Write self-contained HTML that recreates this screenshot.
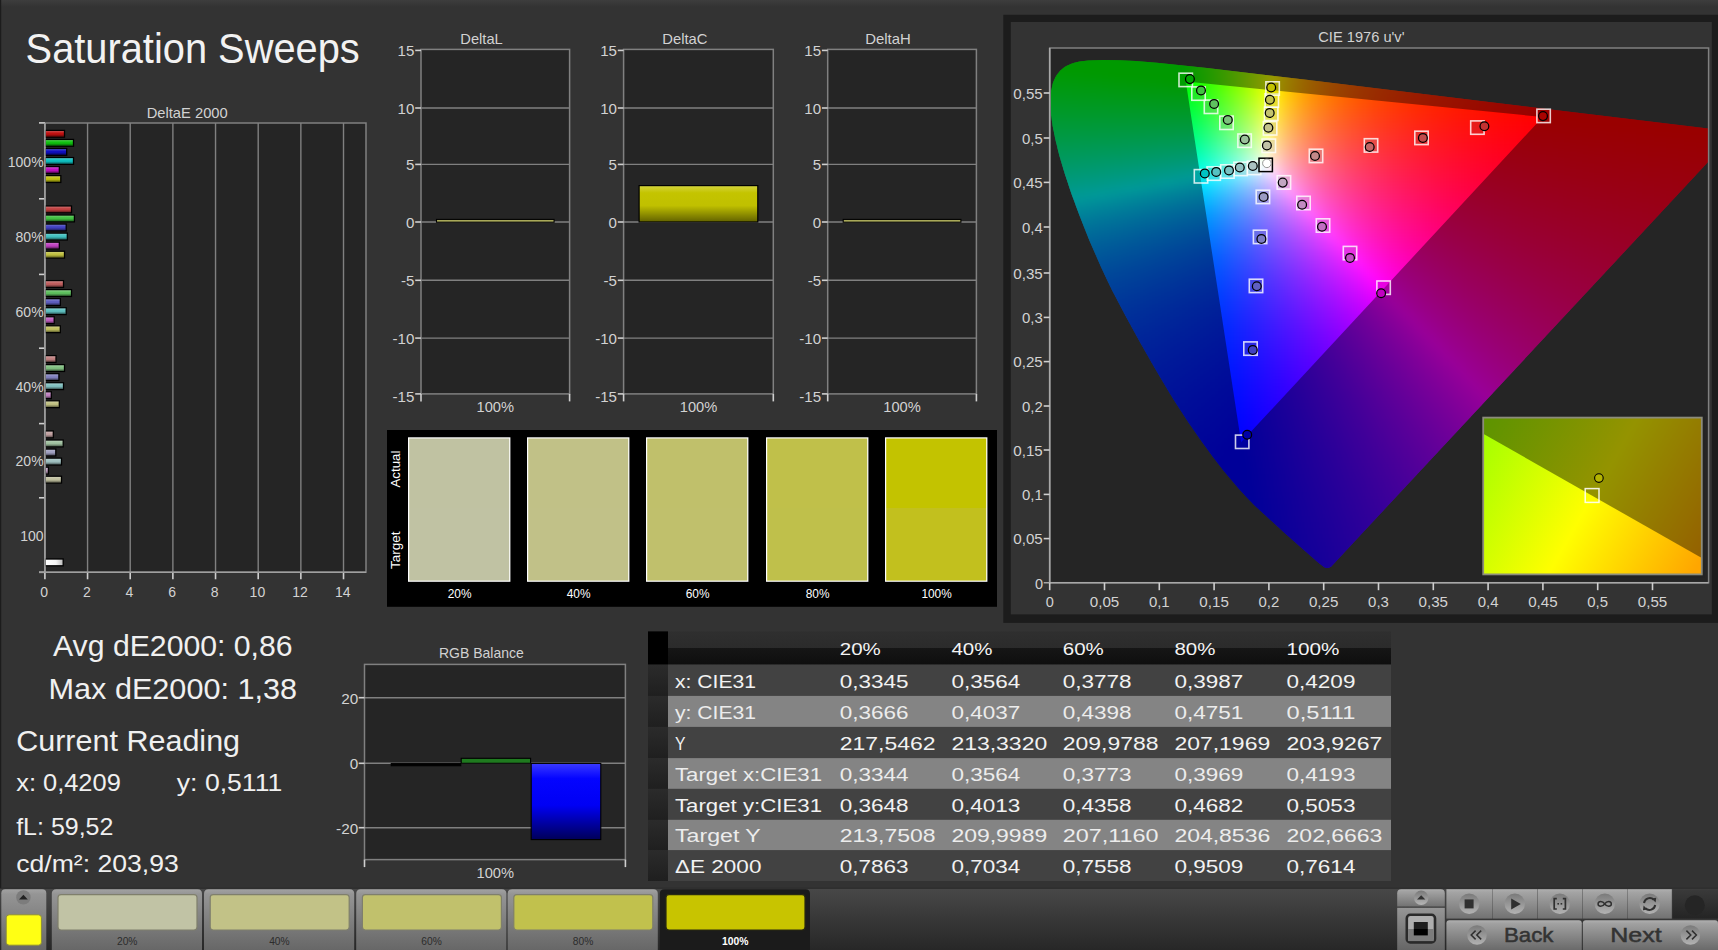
<!DOCTYPE html>
<html lang="en"><head><meta charset="utf-8"><title>Saturation Sweeps</title>
<style>html,body{margin:0;padding:0;background:#333333;overflow:hidden}svg{display:block}</style>
</head><body>
<svg width="1718" height="950" viewBox="0 0 1718 950" font-family='"Liberation Sans", "DejaVu Sans", sans-serif' shape-rendering="auto">
<defs>
<linearGradient id="topg" x1="0" y1="0" x2="0" y2="1"><stop offset="0" stop-color="#3d3d3d"/><stop offset="1" stop-color="#333333"/></linearGradient>
<linearGradient id="barsh" x1="0" y1="0" x2="0" y2="1"><stop offset="0" stop-color="#fff" stop-opacity=".25"/><stop offset=".4" stop-color="#fff" stop-opacity="0"/><stop offset=".6" stop-color="#000" stop-opacity=".05"/><stop offset="1" stop-color="#000" stop-opacity=".5"/></linearGradient>
<linearGradient id="whsh" x1="0" y1="0" x2="1" y2="0"><stop offset="0" stop-color="#fff"/><stop offset=".6" stop-color="#f4f4f4"/><stop offset="1" stop-color="#b8b8b8"/></linearGradient>
<linearGradient id="ybar" x1="0" y1="0" x2="0" y2="1"><stop offset="0" stop-color="#d4d440"/><stop offset=".2" stop-color="#c4c400"/><stop offset=".55" stop-color="#c0c000"/><stop offset="1" stop-color="#626200"/></linearGradient>
<clipPath id="plotc"><rect x="1050.4" y="48.7" width="657.5" height="533.3"/></clipPath>
<clipPath id="locc"><path d="M1324.8 567.0L1326.8 567.9L1328.9 568.1L1330.5 567.6L1332.2 566.4L1729.5 140.0L1730.7 138.1L1731.0 135.9L1730.5 133.8L1729.1 132.1L1727.7 131.2L1726.2 130.7L1303.0 79.3L1207.9 68.0L1157.8 62.7L1136.5 61.0L1120.2 60.2L1104.5 60.0L1089.1 60.6L1080.4 61.6L1075.2 62.7L1072.3 63.7L1067.8 65.7L1065.5 67.0L1063.0 68.9L1061.0 70.8L1057.8 74.8L1056.2 77.4L1054.7 80.7L1053.6 83.8L1052.1 90.4L1051.6 94.4L1051.2 103.3L1051.9 113.9L1053.5 125.8L1056.3 139.6L1060.2 155.4L1065.6 173.6L1072.4 193.9L1080.6 216.1L1090.0 239.8L1100.9 264.8L1106.8 277.5L1113.1 290.4L1126.5 316.1L1140.5 341.6L1154.6 366.3L1168.5 389.7L1175.4 400.9L1188.7 421.4L1201.5 439.9L1213.5 456.4L1224.7 470.9L1239.5 488.5L1247.8 497.6L1255.5 505.4L1286.6 534.1L1319.3 562.7Z"/></clipPath>
<filter id="blr" x="-5%" y="-5%" width="110%" height="110%" color-interpolation-filters="sRGB"><feGaussianBlur stdDeviation="3.2"/></filter>
<linearGradient id="insg" gradientUnits="userSpaceOnUse" x1="1483" y1="434" x2="1702" y2="558"><stop offset="0" stop-color="#a4ff00"/><stop offset=".5" stop-color="#fffe00"/><stop offset="1" stop-color="#ffa600"/></linearGradient>
<linearGradient id="bbar" x1="0" y1="0" x2="0" y2="1"><stop offset="0" stop-color="#3a3aff"/><stop offset=".2" stop-color="#0404ff"/><stop offset=".55" stop-color="#0000f4"/><stop offset="1" stop-color="#000058"/></linearGradient>
<linearGradient id="hdrg" x1="0" y1="0" x2="0" y2="1"><stop offset="0" stop-color="#2f2f2f"/><stop offset=".5" stop-color="#2b2b2b"/><stop offset=".5" stop-color="#161616"/><stop offset="1" stop-color="#0e0e0e"/></linearGradient>
<linearGradient id="rowh" x1="0" y1="0" x2="0" y2="1"><stop offset="0" stop-color="#2b2b2b"/><stop offset="1" stop-color="#1f1f1f"/></linearGradient>
<linearGradient id="botg" x1="0" y1="0" x2="0" y2="1"><stop offset="0" stop-color="#484848"/><stop offset="1" stop-color="#272727"/></linearGradient>
<linearGradient id="tabg" x1="0" y1="0" x2="0" y2="1"><stop offset="0" stop-color="#a2a2a2"/><stop offset=".08" stop-color="#959595"/><stop offset="1" stop-color="#676767"/></linearGradient>
<linearGradient id="btng" x1="0" y1="0" x2="0" y2="1"><stop offset="0" stop-color="#b0b0b0"/><stop offset=".1" stop-color="#a4a4a4"/><stop offset="1" stop-color="#727272"/></linearGradient>
<linearGradient id="btng2" x1="0" y1="0" x2="0" y2="1"><stop offset="0" stop-color="#b0b0b0"/><stop offset=".12" stop-color="#a0a0a0"/><stop offset="1" stop-color="#6a6a6a"/></linearGradient>
<linearGradient id="circg" x1="0" y1="0" x2="0" y2="1"><stop offset="0" stop-color="#787878"/><stop offset="1" stop-color="#b6b6b6"/></linearGradient>
<linearGradient id="darkb" x1="0" y1="0" x2="0" y2="1"><stop offset="0" stop-color="#3a3a3a"/><stop offset="1" stop-color="#242424"/></linearGradient>
<linearGradient id="btng3" x1="0" y1="0" x2="0" y2="1"><stop offset="0" stop-color="#969696"/><stop offset="1" stop-color="#666"/></linearGradient>
</defs>
<rect width="1718" height="950" fill="#333333"/>
<rect x="0.00" y="0.00" width="1718.00" height="7.00" fill="url(#topg)"/>
<rect x="0.00" y="0.00" width="1.20" height="950.00" fill="#1c1c1c"/>
<text x="25.6" y="62.9" font-size="43.2" fill="#f2f2f2" textLength="334.1" lengthAdjust="spacingAndGlyphs">Saturation Sweeps</text>
<rect x="44.90" y="122.90" width="321.10" height="449.40" fill="#252525"/>
<line x1="87.56" y1="122.90" x2="87.56" y2="572.30" stroke="#808080" stroke-width="1.4"/>
<line x1="130.22" y1="122.90" x2="130.22" y2="572.30" stroke="#808080" stroke-width="1.4"/>
<line x1="172.88" y1="122.90" x2="172.88" y2="572.30" stroke="#808080" stroke-width="1.4"/>
<line x1="215.54" y1="122.90" x2="215.54" y2="572.30" stroke="#808080" stroke-width="1.4"/>
<line x1="258.20" y1="122.90" x2="258.20" y2="572.30" stroke="#808080" stroke-width="1.4"/>
<line x1="300.86" y1="122.90" x2="300.86" y2="572.30" stroke="#808080" stroke-width="1.4"/>
<line x1="343.52" y1="122.90" x2="343.52" y2="572.30" stroke="#808080" stroke-width="1.4"/>
<path d="M44.9 572.3V122.9H366.0V572.3Z" fill="none" stroke="#808080" stroke-width="1.5"/>
<text x="146.7" y="117.6" font-size="14.5" fill="#d2d2d2" textLength="81.0" lengthAdjust="spacingAndGlyphs">DeltaE 2000</text>
<line x1="39.00" y1="122.90" x2="44.90" y2="122.90" stroke="#cfcfcf" stroke-width="1.6"/>
<line x1="39.00" y1="198.80" x2="44.90" y2="198.80" stroke="#cfcfcf" stroke-width="1.6"/>
<line x1="39.00" y1="274.40" x2="44.90" y2="274.40" stroke="#cfcfcf" stroke-width="1.6"/>
<line x1="39.00" y1="348.20" x2="44.90" y2="348.20" stroke="#cfcfcf" stroke-width="1.6"/>
<line x1="39.00" y1="423.60" x2="44.90" y2="423.60" stroke="#cfcfcf" stroke-width="1.6"/>
<line x1="39.00" y1="497.80" x2="44.90" y2="497.80" stroke="#cfcfcf" stroke-width="1.6"/>
<line x1="39.00" y1="572.30" x2="44.90" y2="572.30" stroke="#cfcfcf" stroke-width="1.6"/>
<line x1="44.90" y1="572.30" x2="44.90" y2="579.30" stroke="#cfcfcf" stroke-width="1.6"/>
<text x="44.1" y="597.2" font-size="14" fill="#d2d2d2" text-anchor="middle">0</text>
<line x1="87.56" y1="572.30" x2="87.56" y2="579.30" stroke="#cfcfcf" stroke-width="1.6"/>
<text x="86.8" y="597.2" font-size="14" fill="#d2d2d2" text-anchor="middle">2</text>
<line x1="130.22" y1="572.30" x2="130.22" y2="579.30" stroke="#cfcfcf" stroke-width="1.6"/>
<text x="129.4" y="597.2" font-size="14" fill="#d2d2d2" text-anchor="middle">4</text>
<line x1="172.88" y1="572.30" x2="172.88" y2="579.30" stroke="#cfcfcf" stroke-width="1.6"/>
<text x="172.1" y="597.2" font-size="14" fill="#d2d2d2" text-anchor="middle">6</text>
<line x1="215.54" y1="572.30" x2="215.54" y2="579.30" stroke="#cfcfcf" stroke-width="1.6"/>
<text x="214.7" y="597.2" font-size="14" fill="#d2d2d2" text-anchor="middle">8</text>
<line x1="258.20" y1="572.30" x2="258.20" y2="579.30" stroke="#cfcfcf" stroke-width="1.6"/>
<text x="257.4" y="597.2" font-size="14" fill="#d2d2d2" text-anchor="middle">10</text>
<line x1="300.86" y1="572.30" x2="300.86" y2="579.30" stroke="#cfcfcf" stroke-width="1.6"/>
<text x="300.1" y="597.2" font-size="14" fill="#d2d2d2" text-anchor="middle">12</text>
<line x1="343.52" y1="572.30" x2="343.52" y2="579.30" stroke="#cfcfcf" stroke-width="1.6"/>
<text x="342.7" y="597.2" font-size="14" fill="#d2d2d2" text-anchor="middle">14</text>
<text x="43.6" y="166.5" font-size="14" fill="#d2d2d2" text-anchor="end">100%</text>
<text x="43.6" y="242.2" font-size="14" fill="#d2d2d2" text-anchor="end">80%</text>
<text x="43.6" y="316.9" font-size="14" fill="#d2d2d2" text-anchor="end">60%</text>
<text x="43.6" y="391.5" font-size="14" fill="#d2d2d2" text-anchor="end">40%</text>
<text x="43.6" y="466.3" font-size="14" fill="#d2d2d2" text-anchor="end">20%</text>
<text x="43.6" y="540.6" font-size="14" fill="#d2d2d2" text-anchor="end">100</text>
<rect x="45.1" y="130.40" width="19.4" height="6.8" fill="#c00f0f" stroke="#000" stroke-width="1.3"/>
<rect x="45.7" y="131.00" width="18.2" height="5.6" fill="url(#barsh)"/>
<rect x="45.1" y="139.45" width="28.4" height="6.8" fill="#0fc00f" stroke="#000" stroke-width="1.3"/>
<rect x="45.7" y="140.05" width="27.2" height="5.6" fill="url(#barsh)"/>
<rect x="45.1" y="148.50" width="21.6" height="6.8" fill="#0f0fc0" stroke="#000" stroke-width="1.3"/>
<rect x="45.7" y="149.10" width="20.4" height="5.6" fill="url(#barsh)"/>
<rect x="45.1" y="157.55" width="28.4" height="6.8" fill="#0fc0c0" stroke="#000" stroke-width="1.3"/>
<rect x="45.7" y="158.15" width="27.2" height="5.6" fill="url(#barsh)"/>
<rect x="45.1" y="166.60" width="14.2" height="6.8" fill="#c00fc0" stroke="#000" stroke-width="1.3"/>
<rect x="45.7" y="167.20" width="13.0" height="5.6" fill="url(#barsh)"/>
<rect x="45.1" y="175.65" width="15.7" height="6.8" fill="#c0c00f" stroke="#000" stroke-width="1.3"/>
<rect x="45.7" y="176.25" width="14.5" height="5.6" fill="url(#barsh)"/>
<rect x="45.1" y="206.00" width="26.4" height="6.8" fill="#c03f3f" stroke="#000" stroke-width="1.3"/>
<rect x="45.7" y="206.60" width="25.2" height="5.6" fill="url(#barsh)"/>
<rect x="45.1" y="215.05" width="29.3" height="6.8" fill="#3fc03f" stroke="#000" stroke-width="1.3"/>
<rect x="45.7" y="215.65" width="28.1" height="5.6" fill="url(#barsh)"/>
<rect x="45.1" y="224.10" width="21.1" height="6.8" fill="#3f3fc0" stroke="#000" stroke-width="1.3"/>
<rect x="45.7" y="224.70" width="19.9" height="5.6" fill="url(#barsh)"/>
<rect x="45.1" y="233.15" width="22.2" height="6.8" fill="#3fc0c0" stroke="#000" stroke-width="1.3"/>
<rect x="45.7" y="233.75" width="21.0" height="5.6" fill="url(#barsh)"/>
<rect x="45.1" y="242.20" width="14.2" height="6.8" fill="#c03fc0" stroke="#000" stroke-width="1.3"/>
<rect x="45.7" y="242.80" width="13.0" height="5.6" fill="url(#barsh)"/>
<rect x="45.1" y="251.25" width="19.4" height="6.8" fill="#c0c03f" stroke="#000" stroke-width="1.3"/>
<rect x="45.7" y="251.85" width="18.2" height="5.6" fill="url(#barsh)"/>
<rect x="45.1" y="280.60" width="18.4" height="6.8" fill="#c05e5e" stroke="#000" stroke-width="1.3"/>
<rect x="45.7" y="281.20" width="17.2" height="5.6" fill="url(#barsh)"/>
<rect x="45.1" y="289.65" width="26.4" height="6.8" fill="#5ec05e" stroke="#000" stroke-width="1.3"/>
<rect x="45.7" y="290.25" width="25.2" height="5.6" fill="url(#barsh)"/>
<rect x="45.1" y="298.70" width="15.2" height="6.8" fill="#5e5ec0" stroke="#000" stroke-width="1.3"/>
<rect x="45.7" y="299.30" width="14.0" height="5.6" fill="url(#barsh)"/>
<rect x="45.1" y="307.75" width="21.1" height="6.8" fill="#5ec0c0" stroke="#000" stroke-width="1.3"/>
<rect x="45.7" y="308.35" width="19.9" height="5.6" fill="url(#barsh)"/>
<rect x="45.1" y="316.80" width="9.1" height="6.8" fill="#c05ec0" stroke="#000" stroke-width="1.3"/>
<rect x="45.7" y="317.40" width="7.9" height="5.6" fill="url(#barsh)"/>
<rect x="45.1" y="325.85" width="15.2" height="6.8" fill="#c0c05e" stroke="#000" stroke-width="1.3"/>
<rect x="45.7" y="326.45" width="14.0" height="5.6" fill="url(#barsh)"/>
<rect x="45.1" y="355.60" width="10.9" height="6.8" fill="#c08181" stroke="#000" stroke-width="1.3"/>
<rect x="45.7" y="356.20" width="9.7" height="5.6" fill="url(#barsh)"/>
<rect x="45.1" y="364.65" width="19.4" height="6.8" fill="#81c081" stroke="#000" stroke-width="1.3"/>
<rect x="45.7" y="365.25" width="18.2" height="5.6" fill="url(#barsh)"/>
<rect x="45.1" y="373.70" width="13.8" height="6.8" fill="#8181c0" stroke="#000" stroke-width="1.3"/>
<rect x="45.7" y="374.30" width="12.6" height="5.6" fill="url(#barsh)"/>
<rect x="45.1" y="382.75" width="18.4" height="6.8" fill="#81c0c0" stroke="#000" stroke-width="1.3"/>
<rect x="45.7" y="383.35" width="17.2" height="5.6" fill="url(#barsh)"/>
<rect x="45.1" y="391.80" width="6.2" height="6.8" fill="#c081c0" stroke="#000" stroke-width="1.3"/>
<rect x="45.7" y="392.40" width="5.0" height="5.6" fill="url(#barsh)"/>
<rect x="45.1" y="400.85" width="14.2" height="6.8" fill="#c0c081" stroke="#000" stroke-width="1.3"/>
<rect x="45.7" y="401.45" width="13.0" height="5.6" fill="url(#barsh)"/>
<rect x="45.1" y="431.00" width="8.2" height="6.8" fill="#c09f9f" stroke="#000" stroke-width="1.3"/>
<rect x="45.7" y="431.60" width="7.0" height="5.6" fill="url(#barsh)"/>
<rect x="45.1" y="440.05" width="18.1" height="6.8" fill="#9fc09f" stroke="#000" stroke-width="1.3"/>
<rect x="45.7" y="440.65" width="16.9" height="5.6" fill="url(#barsh)"/>
<rect x="45.1" y="449.10" width="10.7" height="6.8" fill="#9f9fc0" stroke="#000" stroke-width="1.3"/>
<rect x="45.7" y="449.70" width="9.5" height="5.6" fill="url(#barsh)"/>
<rect x="45.1" y="458.15" width="16.4" height="6.8" fill="#9fc0c0" stroke="#000" stroke-width="1.3"/>
<rect x="45.7" y="458.75" width="15.2" height="5.6" fill="url(#barsh)"/>
<rect x="45.1" y="467.20" width="3.3" height="6.8" fill="#c09fc0" stroke="#000" stroke-width="1.3"/>
<rect x="45.7" y="467.80" width="2.1" height="5.6" fill="url(#barsh)"/>
<rect x="45.1" y="476.25" width="16.4" height="6.8" fill="#c0c09f" stroke="#000" stroke-width="1.3"/>
<rect x="45.7" y="476.85" width="15.2" height="5.6" fill="url(#barsh)"/>
<rect x="45.1" y="559.0" width="18.1" height="6.8" fill="url(#whsh)" stroke="#000" stroke-width="1.3"/>
<line x1="44.90" y1="122.90" x2="44.90" y2="572.30" stroke="#a0a0a0" stroke-width="1.6"/>
<line x1="39.00" y1="572.30" x2="366.00" y2="572.30" stroke="#a0a0a0" stroke-width="1.6"/>
<rect x="421.00" y="49.40" width="148.60" height="344.50" fill="#252525"/>
<line x1="421.00" y1="108.00" x2="569.60" y2="108.00" stroke="#808080" stroke-width="1.4"/>
<line x1="421.00" y1="164.40" x2="569.60" y2="164.40" stroke="#808080" stroke-width="1.4"/>
<line x1="421.00" y1="222.00" x2="569.60" y2="222.00" stroke="#808080" stroke-width="1.4"/>
<line x1="421.00" y1="280.30" x2="569.60" y2="280.30" stroke="#808080" stroke-width="1.4"/>
<line x1="421.00" y1="338.10" x2="569.60" y2="338.10" stroke="#808080" stroke-width="1.4"/>
<rect x="421.0" y="49.4" width="148.6" height="344.5" fill="none" stroke="#808080" stroke-width="1.5"/>
<line x1="415.20" y1="50.40" x2="421.00" y2="50.40" stroke="#cfcfcf" stroke-width="1.6"/>
<text x="414.4" y="56.1" font-size="15.1" fill="#d2d2d2" text-anchor="end">15</text>
<line x1="415.20" y1="108.00" x2="421.00" y2="108.00" stroke="#cfcfcf" stroke-width="1.6"/>
<text x="414.4" y="113.7" font-size="15.1" fill="#d2d2d2" text-anchor="end">10</text>
<line x1="415.20" y1="164.40" x2="421.00" y2="164.40" stroke="#cfcfcf" stroke-width="1.6"/>
<text x="414.4" y="170.1" font-size="15.1" fill="#d2d2d2" text-anchor="end">5</text>
<line x1="415.20" y1="222.00" x2="421.00" y2="222.00" stroke="#cfcfcf" stroke-width="1.6"/>
<text x="414.4" y="227.7" font-size="15.1" fill="#d2d2d2" text-anchor="end">0</text>
<line x1="415.20" y1="280.30" x2="421.00" y2="280.30" stroke="#cfcfcf" stroke-width="1.6"/>
<text x="414.4" y="286.0" font-size="15.1" fill="#d2d2d2" text-anchor="end">-5</text>
<line x1="415.20" y1="338.10" x2="421.00" y2="338.10" stroke="#cfcfcf" stroke-width="1.6"/>
<text x="414.4" y="343.8" font-size="15.1" fill="#d2d2d2" text-anchor="end">-10</text>
<line x1="415.20" y1="393.90" x2="421.00" y2="393.90" stroke="#cfcfcf" stroke-width="1.6"/>
<text x="414.4" y="402.4" font-size="15.1" fill="#d2d2d2" text-anchor="end">-15</text>
<line x1="421.00" y1="393.90" x2="421.00" y2="401.40" stroke="#cfcfcf" stroke-width="1.6"/>
<line x1="569.60" y1="393.90" x2="569.60" y2="401.40" stroke="#cfcfcf" stroke-width="1.6"/>
<text x="495.3" y="411.9" font-size="15" fill="#d2d2d2" text-anchor="middle" textLength="37.5" lengthAdjust="spacingAndGlyphs">100%</text>
<text x="460.3" y="43.8" font-size="15" fill="#d2d2d2" textLength="42.4" lengthAdjust="spacingAndGlyphs">DeltaL</text>
<rect x="436.5" y="219.4" width="117.6" height="2.8" fill="#a9a95a" stroke="#000" stroke-width="1.1"/>
<rect x="623.60" y="49.40" width="149.70" height="344.50" fill="#252525"/>
<line x1="623.60" y1="108.00" x2="773.30" y2="108.00" stroke="#808080" stroke-width="1.4"/>
<line x1="623.60" y1="164.40" x2="773.30" y2="164.40" stroke="#808080" stroke-width="1.4"/>
<line x1="623.60" y1="222.00" x2="773.30" y2="222.00" stroke="#808080" stroke-width="1.4"/>
<line x1="623.60" y1="280.30" x2="773.30" y2="280.30" stroke="#808080" stroke-width="1.4"/>
<line x1="623.60" y1="338.10" x2="773.30" y2="338.10" stroke="#808080" stroke-width="1.4"/>
<rect x="623.6" y="49.4" width="149.7" height="344.5" fill="none" stroke="#808080" stroke-width="1.5"/>
<line x1="617.80" y1="50.40" x2="623.60" y2="50.40" stroke="#cfcfcf" stroke-width="1.6"/>
<text x="617.0" y="56.1" font-size="15.1" fill="#d2d2d2" text-anchor="end">15</text>
<line x1="617.80" y1="108.00" x2="623.60" y2="108.00" stroke="#cfcfcf" stroke-width="1.6"/>
<text x="617.0" y="113.7" font-size="15.1" fill="#d2d2d2" text-anchor="end">10</text>
<line x1="617.80" y1="164.40" x2="623.60" y2="164.40" stroke="#cfcfcf" stroke-width="1.6"/>
<text x="617.0" y="170.1" font-size="15.1" fill="#d2d2d2" text-anchor="end">5</text>
<line x1="617.80" y1="222.00" x2="623.60" y2="222.00" stroke="#cfcfcf" stroke-width="1.6"/>
<text x="617.0" y="227.7" font-size="15.1" fill="#d2d2d2" text-anchor="end">0</text>
<line x1="617.80" y1="280.30" x2="623.60" y2="280.30" stroke="#cfcfcf" stroke-width="1.6"/>
<text x="617.0" y="286.0" font-size="15.1" fill="#d2d2d2" text-anchor="end">-5</text>
<line x1="617.80" y1="338.10" x2="623.60" y2="338.10" stroke="#cfcfcf" stroke-width="1.6"/>
<text x="617.0" y="343.8" font-size="15.1" fill="#d2d2d2" text-anchor="end">-10</text>
<line x1="617.80" y1="393.90" x2="623.60" y2="393.90" stroke="#cfcfcf" stroke-width="1.6"/>
<text x="617.0" y="402.4" font-size="15.1" fill="#d2d2d2" text-anchor="end">-15</text>
<line x1="623.60" y1="393.90" x2="623.60" y2="401.40" stroke="#cfcfcf" stroke-width="1.6"/>
<line x1="773.30" y1="393.90" x2="773.30" y2="401.40" stroke="#cfcfcf" stroke-width="1.6"/>
<text x="698.5" y="411.9" font-size="15" fill="#d2d2d2" text-anchor="middle" textLength="37.5" lengthAdjust="spacingAndGlyphs">100%</text>
<text x="662.3" y="43.8" font-size="15" fill="#d2d2d2" textLength="45.2" lengthAdjust="spacingAndGlyphs">DeltaC</text>
<rect x="639.1" y="185.6" width="118.7" height="36.4" fill="url(#ybar)" stroke="#000" stroke-width="1.2"/>
<rect x="827.70" y="49.40" width="148.70" height="344.50" fill="#252525"/>
<line x1="827.70" y1="108.00" x2="976.40" y2="108.00" stroke="#808080" stroke-width="1.4"/>
<line x1="827.70" y1="164.40" x2="976.40" y2="164.40" stroke="#808080" stroke-width="1.4"/>
<line x1="827.70" y1="222.00" x2="976.40" y2="222.00" stroke="#808080" stroke-width="1.4"/>
<line x1="827.70" y1="280.30" x2="976.40" y2="280.30" stroke="#808080" stroke-width="1.4"/>
<line x1="827.70" y1="338.10" x2="976.40" y2="338.10" stroke="#808080" stroke-width="1.4"/>
<rect x="827.7" y="49.4" width="148.7" height="344.5" fill="none" stroke="#808080" stroke-width="1.5"/>
<line x1="821.90" y1="50.40" x2="827.70" y2="50.40" stroke="#cfcfcf" stroke-width="1.6"/>
<text x="821.1" y="56.1" font-size="15.1" fill="#d2d2d2" text-anchor="end">15</text>
<line x1="821.90" y1="108.00" x2="827.70" y2="108.00" stroke="#cfcfcf" stroke-width="1.6"/>
<text x="821.1" y="113.7" font-size="15.1" fill="#d2d2d2" text-anchor="end">10</text>
<line x1="821.90" y1="164.40" x2="827.70" y2="164.40" stroke="#cfcfcf" stroke-width="1.6"/>
<text x="821.1" y="170.1" font-size="15.1" fill="#d2d2d2" text-anchor="end">5</text>
<line x1="821.90" y1="222.00" x2="827.70" y2="222.00" stroke="#cfcfcf" stroke-width="1.6"/>
<text x="821.1" y="227.7" font-size="15.1" fill="#d2d2d2" text-anchor="end">0</text>
<line x1="821.90" y1="280.30" x2="827.70" y2="280.30" stroke="#cfcfcf" stroke-width="1.6"/>
<text x="821.1" y="286.0" font-size="15.1" fill="#d2d2d2" text-anchor="end">-5</text>
<line x1="821.90" y1="338.10" x2="827.70" y2="338.10" stroke="#cfcfcf" stroke-width="1.6"/>
<text x="821.1" y="343.8" font-size="15.1" fill="#d2d2d2" text-anchor="end">-10</text>
<line x1="821.90" y1="393.90" x2="827.70" y2="393.90" stroke="#cfcfcf" stroke-width="1.6"/>
<text x="821.1" y="402.4" font-size="15.1" fill="#d2d2d2" text-anchor="end">-15</text>
<line x1="827.70" y1="393.90" x2="827.70" y2="401.40" stroke="#cfcfcf" stroke-width="1.6"/>
<line x1="976.40" y1="393.90" x2="976.40" y2="401.40" stroke="#cfcfcf" stroke-width="1.6"/>
<text x="902.0" y="411.9" font-size="15" fill="#d2d2d2" text-anchor="middle" textLength="37.5" lengthAdjust="spacingAndGlyphs">100%</text>
<text x="865.2" y="43.8" font-size="15" fill="#d2d2d2" textLength="45.6" lengthAdjust="spacingAndGlyphs">DeltaH</text>
<rect x="843.2" y="219.4" width="117.7" height="2.8" fill="#a9a95a" stroke="#000" stroke-width="1.1"/>
<rect x="387.00" y="430.00" width="610.00" height="176.80" fill="#000"/>
<rect x="408.00" y="437.30" width="102.40" height="144.50" fill="#fff"/>
<rect x="409.20" y="438.50" width="100.00" height="69.50" fill="#c0c2a2"/>
<rect x="409.20" y="508.00" width="100.00" height="72.60" fill="#c0c2a3"/>
<text x="459.6" y="598.3" font-size="13.5" fill="#fff" text-anchor="middle" textLength="23.8" lengthAdjust="spacingAndGlyphs">20%</text>
<rect x="527.00" y="437.30" width="102.40" height="144.50" fill="#fff"/>
<rect x="528.20" y="438.50" width="100.00" height="69.50" fill="#c1c187"/>
<rect x="528.20" y="508.00" width="100.00" height="72.60" fill="#c1c188"/>
<text x="578.6" y="598.3" font-size="13.5" fill="#fff" text-anchor="middle" textLength="23.8" lengthAdjust="spacingAndGlyphs">40%</text>
<rect x="646.00" y="437.30" width="102.40" height="144.50" fill="#fff"/>
<rect x="647.20" y="438.50" width="100.00" height="69.50" fill="#c0c06b"/>
<rect x="647.20" y="508.00" width="100.00" height="72.60" fill="#c0c06c"/>
<text x="697.6" y="598.3" font-size="13.5" fill="#fff" text-anchor="middle" textLength="23.8" lengthAdjust="spacingAndGlyphs">60%</text>
<rect x="766.00" y="437.30" width="102.40" height="144.50" fill="#fff"/>
<rect x="767.20" y="438.50" width="100.00" height="69.50" fill="#c0c04a"/>
<rect x="767.20" y="508.00" width="100.00" height="72.60" fill="#bfc04b"/>
<text x="817.6" y="598.3" font-size="13.5" fill="#fff" text-anchor="middle" textLength="23.8" lengthAdjust="spacingAndGlyphs">80%</text>
<rect x="885.00" y="437.30" width="102.40" height="144.50" fill="#fff"/>
<rect x="886.20" y="438.50" width="100.00" height="69.50" fill="#c3c300"/>
<rect x="886.20" y="508.00" width="100.00" height="72.60" fill="#c2c01e"/>
<text x="936.6" y="598.3" font-size="13.5" fill="#fff" text-anchor="middle" textLength="30.3" lengthAdjust="spacingAndGlyphs">100%</text>
<text transform="translate(400.0 487.6) rotate(-90)" font-size="13.5" fill="#fff" textLength="37" lengthAdjust="spacingAndGlyphs">Actual</text>
<text transform="translate(400.0 569.0) rotate(-90)" font-size="13.5" fill="#fff" textLength="37.5" lengthAdjust="spacingAndGlyphs">Target</text>
<rect x="1003.30" y="14.80" width="714.70" height="608.10" fill="#1c1c1c"/>
<rect x="1010.80" y="22.00" width="701.00" height="592.40" fill="#333333"/>
<rect x="1049.70" y="48.00" width="658.90" height="534.70" fill="#252525"/>
<g clip-path="url(#plotc)">
<g transform="translate(-0.9 0)">
<g clip-path="url(#locc)"><g filter="url(#blr)">
<path d="M1068 48h109v7h-109z" fill="#00ff00"/>
<path d="M1056 54h127v7h-127z" fill="#00ff00"/>
<path d="M1182 54h7v7h-7z" fill="#04ff00"/>
<path d="M1188 54h7v7h-7z" fill="#11ff00"/>
<path d="M1194 54h7v7h-7z" fill="#1fff00"/>
<path d="M1200 54h7v7h-7z" fill="#2dff00"/>
<path d="M1206 54h7v7h-7z" fill="#3bff00"/>
<path d="M1212 54h7v7h-7z" fill="#4aff00"/>
<path d="M1218 54h7v7h-7z" fill="#59ff00"/>
<path d="M1224 54h7v7h-7z" fill="#69ff00"/>
<path d="M1050 60h133v7h-133z" fill="#00ff00"/>
<path d="M1182 60h7v7h-7z" fill="#03ff00"/>
<path d="M1188 60h7v7h-7z" fill="#10ff00"/>
<path d="M1194 60h7v7h-7z" fill="#1dff00"/>
<path d="M1200 60h7v7h-7z" fill="#2bff00"/>
<path d="M1206 60h7v7h-7z" fill="#3aff00"/>
<path d="M1212 60h7v7h-7z" fill="#49ff00"/>
<path d="M1218 60h7v7h-7z" fill="#58ff00"/>
<path d="M1224 60h7v7h-7z" fill="#68ff00"/>
<path d="M1230 60h7v7h-7z" fill="#78ff00"/>
<path d="M1236 60h7v7h-7z" fill="#89ff00"/>
<path d="M1242 60h7v7h-7z" fill="#9bff00"/>
<path d="M1248 60h7v7h-7z" fill="#adff00"/>
<path d="M1254 60h7v7h-7z" fill="#c0ff00"/>
<path d="M1260 60h7v7h-7z" fill="#d4ff00"/>
<path d="M1266 60h7v7h-7z" fill="#e8ff00"/>
<path d="M1272 60h7v7h-7z" fill="#fdff00"/>
<path d="M1044 66h7v7h-7z" fill="#00ff02"/>
<path d="M1050 66h7v7h-7z" fill="#00ff01"/>
<path d="M1056 66h127v7h-127z" fill="#00ff00"/>
<path d="M1182 66h7v7h-7z" fill="#01ff00"/>
<path d="M1188 66h7v7h-7z" fill="#0eff00"/>
<path d="M1194 66h7v7h-7z" fill="#1cff00"/>
<path d="M1200 66h7v7h-7z" fill="#2aff00"/>
<path d="M1206 66h7v7h-7z" fill="#38ff00"/>
<path d="M1212 66h7v7h-7z" fill="#48ff00"/>
<path d="M1218 66h7v7h-7z" fill="#57ff00"/>
<path d="M1224 66h7v7h-7z" fill="#67ff00"/>
<path d="M1230 66h7v7h-7z" fill="#78ff00"/>
<path d="M1236 66h7v7h-7z" fill="#89ff00"/>
<path d="M1242 66h7v7h-7z" fill="#9bff00"/>
<path d="M1248 66h7v7h-7z" fill="#aeff00"/>
<path d="M1254 66h7v7h-7z" fill="#c1ff00"/>
<path d="M1260 66h7v7h-7z" fill="#d5ff00"/>
<path d="M1266 66h7v7h-7z" fill="#e9ff00"/>
<path d="M1272 66h7v7h-7z" fill="#ffff00"/>
<path d="M1278 66h7v7h-7z" fill="#ffeb00"/>
<path d="M1284 66h7v7h-7z" fill="#ffd900"/>
<path d="M1290 66h7v7h-7z" fill="#ffc900"/>
<path d="M1296 66h7v7h-7z" fill="#ffba00"/>
<path d="M1302 66h7v7h-7z" fill="#ffad00"/>
<path d="M1308 66h7v7h-7z" fill="#ffa200"/>
<path d="M1314 66h7v7h-7z" fill="#ff9700"/>
<path d="M1320 66h7v7h-7z" fill="#ff8d00"/>
<path d="M1044 72h13v7h-13z" fill="#00ff0a"/>
<path d="M1056 72h7v7h-7z" fill="#00ff09"/>
<path d="M1062 72h7v7h-7z" fill="#00ff08"/>
<path d="M1068 72h7v7h-7z" fill="#00ff07"/>
<path d="M1074 72h13v7h-13z" fill="#00ff06"/>
<path d="M1086 72h7v7h-7z" fill="#00ff05"/>
<path d="M1092 72h7v7h-7z" fill="#00ff04"/>
<path d="M1098 72h7v7h-7z" fill="#00ff03"/>
<path d="M1104 72h7v7h-7z" fill="#00ff02"/>
<path d="M1110 72h7v7h-7z" fill="#00ff01"/>
<path d="M1116 72h73v7h-73z" fill="#00ff00"/>
<path d="M1188 72h7v7h-7z" fill="#0cff00"/>
<path d="M1194 72h7v7h-7z" fill="#1aff00"/>
<path d="M1200 72h7v7h-7z" fill="#28ff00"/>
<path d="M1206 72h7v7h-7z" fill="#37ff00"/>
<path d="M1212 72h7v7h-7z" fill="#46ff00"/>
<path d="M1218 72h7v7h-7z" fill="#56ff00"/>
<path d="M1224 72h7v7h-7z" fill="#67ff00"/>
<path d="M1230 72h7v7h-7z" fill="#78ff00"/>
<path d="M1236 72h7v7h-7z" fill="#89ff00"/>
<path d="M1242 72h7v7h-7z" fill="#9bff00"/>
<path d="M1248 72h7v7h-7z" fill="#aeff00"/>
<path d="M1254 72h7v7h-7z" fill="#c2ff00"/>
<path d="M1260 72h7v7h-7z" fill="#d6ff00"/>
<path d="M1266 72h7v7h-7z" fill="#ebff00"/>
<path d="M1272 72h7v7h-7z" fill="#fffd00"/>
<path d="M1278 72h7v7h-7z" fill="#ffe900"/>
<path d="M1284 72h7v7h-7z" fill="#ffd700"/>
<path d="M1290 72h7v7h-7z" fill="#ffc700"/>
<path d="M1296 72h7v7h-7z" fill="#ffb800"/>
<path d="M1302 72h7v7h-7z" fill="#ffab00"/>
<path d="M1308 72h7v7h-7z" fill="#ff9f00"/>
<path d="M1314 72h7v7h-7z" fill="#ff9500"/>
<path d="M1320 72h7v7h-7z" fill="#ff8b00"/>
<path d="M1326 72h7v7h-7z" fill="#ff8200"/>
<path d="M1332 72h7v7h-7z" fill="#ff7a00"/>
<path d="M1338 72h7v7h-7z" fill="#ff7200"/>
<path d="M1344 72h7v7h-7z" fill="#ff6b00"/>
<path d="M1350 72h7v7h-7z" fill="#ff6500"/>
<path d="M1356 72h7v7h-7z" fill="#ff5f00"/>
<path d="M1362 72h7v7h-7z" fill="#ff5900"/>
<path d="M1368 72h7v7h-7z" fill="#ff5400"/>
<path d="M1038 78h7v7h-7z" fill="#00ff14"/>
<path d="M1044 78h13v7h-13z" fill="#00ff13"/>
<path d="M1056 78h7v7h-7z" fill="#00ff12"/>
<path d="M1062 78h13v7h-13z" fill="#00ff11"/>
<path d="M1074 78h7v7h-7z" fill="#00ff10"/>
<path d="M1080 78h7v7h-7z" fill="#00ff0f"/>
<path d="M1086 78h13v7h-13z" fill="#00ff0e"/>
<path d="M1098 78h7v7h-7z" fill="#00ff0d"/>
<path d="M1104 78h7v7h-7z" fill="#00ff0c"/>
<path d="M1110 78h7v7h-7z" fill="#00ff0b"/>
<path d="M1116 78h7v7h-7z" fill="#00ff0a"/>
<path d="M1122 78h7v7h-7z" fill="#00ff09"/>
<path d="M1128 78h13v7h-13z" fill="#00ff08"/>
<path d="M1140 78h7v7h-7z" fill="#00ff07"/>
<path d="M1146 78h7v7h-7z" fill="#00ff06"/>
<path d="M1152 78h7v7h-7z" fill="#00ff05"/>
<path d="M1158 78h7v7h-7z" fill="#00ff04"/>
<path d="M1164 78h7v7h-7z" fill="#00ff02"/>
<path d="M1170 78h7v7h-7z" fill="#00ff01"/>
<path d="M1176 78h13v7h-13z" fill="#00ff00"/>
<path d="M1188 78h7v7h-7z" fill="#0aff00"/>
<path d="M1194 78h7v7h-7z" fill="#18ff00"/>
<path d="M1200 78h7v7h-7z" fill="#27ff00"/>
<path d="M1206 78h7v7h-7z" fill="#36ff00"/>
<path d="M1212 78h7v7h-7z" fill="#45ff00"/>
<path d="M1218 78h7v7h-7z" fill="#55ff00"/>
<path d="M1224 78h7v7h-7z" fill="#66ff00"/>
<path d="M1230 78h7v7h-7z" fill="#77ff00"/>
<path d="M1236 78h7v7h-7z" fill="#89ff00"/>
<path d="M1242 78h7v7h-7z" fill="#9bff00"/>
<path d="M1248 78h7v7h-7z" fill="#afff00"/>
<path d="M1254 78h7v7h-7z" fill="#c2ff00"/>
<path d="M1260 78h7v7h-7z" fill="#d7ff00"/>
<path d="M1266 78h7v7h-7z" fill="#ecff00"/>
<path d="M1272 78h7v7h-7z" fill="#fffb00"/>
<path d="M1278 78h7v7h-7z" fill="#ffe700"/>
<path d="M1284 78h7v7h-7z" fill="#ffd500"/>
<path d="M1290 78h7v7h-7z" fill="#ffc400"/>
<path d="M1296 78h7v7h-7z" fill="#ffb600"/>
<path d="M1302 78h7v7h-7z" fill="#ffa900"/>
<path d="M1308 78h7v7h-7z" fill="#ff9d00"/>
<path d="M1314 78h7v7h-7z" fill="#ff9300"/>
<path d="M1320 78h7v7h-7z" fill="#ff8900"/>
<path d="M1326 78h7v7h-7z" fill="#ff8000"/>
<path d="M1332 78h7v7h-7z" fill="#ff7800"/>
<path d="M1338 78h7v7h-7z" fill="#ff7100"/>
<path d="M1344 78h7v7h-7z" fill="#ff6a00"/>
<path d="M1350 78h7v7h-7z" fill="#ff6300"/>
<path d="M1356 78h7v7h-7z" fill="#ff5d00"/>
<path d="M1362 78h7v7h-7z" fill="#ff5700"/>
<path d="M1368 78h7v7h-7z" fill="#ff5200"/>
<path d="M1374 78h7v7h-7z" fill="#ff4d00"/>
<path d="M1380 78h7v7h-7z" fill="#ff4900"/>
<path d="M1386 78h7v7h-7z" fill="#ff4400"/>
<path d="M1392 78h7v7h-7z" fill="#ff4000"/>
<path d="M1398 78h7v7h-7z" fill="#ff3c00"/>
<path d="M1404 78h7v7h-7z" fill="#ff3900"/>
<path d="M1410 78h7v7h-7z" fill="#ff3500"/>
<path d="M1416 78h7v7h-7z" fill="#ff3200"/>
<path d="M1422 78h7v7h-7z" fill="#ff2f00"/>
<path d="M1038 84h7v7h-7z" fill="#00ff1d"/>
<path d="M1044 84h13v7h-13z" fill="#00ff1c"/>
<path d="M1056 84h13v7h-13z" fill="#00ff1b"/>
<path d="M1068 84h13v7h-13z" fill="#00ff1a"/>
<path d="M1080 84h7v7h-7z" fill="#00ff19"/>
<path d="M1086 84h13v7h-13z" fill="#00ff18"/>
<path d="M1098 84h7v7h-7z" fill="#00ff17"/>
<path d="M1104 84h7v7h-7z" fill="#00ff16"/>
<path d="M1110 84h13v7h-13z" fill="#00ff15"/>
<path d="M1122 84h7v7h-7z" fill="#00ff14"/>
<path d="M1128 84h7v7h-7z" fill="#00ff13"/>
<path d="M1134 84h13v7h-13z" fill="#00ff12"/>
<path d="M1146 84h7v7h-7z" fill="#00ff11"/>
<path d="M1152 84h7v7h-7z" fill="#00ff10"/>
<path d="M1158 84h7v7h-7z" fill="#00ff0f"/>
<path d="M1164 84h7v7h-7z" fill="#00ff0e"/>
<path d="M1170 84h7v7h-7z" fill="#00ff0d"/>
<path d="M1176 84h7v7h-7z" fill="#00ff0c"/>
<path d="M1182 84h7v7h-7z" fill="#00ff0b"/>
<path d="M1188 84h7v7h-7z" fill="#08ff0a"/>
<path d="M1194 84h7v7h-7z" fill="#16ff09"/>
<path d="M1200 84h7v7h-7z" fill="#25ff08"/>
<path d="M1206 84h7v7h-7z" fill="#34ff07"/>
<path d="M1212 84h7v7h-7z" fill="#44ff06"/>
<path d="M1218 84h7v7h-7z" fill="#54ff04"/>
<path d="M1224 84h7v7h-7z" fill="#65ff03"/>
<path d="M1230 84h7v7h-7z" fill="#77ff02"/>
<path d="M1236 84h7v7h-7z" fill="#89ff00"/>
<path d="M1242 84h7v7h-7z" fill="#9cff00"/>
<path d="M1248 84h7v7h-7z" fill="#afff00"/>
<path d="M1254 84h7v7h-7z" fill="#c3ff00"/>
<path d="M1260 84h7v7h-7z" fill="#d8ff00"/>
<path d="M1266 84h7v7h-7z" fill="#eeff00"/>
<path d="M1272 84h7v7h-7z" fill="#fff900"/>
<path d="M1278 84h7v7h-7z" fill="#ffe500"/>
<path d="M1284 84h7v7h-7z" fill="#ffd200"/>
<path d="M1290 84h7v7h-7z" fill="#ffc200"/>
<path d="M1296 84h7v7h-7z" fill="#ffb400"/>
<path d="M1302 84h7v7h-7z" fill="#ffa700"/>
<path d="M1308 84h7v7h-7z" fill="#ff9b00"/>
<path d="M1314 84h7v7h-7z" fill="#ff9100"/>
<path d="M1320 84h7v7h-7z" fill="#ff8700"/>
<path d="M1326 84h7v7h-7z" fill="#ff7e00"/>
<path d="M1332 84h7v7h-7z" fill="#ff7600"/>
<path d="M1338 84h7v7h-7z" fill="#ff6f00"/>
<path d="M1344 84h7v7h-7z" fill="#ff6800"/>
<path d="M1350 84h7v7h-7z" fill="#ff6100"/>
<path d="M1356 84h7v7h-7z" fill="#ff5b00"/>
<path d="M1362 84h7v7h-7z" fill="#ff5600"/>
<path d="M1368 84h7v7h-7z" fill="#ff5000"/>
<path d="M1374 84h7v7h-7z" fill="#ff4c00"/>
<path d="M1380 84h7v7h-7z" fill="#ff4700"/>
<path d="M1386 84h7v7h-7z" fill="#ff4300"/>
<path d="M1392 84h7v7h-7z" fill="#ff3f00"/>
<path d="M1398 84h7v7h-7z" fill="#ff3b00"/>
<path d="M1404 84h7v7h-7z" fill="#ff3700"/>
<path d="M1410 84h7v7h-7z" fill="#ff3400"/>
<path d="M1416 84h7v7h-7z" fill="#ff3000"/>
<path d="M1422 84h7v7h-7z" fill="#ff2d00"/>
<path d="M1428 84h7v7h-7z" fill="#ff2a00"/>
<path d="M1434 84h7v7h-7z" fill="#ff2800"/>
<path d="M1440 84h7v7h-7z" fill="#ff2500"/>
<path d="M1446 84h7v7h-7z" fill="#ff2200"/>
<path d="M1452 84h7v7h-7z" fill="#ff2000"/>
<path d="M1458 84h7v7h-7z" fill="#ff1e00"/>
<path d="M1464 84h7v7h-7z" fill="#ff1c00"/>
<path d="M1470 84h7v7h-7z" fill="#ff1900"/>
<path d="M1038 90h13v7h-13z" fill="#00ff26"/>
<path d="M1050 90h13v7h-13z" fill="#00ff25"/>
<path d="M1062 90h13v7h-13z" fill="#00ff24"/>
<path d="M1074 90h13v7h-13z" fill="#00ff23"/>
<path d="M1086 90h13v7h-13z" fill="#00ff22"/>
<path d="M1098 90h13v7h-13z" fill="#00ff21"/>
<path d="M1110 90h7v7h-7z" fill="#00ff20"/>
<path d="M1116 90h13v7h-13z" fill="#00ff1f"/>
<path d="M1128 90h13v7h-13z" fill="#00ff1e"/>
<path d="M1140 90h7v7h-7z" fill="#00ff1d"/>
<path d="M1146 90h7v7h-7z" fill="#00ff1c"/>
<path d="M1152 90h13v7h-13z" fill="#00ff1b"/>
<path d="M1164 90h7v7h-7z" fill="#00ff1a"/>
<path d="M1170 90h7v7h-7z" fill="#00ff19"/>
<path d="M1176 90h13v7h-13z" fill="#00ff18"/>
<path d="M1188 90h7v7h-7z" fill="#06ff17"/>
<path d="M1194 90h7v7h-7z" fill="#15ff16"/>
<path d="M1200 90h7v7h-7z" fill="#23ff15"/>
<path d="M1206 90h7v7h-7z" fill="#33ff14"/>
<path d="M1212 90h7v7h-7z" fill="#43ff13"/>
<path d="M1218 90h7v7h-7z" fill="#53ff12"/>
<path d="M1224 90h7v7h-7z" fill="#65ff11"/>
<path d="M1230 90h7v7h-7z" fill="#76ff10"/>
<path d="M1236 90h7v7h-7z" fill="#89ff0f"/>
<path d="M1242 90h7v7h-7z" fill="#9cff0e"/>
<path d="M1248 90h7v7h-7z" fill="#b0ff0c"/>
<path d="M1254 90h7v7h-7z" fill="#c4ff0b"/>
<path d="M1260 90h7v7h-7z" fill="#daff0a"/>
<path d="M1266 90h7v7h-7z" fill="#f0ff08"/>
<path d="M1272 90h7v7h-7z" fill="#fff707"/>
<path d="M1278 90h7v7h-7z" fill="#ffe305"/>
<path d="M1284 90h7v7h-7z" fill="#ffd003"/>
<path d="M1290 90h7v7h-7z" fill="#ffc002"/>
<path d="M1296 90h7v7h-7z" fill="#ffb201"/>
<path d="M1302 90h7v7h-7z" fill="#ffa500"/>
<path d="M1308 90h7v7h-7z" fill="#ff9900"/>
<path d="M1314 90h7v7h-7z" fill="#ff8e00"/>
<path d="M1320 90h7v7h-7z" fill="#ff8500"/>
<path d="M1326 90h7v7h-7z" fill="#ff7c00"/>
<path d="M1332 90h7v7h-7z" fill="#ff7400"/>
<path d="M1338 90h7v7h-7z" fill="#ff6c00"/>
<path d="M1344 90h7v7h-7z" fill="#ff6600"/>
<path d="M1350 90h7v7h-7z" fill="#ff5f00"/>
<path d="M1356 90h7v7h-7z" fill="#ff5900"/>
<path d="M1362 90h7v7h-7z" fill="#ff5400"/>
<path d="M1368 90h7v7h-7z" fill="#ff4f00"/>
<path d="M1374 90h7v7h-7z" fill="#ff4a00"/>
<path d="M1380 90h7v7h-7z" fill="#ff4500"/>
<path d="M1386 90h7v7h-7z" fill="#ff4100"/>
<path d="M1392 90h7v7h-7z" fill="#ff3d00"/>
<path d="M1398 90h7v7h-7z" fill="#ff3900"/>
<path d="M1404 90h7v7h-7z" fill="#ff3600"/>
<path d="M1410 90h7v7h-7z" fill="#ff3200"/>
<path d="M1416 90h7v7h-7z" fill="#ff2f00"/>
<path d="M1422 90h7v7h-7z" fill="#ff2c00"/>
<path d="M1428 90h7v7h-7z" fill="#ff2900"/>
<path d="M1434 90h7v7h-7z" fill="#ff2600"/>
<path d="M1440 90h7v7h-7z" fill="#ff2400"/>
<path d="M1446 90h7v7h-7z" fill="#ff2100"/>
<path d="M1452 90h7v7h-7z" fill="#ff1f00"/>
<path d="M1458 90h7v7h-7z" fill="#ff1c00"/>
<path d="M1464 90h7v7h-7z" fill="#ff1a00"/>
<path d="M1470 90h7v7h-7z" fill="#ff1800"/>
<path d="M1476 90h7v7h-7z" fill="#ff1600"/>
<path d="M1482 90h7v7h-7z" fill="#ff1400"/>
<path d="M1488 90h7v7h-7z" fill="#ff1200"/>
<path d="M1494 90h7v7h-7z" fill="#ff1000"/>
<path d="M1500 90h7v7h-7z" fill="#ff0f00"/>
<path d="M1506 90h7v7h-7z" fill="#ff0d00"/>
<path d="M1512 90h7v7h-7z" fill="#ff0b00"/>
<path d="M1518 90h7v7h-7z" fill="#ff0a00"/>
<path d="M1038 96h7v7h-7z" fill="#00ff30"/>
<path d="M1044 96h19v7h-19z" fill="#00ff2f"/>
<path d="M1062 96h13v7h-13z" fill="#00ff2e"/>
<path d="M1074 96h19v7h-19z" fill="#00ff2d"/>
<path d="M1092 96h13v7h-13z" fill="#00ff2c"/>
<path d="M1104 96h13v7h-13z" fill="#00ff2b"/>
<path d="M1116 96h13v7h-13z" fill="#00ff2a"/>
<path d="M1128 96h13v7h-13z" fill="#00ff29"/>
<path d="M1140 96h13v7h-13z" fill="#00ff28"/>
<path d="M1152 96h13v7h-13z" fill="#00ff27"/>
<path d="M1164 96h13v7h-13z" fill="#00ff26"/>
<path d="M1176 96h7v7h-7z" fill="#00ff25"/>
<path d="M1182 96h7v7h-7z" fill="#00ff24"/>
<path d="M1188 96h7v7h-7z" fill="#04ff24"/>
<path d="M1194 96h7v7h-7z" fill="#13ff23"/>
<path d="M1200 96h7v7h-7z" fill="#22ff22"/>
<path d="M1206 96h7v7h-7z" fill="#31ff22"/>
<path d="M1212 96h7v7h-7z" fill="#42ff21"/>
<path d="M1218 96h7v7h-7z" fill="#52ff20"/>
<path d="M1224 96h7v7h-7z" fill="#64ff1f"/>
<path d="M1230 96h7v7h-7z" fill="#76ff1e"/>
<path d="M1236 96h7v7h-7z" fill="#89ff1e"/>
<path d="M1242 96h7v7h-7z" fill="#9cff1d"/>
<path d="M1248 96h7v7h-7z" fill="#b0ff1c"/>
<path d="M1254 96h7v7h-7z" fill="#c5ff1b"/>
<path d="M1260 96h7v7h-7z" fill="#dbff1a"/>
<path d="M1266 96h7v7h-7z" fill="#f2ff19"/>
<path d="M1272 96h7v7h-7z" fill="#fff517"/>
<path d="M1278 96h7v7h-7z" fill="#ffe014"/>
<path d="M1284 96h7v7h-7z" fill="#ffce11"/>
<path d="M1290 96h7v7h-7z" fill="#ffbe0f"/>
<path d="M1296 96h7v7h-7z" fill="#ffaf0d"/>
<path d="M1302 96h7v7h-7z" fill="#ffa20b"/>
<path d="M1308 96h7v7h-7z" fill="#ff9709"/>
<path d="M1314 96h7v7h-7z" fill="#ff8c08"/>
<path d="M1320 96h7v7h-7z" fill="#ff8307"/>
<path d="M1326 96h7v7h-7z" fill="#ff7a05"/>
<path d="M1332 96h7v7h-7z" fill="#ff7204"/>
<path d="M1338 96h7v7h-7z" fill="#ff6a03"/>
<path d="M1344 96h7v7h-7z" fill="#ff6402"/>
<path d="M1350 96h7v7h-7z" fill="#ff5d01"/>
<path d="M1356 96h7v7h-7z" fill="#ff5700"/>
<path d="M1362 96h7v7h-7z" fill="#ff5200"/>
<path d="M1368 96h7v7h-7z" fill="#ff4d00"/>
<path d="M1374 96h7v7h-7z" fill="#ff4800"/>
<path d="M1380 96h7v7h-7z" fill="#ff4300"/>
<path d="M1386 96h7v7h-7z" fill="#ff3f00"/>
<path d="M1392 96h7v7h-7z" fill="#ff3b00"/>
<path d="M1398 96h7v7h-7z" fill="#ff3700"/>
<path d="M1404 96h7v7h-7z" fill="#ff3400"/>
<path d="M1410 96h7v7h-7z" fill="#ff3000"/>
<path d="M1416 96h7v7h-7z" fill="#ff2d00"/>
<path d="M1422 96h7v7h-7z" fill="#ff2a00"/>
<path d="M1428 96h7v7h-7z" fill="#ff2700"/>
<path d="M1434 96h7v7h-7z" fill="#ff2500"/>
<path d="M1440 96h7v7h-7z" fill="#ff2200"/>
<path d="M1446 96h7v7h-7z" fill="#ff2000"/>
<path d="M1452 96h7v7h-7z" fill="#ff1d00"/>
<path d="M1458 96h7v7h-7z" fill="#ff1b00"/>
<path d="M1464 96h7v7h-7z" fill="#ff1900"/>
<path d="M1470 96h7v7h-7z" fill="#ff1700"/>
<path d="M1476 96h7v7h-7z" fill="#ff1500"/>
<path d="M1482 96h7v7h-7z" fill="#ff1300"/>
<path d="M1488 96h7v7h-7z" fill="#ff1100"/>
<path d="M1494 96h7v7h-7z" fill="#ff0f00"/>
<path d="M1500 96h7v7h-7z" fill="#ff0d00"/>
<path d="M1506 96h7v7h-7z" fill="#ff0c00"/>
<path d="M1512 96h7v7h-7z" fill="#ff0a00"/>
<path d="M1518 96h7v7h-7z" fill="#ff0900"/>
<path d="M1524 96h7v7h-7z" fill="#ff0700"/>
<path d="M1530 96h7v7h-7z" fill="#ff0600"/>
<path d="M1536 96h7v7h-7z" fill="#ff0500"/>
<path d="M1542 96h7v7h-7z" fill="#ff0300"/>
<path d="M1548 96h7v7h-7z" fill="#ff0200"/>
<path d="M1554 96h7v7h-7z" fill="#ff0100"/>
<path d="M1560 96h13v7h-13z" fill="#ff0000"/>
<path d="M1038 102h19v7h-19z" fill="#00ff39"/>
<path d="M1056 102h25v7h-25z" fill="#00ff38"/>
<path d="M1080 102h25v7h-25z" fill="#00ff37"/>
<path d="M1104 102h19v7h-19z" fill="#00ff36"/>
<path d="M1122 102h19v7h-19z" fill="#00ff35"/>
<path d="M1140 102h19v7h-19z" fill="#00ff34"/>
<path d="M1158 102h13v7h-13z" fill="#00ff33"/>
<path d="M1170 102h19v7h-19z" fill="#00ff32"/>
<path d="M1188 102h7v7h-7z" fill="#02ff31"/>
<path d="M1194 102h7v7h-7z" fill="#11ff31"/>
<path d="M1200 102h7v7h-7z" fill="#20ff30"/>
<path d="M1206 102h7v7h-7z" fill="#30ff30"/>
<path d="M1212 102h7v7h-7z" fill="#40ff2f"/>
<path d="M1218 102h7v7h-7z" fill="#51ff2f"/>
<path d="M1224 102h7v7h-7z" fill="#63ff2e"/>
<path d="M1230 102h7v7h-7z" fill="#75ff2d"/>
<path d="M1236 102h7v7h-7z" fill="#88ff2d"/>
<path d="M1242 102h7v7h-7z" fill="#9cff2c"/>
<path d="M1248 102h7v7h-7z" fill="#b1ff2c"/>
<path d="M1254 102h7v7h-7z" fill="#c6ff2b"/>
<path d="M1260 102h7v7h-7z" fill="#dcff2a"/>
<path d="M1266 102h7v7h-7z" fill="#f3ff29"/>
<path d="M1272 102h7v7h-7z" fill="#fff327"/>
<path d="M1278 102h7v7h-7z" fill="#ffde23"/>
<path d="M1284 102h7v7h-7z" fill="#ffcc1f"/>
<path d="M1290 102h7v7h-7z" fill="#ffbc1c"/>
<path d="M1296 102h7v7h-7z" fill="#ffad19"/>
<path d="M1302 102h7v7h-7z" fill="#ffa017"/>
<path d="M1308 102h7v7h-7z" fill="#ff9515"/>
<path d="M1314 102h7v7h-7z" fill="#ff8a13"/>
<path d="M1320 102h7v7h-7z" fill="#ff8111"/>
<path d="M1326 102h7v7h-7z" fill="#ff780f"/>
<path d="M1332 102h7v7h-7z" fill="#ff700d"/>
<path d="M1338 102h7v7h-7z" fill="#ff680c"/>
<path d="M1344 102h7v7h-7z" fill="#ff620b"/>
<path d="M1350 102h7v7h-7z" fill="#ff5b0a"/>
<path d="M1356 102h7v7h-7z" fill="#ff5508"/>
<path d="M1362 102h7v7h-7z" fill="#ff5007"/>
<path d="M1368 102h7v7h-7z" fill="#ff4b06"/>
<path d="M1374 102h7v7h-7z" fill="#ff4605"/>
<path d="M1380 102h7v7h-7z" fill="#ff4205"/>
<path d="M1386 102h7v7h-7z" fill="#ff3d04"/>
<path d="M1392 102h7v7h-7z" fill="#ff3903"/>
<path d="M1398 102h7v7h-7z" fill="#ff3602"/>
<path d="M1404 102h7v7h-7z" fill="#ff3202"/>
<path d="M1410 102h7v7h-7z" fill="#ff2f01"/>
<path d="M1416 102h7v7h-7z" fill="#ff2c00"/>
<path d="M1422 102h7v7h-7z" fill="#ff2900"/>
<path d="M1428 102h7v7h-7z" fill="#ff2600"/>
<path d="M1434 102h7v7h-7z" fill="#ff2300"/>
<path d="M1440 102h7v7h-7z" fill="#ff2100"/>
<path d="M1446 102h7v7h-7z" fill="#ff1e00"/>
<path d="M1452 102h7v7h-7z" fill="#ff1c00"/>
<path d="M1458 102h7v7h-7z" fill="#ff1a00"/>
<path d="M1464 102h7v7h-7z" fill="#ff1700"/>
<path d="M1470 102h7v7h-7z" fill="#ff1500"/>
<path d="M1476 102h7v7h-7z" fill="#ff1300"/>
<path d="M1482 102h7v7h-7z" fill="#ff1100"/>
<path d="M1488 102h7v7h-7z" fill="#ff1000"/>
<path d="M1494 102h7v7h-7z" fill="#ff0e00"/>
<path d="M1500 102h7v7h-7z" fill="#ff0c00"/>
<path d="M1506 102h7v7h-7z" fill="#ff0b00"/>
<path d="M1512 102h7v7h-7z" fill="#ff0900"/>
<path d="M1518 102h7v7h-7z" fill="#ff0800"/>
<path d="M1524 102h7v7h-7z" fill="#ff0600"/>
<path d="M1530 102h7v7h-7z" fill="#ff0500"/>
<path d="M1536 102h7v7h-7z" fill="#ff0300"/>
<path d="M1542 102h7v7h-7z" fill="#ff0200"/>
<path d="M1548 102h7v7h-7z" fill="#ff0100"/>
<path d="M1554 102h73v7h-73z" fill="#ff0000"/>
<path d="M1038 108h31v7h-31z" fill="#00ff43"/>
<path d="M1068 108h43v7h-43z" fill="#00ff42"/>
<path d="M1110 108h37v7h-37z" fill="#00ff41"/>
<path d="M1146 108h31v7h-31z" fill="#00ff40"/>
<path d="M1176 108h19v7h-19z" fill="#00ff3f"/>
<path d="M1194 108h7v7h-7z" fill="#0fff3f"/>
<path d="M1200 108h7v7h-7z" fill="#1eff3e"/>
<path d="M1206 108h7v7h-7z" fill="#2eff3e"/>
<path d="M1212 108h7v7h-7z" fill="#3fff3e"/>
<path d="M1218 108h7v7h-7z" fill="#50ff3e"/>
<path d="M1224 108h7v7h-7z" fill="#62ff3d"/>
<path d="M1230 108h7v7h-7z" fill="#75ff3d"/>
<path d="M1236 108h7v7h-7z" fill="#88ff3d"/>
<path d="M1242 108h7v7h-7z" fill="#9cff3c"/>
<path d="M1248 108h7v7h-7z" fill="#b1ff3c"/>
<path d="M1254 108h7v7h-7z" fill="#c7ff3c"/>
<path d="M1260 108h7v7h-7z" fill="#deff3b"/>
<path d="M1266 108h7v7h-7z" fill="#f5ff3b"/>
<path d="M1272 108h7v7h-7z" fill="#fff137"/>
<path d="M1278 108h7v7h-7z" fill="#ffdc32"/>
<path d="M1284 108h7v7h-7z" fill="#ffc92e"/>
<path d="M1290 108h7v7h-7z" fill="#ffb92a"/>
<path d="M1296 108h7v7h-7z" fill="#ffab26"/>
<path d="M1302 108h7v7h-7z" fill="#ff9e23"/>
<path d="M1308 108h7v7h-7z" fill="#ff9220"/>
<path d="M1314 108h7v7h-7z" fill="#ff881d"/>
<path d="M1320 108h7v7h-7z" fill="#ff7e1b"/>
<path d="M1326 108h7v7h-7z" fill="#ff7619"/>
<path d="M1332 108h7v7h-7z" fill="#ff6e17"/>
<path d="M1338 108h7v7h-7z" fill="#ff6615"/>
<path d="M1344 108h7v7h-7z" fill="#ff6013"/>
<path d="M1350 108h7v7h-7z" fill="#ff5912"/>
<path d="M1356 108h7v7h-7z" fill="#ff5310"/>
<path d="M1362 108h7v7h-7z" fill="#ff4e0f"/>
<path d="M1368 108h7v7h-7z" fill="#ff490e"/>
<path d="M1374 108h7v7h-7z" fill="#ff440d"/>
<path d="M1380 108h7v7h-7z" fill="#ff400c"/>
<path d="M1386 108h7v7h-7z" fill="#ff3c0b"/>
<path d="M1392 108h7v7h-7z" fill="#ff380a"/>
<path d="M1398 108h7v7h-7z" fill="#ff3409"/>
<path d="M1404 108h7v7h-7z" fill="#ff3108"/>
<path d="M1410 108h7v7h-7z" fill="#ff2d07"/>
<path d="M1416 108h7v7h-7z" fill="#ff2a06"/>
<path d="M1422 108h7v7h-7z" fill="#ff2706"/>
<path d="M1428 108h7v7h-7z" fill="#ff2405"/>
<path d="M1434 108h7v7h-7z" fill="#ff2204"/>
<path d="M1440 108h7v7h-7z" fill="#ff1f04"/>
<path d="M1446 108h7v7h-7z" fill="#ff1d03"/>
<path d="M1452 108h7v7h-7z" fill="#ff1a02"/>
<path d="M1458 108h7v7h-7z" fill="#ff1802"/>
<path d="M1464 108h7v7h-7z" fill="#ff1601"/>
<path d="M1470 108h7v7h-7z" fill="#ff1401"/>
<path d="M1476 108h7v7h-7z" fill="#ff1200"/>
<path d="M1482 108h7v7h-7z" fill="#ff1000"/>
<path d="M1488 108h7v7h-7z" fill="#ff0e00"/>
<path d="M1494 108h7v7h-7z" fill="#ff0d00"/>
<path d="M1500 108h7v7h-7z" fill="#ff0b00"/>
<path d="M1506 108h7v7h-7z" fill="#ff0900"/>
<path d="M1512 108h7v7h-7z" fill="#ff0800"/>
<path d="M1518 108h7v7h-7z" fill="#ff0600"/>
<path d="M1524 108h7v7h-7z" fill="#ff0500"/>
<path d="M1530 108h7v7h-7z" fill="#ff0400"/>
<path d="M1536 108h7v7h-7z" fill="#ff0200"/>
<path d="M1542 108h7v7h-7z" fill="#ff0100"/>
<path d="M1548 108h127v7h-127z" fill="#ff0000"/>
<path d="M1038 114h157v7h-157z" fill="#00ff4d"/>
<path d="M1194 114h7v7h-7z" fill="#0cff4d"/>
<path d="M1200 114h7v7h-7z" fill="#1cff4d"/>
<path d="M1206 114h7v7h-7z" fill="#2dff4d"/>
<path d="M1212 114h7v7h-7z" fill="#3eff4d"/>
<path d="M1218 114h7v7h-7z" fill="#4fff4d"/>
<path d="M1224 114h7v7h-7z" fill="#61ff4d"/>
<path d="M1230 114h7v7h-7z" fill="#74ff4d"/>
<path d="M1236 114h7v7h-7z" fill="#88ff4d"/>
<path d="M1242 114h7v7h-7z" fill="#9cff4d"/>
<path d="M1248 114h7v7h-7z" fill="#b2ff4d"/>
<path d="M1254 114h7v7h-7z" fill="#c8ff4d"/>
<path d="M1260 114h7v7h-7z" fill="#dfff4d"/>
<path d="M1266 114h7v7h-7z" fill="#f7ff4d"/>
<path d="M1272 114h7v7h-7z" fill="#ffef48"/>
<path d="M1278 114h7v7h-7z" fill="#ffd942"/>
<path d="M1284 114h7v7h-7z" fill="#ffc73c"/>
<path d="M1290 114h7v7h-7z" fill="#ffb737"/>
<path d="M1296 114h7v7h-7z" fill="#ffa833"/>
<path d="M1302 114h7v7h-7z" fill="#ff9c2f"/>
<path d="M1308 114h7v7h-7z" fill="#ff902c"/>
<path d="M1314 114h7v7h-7z" fill="#ff8628"/>
<path d="M1320 114h7v7h-7z" fill="#ff7c26"/>
<path d="M1326 114h7v7h-7z" fill="#ff7323"/>
<path d="M1332 114h7v7h-7z" fill="#ff6b21"/>
<path d="M1338 114h7v7h-7z" fill="#ff641e"/>
<path d="M1344 114h7v7h-7z" fill="#ff5d1c"/>
<path d="M1350 114h7v7h-7z" fill="#ff571a"/>
<path d="M1356 114h7v7h-7z" fill="#ff5119"/>
<path d="M1362 114h7v7h-7z" fill="#ff4c17"/>
<path d="M1368 114h7v7h-7z" fill="#ff4716"/>
<path d="M1374 114h7v7h-7z" fill="#ff4214"/>
<path d="M1380 114h7v7h-7z" fill="#ff3e13"/>
<path d="M1386 114h7v7h-7z" fill="#ff3a12"/>
<path d="M1392 114h7v7h-7z" fill="#ff3610"/>
<path d="M1398 114h7v7h-7z" fill="#ff320f"/>
<path d="M1404 114h7v7h-7z" fill="#ff2f0e"/>
<path d="M1410 114h7v7h-7z" fill="#ff2c0d"/>
<path d="M1416 114h7v7h-7z" fill="#ff280c"/>
<path d="M1422 114h7v7h-7z" fill="#ff260b"/>
<path d="M1428 114h7v7h-7z" fill="#ff230b"/>
<path d="M1434 114h7v7h-7z" fill="#ff200a"/>
<path d="M1440 114h7v7h-7z" fill="#ff1e09"/>
<path d="M1446 114h7v7h-7z" fill="#ff1b08"/>
<path d="M1452 114h7v7h-7z" fill="#ff1908"/>
<path d="M1458 114h7v7h-7z" fill="#ff1707"/>
<path d="M1464 114h7v7h-7z" fill="#ff1506"/>
<path d="M1470 114h7v7h-7z" fill="#ff1306"/>
<path d="M1476 114h7v7h-7z" fill="#ff1105"/>
<path d="M1482 114h7v7h-7z" fill="#ff0f04"/>
<path d="M1488 114h7v7h-7z" fill="#ff0d04"/>
<path d="M1494 114h7v7h-7z" fill="#ff0b03"/>
<path d="M1500 114h7v7h-7z" fill="#ff0a03"/>
<path d="M1506 114h7v7h-7z" fill="#ff0802"/>
<path d="M1512 114h7v7h-7z" fill="#ff0702"/>
<path d="M1518 114h7v7h-7z" fill="#ff0502"/>
<path d="M1524 114h7v7h-7z" fill="#ff0401"/>
<path d="M1530 114h7v7h-7z" fill="#ff0201"/>
<path d="M1536 114h7v7h-7z" fill="#ff0100"/>
<path d="M1542 114h181v7h-181z" fill="#ff0000"/>
<path d="M1038 120h13v7h-13z" fill="#00ff57"/>
<path d="M1050 120h43v7h-43z" fill="#00ff58"/>
<path d="M1092 120h37v7h-37z" fill="#00ff59"/>
<path d="M1128 120h31v7h-31z" fill="#00ff5a"/>
<path d="M1158 120h25v7h-25z" fill="#00ff5b"/>
<path d="M1182 120h13v7h-13z" fill="#00ff5c"/>
<path d="M1194 120h7v7h-7z" fill="#0aff5c"/>
<path d="M1200 120h7v7h-7z" fill="#1aff5c"/>
<path d="M1206 120h7v7h-7z" fill="#2bff5d"/>
<path d="M1212 120h7v7h-7z" fill="#3cff5d"/>
<path d="M1218 120h7v7h-7z" fill="#4eff5d"/>
<path d="M1224 120h7v7h-7z" fill="#60ff5d"/>
<path d="M1230 120h7v7h-7z" fill="#74ff5e"/>
<path d="M1236 120h7v7h-7z" fill="#88ff5e"/>
<path d="M1242 120h7v7h-7z" fill="#9dff5e"/>
<path d="M1248 120h7v7h-7z" fill="#b2ff5f"/>
<path d="M1254 120h7v7h-7z" fill="#c9ff5f"/>
<path d="M1260 120h7v7h-7z" fill="#e1ff60"/>
<path d="M1266 120h7v7h-7z" fill="#f9ff60"/>
<path d="M1272 120h7v7h-7z" fill="#ffec59"/>
<path d="M1278 120h7v7h-7z" fill="#ffd752"/>
<path d="M1284 120h7v7h-7z" fill="#ffc54b"/>
<path d="M1290 120h7v7h-7z" fill="#ffb445"/>
<path d="M1296 120h7v7h-7z" fill="#ffa640"/>
<path d="M1302 120h7v7h-7z" fill="#ff993b"/>
<path d="M1308 120h7v7h-7z" fill="#ff8e37"/>
<path d="M1314 120h7v7h-7z" fill="#ff8334"/>
<path d="M1320 120h7v7h-7z" fill="#ff7a30"/>
<path d="M1326 120h7v7h-7z" fill="#ff712d"/>
<path d="M1332 120h7v7h-7z" fill="#ff692a"/>
<path d="M1338 120h7v7h-7z" fill="#ff6228"/>
<path d="M1344 120h7v7h-7z" fill="#ff5b25"/>
<path d="M1350 120h7v7h-7z" fill="#ff5523"/>
<path d="M1356 120h7v7h-7z" fill="#ff4f21"/>
<path d="M1362 120h7v7h-7z" fill="#ff4a1f"/>
<path d="M1368 120h7v7h-7z" fill="#ff451d"/>
<path d="M1374 120h7v7h-7z" fill="#ff401c"/>
<path d="M1380 120h7v7h-7z" fill="#ff3c1a"/>
<path d="M1386 120h7v7h-7z" fill="#ff3818"/>
<path d="M1392 120h7v7h-7z" fill="#ff3417"/>
<path d="M1398 120h7v7h-7z" fill="#ff3116"/>
<path d="M1404 120h7v7h-7z" fill="#ff2d15"/>
<path d="M1410 120h7v7h-7z" fill="#ff2a13"/>
<path d="M1416 120h7v7h-7z" fill="#ff2712"/>
<path d="M1422 120h7v7h-7z" fill="#ff2411"/>
<path d="M1428 120h7v7h-7z" fill="#ff2110"/>
<path d="M1434 120h7v7h-7z" fill="#ff1f0f"/>
<path d="M1440 120h7v7h-7z" fill="#ff1c0e"/>
<path d="M1446 120h7v7h-7z" fill="#ff1a0e"/>
<path d="M1452 120h7v7h-7z" fill="#ff170d"/>
<path d="M1458 120h7v7h-7z" fill="#ff150c"/>
<path d="M1464 120h7v7h-7z" fill="#ff130b"/>
<path d="M1470 120h7v7h-7z" fill="#ff110a"/>
<path d="M1476 120h7v7h-7z" fill="#ff0f0a"/>
<path d="M1482 120h7v7h-7z" fill="#ff0d09"/>
<path d="M1488 120h7v7h-7z" fill="#ff0c08"/>
<path d="M1494 120h7v7h-7z" fill="#ff0a08"/>
<path d="M1500 120h7v7h-7z" fill="#ff0807"/>
<path d="M1506 120h7v7h-7z" fill="#ff0707"/>
<path d="M1512 120h7v7h-7z" fill="#ff0506"/>
<path d="M1518 120h7v7h-7z" fill="#ff0406"/>
<path d="M1524 120h7v7h-7z" fill="#ff0205"/>
<path d="M1530 120h7v7h-7z" fill="#ff0105"/>
<path d="M1536 120h13v7h-13z" fill="#ff0004"/>
<path d="M1548 120h19v7h-19z" fill="#ff0003"/>
<path d="M1566 120h13v7h-13z" fill="#ff0002"/>
<path d="M1578 120h19v7h-19z" fill="#ff0001"/>
<path d="M1596 120h145v7h-145z" fill="#ff0000"/>
<path d="M1038 126h19v7h-19z" fill="#00ff62"/>
<path d="M1056 126h25v7h-25z" fill="#00ff63"/>
<path d="M1080 126h19v7h-19z" fill="#00ff64"/>
<path d="M1098 126h19v7h-19z" fill="#00ff65"/>
<path d="M1116 126h19v7h-19z" fill="#00ff66"/>
<path d="M1134 126h13v7h-13z" fill="#00ff67"/>
<path d="M1146 126h13v7h-13z" fill="#00ff68"/>
<path d="M1158 126h19v7h-19z" fill="#00ff69"/>
<path d="M1176 126h13v7h-13z" fill="#00ff6a"/>
<path d="M1188 126h7v7h-7z" fill="#00ff6b"/>
<path d="M1194 126h7v7h-7z" fill="#08ff6b"/>
<path d="M1200 126h7v7h-7z" fill="#18ff6c"/>
<path d="M1206 126h7v7h-7z" fill="#29ff6d"/>
<path d="M1212 126h7v7h-7z" fill="#3bff6d"/>
<path d="M1218 126h7v7h-7z" fill="#4dff6e"/>
<path d="M1224 126h7v7h-7z" fill="#60ff6e"/>
<path d="M1230 126h7v7h-7z" fill="#73ff6f"/>
<path d="M1236 126h7v7h-7z" fill="#88ff70"/>
<path d="M1242 126h7v7h-7z" fill="#9dff71"/>
<path d="M1248 126h7v7h-7z" fill="#b3ff71"/>
<path d="M1254 126h7v7h-7z" fill="#caff72"/>
<path d="M1260 126h7v7h-7z" fill="#e2ff73"/>
<path d="M1266 126h7v7h-7z" fill="#fcff74"/>
<path d="M1272 126h7v7h-7z" fill="#ffea6b"/>
<path d="M1278 126h7v7h-7z" fill="#ffd562"/>
<path d="M1284 126h7v7h-7z" fill="#ffc25a"/>
<path d="M1290 126h7v7h-7z" fill="#ffb254"/>
<path d="M1296 126h7v7h-7z" fill="#ffa44d"/>
<path d="M1302 126h7v7h-7z" fill="#ff9748"/>
<path d="M1308 126h7v7h-7z" fill="#ff8b43"/>
<path d="M1314 126h7v7h-7z" fill="#ff813f"/>
<path d="M1320 126h7v7h-7z" fill="#ff773b"/>
<path d="M1326 126h7v7h-7z" fill="#ff6f37"/>
<path d="M1332 126h7v7h-7z" fill="#ff6734"/>
<path d="M1338 126h7v7h-7z" fill="#ff6031"/>
<path d="M1344 126h7v7h-7z" fill="#ff592e"/>
<path d="M1350 126h7v7h-7z" fill="#ff532c"/>
<path d="M1356 126h7v7h-7z" fill="#ff4d29"/>
<path d="M1362 126h7v7h-7z" fill="#ff4827"/>
<path d="M1368 126h7v7h-7z" fill="#ff4325"/>
<path d="M1374 126h7v7h-7z" fill="#ff3f23"/>
<path d="M1380 126h7v7h-7z" fill="#ff3a21"/>
<path d="M1386 126h7v7h-7z" fill="#ff361f"/>
<path d="M1392 126h7v7h-7z" fill="#ff321e"/>
<path d="M1398 126h7v7h-7z" fill="#ff2f1c"/>
<path d="M1404 126h7v7h-7z" fill="#ff2b1b"/>
<path d="M1410 126h7v7h-7z" fill="#ff281a"/>
<path d="M1416 126h7v7h-7z" fill="#ff2518"/>
<path d="M1422 126h7v7h-7z" fill="#ff2217"/>
<path d="M1428 126h7v7h-7z" fill="#ff2016"/>
<path d="M1434 126h7v7h-7z" fill="#ff1d15"/>
<path d="M1440 126h7v7h-7z" fill="#ff1a14"/>
<path d="M1446 126h7v7h-7z" fill="#ff1813"/>
<path d="M1452 126h7v7h-7z" fill="#ff1612"/>
<path d="M1458 126h7v7h-7z" fill="#ff1411"/>
<path d="M1464 126h7v7h-7z" fill="#ff1210"/>
<path d="M1470 126h7v7h-7z" fill="#ff100f"/>
<path d="M1476 126h7v7h-7z" fill="#ff0e0f"/>
<path d="M1482 126h7v7h-7z" fill="#ff0c0e"/>
<path d="M1488 126h7v7h-7z" fill="#ff0a0d"/>
<path d="M1494 126h7v7h-7z" fill="#ff090c"/>
<path d="M1500 126h7v7h-7z" fill="#ff070c"/>
<path d="M1506 126h7v7h-7z" fill="#ff060b"/>
<path d="M1512 126h7v7h-7z" fill="#ff040a"/>
<path d="M1518 126h7v7h-7z" fill="#ff030a"/>
<path d="M1524 126h7v7h-7z" fill="#ff0109"/>
<path d="M1530 126h7v7h-7z" fill="#ff0009"/>
<path d="M1536 126h13v7h-13z" fill="#ff0008"/>
<path d="M1548 126h13v7h-13z" fill="#ff0007"/>
<path d="M1560 126h13v7h-13z" fill="#ff0006"/>
<path d="M1572 126h13v7h-13z" fill="#ff0005"/>
<path d="M1584 126h19v7h-19z" fill="#ff0004"/>
<path d="M1602 126h19v7h-19z" fill="#ff0003"/>
<path d="M1620 126h19v7h-19z" fill="#ff0002"/>
<path d="M1638 126h19v7h-19z" fill="#ff0001"/>
<path d="M1656 126h85v7h-85z" fill="#ff0000"/>
<path d="M1044 132h13v7h-13z" fill="#00ff6d"/>
<path d="M1056 132h13v7h-13z" fill="#00ff6e"/>
<path d="M1068 132h13v7h-13z" fill="#00ff6f"/>
<path d="M1080 132h19v7h-19z" fill="#00ff70"/>
<path d="M1098 132h13v7h-13z" fill="#00ff71"/>
<path d="M1110 132h7v7h-7z" fill="#00ff72"/>
<path d="M1116 132h13v7h-13z" fill="#00ff73"/>
<path d="M1128 132h13v7h-13z" fill="#00ff74"/>
<path d="M1140 132h7v7h-7z" fill="#00ff75"/>
<path d="M1146 132h13v7h-13z" fill="#00ff76"/>
<path d="M1158 132h7v7h-7z" fill="#00ff77"/>
<path d="M1164 132h13v7h-13z" fill="#00ff78"/>
<path d="M1176 132h7v7h-7z" fill="#00ff79"/>
<path d="M1182 132h7v7h-7z" fill="#00ff7a"/>
<path d="M1188 132h7v7h-7z" fill="#00ff7b"/>
<path d="M1194 132h7v7h-7z" fill="#06ff7b"/>
<path d="M1200 132h7v7h-7z" fill="#16ff7c"/>
<path d="M1206 132h7v7h-7z" fill="#27ff7d"/>
<path d="M1212 132h7v7h-7z" fill="#39ff7e"/>
<path d="M1218 132h7v7h-7z" fill="#4bff7f"/>
<path d="M1224 132h7v7h-7z" fill="#5fff80"/>
<path d="M1230 132h7v7h-7z" fill="#73ff81"/>
<path d="M1236 132h7v7h-7z" fill="#87ff82"/>
<path d="M1242 132h7v7h-7z" fill="#9dff83"/>
<path d="M1248 132h7v7h-7z" fill="#b4ff85"/>
<path d="M1254 132h7v7h-7z" fill="#cbff86"/>
<path d="M1260 132h7v7h-7z" fill="#e4ff87"/>
<path d="M1266 132h7v7h-7z" fill="#feff88"/>
<path d="M1272 132h7v7h-7z" fill="#ffe77d"/>
<path d="M1278 132h7v7h-7z" fill="#ffd273"/>
<path d="M1284 132h7v7h-7z" fill="#ffc06a"/>
<path d="M1290 132h7v7h-7z" fill="#ffaf62"/>
<path d="M1296 132h7v7h-7z" fill="#ffa15b"/>
<path d="M1302 132h7v7h-7z" fill="#ff9455"/>
<path d="M1308 132h7v7h-7z" fill="#ff894f"/>
<path d="M1314 132h7v7h-7z" fill="#ff7f4a"/>
<path d="M1320 132h7v7h-7z" fill="#ff7546"/>
<path d="M1326 132h7v7h-7z" fill="#ff6d42"/>
<path d="M1332 132h7v7h-7z" fill="#ff653e"/>
<path d="M1338 132h7v7h-7z" fill="#ff5e3b"/>
<path d="M1344 132h7v7h-7z" fill="#ff5737"/>
<path d="M1350 132h7v7h-7z" fill="#ff5134"/>
<path d="M1356 132h7v7h-7z" fill="#ff4b32"/>
<path d="M1362 132h7v7h-7z" fill="#ff462f"/>
<path d="M1368 132h7v7h-7z" fill="#ff412d"/>
<path d="M1374 132h7v7h-7z" fill="#ff3d2b"/>
<path d="M1380 132h7v7h-7z" fill="#ff3829"/>
<path d="M1386 132h7v7h-7z" fill="#ff3427"/>
<path d="M1392 132h7v7h-7z" fill="#ff3125"/>
<path d="M1398 132h7v7h-7z" fill="#ff2d23"/>
<path d="M1404 132h7v7h-7z" fill="#ff2a21"/>
<path d="M1410 132h7v7h-7z" fill="#ff2620"/>
<path d="M1416 132h7v7h-7z" fill="#ff231e"/>
<path d="M1422 132h7v7h-7z" fill="#ff211d"/>
<path d="M1428 132h7v7h-7z" fill="#ff1e1c"/>
<path d="M1434 132h7v7h-7z" fill="#ff1b1b"/>
<path d="M1440 132h7v7h-7z" fill="#ff1919"/>
<path d="M1446 132h7v7h-7z" fill="#ff1718"/>
<path d="M1452 132h7v7h-7z" fill="#ff1417"/>
<path d="M1458 132h7v7h-7z" fill="#ff1216"/>
<path d="M1464 132h7v7h-7z" fill="#ff1015"/>
<path d="M1470 132h7v7h-7z" fill="#ff0e14"/>
<path d="M1476 132h7v7h-7z" fill="#ff0c13"/>
<path d="M1482 132h7v7h-7z" fill="#ff0b12"/>
<path d="M1488 132h7v7h-7z" fill="#ff0912"/>
<path d="M1494 132h7v7h-7z" fill="#ff0711"/>
<path d="M1500 132h7v7h-7z" fill="#ff0610"/>
<path d="M1506 132h7v7h-7z" fill="#ff040f"/>
<path d="M1512 132h7v7h-7z" fill="#ff030f"/>
<path d="M1518 132h7v7h-7z" fill="#ff010e"/>
<path d="M1524 132h13v7h-13z" fill="#ff000d"/>
<path d="M1536 132h7v7h-7z" fill="#ff000c"/>
<path d="M1542 132h13v7h-13z" fill="#ff000b"/>
<path d="M1554 132h13v7h-13z" fill="#ff000a"/>
<path d="M1566 132h13v7h-13z" fill="#ff0009"/>
<path d="M1578 132h13v7h-13z" fill="#ff0008"/>
<path d="M1590 132h19v7h-19z" fill="#ff0007"/>
<path d="M1608 132h13v7h-13z" fill="#ff0006"/>
<path d="M1620 132h19v7h-19z" fill="#ff0005"/>
<path d="M1638 132h19v7h-19z" fill="#ff0004"/>
<path d="M1656 132h19v7h-19z" fill="#ff0003"/>
<path d="M1674 132h19v7h-19z" fill="#ff0002"/>
<path d="M1692 132h25v7h-25z" fill="#ff0001"/>
<path d="M1716 132h25v7h-25z" fill="#ff0000"/>
<path d="M1044 138h7v7h-7z" fill="#00ff78"/>
<path d="M1050 138h13v7h-13z" fill="#00ff79"/>
<path d="M1062 138h13v7h-13z" fill="#00ff7a"/>
<path d="M1074 138h7v7h-7z" fill="#00ff7b"/>
<path d="M1080 138h13v7h-13z" fill="#00ff7c"/>
<path d="M1092 138h7v7h-7z" fill="#00ff7d"/>
<path d="M1098 138h13v7h-13z" fill="#00ff7e"/>
<path d="M1110 138h7v7h-7z" fill="#00ff7f"/>
<path d="M1116 138h7v7h-7z" fill="#00ff80"/>
<path d="M1122 138h13v7h-13z" fill="#00ff81"/>
<path d="M1134 138h7v7h-7z" fill="#00ff82"/>
<path d="M1140 138h7v7h-7z" fill="#00ff83"/>
<path d="M1146 138h7v7h-7z" fill="#00ff84"/>
<path d="M1152 138h7v7h-7z" fill="#00ff85"/>
<path d="M1158 138h7v7h-7z" fill="#00ff86"/>
<path d="M1164 138h7v7h-7z" fill="#00ff87"/>
<path d="M1170 138h7v7h-7z" fill="#00ff88"/>
<path d="M1176 138h7v7h-7z" fill="#00ff89"/>
<path d="M1182 138h7v7h-7z" fill="#00ff8a"/>
<path d="M1188 138h7v7h-7z" fill="#00ff8b"/>
<path d="M1194 138h7v7h-7z" fill="#03ff8c"/>
<path d="M1200 138h7v7h-7z" fill="#14ff8d"/>
<path d="M1206 138h7v7h-7z" fill="#25ff8e"/>
<path d="M1212 138h7v7h-7z" fill="#37ff90"/>
<path d="M1218 138h7v7h-7z" fill="#4aff91"/>
<path d="M1224 138h7v7h-7z" fill="#5eff92"/>
<path d="M1230 138h7v7h-7z" fill="#72ff94"/>
<path d="M1236 138h7v7h-7z" fill="#87ff95"/>
<path d="M1242 138h7v7h-7z" fill="#9dff97"/>
<path d="M1248 138h7v7h-7z" fill="#b4ff99"/>
<path d="M1254 138h7v7h-7z" fill="#cdff9a"/>
<path d="M1260 138h7v7h-7z" fill="#e6ff9c"/>
<path d="M1266 138h7v7h-7z" fill="#fffe9d"/>
<path d="M1272 138h7v7h-7z" fill="#ffe590"/>
<path d="M1278 138h7v7h-7z" fill="#ffd084"/>
<path d="M1284 138h7v7h-7z" fill="#ffbd7a"/>
<path d="M1290 138h7v7h-7z" fill="#ffad71"/>
<path d="M1296 138h7v7h-7z" fill="#ff9f69"/>
<path d="M1302 138h7v7h-7z" fill="#ff9262"/>
<path d="M1308 138h7v7h-7z" fill="#ff865c"/>
<path d="M1314 138h7v7h-7z" fill="#ff7c56"/>
<path d="M1320 138h7v7h-7z" fill="#ff7351"/>
<path d="M1326 138h7v7h-7z" fill="#ff6a4c"/>
<path d="M1332 138h7v7h-7z" fill="#ff6348"/>
<path d="M1338 138h7v7h-7z" fill="#ff5b44"/>
<path d="M1344 138h7v7h-7z" fill="#ff5541"/>
<path d="M1350 138h7v7h-7z" fill="#ff4f3d"/>
<path d="M1356 138h7v7h-7z" fill="#ff493a"/>
<path d="M1362 138h7v7h-7z" fill="#ff4437"/>
<path d="M1368 138h7v7h-7z" fill="#ff3f35"/>
<path d="M1374 138h7v7h-7z" fill="#ff3b32"/>
<path d="M1380 138h7v7h-7z" fill="#ff3630"/>
<path d="M1386 138h7v7h-7z" fill="#ff322e"/>
<path d="M1392 138h7v7h-7z" fill="#ff2f2c"/>
<path d="M1398 138h7v7h-7z" fill="#ff2b2a"/>
<path d="M1404 138h7v7h-7z" fill="#ff2828"/>
<path d="M1410 138h7v7h-7z" fill="#ff2526"/>
<path d="M1416 138h7v7h-7z" fill="#ff2225"/>
<path d="M1422 138h7v7h-7z" fill="#ff1f23"/>
<path d="M1428 138h7v7h-7z" fill="#ff1c22"/>
<path d="M1434 138h7v7h-7z" fill="#ff1a20"/>
<path d="M1440 138h7v7h-7z" fill="#ff171f"/>
<path d="M1446 138h7v7h-7z" fill="#ff151e"/>
<path d="M1452 138h7v7h-7z" fill="#ff131c"/>
<path d="M1458 138h7v7h-7z" fill="#ff111b"/>
<path d="M1464 138h7v7h-7z" fill="#ff0f1a"/>
<path d="M1470 138h7v7h-7z" fill="#ff0d19"/>
<path d="M1476 138h7v7h-7z" fill="#ff0b18"/>
<path d="M1482 138h7v7h-7z" fill="#ff0917"/>
<path d="M1488 138h7v7h-7z" fill="#ff0816"/>
<path d="M1494 138h7v7h-7z" fill="#ff0615"/>
<path d="M1500 138h7v7h-7z" fill="#ff0415"/>
<path d="M1506 138h7v7h-7z" fill="#ff0314"/>
<path d="M1512 138h7v7h-7z" fill="#ff0113"/>
<path d="M1518 138h7v7h-7z" fill="#ff0012"/>
<path d="M1524 138h13v7h-13z" fill="#ff0011"/>
<path d="M1536 138h7v7h-7z" fill="#ff0010"/>
<path d="M1542 138h13v7h-13z" fill="#ff000f"/>
<path d="M1554 138h13v7h-13z" fill="#ff000e"/>
<path d="M1566 138h7v7h-7z" fill="#ff000d"/>
<path d="M1572 138h13v7h-13z" fill="#ff000c"/>
<path d="M1584 138h13v7h-13z" fill="#ff000b"/>
<path d="M1596 138h13v7h-13z" fill="#ff000a"/>
<path d="M1608 138h19v7h-19z" fill="#ff0009"/>
<path d="M1626 138h13v7h-13z" fill="#ff0008"/>
<path d="M1638 138h19v7h-19z" fill="#ff0007"/>
<path d="M1656 138h13v7h-13z" fill="#ff0006"/>
<path d="M1668 138h19v7h-19z" fill="#ff0005"/>
<path d="M1686 138h19v7h-19z" fill="#ff0004"/>
<path d="M1704 138h25v7h-25z" fill="#ff0003"/>
<path d="M1728 138h13v7h-13z" fill="#ff0002"/>
<path d="M1044 144h7v7h-7z" fill="#00ff83"/>
<path d="M1050 144h7v7h-7z" fill="#00ff84"/>
<path d="M1056 144h7v7h-7z" fill="#00ff85"/>
<path d="M1062 144h13v7h-13z" fill="#00ff86"/>
<path d="M1074 144h7v7h-7z" fill="#00ff87"/>
<path d="M1080 144h7v7h-7z" fill="#00ff88"/>
<path d="M1086 144h7v7h-7z" fill="#00ff89"/>
<path d="M1092 144h7v7h-7z" fill="#00ff8a"/>
<path d="M1098 144h13v7h-13z" fill="#00ff8b"/>
<path d="M1110 144h7v7h-7z" fill="#00ff8c"/>
<path d="M1116 144h7v7h-7z" fill="#00ff8d"/>
<path d="M1122 144h7v7h-7z" fill="#00ff8e"/>
<path d="M1128 144h7v7h-7z" fill="#00ff8f"/>
<path d="M1134 144h7v7h-7z" fill="#00ff90"/>
<path d="M1140 144h7v7h-7z" fill="#00ff91"/>
<path d="M1146 144h7v7h-7z" fill="#00ff93"/>
<path d="M1152 144h7v7h-7z" fill="#00ff94"/>
<path d="M1158 144h7v7h-7z" fill="#00ff95"/>
<path d="M1164 144h7v7h-7z" fill="#00ff96"/>
<path d="M1170 144h7v7h-7z" fill="#00ff97"/>
<path d="M1176 144h7v7h-7z" fill="#00ff99"/>
<path d="M1182 144h7v7h-7z" fill="#00ff9a"/>
<path d="M1188 144h7v7h-7z" fill="#00ff9c"/>
<path d="M1194 144h7v7h-7z" fill="#01ff9d"/>
<path d="M1200 144h7v7h-7z" fill="#12ff9f"/>
<path d="M1206 144h7v7h-7z" fill="#23ffa0"/>
<path d="M1212 144h7v7h-7z" fill="#36ffa2"/>
<path d="M1218 144h7v7h-7z" fill="#49ffa4"/>
<path d="M1224 144h7v7h-7z" fill="#5dffa5"/>
<path d="M1230 144h7v7h-7z" fill="#71ffa7"/>
<path d="M1236 144h7v7h-7z" fill="#87ffa9"/>
<path d="M1242 144h7v7h-7z" fill="#9effab"/>
<path d="M1248 144h7v7h-7z" fill="#b5ffad"/>
<path d="M1254 144h7v7h-7z" fill="#ceffb0"/>
<path d="M1260 144h7v7h-7z" fill="#e8ffb2"/>
<path d="M1266 144h7v7h-7z" fill="#fffbb2"/>
<path d="M1272 144h7v7h-7z" fill="#ffe2a2"/>
<path d="M1278 144h7v7h-7z" fill="#ffcd95"/>
<path d="M1284 144h7v7h-7z" fill="#ffbb8a"/>
<path d="M1290 144h7v7h-7z" fill="#ffaa80"/>
<path d="M1296 144h7v7h-7z" fill="#ff9c77"/>
<path d="M1302 144h7v7h-7z" fill="#ff8f6f"/>
<path d="M1308 144h7v7h-7z" fill="#ff8468"/>
<path d="M1314 144h7v7h-7z" fill="#ff7a62"/>
<path d="M1320 144h7v7h-7z" fill="#ff705c"/>
<path d="M1326 144h7v7h-7z" fill="#ff6857"/>
<path d="M1332 144h7v7h-7z" fill="#ff6052"/>
<path d="M1338 144h7v7h-7z" fill="#ff594e"/>
<path d="M1344 144h7v7h-7z" fill="#ff534a"/>
<path d="M1350 144h7v7h-7z" fill="#ff4d46"/>
<path d="M1356 144h7v7h-7z" fill="#ff4743"/>
<path d="M1362 144h7v7h-7z" fill="#ff4240"/>
<path d="M1368 144h7v7h-7z" fill="#ff3d3d"/>
<path d="M1374 144h7v7h-7z" fill="#ff393a"/>
<path d="M1380 144h7v7h-7z" fill="#ff3437"/>
<path d="M1386 144h7v7h-7z" fill="#ff3135"/>
<path d="M1392 144h7v7h-7z" fill="#ff2d33"/>
<path d="M1398 144h7v7h-7z" fill="#ff2931"/>
<path d="M1404 144h7v7h-7z" fill="#ff262f"/>
<path d="M1410 144h7v7h-7z" fill="#ff232d"/>
<path d="M1416 144h7v7h-7z" fill="#ff202b"/>
<path d="M1422 144h7v7h-7z" fill="#ff1d29"/>
<path d="M1428 144h7v7h-7z" fill="#ff1b27"/>
<path d="M1434 144h7v7h-7z" fill="#ff1826"/>
<path d="M1440 144h7v7h-7z" fill="#ff1624"/>
<path d="M1446 144h7v7h-7z" fill="#ff1423"/>
<path d="M1452 144h7v7h-7z" fill="#ff1122"/>
<path d="M1458 144h7v7h-7z" fill="#ff0f20"/>
<path d="M1464 144h7v7h-7z" fill="#ff0d1f"/>
<path d="M1470 144h7v7h-7z" fill="#ff0b1e"/>
<path d="M1476 144h7v7h-7z" fill="#ff0a1d"/>
<path d="M1482 144h7v7h-7z" fill="#ff081c"/>
<path d="M1488 144h7v7h-7z" fill="#ff061b"/>
<path d="M1494 144h7v7h-7z" fill="#ff051a"/>
<path d="M1500 144h7v7h-7z" fill="#ff0319"/>
<path d="M1506 144h7v7h-7z" fill="#ff0218"/>
<path d="M1512 144h7v7h-7z" fill="#ff0017"/>
<path d="M1518 144h13v7h-13z" fill="#ff0016"/>
<path d="M1530 144h7v7h-7z" fill="#ff0015"/>
<path d="M1536 144h7v7h-7z" fill="#ff0014"/>
<path d="M1542 144h13v7h-13z" fill="#ff0013"/>
<path d="M1554 144h7v7h-7z" fill="#ff0012"/>
<path d="M1560 144h13v7h-13z" fill="#ff0011"/>
<path d="M1572 144h7v7h-7z" fill="#ff0010"/>
<path d="M1578 144h13v7h-13z" fill="#ff000f"/>
<path d="M1590 144h13v7h-13z" fill="#ff000e"/>
<path d="M1602 144h13v7h-13z" fill="#ff000d"/>
<path d="M1614 144h13v7h-13z" fill="#ff000c"/>
<path d="M1626 144h13v7h-13z" fill="#ff000b"/>
<path d="M1638 144h13v7h-13z" fill="#ff000a"/>
<path d="M1650 144h19v7h-19z" fill="#ff0009"/>
<path d="M1668 144h19v7h-19z" fill="#ff0008"/>
<path d="M1686 144h13v7h-13z" fill="#ff0007"/>
<path d="M1698 144h19v7h-19z" fill="#ff0006"/>
<path d="M1716 144h25v7h-25z" fill="#ff0005"/>
<path d="M1044 150h7v7h-7z" fill="#00ff8f"/>
<path d="M1050 150h7v7h-7z" fill="#00ff90"/>
<path d="M1056 150h7v7h-7z" fill="#00ff91"/>
<path d="M1062 150h7v7h-7z" fill="#00ff92"/>
<path d="M1068 150h7v7h-7z" fill="#00ff93"/>
<path d="M1074 150h7v7h-7z" fill="#00ff94"/>
<path d="M1080 150h7v7h-7z" fill="#00ff95"/>
<path d="M1086 150h7v7h-7z" fill="#00ff96"/>
<path d="M1092 150h7v7h-7z" fill="#00ff97"/>
<path d="M1098 150h7v7h-7z" fill="#00ff98"/>
<path d="M1104 150h7v7h-7z" fill="#00ff99"/>
<path d="M1110 150h7v7h-7z" fill="#00ff9a"/>
<path d="M1116 150h7v7h-7z" fill="#00ff9b"/>
<path d="M1122 150h7v7h-7z" fill="#00ff9c"/>
<path d="M1128 150h7v7h-7z" fill="#00ff9e"/>
<path d="M1134 150h7v7h-7z" fill="#00ff9f"/>
<path d="M1140 150h7v7h-7z" fill="#00ffa0"/>
<path d="M1146 150h7v7h-7z" fill="#00ffa2"/>
<path d="M1152 150h7v7h-7z" fill="#00ffa3"/>
<path d="M1158 150h7v7h-7z" fill="#00ffa5"/>
<path d="M1164 150h7v7h-7z" fill="#00ffa6"/>
<path d="M1170 150h7v7h-7z" fill="#00ffa8"/>
<path d="M1176 150h7v7h-7z" fill="#00ffa9"/>
<path d="M1182 150h7v7h-7z" fill="#00ffab"/>
<path d="M1188 150h7v7h-7z" fill="#00ffad"/>
<path d="M1194 150h7v7h-7z" fill="#00ffaf"/>
<path d="M1200 150h7v7h-7z" fill="#0fffb1"/>
<path d="M1206 150h7v7h-7z" fill="#21ffb3"/>
<path d="M1212 150h7v7h-7z" fill="#34ffb5"/>
<path d="M1218 150h7v7h-7z" fill="#47ffb7"/>
<path d="M1224 150h7v7h-7z" fill="#5cffb9"/>
<path d="M1230 150h7v7h-7z" fill="#71ffbb"/>
<path d="M1236 150h7v7h-7z" fill="#87ffbe"/>
<path d="M1242 150h7v7h-7z" fill="#9effc0"/>
<path d="M1248 150h7v7h-7z" fill="#b6ffc3"/>
<path d="M1254 150h7v7h-7z" fill="#cfffc6"/>
<path d="M1260 150h7v7h-7z" fill="#eaffc9"/>
<path d="M1266 150h7v7h-7z" fill="#fff9c7"/>
<path d="M1272 150h7v7h-7z" fill="#ffe0b6"/>
<path d="M1278 150h7v7h-7z" fill="#ffcaa7"/>
<path d="M1284 150h7v7h-7z" fill="#ffb89a"/>
<path d="M1290 150h7v7h-7z" fill="#ffa88f"/>
<path d="M1296 150h7v7h-7z" fill="#ff9985"/>
<path d="M1302 150h7v7h-7z" fill="#ff8d7d"/>
<path d="M1308 150h7v7h-7z" fill="#ff8175"/>
<path d="M1314 150h7v7h-7z" fill="#ff776e"/>
<path d="M1320 150h7v7h-7z" fill="#ff6e68"/>
<path d="M1326 150h7v7h-7z" fill="#ff6662"/>
<path d="M1332 150h7v7h-7z" fill="#ff5e5d"/>
<path d="M1338 150h7v7h-7z" fill="#ff5758"/>
<path d="M1344 150h7v7h-7z" fill="#ff5053"/>
<path d="M1350 150h7v7h-7z" fill="#ff4b4f"/>
<path d="M1356 150h7v7h-7z" fill="#ff454c"/>
<path d="M1362 150h7v7h-7z" fill="#ff4048"/>
<path d="M1368 150h7v7h-7z" fill="#ff3b45"/>
<path d="M1374 150h7v7h-7z" fill="#ff3742"/>
<path d="M1380 150h7v7h-7z" fill="#ff333f"/>
<path d="M1386 150h7v7h-7z" fill="#ff2f3c"/>
<path d="M1392 150h7v7h-7z" fill="#ff2b3a"/>
<path d="M1398 150h7v7h-7z" fill="#ff2837"/>
<path d="M1404 150h7v7h-7z" fill="#ff2435"/>
<path d="M1410 150h7v7h-7z" fill="#ff2133"/>
<path d="M1416 150h7v7h-7z" fill="#ff1e31"/>
<path d="M1422 150h7v7h-7z" fill="#ff1c2f"/>
<path d="M1428 150h7v7h-7z" fill="#ff192d"/>
<path d="M1434 150h7v7h-7z" fill="#ff172c"/>
<path d="M1440 150h7v7h-7z" fill="#ff142a"/>
<path d="M1446 150h7v7h-7z" fill="#ff1229"/>
<path d="M1452 150h7v7h-7z" fill="#ff1027"/>
<path d="M1458 150h7v7h-7z" fill="#ff0e26"/>
<path d="M1464 150h7v7h-7z" fill="#ff0c24"/>
<path d="M1470 150h7v7h-7z" fill="#ff0a23"/>
<path d="M1476 150h7v7h-7z" fill="#ff0822"/>
<path d="M1482 150h7v7h-7z" fill="#ff0621"/>
<path d="M1488 150h7v7h-7z" fill="#ff0520"/>
<path d="M1494 150h7v7h-7z" fill="#ff031f"/>
<path d="M1500 150h7v7h-7z" fill="#ff021d"/>
<path d="M1506 150h13v7h-13z" fill="#ff001c"/>
<path d="M1518 150h7v7h-7z" fill="#ff001b"/>
<path d="M1524 150h7v7h-7z" fill="#ff001a"/>
<path d="M1530 150h7v7h-7z" fill="#ff0019"/>
<path d="M1536 150h7v7h-7z" fill="#ff0018"/>
<path d="M1542 150h7v7h-7z" fill="#ff0017"/>
<path d="M1548 150h13v7h-13z" fill="#ff0016"/>
<path d="M1560 150h7v7h-7z" fill="#ff0015"/>
<path d="M1566 150h13v7h-13z" fill="#ff0014"/>
<path d="M1578 150h7v7h-7z" fill="#ff0013"/>
<path d="M1584 150h13v7h-13z" fill="#ff0012"/>
<path d="M1596 150h13v7h-13z" fill="#ff0011"/>
<path d="M1608 150h7v7h-7z" fill="#ff0010"/>
<path d="M1614 150h13v7h-13z" fill="#ff000f"/>
<path d="M1626 150h13v7h-13z" fill="#ff000e"/>
<path d="M1638 150h13v7h-13z" fill="#ff000d"/>
<path d="M1650 150h19v7h-19z" fill="#ff000c"/>
<path d="M1668 150h13v7h-13z" fill="#ff000b"/>
<path d="M1680 150h19v7h-19z" fill="#ff000a"/>
<path d="M1698 150h13v7h-13z" fill="#ff0009"/>
<path d="M1710 150h19v7h-19z" fill="#ff0008"/>
<path d="M1728 150h7v7h-7z" fill="#ff0007"/>
<path d="M1050 156h7v7h-7z" fill="#00ff9c"/>
<path d="M1056 156h7v7h-7z" fill="#00ff9d"/>
<path d="M1062 156h7v7h-7z" fill="#00ff9e"/>
<path d="M1068 156h7v7h-7z" fill="#00ff9f"/>
<path d="M1074 156h7v7h-7z" fill="#00ffa0"/>
<path d="M1080 156h7v7h-7z" fill="#00ffa2"/>
<path d="M1086 156h7v7h-7z" fill="#00ffa3"/>
<path d="M1092 156h7v7h-7z" fill="#00ffa4"/>
<path d="M1098 156h7v7h-7z" fill="#00ffa5"/>
<path d="M1104 156h7v7h-7z" fill="#00ffa7"/>
<path d="M1110 156h7v7h-7z" fill="#00ffa8"/>
<path d="M1116 156h7v7h-7z" fill="#00ffaa"/>
<path d="M1122 156h7v7h-7z" fill="#00ffab"/>
<path d="M1128 156h7v7h-7z" fill="#00ffad"/>
<path d="M1134 156h7v7h-7z" fill="#00ffae"/>
<path d="M1140 156h7v7h-7z" fill="#00ffb0"/>
<path d="M1146 156h7v7h-7z" fill="#00ffb1"/>
<path d="M1152 156h7v7h-7z" fill="#00ffb3"/>
<path d="M1158 156h7v7h-7z" fill="#00ffb5"/>
<path d="M1164 156h7v7h-7z" fill="#00ffb7"/>
<path d="M1170 156h7v7h-7z" fill="#00ffb9"/>
<path d="M1176 156h7v7h-7z" fill="#00ffbb"/>
<path d="M1182 156h7v7h-7z" fill="#00ffbd"/>
<path d="M1188 156h7v7h-7z" fill="#00ffbf"/>
<path d="M1194 156h7v7h-7z" fill="#00ffc1"/>
<path d="M1200 156h7v7h-7z" fill="#0dffc3"/>
<path d="M1206 156h7v7h-7z" fill="#1fffc6"/>
<path d="M1212 156h7v7h-7z" fill="#32ffc8"/>
<path d="M1218 156h7v7h-7z" fill="#46ffcb"/>
<path d="M1224 156h7v7h-7z" fill="#5bffce"/>
<path d="M1230 156h7v7h-7z" fill="#70ffd0"/>
<path d="M1236 156h7v7h-7z" fill="#86ffd3"/>
<path d="M1242 156h7v7h-7z" fill="#9effd7"/>
<path d="M1248 156h7v7h-7z" fill="#b7ffda"/>
<path d="M1254 156h7v7h-7z" fill="#d0ffdd"/>
<path d="M1260 156h7v7h-7z" fill="#ecffe1"/>
<path d="M1266 156h7v7h-7z" fill="#fff6dd"/>
<path d="M1272 156h7v7h-7z" fill="#ffddca"/>
<path d="M1278 156h7v7h-7z" fill="#ffc8b9"/>
<path d="M1284 156h7v7h-7z" fill="#ffb5ab"/>
<path d="M1290 156h7v7h-7z" fill="#ffa59f"/>
<path d="M1296 156h7v7h-7z" fill="#ff9794"/>
<path d="M1302 156h7v7h-7z" fill="#ff8a8b"/>
<path d="M1308 156h7v7h-7z" fill="#ff7f82"/>
<path d="M1314 156h7v7h-7z" fill="#ff757a"/>
<path d="M1320 156h7v7h-7z" fill="#ff6b73"/>
<path d="M1326 156h7v7h-7z" fill="#ff636d"/>
<path d="M1332 156h7v7h-7z" fill="#ff5c67"/>
<path d="M1338 156h7v7h-7z" fill="#ff5562"/>
<path d="M1344 156h7v7h-7z" fill="#ff4e5d"/>
<path d="M1350 156h7v7h-7z" fill="#ff4859"/>
<path d="M1356 156h7v7h-7z" fill="#ff4354"/>
<path d="M1362 156h7v7h-7z" fill="#ff3e51"/>
<path d="M1368 156h7v7h-7z" fill="#ff394d"/>
<path d="M1374 156h7v7h-7z" fill="#ff354a"/>
<path d="M1380 156h7v7h-7z" fill="#ff3147"/>
<path d="M1386 156h7v7h-7z" fill="#ff2d44"/>
<path d="M1392 156h7v7h-7z" fill="#ff2941"/>
<path d="M1398 156h7v7h-7z" fill="#ff263e"/>
<path d="M1404 156h7v7h-7z" fill="#ff233c"/>
<path d="M1410 156h7v7h-7z" fill="#ff1f3a"/>
<path d="M1416 156h7v7h-7z" fill="#ff1d37"/>
<path d="M1422 156h7v7h-7z" fill="#ff1a35"/>
<path d="M1428 156h7v7h-7z" fill="#ff1733"/>
<path d="M1434 156h7v7h-7z" fill="#ff1532"/>
<path d="M1440 156h7v7h-7z" fill="#ff1330"/>
<path d="M1446 156h7v7h-7z" fill="#ff102e"/>
<path d="M1452 156h7v7h-7z" fill="#ff0e2d"/>
<path d="M1458 156h7v7h-7z" fill="#ff0c2b"/>
<path d="M1464 156h7v7h-7z" fill="#ff0a2a"/>
<path d="M1470 156h7v7h-7z" fill="#ff0928"/>
<path d="M1476 156h7v7h-7z" fill="#ff0727"/>
<path d="M1482 156h7v7h-7z" fill="#ff0526"/>
<path d="M1488 156h7v7h-7z" fill="#ff0324"/>
<path d="M1494 156h7v7h-7z" fill="#ff0223"/>
<path d="M1500 156h7v7h-7z" fill="#ff0022"/>
<path d="M1506 156h7v7h-7z" fill="#ff0021"/>
<path d="M1512 156h7v7h-7z" fill="#ff0020"/>
<path d="M1518 156h7v7h-7z" fill="#ff001f"/>
<path d="M1524 156h7v7h-7z" fill="#ff001e"/>
<path d="M1530 156h7v7h-7z" fill="#ff001d"/>
<path d="M1536 156h7v7h-7z" fill="#ff001c"/>
<path d="M1542 156h7v7h-7z" fill="#ff001b"/>
<path d="M1548 156h13v7h-13z" fill="#ff001a"/>
<path d="M1560 156h7v7h-7z" fill="#ff0019"/>
<path d="M1566 156h7v7h-7z" fill="#ff0018"/>
<path d="M1572 156h13v7h-13z" fill="#ff0017"/>
<path d="M1584 156h7v7h-7z" fill="#ff0016"/>
<path d="M1590 156h13v7h-13z" fill="#ff0015"/>
<path d="M1602 156h7v7h-7z" fill="#ff0014"/>
<path d="M1608 156h13v7h-13z" fill="#ff0013"/>
<path d="M1620 156h13v7h-13z" fill="#ff0012"/>
<path d="M1632 156h7v7h-7z" fill="#ff0011"/>
<path d="M1638 156h13v7h-13z" fill="#ff0010"/>
<path d="M1650 156h13v7h-13z" fill="#ff000f"/>
<path d="M1662 156h19v7h-19z" fill="#ff000e"/>
<path d="M1680 156h13v7h-13z" fill="#ff000d"/>
<path d="M1692 156h13v7h-13z" fill="#ff000c"/>
<path d="M1704 156h19v7h-19z" fill="#ff000b"/>
<path d="M1722 156h7v7h-7z" fill="#ff000a"/>
<path d="M1050 162h7v7h-7z" fill="#00ffa8"/>
<path d="M1056 162h7v7h-7z" fill="#00ffaa"/>
<path d="M1062 162h7v7h-7z" fill="#00ffab"/>
<path d="M1068 162h7v7h-7z" fill="#00ffac"/>
<path d="M1074 162h7v7h-7z" fill="#00ffae"/>
<path d="M1080 162h7v7h-7z" fill="#00ffaf"/>
<path d="M1086 162h7v7h-7z" fill="#00ffb1"/>
<path d="M1092 162h7v7h-7z" fill="#00ffb2"/>
<path d="M1098 162h7v7h-7z" fill="#00ffb4"/>
<path d="M1104 162h7v7h-7z" fill="#00ffb5"/>
<path d="M1110 162h7v7h-7z" fill="#00ffb7"/>
<path d="M1116 162h7v7h-7z" fill="#00ffb8"/>
<path d="M1122 162h7v7h-7z" fill="#00ffba"/>
<path d="M1128 162h7v7h-7z" fill="#00ffbc"/>
<path d="M1134 162h7v7h-7z" fill="#00ffbe"/>
<path d="M1140 162h7v7h-7z" fill="#00ffc0"/>
<path d="M1146 162h7v7h-7z" fill="#00ffc2"/>
<path d="M1152 162h7v7h-7z" fill="#00ffc4"/>
<path d="M1158 162h7v7h-7z" fill="#00ffc6"/>
<path d="M1164 162h7v7h-7z" fill="#00ffc8"/>
<path d="M1170 162h7v7h-7z" fill="#00ffca"/>
<path d="M1176 162h7v7h-7z" fill="#00ffcc"/>
<path d="M1182 162h7v7h-7z" fill="#00ffcf"/>
<path d="M1188 162h7v7h-7z" fill="#00ffd1"/>
<path d="M1194 162h7v7h-7z" fill="#00ffd4"/>
<path d="M1200 162h7v7h-7z" fill="#0bffd7"/>
<path d="M1206 162h7v7h-7z" fill="#1dffda"/>
<path d="M1212 162h7v7h-7z" fill="#30ffdd"/>
<path d="M1218 162h7v7h-7z" fill="#44ffe0"/>
<path d="M1224 162h7v7h-7z" fill="#59ffe3"/>
<path d="M1230 162h7v7h-7z" fill="#6fffe6"/>
<path d="M1236 162h7v7h-7z" fill="#86ffea"/>
<path d="M1242 162h7v7h-7z" fill="#9effee"/>
<path d="M1248 162h7v7h-7z" fill="#b7fff1"/>
<path d="M1254 162h7v7h-7z" fill="#d2fff6"/>
<path d="M1260 162h7v7h-7z" fill="#eefffa"/>
<path d="M1266 162h7v7h-7z" fill="#fff4f3"/>
<path d="M1272 162h7v7h-7z" fill="#ffdade"/>
<path d="M1278 162h7v7h-7z" fill="#ffc5cc"/>
<path d="M1284 162h7v7h-7z" fill="#ffb2bc"/>
<path d="M1290 162h7v7h-7z" fill="#ffa2af"/>
<path d="M1296 162h7v7h-7z" fill="#ff94a3"/>
<path d="M1302 162h7v7h-7z" fill="#ff8798"/>
<path d="M1308 162h7v7h-7z" fill="#ff7c8f"/>
<path d="M1314 162h7v7h-7z" fill="#ff7287"/>
<path d="M1320 162h7v7h-7z" fill="#ff697f"/>
<path d="M1326 162h7v7h-7z" fill="#ff6178"/>
<path d="M1332 162h7v7h-7z" fill="#ff5972"/>
<path d="M1338 162h7v7h-7z" fill="#ff526c"/>
<path d="M1344 162h7v7h-7z" fill="#ff4c67"/>
<path d="M1350 162h7v7h-7z" fill="#ff4662"/>
<path d="M1356 162h7v7h-7z" fill="#ff415d"/>
<path d="M1362 162h7v7h-7z" fill="#ff3c59"/>
<path d="M1368 162h7v7h-7z" fill="#ff3755"/>
<path d="M1374 162h7v7h-7z" fill="#ff3352"/>
<path d="M1380 162h7v7h-7z" fill="#ff2f4e"/>
<path d="M1386 162h7v7h-7z" fill="#ff2b4b"/>
<path d="M1392 162h7v7h-7z" fill="#ff2748"/>
<path d="M1398 162h7v7h-7z" fill="#ff2445"/>
<path d="M1404 162h7v7h-7z" fill="#ff2143"/>
<path d="M1410 162h7v7h-7z" fill="#ff1e40"/>
<path d="M1416 162h7v7h-7z" fill="#ff1b3e"/>
<path d="M1422 162h7v7h-7z" fill="#ff183c"/>
<path d="M1428 162h7v7h-7z" fill="#ff1639"/>
<path d="M1434 162h7v7h-7z" fill="#ff1337"/>
<path d="M1440 162h7v7h-7z" fill="#ff1135"/>
<path d="M1446 162h7v7h-7z" fill="#ff0f34"/>
<path d="M1452 162h7v7h-7z" fill="#ff0d32"/>
<path d="M1458 162h7v7h-7z" fill="#ff0b30"/>
<path d="M1464 162h7v7h-7z" fill="#ff092f"/>
<path d="M1470 162h7v7h-7z" fill="#ff072d"/>
<path d="M1476 162h7v7h-7z" fill="#ff052c"/>
<path d="M1482 162h7v7h-7z" fill="#ff042a"/>
<path d="M1488 162h7v7h-7z" fill="#ff0229"/>
<path d="M1494 162h7v7h-7z" fill="#ff0128"/>
<path d="M1500 162h7v7h-7z" fill="#ff0027"/>
<path d="M1506 162h7v7h-7z" fill="#ff0025"/>
<path d="M1512 162h7v7h-7z" fill="#ff0024"/>
<path d="M1518 162h7v7h-7z" fill="#ff0023"/>
<path d="M1524 162h7v7h-7z" fill="#ff0022"/>
<path d="M1530 162h7v7h-7z" fill="#ff0021"/>
<path d="M1536 162h7v7h-7z" fill="#ff0020"/>
<path d="M1542 162h7v7h-7z" fill="#ff001f"/>
<path d="M1548 162h7v7h-7z" fill="#ff001e"/>
<path d="M1554 162h13v7h-13z" fill="#ff001d"/>
<path d="M1566 162h7v7h-7z" fill="#ff001c"/>
<path d="M1572 162h7v7h-7z" fill="#ff001b"/>
<path d="M1578 162h7v7h-7z" fill="#ff001a"/>
<path d="M1584 162h13v7h-13z" fill="#ff0019"/>
<path d="M1596 162h7v7h-7z" fill="#ff0018"/>
<path d="M1602 162h13v7h-13z" fill="#ff0017"/>
<path d="M1614 162h7v7h-7z" fill="#ff0016"/>
<path d="M1620 162h13v7h-13z" fill="#ff0015"/>
<path d="M1632 162h13v7h-13z" fill="#ff0014"/>
<path d="M1644 162h7v7h-7z" fill="#ff0013"/>
<path d="M1650 162h13v7h-13z" fill="#ff0012"/>
<path d="M1662 162h13v7h-13z" fill="#ff0011"/>
<path d="M1674 162h13v7h-13z" fill="#ff0010"/>
<path d="M1686 162h19v7h-19z" fill="#ff000f"/>
<path d="M1704 162h13v7h-13z" fill="#ff000e"/>
<path d="M1716 162h7v7h-7z" fill="#ff000d"/>
<path d="M1050 168h7v7h-7z" fill="#00ffb5"/>
<path d="M1056 168h7v7h-7z" fill="#00ffb7"/>
<path d="M1062 168h7v7h-7z" fill="#00ffb8"/>
<path d="M1068 168h7v7h-7z" fill="#00ffba"/>
<path d="M1074 168h7v7h-7z" fill="#00ffbb"/>
<path d="M1080 168h7v7h-7z" fill="#00ffbd"/>
<path d="M1086 168h7v7h-7z" fill="#00ffbe"/>
<path d="M1092 168h7v7h-7z" fill="#00ffc0"/>
<path d="M1098 168h7v7h-7z" fill="#00ffc2"/>
<path d="M1104 168h7v7h-7z" fill="#00ffc4"/>
<path d="M1110 168h7v7h-7z" fill="#00ffc6"/>
<path d="M1116 168h7v7h-7z" fill="#00ffc8"/>
<path d="M1122 168h7v7h-7z" fill="#00ffca"/>
<path d="M1128 168h7v7h-7z" fill="#00ffcc"/>
<path d="M1134 168h7v7h-7z" fill="#00ffce"/>
<path d="M1140 168h7v7h-7z" fill="#00ffd0"/>
<path d="M1146 168h7v7h-7z" fill="#00ffd2"/>
<path d="M1152 168h7v7h-7z" fill="#00ffd5"/>
<path d="M1158 168h7v7h-7z" fill="#00ffd7"/>
<path d="M1164 168h7v7h-7z" fill="#00ffda"/>
<path d="M1170 168h7v7h-7z" fill="#00ffdc"/>
<path d="M1176 168h7v7h-7z" fill="#00ffdf"/>
<path d="M1182 168h7v7h-7z" fill="#00ffe2"/>
<path d="M1188 168h7v7h-7z" fill="#00ffe5"/>
<path d="M1194 168h7v7h-7z" fill="#00ffe8"/>
<path d="M1200 168h7v7h-7z" fill="#08ffeb"/>
<path d="M1206 168h7v7h-7z" fill="#1bffee"/>
<path d="M1212 168h7v7h-7z" fill="#2efff2"/>
<path d="M1218 168h7v7h-7z" fill="#43fff5"/>
<path d="M1224 168h7v7h-7z" fill="#58fff9"/>
<path d="M1230 168h7v7h-7z" fill="#6ffffd"/>
<path d="M1236 168h7v7h-7z" fill="#85fdff"/>
<path d="M1242 168h7v7h-7z" fill="#9bf8ff"/>
<path d="M1248 168h7v7h-7z" fill="#b1f4ff"/>
<path d="M1254 168h7v7h-7z" fill="#c7f0ff"/>
<path d="M1260 168h7v7h-7z" fill="#deecff"/>
<path d="M1266 168h7v7h-7z" fill="#f5e7ff"/>
<path d="M1272 168h7v7h-7z" fill="#ffd8f3"/>
<path d="M1278 168h7v7h-7z" fill="#ffc2df"/>
<path d="M1284 168h7v7h-7z" fill="#ffb0ce"/>
<path d="M1290 168h7v7h-7z" fill="#ff9fbf"/>
<path d="M1296 168h7v7h-7z" fill="#ff91b2"/>
<path d="M1302 168h7v7h-7z" fill="#ff85a7"/>
<path d="M1308 168h7v7h-7z" fill="#ff799c"/>
<path d="M1314 168h7v7h-7z" fill="#ff6f93"/>
<path d="M1320 168h7v7h-7z" fill="#ff668b"/>
<path d="M1326 168h7v7h-7z" fill="#ff5e83"/>
<path d="M1332 168h7v7h-7z" fill="#ff577d"/>
<path d="M1338 168h7v7h-7z" fill="#ff5076"/>
<path d="M1344 168h7v7h-7z" fill="#ff4a71"/>
<path d="M1350 168h7v7h-7z" fill="#ff446b"/>
<path d="M1356 168h7v7h-7z" fill="#ff3e66"/>
<path d="M1362 168h7v7h-7z" fill="#ff3962"/>
<path d="M1368 168h7v7h-7z" fill="#ff355e"/>
<path d="M1374 168h7v7h-7z" fill="#ff315a"/>
<path d="M1380 168h7v7h-7z" fill="#ff2d56"/>
<path d="M1386 168h7v7h-7z" fill="#ff2953"/>
<path d="M1392 168h7v7h-7z" fill="#ff254f"/>
<path d="M1398 168h7v7h-7z" fill="#ff224c"/>
<path d="M1404 168h7v7h-7z" fill="#ff1f49"/>
<path d="M1410 168h7v7h-7z" fill="#ff1c47"/>
<path d="M1416 168h7v7h-7z" fill="#ff1944"/>
<path d="M1422 168h7v7h-7z" fill="#ff1642"/>
<path d="M1428 168h7v7h-7z" fill="#ff143f"/>
<path d="M1434 168h7v7h-7z" fill="#ff123d"/>
<path d="M1440 168h7v7h-7z" fill="#ff0f3b"/>
<path d="M1446 168h7v7h-7z" fill="#ff0d39"/>
<path d="M1452 168h7v7h-7z" fill="#ff0b37"/>
<path d="M1458 168h7v7h-7z" fill="#ff0936"/>
<path d="M1464 168h7v7h-7z" fill="#ff0734"/>
<path d="M1470 168h7v7h-7z" fill="#ff0632"/>
<path d="M1476 168h7v7h-7z" fill="#ff0431"/>
<path d="M1482 168h7v7h-7z" fill="#ff022f"/>
<path d="M1488 168h7v7h-7z" fill="#ff012e"/>
<path d="M1494 168h7v7h-7z" fill="#ff002c"/>
<path d="M1500 168h7v7h-7z" fill="#ff002b"/>
<path d="M1506 168h7v7h-7z" fill="#ff002a"/>
<path d="M1512 168h7v7h-7z" fill="#ff0029"/>
<path d="M1518 168h7v7h-7z" fill="#ff0027"/>
<path d="M1524 168h7v7h-7z" fill="#ff0026"/>
<path d="M1530 168h7v7h-7z" fill="#ff0025"/>
<path d="M1536 168h7v7h-7z" fill="#ff0024"/>
<path d="M1542 168h7v7h-7z" fill="#ff0023"/>
<path d="M1548 168h7v7h-7z" fill="#ff0022"/>
<path d="M1554 168h7v7h-7z" fill="#ff0021"/>
<path d="M1560 168h7v7h-7z" fill="#ff0020"/>
<path d="M1566 168h13v7h-13z" fill="#ff001f"/>
<path d="M1578 168h7v7h-7z" fill="#ff001e"/>
<path d="M1584 168h7v7h-7z" fill="#ff001d"/>
<path d="M1590 168h7v7h-7z" fill="#ff001c"/>
<path d="M1596 168h13v7h-13z" fill="#ff001b"/>
<path d="M1608 168h7v7h-7z" fill="#ff001a"/>
<path d="M1614 168h13v7h-13z" fill="#ff0019"/>
<path d="M1626 168h7v7h-7z" fill="#ff0018"/>
<path d="M1632 168h13v7h-13z" fill="#ff0017"/>
<path d="M1644 168h7v7h-7z" fill="#ff0016"/>
<path d="M1650 168h13v7h-13z" fill="#ff0015"/>
<path d="M1662 168h13v7h-13z" fill="#ff0014"/>
<path d="M1674 168h13v7h-13z" fill="#ff0013"/>
<path d="M1686 168h13v7h-13z" fill="#ff0012"/>
<path d="M1698 168h13v7h-13z" fill="#ff0011"/>
<path d="M1710 168h7v7h-7z" fill="#ff0010"/>
<path d="M1050 174h7v7h-7z" fill="#00ffc2"/>
<path d="M1056 174h7v7h-7z" fill="#00ffc4"/>
<path d="M1062 174h7v7h-7z" fill="#00ffc6"/>
<path d="M1068 174h7v7h-7z" fill="#00ffc7"/>
<path d="M1074 174h7v7h-7z" fill="#00ffc9"/>
<path d="M1080 174h7v7h-7z" fill="#00ffcb"/>
<path d="M1086 174h7v7h-7z" fill="#00ffcd"/>
<path d="M1092 174h7v7h-7z" fill="#00ffcf"/>
<path d="M1098 174h7v7h-7z" fill="#00ffd1"/>
<path d="M1104 174h7v7h-7z" fill="#00ffd3"/>
<path d="M1110 174h7v7h-7z" fill="#00ffd5"/>
<path d="M1116 174h7v7h-7z" fill="#00ffd7"/>
<path d="M1122 174h7v7h-7z" fill="#00ffda"/>
<path d="M1128 174h7v7h-7z" fill="#00ffdc"/>
<path d="M1134 174h7v7h-7z" fill="#00ffde"/>
<path d="M1140 174h7v7h-7z" fill="#00ffe1"/>
<path d="M1146 174h7v7h-7z" fill="#00ffe3"/>
<path d="M1152 174h7v7h-7z" fill="#00ffe6"/>
<path d="M1158 174h7v7h-7z" fill="#00ffe9"/>
<path d="M1164 174h7v7h-7z" fill="#00ffec"/>
<path d="M1170 174h7v7h-7z" fill="#00ffef"/>
<path d="M1176 174h7v7h-7z" fill="#00fff2"/>
<path d="M1182 174h7v7h-7z" fill="#00fff5"/>
<path d="M1188 174h7v7h-7z" fill="#00fff9"/>
<path d="M1194 174h7v7h-7z" fill="#00fffc"/>
<path d="M1200 174h7v7h-7z" fill="#05feff"/>
<path d="M1206 174h7v7h-7z" fill="#18faff"/>
<path d="M1212 174h7v7h-7z" fill="#2bf6ff"/>
<path d="M1218 174h7v7h-7z" fill="#3ef3ff"/>
<path d="M1224 174h7v7h-7z" fill="#51efff"/>
<path d="M1230 174h7v7h-7z" fill="#65ebff"/>
<path d="M1236 174h7v7h-7z" fill="#79e7ff"/>
<path d="M1242 174h7v7h-7z" fill="#8de3ff"/>
<path d="M1248 174h7v7h-7z" fill="#a2dfff"/>
<path d="M1254 174h7v7h-7z" fill="#b6daff"/>
<path d="M1260 174h7v7h-7z" fill="#cbd6ff"/>
<path d="M1266 174h7v7h-7z" fill="#e1d2ff"/>
<path d="M1272 174h7v7h-7z" fill="#f6cdff"/>
<path d="M1278 174h7v7h-7z" fill="#ffbff2"/>
<path d="M1284 174h7v7h-7z" fill="#ffade0"/>
<path d="M1290 174h7v7h-7z" fill="#ff9dd0"/>
<path d="M1296 174h7v7h-7z" fill="#ff8ec2"/>
<path d="M1302 174h7v7h-7z" fill="#ff82b5"/>
<path d="M1308 174h7v7h-7z" fill="#ff77aa"/>
<path d="M1314 174h7v7h-7z" fill="#ff6da0"/>
<path d="M1320 174h7v7h-7z" fill="#ff6497"/>
<path d="M1326 174h7v7h-7z" fill="#ff5c8f"/>
<path d="M1332 174h7v7h-7z" fill="#ff5488"/>
<path d="M1338 174h7v7h-7z" fill="#ff4d81"/>
<path d="M1344 174h7v7h-7z" fill="#ff477b"/>
<path d="M1350 174h7v7h-7z" fill="#ff4275"/>
<path d="M1356 174h7v7h-7z" fill="#ff3c70"/>
<path d="M1362 174h7v7h-7z" fill="#ff376b"/>
<path d="M1368 174h7v7h-7z" fill="#ff3366"/>
<path d="M1374 174h7v7h-7z" fill="#ff2f62"/>
<path d="M1380 174h7v7h-7z" fill="#ff2b5e"/>
<path d="M1386 174h7v7h-7z" fill="#ff275a"/>
<path d="M1392 174h7v7h-7z" fill="#ff2357"/>
<path d="M1398 174h7v7h-7z" fill="#ff2053"/>
<path d="M1404 174h7v7h-7z" fill="#ff1d50"/>
<path d="M1410 174h7v7h-7z" fill="#ff1a4d"/>
<path d="M1416 174h7v7h-7z" fill="#ff174b"/>
<path d="M1422 174h7v7h-7z" fill="#ff1548"/>
<path d="M1428 174h7v7h-7z" fill="#ff1246"/>
<path d="M1434 174h7v7h-7z" fill="#ff1043"/>
<path d="M1440 174h7v7h-7z" fill="#ff0e41"/>
<path d="M1446 174h7v7h-7z" fill="#ff0c3f"/>
<path d="M1452 174h7v7h-7z" fill="#ff0a3d"/>
<path d="M1458 174h7v7h-7z" fill="#ff083b"/>
<path d="M1464 174h7v7h-7z" fill="#ff0639"/>
<path d="M1470 174h7v7h-7z" fill="#ff0437"/>
<path d="M1476 174h7v7h-7z" fill="#ff0236"/>
<path d="M1482 174h7v7h-7z" fill="#ff0134"/>
<path d="M1488 174h7v7h-7z" fill="#ff0033"/>
<path d="M1494 174h7v7h-7z" fill="#ff0031"/>
<path d="M1500 174h7v7h-7z" fill="#ff0030"/>
<path d="M1506 174h7v7h-7z" fill="#ff002e"/>
<path d="M1512 174h7v7h-7z" fill="#ff002d"/>
<path d="M1518 174h7v7h-7z" fill="#ff002c"/>
<path d="M1524 174h7v7h-7z" fill="#ff002b"/>
<path d="M1530 174h7v7h-7z" fill="#ff0029"/>
<path d="M1536 174h7v7h-7z" fill="#ff0028"/>
<path d="M1542 174h7v7h-7z" fill="#ff0027"/>
<path d="M1548 174h7v7h-7z" fill="#ff0026"/>
<path d="M1554 174h7v7h-7z" fill="#ff0025"/>
<path d="M1560 174h7v7h-7z" fill="#ff0024"/>
<path d="M1566 174h7v7h-7z" fill="#ff0023"/>
<path d="M1572 174h7v7h-7z" fill="#ff0022"/>
<path d="M1578 174h7v7h-7z" fill="#ff0021"/>
<path d="M1584 174h13v7h-13z" fill="#ff0020"/>
<path d="M1596 174h7v7h-7z" fill="#ff001f"/>
<path d="M1602 174h7v7h-7z" fill="#ff001e"/>
<path d="M1608 174h13v7h-13z" fill="#ff001d"/>
<path d="M1620 174h7v7h-7z" fill="#ff001c"/>
<path d="M1626 174h7v7h-7z" fill="#ff001b"/>
<path d="M1632 174h13v7h-13z" fill="#ff001a"/>
<path d="M1644 174h7v7h-7z" fill="#ff0019"/>
<path d="M1650 174h13v7h-13z" fill="#ff0018"/>
<path d="M1662 174h13v7h-13z" fill="#ff0017"/>
<path d="M1674 174h13v7h-13z" fill="#ff0016"/>
<path d="M1686 174h13v7h-13z" fill="#ff0015"/>
<path d="M1698 174h7v7h-7z" fill="#ff0014"/>
<path d="M1704 174h13v7h-13z" fill="#ff0013"/>
<path d="M1056 180h7v7h-7z" fill="#00ffd1"/>
<path d="M1062 180h7v7h-7z" fill="#00ffd3"/>
<path d="M1068 180h7v7h-7z" fill="#00ffd5"/>
<path d="M1074 180h7v7h-7z" fill="#00ffd7"/>
<path d="M1080 180h7v7h-7z" fill="#00ffd9"/>
<path d="M1086 180h7v7h-7z" fill="#00ffdc"/>
<path d="M1092 180h7v7h-7z" fill="#00ffde"/>
<path d="M1098 180h7v7h-7z" fill="#00ffe0"/>
<path d="M1104 180h7v7h-7z" fill="#00ffe2"/>
<path d="M1110 180h7v7h-7z" fill="#00ffe5"/>
<path d="M1116 180h7v7h-7z" fill="#00ffe7"/>
<path d="M1122 180h7v7h-7z" fill="#00ffea"/>
<path d="M1128 180h7v7h-7z" fill="#00ffed"/>
<path d="M1134 180h7v7h-7z" fill="#00ffef"/>
<path d="M1140 180h7v7h-7z" fill="#00fff2"/>
<path d="M1146 180h7v7h-7z" fill="#00fff5"/>
<path d="M1152 180h7v7h-7z" fill="#00fff8"/>
<path d="M1158 180h7v7h-7z" fill="#00fffc"/>
<path d="M1164 180h7v7h-7z" fill="#00ffff"/>
<path d="M1170 180h7v7h-7z" fill="#00fcff"/>
<path d="M1176 180h7v7h-7z" fill="#00f8ff"/>
<path d="M1182 180h7v7h-7z" fill="#00f5ff"/>
<path d="M1188 180h7v7h-7z" fill="#00f1ff"/>
<path d="M1194 180h7v7h-7z" fill="#00eeff"/>
<path d="M1200 180h7v7h-7z" fill="#02eaff"/>
<path d="M1206 180h7v7h-7z" fill="#14e6ff"/>
<path d="M1212 180h7v7h-7z" fill="#25e3ff"/>
<path d="M1218 180h7v7h-7z" fill="#37dfff"/>
<path d="M1224 180h7v7h-7z" fill="#4adbff"/>
<path d="M1230 180h7v7h-7z" fill="#5cd7ff"/>
<path d="M1236 180h7v7h-7z" fill="#6fd3ff"/>
<path d="M1242 180h7v7h-7z" fill="#82d0ff"/>
<path d="M1248 180h7v7h-7z" fill="#95ccff"/>
<path d="M1254 180h7v7h-7z" fill="#a8c8ff"/>
<path d="M1260 180h7v7h-7z" fill="#bcc3ff"/>
<path d="M1266 180h7v7h-7z" fill="#cfbfff"/>
<path d="M1272 180h7v7h-7z" fill="#e3bbff"/>
<path d="M1278 180h7v7h-7z" fill="#f8b7ff"/>
<path d="M1284 180h7v7h-7z" fill="#ffaaf2"/>
<path d="M1290 180h7v7h-7z" fill="#ff9ae1"/>
<path d="M1296 180h7v7h-7z" fill="#ff8cd1"/>
<path d="M1302 180h7v7h-7z" fill="#ff7fc4"/>
<path d="M1308 180h7v7h-7z" fill="#ff74b8"/>
<path d="M1314 180h7v7h-7z" fill="#ff6aad"/>
<path d="M1320 180h7v7h-7z" fill="#ff61a3"/>
<path d="M1326 180h7v7h-7z" fill="#ff599b"/>
<path d="M1332 180h7v7h-7z" fill="#ff5293"/>
<path d="M1338 180h7v7h-7z" fill="#ff4b8b"/>
<path d="M1344 180h7v7h-7z" fill="#ff4585"/>
<path d="M1350 180h7v7h-7z" fill="#ff3f7e"/>
<path d="M1356 180h7v7h-7z" fill="#ff3a79"/>
<path d="M1362 180h7v7h-7z" fill="#ff3574"/>
<path d="M1368 180h7v7h-7z" fill="#ff316f"/>
<path d="M1374 180h7v7h-7z" fill="#ff2c6a"/>
<path d="M1380 180h7v7h-7z" fill="#ff2866"/>
<path d="M1386 180h7v7h-7z" fill="#ff2562"/>
<path d="M1392 180h7v7h-7z" fill="#ff215e"/>
<path d="M1398 180h7v7h-7z" fill="#ff1e5b"/>
<path d="M1404 180h7v7h-7z" fill="#ff1b57"/>
<path d="M1410 180h7v7h-7z" fill="#ff1854"/>
<path d="M1416 180h7v7h-7z" fill="#ff1651"/>
<path d="M1422 180h7v7h-7z" fill="#ff134e"/>
<path d="M1428 180h7v7h-7z" fill="#ff114c"/>
<path d="M1434 180h7v7h-7z" fill="#ff0e49"/>
<path d="M1440 180h7v7h-7z" fill="#ff0c47"/>
<path d="M1446 180h7v7h-7z" fill="#ff0a45"/>
<path d="M1452 180h7v7h-7z" fill="#ff0842"/>
<path d="M1458 180h7v7h-7z" fill="#ff0640"/>
<path d="M1464 180h7v7h-7z" fill="#ff043e"/>
<path d="M1470 180h7v7h-7z" fill="#ff033d"/>
<path d="M1476 180h7v7h-7z" fill="#ff013b"/>
<path d="M1482 180h7v7h-7z" fill="#ff0039"/>
<path d="M1488 180h7v7h-7z" fill="#ff0037"/>
<path d="M1494 180h7v7h-7z" fill="#ff0036"/>
<path d="M1500 180h7v7h-7z" fill="#ff0034"/>
<path d="M1506 180h7v7h-7z" fill="#ff0033"/>
<path d="M1512 180h7v7h-7z" fill="#ff0031"/>
<path d="M1518 180h7v7h-7z" fill="#ff0030"/>
<path d="M1524 180h7v7h-7z" fill="#ff002f"/>
<path d="M1530 180h7v7h-7z" fill="#ff002e"/>
<path d="M1536 180h7v7h-7z" fill="#ff002c"/>
<path d="M1542 180h7v7h-7z" fill="#ff002b"/>
<path d="M1548 180h7v7h-7z" fill="#ff002a"/>
<path d="M1554 180h7v7h-7z" fill="#ff0029"/>
<path d="M1560 180h7v7h-7z" fill="#ff0028"/>
<path d="M1566 180h7v7h-7z" fill="#ff0027"/>
<path d="M1572 180h7v7h-7z" fill="#ff0026"/>
<path d="M1578 180h7v7h-7z" fill="#ff0025"/>
<path d="M1584 180h7v7h-7z" fill="#ff0024"/>
<path d="M1590 180h7v7h-7z" fill="#ff0023"/>
<path d="M1596 180h7v7h-7z" fill="#ff0022"/>
<path d="M1602 180h13v7h-13z" fill="#ff0021"/>
<path d="M1614 180h7v7h-7z" fill="#ff0020"/>
<path d="M1620 180h7v7h-7z" fill="#ff001f"/>
<path d="M1626 180h13v7h-13z" fill="#ff001e"/>
<path d="M1638 180h7v7h-7z" fill="#ff001d"/>
<path d="M1644 180h13v7h-13z" fill="#ff001c"/>
<path d="M1656 180h7v7h-7z" fill="#ff001b"/>
<path d="M1662 180h13v7h-13z" fill="#ff001a"/>
<path d="M1674 180h7v7h-7z" fill="#ff0019"/>
<path d="M1680 180h13v7h-13z" fill="#ff0018"/>
<path d="M1692 180h13v7h-13z" fill="#ff0017"/>
<path d="M1704 180h7v7h-7z" fill="#ff0016"/>
<path d="M1056 186h7v7h-7z" fill="#00ffdf"/>
<path d="M1062 186h7v7h-7z" fill="#00ffe2"/>
<path d="M1068 186h7v7h-7z" fill="#00ffe4"/>
<path d="M1074 186h7v7h-7z" fill="#00ffe6"/>
<path d="M1080 186h7v7h-7z" fill="#00ffe8"/>
<path d="M1086 186h7v7h-7z" fill="#00ffeb"/>
<path d="M1092 186h7v7h-7z" fill="#00ffed"/>
<path d="M1098 186h7v7h-7z" fill="#00fff0"/>
<path d="M1104 186h7v7h-7z" fill="#00fff2"/>
<path d="M1110 186h7v7h-7z" fill="#00fff5"/>
<path d="M1116 186h7v7h-7z" fill="#00fff8"/>
<path d="M1122 186h7v7h-7z" fill="#00fffb"/>
<path d="M1128 186h7v7h-7z" fill="#00fffe"/>
<path d="M1134 186h7v7h-7z" fill="#00fdff"/>
<path d="M1140 186h7v7h-7z" fill="#00faff"/>
<path d="M1146 186h7v7h-7z" fill="#00f7ff"/>
<path d="M1152 186h7v7h-7z" fill="#00f3ff"/>
<path d="M1158 186h7v7h-7z" fill="#00f0ff"/>
<path d="M1164 186h7v7h-7z" fill="#00edff"/>
<path d="M1170 186h7v7h-7z" fill="#00eaff"/>
<path d="M1176 186h7v7h-7z" fill="#00e6ff"/>
<path d="M1182 186h7v7h-7z" fill="#00e3ff"/>
<path d="M1188 186h7v7h-7z" fill="#00dfff"/>
<path d="M1194 186h7v7h-7z" fill="#00dcff"/>
<path d="M1200 186h7v7h-7z" fill="#00d8ff"/>
<path d="M1206 186h7v7h-7z" fill="#10d5ff"/>
<path d="M1212 186h7v7h-7z" fill="#21d1ff"/>
<path d="M1218 186h7v7h-7z" fill="#32ceff"/>
<path d="M1224 186h7v7h-7z" fill="#43caff"/>
<path d="M1230 186h7v7h-7z" fill="#54c6ff"/>
<path d="M1236 186h7v7h-7z" fill="#66c3ff"/>
<path d="M1242 186h7v7h-7z" fill="#77bfff"/>
<path d="M1248 186h7v7h-7z" fill="#89bbff"/>
<path d="M1254 186h7v7h-7z" fill="#9bb7ff"/>
<path d="M1260 186h7v7h-7z" fill="#aeb3ff"/>
<path d="M1266 186h7v7h-7z" fill="#c0afff"/>
<path d="M1272 186h7v7h-7z" fill="#d3abff"/>
<path d="M1278 186h7v7h-7z" fill="#e6a7ff"/>
<path d="M1284 186h7v7h-7z" fill="#f9a3ff"/>
<path d="M1290 186h7v7h-7z" fill="#ff97f2"/>
<path d="M1296 186h7v7h-7z" fill="#ff89e2"/>
<path d="M1302 186h7v7h-7z" fill="#ff7cd3"/>
<path d="M1308 186h7v7h-7z" fill="#ff71c6"/>
<path d="M1314 186h7v7h-7z" fill="#ff67ba"/>
<path d="M1320 186h7v7h-7z" fill="#ff5eb0"/>
<path d="M1326 186h7v7h-7z" fill="#ff56a6"/>
<path d="M1332 186h7v7h-7z" fill="#ff4f9e"/>
<path d="M1338 186h7v7h-7z" fill="#ff4996"/>
<path d="M1344 186h7v7h-7z" fill="#ff428f"/>
<path d="M1350 186h7v7h-7z" fill="#ff3d88"/>
<path d="M1356 186h7v7h-7z" fill="#ff3882"/>
<path d="M1362 186h7v7h-7z" fill="#ff337c"/>
<path d="M1368 186h7v7h-7z" fill="#ff2e77"/>
<path d="M1374 186h7v7h-7z" fill="#ff2a72"/>
<path d="M1380 186h7v7h-7z" fill="#ff266e"/>
<path d="M1386 186h7v7h-7z" fill="#ff236a"/>
<path d="M1392 186h7v7h-7z" fill="#ff1f66"/>
<path d="M1398 186h7v7h-7z" fill="#ff1c62"/>
<path d="M1404 186h7v7h-7z" fill="#ff195e"/>
<path d="M1410 186h7v7h-7z" fill="#ff165b"/>
<path d="M1416 186h7v7h-7z" fill="#ff1458"/>
<path d="M1422 186h7v7h-7z" fill="#ff1155"/>
<path d="M1428 186h7v7h-7z" fill="#ff0f52"/>
<path d="M1434 186h7v7h-7z" fill="#ff0d4f"/>
<path d="M1440 186h7v7h-7z" fill="#ff0a4d"/>
<path d="M1446 186h7v7h-7z" fill="#ff084a"/>
<path d="M1452 186h7v7h-7z" fill="#ff0648"/>
<path d="M1458 186h7v7h-7z" fill="#ff0546"/>
<path d="M1464 186h7v7h-7z" fill="#ff0344"/>
<path d="M1470 186h7v7h-7z" fill="#ff0142"/>
<path d="M1476 186h7v7h-7z" fill="#ff0040"/>
<path d="M1482 186h7v7h-7z" fill="#ff003e"/>
<path d="M1488 186h7v7h-7z" fill="#ff003c"/>
<path d="M1494 186h7v7h-7z" fill="#ff003b"/>
<path d="M1500 186h7v7h-7z" fill="#ff0039"/>
<path d="M1506 186h7v7h-7z" fill="#ff0037"/>
<path d="M1512 186h7v7h-7z" fill="#ff0036"/>
<path d="M1518 186h7v7h-7z" fill="#ff0034"/>
<path d="M1524 186h7v7h-7z" fill="#ff0033"/>
<path d="M1530 186h7v7h-7z" fill="#ff0032"/>
<path d="M1536 186h7v7h-7z" fill="#ff0030"/>
<path d="M1542 186h7v7h-7z" fill="#ff002f"/>
<path d="M1548 186h7v7h-7z" fill="#ff002e"/>
<path d="M1554 186h7v7h-7z" fill="#ff002d"/>
<path d="M1560 186h7v7h-7z" fill="#ff002c"/>
<path d="M1566 186h7v7h-7z" fill="#ff002b"/>
<path d="M1572 186h7v7h-7z" fill="#ff002a"/>
<path d="M1578 186h7v7h-7z" fill="#ff0029"/>
<path d="M1584 186h7v7h-7z" fill="#ff0028"/>
<path d="M1590 186h7v7h-7z" fill="#ff0027"/>
<path d="M1596 186h7v7h-7z" fill="#ff0026"/>
<path d="M1602 186h7v7h-7z" fill="#ff0025"/>
<path d="M1608 186h7v7h-7z" fill="#ff0024"/>
<path d="M1614 186h7v7h-7z" fill="#ff0023"/>
<path d="M1620 186h13v7h-13z" fill="#ff0022"/>
<path d="M1632 186h7v7h-7z" fill="#ff0021"/>
<path d="M1638 186h7v7h-7z" fill="#ff0020"/>
<path d="M1644 186h13v7h-13z" fill="#ff001f"/>
<path d="M1656 186h7v7h-7z" fill="#ff001e"/>
<path d="M1662 186h13v7h-13z" fill="#ff001d"/>
<path d="M1674 186h7v7h-7z" fill="#ff001c"/>
<path d="M1680 186h13v7h-13z" fill="#ff001b"/>
<path d="M1692 186h7v7h-7z" fill="#ff001a"/>
<path d="M1698 186h7v7h-7z" fill="#ff0019"/>
<path d="M1056 192h7v7h-7z" fill="#00ffee"/>
<path d="M1062 192h7v7h-7z" fill="#00fff0"/>
<path d="M1068 192h7v7h-7z" fill="#00fff3"/>
<path d="M1074 192h7v7h-7z" fill="#00fff5"/>
<path d="M1080 192h7v7h-7z" fill="#00fff8"/>
<path d="M1086 192h7v7h-7z" fill="#00fffa"/>
<path d="M1092 192h7v7h-7z" fill="#00fffd"/>
<path d="M1098 192h7v7h-7z" fill="#00feff"/>
<path d="M1104 192h7v7h-7z" fill="#00fbff"/>
<path d="M1110 192h7v7h-7z" fill="#00f8ff"/>
<path d="M1116 192h7v7h-7z" fill="#00f5ff"/>
<path d="M1122 192h7v7h-7z" fill="#00f2ff"/>
<path d="M1128 192h7v7h-7z" fill="#00efff"/>
<path d="M1134 192h7v7h-7z" fill="#00ecff"/>
<path d="M1140 192h7v7h-7z" fill="#00e9ff"/>
<path d="M1146 192h7v7h-7z" fill="#00e6ff"/>
<path d="M1152 192h7v7h-7z" fill="#00e3ff"/>
<path d="M1158 192h7v7h-7z" fill="#00e0ff"/>
<path d="M1164 192h7v7h-7z" fill="#00ddff"/>
<path d="M1170 192h7v7h-7z" fill="#00d9ff"/>
<path d="M1176 192h7v7h-7z" fill="#00d6ff"/>
<path d="M1182 192h7v7h-7z" fill="#00d3ff"/>
<path d="M1188 192h7v7h-7z" fill="#00cfff"/>
<path d="M1194 192h7v7h-7z" fill="#00ccff"/>
<path d="M1200 192h7v7h-7z" fill="#00c9ff"/>
<path d="M1206 192h7v7h-7z" fill="#0dc5ff"/>
<path d="M1212 192h7v7h-7z" fill="#1dc2ff"/>
<path d="M1218 192h7v7h-7z" fill="#2dbeff"/>
<path d="M1224 192h7v7h-7z" fill="#3dbbff"/>
<path d="M1230 192h7v7h-7z" fill="#4db7ff"/>
<path d="M1236 192h7v7h-7z" fill="#5db3ff"/>
<path d="M1242 192h7v7h-7z" fill="#6eb0ff"/>
<path d="M1248 192h7v7h-7z" fill="#7facff"/>
<path d="M1254 192h7v7h-7z" fill="#90a8ff"/>
<path d="M1260 192h7v7h-7z" fill="#a1a5ff"/>
<path d="M1266 192h7v7h-7z" fill="#b3a1ff"/>
<path d="M1272 192h7v7h-7z" fill="#c49dff"/>
<path d="M1278 192h7v7h-7z" fill="#d699ff"/>
<path d="M1284 192h7v7h-7z" fill="#e895ff"/>
<path d="M1290 192h7v7h-7z" fill="#fa91ff"/>
<path d="M1296 192h7v7h-7z" fill="#ff86f2"/>
<path d="M1302 192h7v7h-7z" fill="#ff79e2"/>
<path d="M1308 192h7v7h-7z" fill="#ff6ed4"/>
<path d="M1314 192h7v7h-7z" fill="#ff65c8"/>
<path d="M1320 192h7v7h-7z" fill="#ff5cbd"/>
<path d="M1326 192h7v7h-7z" fill="#ff54b2"/>
<path d="M1332 192h7v7h-7z" fill="#ff4da9"/>
<path d="M1338 192h7v7h-7z" fill="#ff46a1"/>
<path d="M1344 192h7v7h-7z" fill="#ff4099"/>
<path d="M1350 192h7v7h-7z" fill="#ff3a92"/>
<path d="M1356 192h7v7h-7z" fill="#ff358c"/>
<path d="M1362 192h7v7h-7z" fill="#ff3186"/>
<path d="M1368 192h7v7h-7z" fill="#ff2c80"/>
<path d="M1374 192h7v7h-7z" fill="#ff287b"/>
<path d="M1380 192h7v7h-7z" fill="#ff2476"/>
<path d="M1386 192h7v7h-7z" fill="#ff2171"/>
<path d="M1392 192h7v7h-7z" fill="#ff1d6d"/>
<path d="M1398 192h7v7h-7z" fill="#ff1a69"/>
<path d="M1404 192h7v7h-7z" fill="#ff1765"/>
<path d="M1410 192h7v7h-7z" fill="#ff1562"/>
<path d="M1416 192h7v7h-7z" fill="#ff125e"/>
<path d="M1422 192h7v7h-7z" fill="#ff0f5b"/>
<path d="M1428 192h7v7h-7z" fill="#ff0d58"/>
<path d="M1434 192h7v7h-7z" fill="#ff0b55"/>
<path d="M1440 192h7v7h-7z" fill="#ff0953"/>
<path d="M1446 192h7v7h-7z" fill="#ff0750"/>
<path d="M1452 192h7v7h-7z" fill="#ff054e"/>
<path d="M1458 192h7v7h-7z" fill="#ff034b"/>
<path d="M1464 192h7v7h-7z" fill="#ff0149"/>
<path d="M1470 192h7v7h-7z" fill="#ff0047"/>
<path d="M1476 192h7v7h-7z" fill="#ff0045"/>
<path d="M1482 192h7v7h-7z" fill="#ff0043"/>
<path d="M1488 192h7v7h-7z" fill="#ff0041"/>
<path d="M1494 192h7v7h-7z" fill="#ff003f"/>
<path d="M1500 192h7v7h-7z" fill="#ff003e"/>
<path d="M1506 192h7v7h-7z" fill="#ff003c"/>
<path d="M1512 192h7v7h-7z" fill="#ff003a"/>
<path d="M1518 192h7v7h-7z" fill="#ff0039"/>
<path d="M1524 192h7v7h-7z" fill="#ff0037"/>
<path d="M1530 192h7v7h-7z" fill="#ff0036"/>
<path d="M1536 192h7v7h-7z" fill="#ff0035"/>
<path d="M1542 192h7v7h-7z" fill="#ff0033"/>
<path d="M1548 192h7v7h-7z" fill="#ff0032"/>
<path d="M1554 192h7v7h-7z" fill="#ff0031"/>
<path d="M1560 192h7v7h-7z" fill="#ff0030"/>
<path d="M1566 192h7v7h-7z" fill="#ff002e"/>
<path d="M1572 192h7v7h-7z" fill="#ff002d"/>
<path d="M1578 192h7v7h-7z" fill="#ff002c"/>
<path d="M1584 192h7v7h-7z" fill="#ff002b"/>
<path d="M1590 192h7v7h-7z" fill="#ff002a"/>
<path d="M1596 192h7v7h-7z" fill="#ff0029"/>
<path d="M1602 192h7v7h-7z" fill="#ff0028"/>
<path d="M1608 192h13v7h-13z" fill="#ff0027"/>
<path d="M1620 192h7v7h-7z" fill="#ff0026"/>
<path d="M1626 192h7v7h-7z" fill="#ff0025"/>
<path d="M1632 192h7v7h-7z" fill="#ff0024"/>
<path d="M1638 192h7v7h-7z" fill="#ff0023"/>
<path d="M1644 192h13v7h-13z" fill="#ff0022"/>
<path d="M1656 192h7v7h-7z" fill="#ff0021"/>
<path d="M1662 192h7v7h-7z" fill="#ff0020"/>
<path d="M1668 192h13v7h-13z" fill="#ff001f"/>
<path d="M1680 192h7v7h-7z" fill="#ff001e"/>
<path d="M1686 192h13v7h-13z" fill="#ff001d"/>
<path d="M1062 198h7v7h-7z" fill="#00ffff"/>
<path d="M1068 198h7v7h-7z" fill="#00fcff"/>
<path d="M1074 198h7v7h-7z" fill="#00f9ff"/>
<path d="M1080 198h7v7h-7z" fill="#00f7ff"/>
<path d="M1086 198h7v7h-7z" fill="#00f4ff"/>
<path d="M1092 198h7v7h-7z" fill="#00f1ff"/>
<path d="M1098 198h7v7h-7z" fill="#00eeff"/>
<path d="M1104 198h7v7h-7z" fill="#00ecff"/>
<path d="M1110 198h7v7h-7z" fill="#00e9ff"/>
<path d="M1116 198h7v7h-7z" fill="#00e6ff"/>
<path d="M1122 198h7v7h-7z" fill="#00e3ff"/>
<path d="M1128 198h7v7h-7z" fill="#00e0ff"/>
<path d="M1134 198h7v7h-7z" fill="#00ddff"/>
<path d="M1140 198h7v7h-7z" fill="#00daff"/>
<path d="M1146 198h7v7h-7z" fill="#00d7ff"/>
<path d="M1152 198h7v7h-7z" fill="#00d4ff"/>
<path d="M1158 198h7v7h-7z" fill="#00d1ff"/>
<path d="M1164 198h7v7h-7z" fill="#00ceff"/>
<path d="M1170 198h7v7h-7z" fill="#00cbff"/>
<path d="M1176 198h7v7h-7z" fill="#00c7ff"/>
<path d="M1182 198h7v7h-7z" fill="#00c4ff"/>
<path d="M1188 198h7v7h-7z" fill="#00c1ff"/>
<path d="M1194 198h7v7h-7z" fill="#00beff"/>
<path d="M1200 198h7v7h-7z" fill="#00baff"/>
<path d="M1206 198h7v7h-7z" fill="#0ab7ff"/>
<path d="M1212 198h7v7h-7z" fill="#19b4ff"/>
<path d="M1218 198h7v7h-7z" fill="#28b0ff"/>
<path d="M1224 198h7v7h-7z" fill="#37adff"/>
<path d="M1230 198h7v7h-7z" fill="#47a9ff"/>
<path d="M1236 198h7v7h-7z" fill="#56a6ff"/>
<path d="M1242 198h7v7h-7z" fill="#66a2ff"/>
<path d="M1248 198h7v7h-7z" fill="#769fff"/>
<path d="M1254 198h7v7h-7z" fill="#869bff"/>
<path d="M1260 198h7v7h-7z" fill="#9698ff"/>
<path d="M1266 198h7v7h-7z" fill="#a794ff"/>
<path d="M1272 198h7v7h-7z" fill="#b790ff"/>
<path d="M1278 198h7v7h-7z" fill="#c88cff"/>
<path d="M1284 198h7v7h-7z" fill="#d988ff"/>
<path d="M1290 198h7v7h-7z" fill="#ea85ff"/>
<path d="M1296 198h7v7h-7z" fill="#fb81ff"/>
<path d="M1302 198h7v7h-7z" fill="#ff76f2"/>
<path d="M1308 198h7v7h-7z" fill="#ff6be3"/>
<path d="M1314 198h7v7h-7z" fill="#ff62d5"/>
<path d="M1320 198h7v7h-7z" fill="#ff59c9"/>
<path d="M1326 198h7v7h-7z" fill="#ff51bf"/>
<path d="M1332 198h7v7h-7z" fill="#ff4ab5"/>
<path d="M1338 198h7v7h-7z" fill="#ff44ac"/>
<path d="M1344 198h7v7h-7z" fill="#ff3ea4"/>
<path d="M1350 198h7v7h-7z" fill="#ff389c"/>
<path d="M1356 198h7v7h-7z" fill="#ff3395"/>
<path d="M1362 198h7v7h-7z" fill="#ff2e8f"/>
<path d="M1368 198h7v7h-7z" fill="#ff2a89"/>
<path d="M1374 198h7v7h-7z" fill="#ff2683"/>
<path d="M1380 198h7v7h-7z" fill="#ff227e"/>
<path d="M1386 198h7v7h-7z" fill="#ff1f79"/>
<path d="M1392 198h7v7h-7z" fill="#ff1b75"/>
<path d="M1398 198h7v7h-7z" fill="#ff1870"/>
<path d="M1404 198h7v7h-7z" fill="#ff156c"/>
<path d="M1410 198h7v7h-7z" fill="#ff1369"/>
<path d="M1416 198h7v7h-7z" fill="#ff1065"/>
<path d="M1422 198h7v7h-7z" fill="#ff0e62"/>
<path d="M1428 198h7v7h-7z" fill="#ff0b5f"/>
<path d="M1434 198h7v7h-7z" fill="#ff095c"/>
<path d="M1440 198h7v7h-7z" fill="#ff0759"/>
<path d="M1446 198h7v7h-7z" fill="#ff0556"/>
<path d="M1452 198h7v7h-7z" fill="#ff0353"/>
<path d="M1458 198h7v7h-7z" fill="#ff0151"/>
<path d="M1464 198h7v7h-7z" fill="#ff004f"/>
<path d="M1470 198h7v7h-7z" fill="#ff004c"/>
<path d="M1476 198h7v7h-7z" fill="#ff004a"/>
<path d="M1482 198h7v7h-7z" fill="#ff0048"/>
<path d="M1488 198h7v7h-7z" fill="#ff0046"/>
<path d="M1494 198h7v7h-7z" fill="#ff0044"/>
<path d="M1500 198h7v7h-7z" fill="#ff0042"/>
<path d="M1506 198h7v7h-7z" fill="#ff0041"/>
<path d="M1512 198h7v7h-7z" fill="#ff003f"/>
<path d="M1518 198h7v7h-7z" fill="#ff003d"/>
<path d="M1524 198h7v7h-7z" fill="#ff003c"/>
<path d="M1530 198h7v7h-7z" fill="#ff003a"/>
<path d="M1536 198h7v7h-7z" fill="#ff0039"/>
<path d="M1542 198h7v7h-7z" fill="#ff0037"/>
<path d="M1548 198h7v7h-7z" fill="#ff0036"/>
<path d="M1554 198h7v7h-7z" fill="#ff0035"/>
<path d="M1560 198h7v7h-7z" fill="#ff0034"/>
<path d="M1566 198h7v7h-7z" fill="#ff0032"/>
<path d="M1572 198h7v7h-7z" fill="#ff0031"/>
<path d="M1578 198h7v7h-7z" fill="#ff0030"/>
<path d="M1584 198h7v7h-7z" fill="#ff002f"/>
<path d="M1590 198h7v7h-7z" fill="#ff002e"/>
<path d="M1596 198h7v7h-7z" fill="#ff002d"/>
<path d="M1602 198h7v7h-7z" fill="#ff002c"/>
<path d="M1608 198h7v7h-7z" fill="#ff002b"/>
<path d="M1614 198h7v7h-7z" fill="#ff002a"/>
<path d="M1620 198h7v7h-7z" fill="#ff0029"/>
<path d="M1626 198h7v7h-7z" fill="#ff0028"/>
<path d="M1632 198h7v7h-7z" fill="#ff0027"/>
<path d="M1638 198h13v7h-13z" fill="#ff0026"/>
<path d="M1650 198h7v7h-7z" fill="#ff0025"/>
<path d="M1656 198h7v7h-7z" fill="#ff0024"/>
<path d="M1662 198h7v7h-7z" fill="#ff0023"/>
<path d="M1668 198h13v7h-13z" fill="#ff0022"/>
<path d="M1680 198h7v7h-7z" fill="#ff0021"/>
<path d="M1686 198h7v7h-7z" fill="#ff0020"/>
<path d="M1062 204h7v7h-7z" fill="#00f0ff"/>
<path d="M1068 204h7v7h-7z" fill="#00eeff"/>
<path d="M1074 204h7v7h-7z" fill="#00ebff"/>
<path d="M1080 204h7v7h-7z" fill="#00e8ff"/>
<path d="M1086 204h7v7h-7z" fill="#00e6ff"/>
<path d="M1092 204h7v7h-7z" fill="#00e3ff"/>
<path d="M1098 204h7v7h-7z" fill="#00e0ff"/>
<path d="M1104 204h7v7h-7z" fill="#00ddff"/>
<path d="M1110 204h7v7h-7z" fill="#00dbff"/>
<path d="M1116 204h7v7h-7z" fill="#00d8ff"/>
<path d="M1122 204h7v7h-7z" fill="#00d5ff"/>
<path d="M1128 204h7v7h-7z" fill="#00d2ff"/>
<path d="M1134 204h7v7h-7z" fill="#00cfff"/>
<path d="M1140 204h7v7h-7z" fill="#00ccff"/>
<path d="M1146 204h7v7h-7z" fill="#00c9ff"/>
<path d="M1152 204h7v7h-7z" fill="#00c6ff"/>
<path d="M1158 204h7v7h-7z" fill="#00c3ff"/>
<path d="M1164 204h7v7h-7z" fill="#00c0ff"/>
<path d="M1170 204h7v7h-7z" fill="#00bdff"/>
<path d="M1176 204h7v7h-7z" fill="#00baff"/>
<path d="M1182 204h7v7h-7z" fill="#00b7ff"/>
<path d="M1188 204h7v7h-7z" fill="#00b4ff"/>
<path d="M1194 204h7v7h-7z" fill="#00b1ff"/>
<path d="M1200 204h7v7h-7z" fill="#00aeff"/>
<path d="M1206 204h7v7h-7z" fill="#07aaff"/>
<path d="M1212 204h7v7h-7z" fill="#15a7ff"/>
<path d="M1218 204h7v7h-7z" fill="#24a4ff"/>
<path d="M1224 204h7v7h-7z" fill="#32a1ff"/>
<path d="M1230 204h7v7h-7z" fill="#419dff"/>
<path d="M1236 204h7v7h-7z" fill="#509aff"/>
<path d="M1242 204h7v7h-7z" fill="#5f96ff"/>
<path d="M1248 204h7v7h-7z" fill="#6e93ff"/>
<path d="M1254 204h7v7h-7z" fill="#7d8fff"/>
<path d="M1260 204h7v7h-7z" fill="#8c8cff"/>
<path d="M1266 204h7v7h-7z" fill="#9c88ff"/>
<path d="M1272 204h7v7h-7z" fill="#ac85ff"/>
<path d="M1278 204h7v7h-7z" fill="#bb81ff"/>
<path d="M1284 204h7v7h-7z" fill="#cb7dff"/>
<path d="M1290 204h7v7h-7z" fill="#dc7aff"/>
<path d="M1296 204h7v7h-7z" fill="#ec76ff"/>
<path d="M1302 204h7v7h-7z" fill="#fc72ff"/>
<path d="M1308 204h7v7h-7z" fill="#ff68f2"/>
<path d="M1314 204h7v7h-7z" fill="#ff5fe3"/>
<path d="M1320 204h7v7h-7z" fill="#ff56d7"/>
<path d="M1326 204h7v7h-7z" fill="#ff4ecb"/>
<path d="M1332 204h7v7h-7z" fill="#ff47c1"/>
<path d="M1338 204h7v7h-7z" fill="#ff41b7"/>
<path d="M1344 204h7v7h-7z" fill="#ff3bae"/>
<path d="M1350 204h7v7h-7z" fill="#ff36a6"/>
<path d="M1356 204h7v7h-7z" fill="#ff319f"/>
<path d="M1362 204h7v7h-7z" fill="#ff2c98"/>
<path d="M1368 204h7v7h-7z" fill="#ff2892"/>
<path d="M1374 204h7v7h-7z" fill="#ff248c"/>
<path d="M1380 204h7v7h-7z" fill="#ff2086"/>
<path d="M1386 204h7v7h-7z" fill="#ff1d81"/>
<path d="M1392 204h7v7h-7z" fill="#ff197c"/>
<path d="M1398 204h7v7h-7z" fill="#ff1678"/>
<path d="M1404 204h7v7h-7z" fill="#ff1374"/>
<path d="M1410 204h7v7h-7z" fill="#ff1170"/>
<path d="M1416 204h7v7h-7z" fill="#ff0e6c"/>
<path d="M1422 204h7v7h-7z" fill="#ff0c68"/>
<path d="M1428 204h7v7h-7z" fill="#ff0a65"/>
<path d="M1434 204h7v7h-7z" fill="#ff0762"/>
<path d="M1440 204h7v7h-7z" fill="#ff055f"/>
<path d="M1446 204h7v7h-7z" fill="#ff035c"/>
<path d="M1452 204h7v7h-7z" fill="#ff0259"/>
<path d="M1458 204h7v7h-7z" fill="#ff0056"/>
<path d="M1464 204h7v7h-7z" fill="#ff0054"/>
<path d="M1470 204h7v7h-7z" fill="#ff0052"/>
<path d="M1476 204h7v7h-7z" fill="#ff004f"/>
<path d="M1482 204h7v7h-7z" fill="#ff004d"/>
<path d="M1488 204h7v7h-7z" fill="#ff004b"/>
<path d="M1494 204h7v7h-7z" fill="#ff0049"/>
<path d="M1500 204h7v7h-7z" fill="#ff0047"/>
<path d="M1506 204h7v7h-7z" fill="#ff0045"/>
<path d="M1512 204h7v7h-7z" fill="#ff0043"/>
<path d="M1518 204h7v7h-7z" fill="#ff0042"/>
<path d="M1524 204h7v7h-7z" fill="#ff0040"/>
<path d="M1530 204h7v7h-7z" fill="#ff003f"/>
<path d="M1536 204h7v7h-7z" fill="#ff003d"/>
<path d="M1542 204h7v7h-7z" fill="#ff003c"/>
<path d="M1548 204h7v7h-7z" fill="#ff003a"/>
<path d="M1554 204h7v7h-7z" fill="#ff0039"/>
<path d="M1560 204h7v7h-7z" fill="#ff0037"/>
<path d="M1566 204h7v7h-7z" fill="#ff0036"/>
<path d="M1572 204h7v7h-7z" fill="#ff0035"/>
<path d="M1578 204h7v7h-7z" fill="#ff0034"/>
<path d="M1584 204h7v7h-7z" fill="#ff0033"/>
<path d="M1590 204h7v7h-7z" fill="#ff0031"/>
<path d="M1596 204h7v7h-7z" fill="#ff0030"/>
<path d="M1602 204h7v7h-7z" fill="#ff002f"/>
<path d="M1608 204h7v7h-7z" fill="#ff002e"/>
<path d="M1614 204h7v7h-7z" fill="#ff002d"/>
<path d="M1620 204h7v7h-7z" fill="#ff002c"/>
<path d="M1626 204h7v7h-7z" fill="#ff002b"/>
<path d="M1632 204h13v7h-13z" fill="#ff002a"/>
<path d="M1644 204h7v7h-7z" fill="#ff0029"/>
<path d="M1650 204h7v7h-7z" fill="#ff0028"/>
<path d="M1656 204h7v7h-7z" fill="#ff0027"/>
<path d="M1662 204h7v7h-7z" fill="#ff0026"/>
<path d="M1668 204h13v7h-13z" fill="#ff0025"/>
<path d="M1680 204h7v7h-7z" fill="#ff0024"/>
<path d="M1068 210h7v7h-7z" fill="#00e0ff"/>
<path d="M1074 210h7v7h-7z" fill="#00deff"/>
<path d="M1080 210h7v7h-7z" fill="#00dbff"/>
<path d="M1086 210h7v7h-7z" fill="#00d9ff"/>
<path d="M1092 210h7v7h-7z" fill="#00d6ff"/>
<path d="M1098 210h7v7h-7z" fill="#00d3ff"/>
<path d="M1104 210h7v7h-7z" fill="#00d1ff"/>
<path d="M1110 210h7v7h-7z" fill="#00ceff"/>
<path d="M1116 210h7v7h-7z" fill="#00cbff"/>
<path d="M1122 210h7v7h-7z" fill="#00c8ff"/>
<path d="M1128 210h7v7h-7z" fill="#00c6ff"/>
<path d="M1134 210h7v7h-7z" fill="#00c3ff"/>
<path d="M1140 210h7v7h-7z" fill="#00c0ff"/>
<path d="M1146 210h7v7h-7z" fill="#00bdff"/>
<path d="M1152 210h7v7h-7z" fill="#00baff"/>
<path d="M1158 210h7v7h-7z" fill="#00b7ff"/>
<path d="M1164 210h7v7h-7z" fill="#00b4ff"/>
<path d="M1170 210h7v7h-7z" fill="#00b1ff"/>
<path d="M1176 210h7v7h-7z" fill="#00aeff"/>
<path d="M1182 210h7v7h-7z" fill="#00abff"/>
<path d="M1188 210h7v7h-7z" fill="#00a8ff"/>
<path d="M1194 210h7v7h-7z" fill="#00a5ff"/>
<path d="M1200 210h7v7h-7z" fill="#00a2ff"/>
<path d="M1206 210h7v7h-7z" fill="#059fff"/>
<path d="M1212 210h7v7h-7z" fill="#129cff"/>
<path d="M1218 210h7v7h-7z" fill="#2099ff"/>
<path d="M1224 210h7v7h-7z" fill="#2e95ff"/>
<path d="M1230 210h7v7h-7z" fill="#3c92ff"/>
<path d="M1236 210h7v7h-7z" fill="#4a8fff"/>
<path d="M1242 210h7v7h-7z" fill="#588bff"/>
<path d="M1248 210h7v7h-7z" fill="#6688ff"/>
<path d="M1254 210h7v7h-7z" fill="#7585ff"/>
<path d="M1260 210h7v7h-7z" fill="#8381ff"/>
<path d="M1266 210h7v7h-7z" fill="#927eff"/>
<path d="M1272 210h7v7h-7z" fill="#a17aff"/>
<path d="M1278 210h7v7h-7z" fill="#b077ff"/>
<path d="M1284 210h7v7h-7z" fill="#bf73ff"/>
<path d="M1290 210h7v7h-7z" fill="#ce70ff"/>
<path d="M1296 210h7v7h-7z" fill="#de6cff"/>
<path d="M1302 210h7v7h-7z" fill="#ee68ff"/>
<path d="M1308 210h7v7h-7z" fill="#fd65ff"/>
<path d="M1314 210h7v7h-7z" fill="#ff5cf1"/>
<path d="M1320 210h7v7h-7z" fill="#ff53e4"/>
<path d="M1326 210h7v7h-7z" fill="#ff4cd8"/>
<path d="M1332 210h7v7h-7z" fill="#ff45cc"/>
<path d="M1338 210h7v7h-7z" fill="#ff3ec2"/>
<path d="M1344 210h7v7h-7z" fill="#ff39b9"/>
<path d="M1350 210h7v7h-7z" fill="#ff33b1"/>
<path d="M1356 210h7v7h-7z" fill="#ff2ea9"/>
<path d="M1362 210h7v7h-7z" fill="#ff2aa1"/>
<path d="M1368 210h7v7h-7z" fill="#ff259b"/>
<path d="M1374 210h7v7h-7z" fill="#ff2295"/>
<path d="M1380 210h7v7h-7z" fill="#ff1e8f"/>
<path d="M1386 210h7v7h-7z" fill="#ff1b89"/>
<path d="M1392 210h7v7h-7z" fill="#ff1784"/>
<path d="M1398 210h7v7h-7z" fill="#ff147f"/>
<path d="M1404 210h7v7h-7z" fill="#ff127b"/>
<path d="M1410 210h7v7h-7z" fill="#ff0f77"/>
<path d="M1416 210h7v7h-7z" fill="#ff0c73"/>
<path d="M1422 210h7v7h-7z" fill="#ff0a6f"/>
<path d="M1428 210h7v7h-7z" fill="#ff086b"/>
<path d="M1434 210h7v7h-7z" fill="#ff0668"/>
<path d="M1440 210h7v7h-7z" fill="#ff0465"/>
<path d="M1446 210h7v7h-7z" fill="#ff0262"/>
<path d="M1452 210h7v7h-7z" fill="#ff005f"/>
<path d="M1458 210h7v7h-7z" fill="#ff005c"/>
<path d="M1464 210h7v7h-7z" fill="#ff0059"/>
<path d="M1470 210h7v7h-7z" fill="#ff0057"/>
<path d="M1476 210h7v7h-7z" fill="#ff0055"/>
<path d="M1482 210h7v7h-7z" fill="#ff0052"/>
<path d="M1488 210h7v7h-7z" fill="#ff0050"/>
<path d="M1494 210h7v7h-7z" fill="#ff004e"/>
<path d="M1500 210h7v7h-7z" fill="#ff004c"/>
<path d="M1506 210h7v7h-7z" fill="#ff004a"/>
<path d="M1512 210h7v7h-7z" fill="#ff0048"/>
<path d="M1518 210h7v7h-7z" fill="#ff0046"/>
<path d="M1524 210h7v7h-7z" fill="#ff0045"/>
<path d="M1530 210h7v7h-7z" fill="#ff0043"/>
<path d="M1536 210h7v7h-7z" fill="#ff0041"/>
<path d="M1542 210h7v7h-7z" fill="#ff0040"/>
<path d="M1548 210h7v7h-7z" fill="#ff003e"/>
<path d="M1554 210h7v7h-7z" fill="#ff003d"/>
<path d="M1560 210h7v7h-7z" fill="#ff003b"/>
<path d="M1566 210h7v7h-7z" fill="#ff003a"/>
<path d="M1572 210h7v7h-7z" fill="#ff0039"/>
<path d="M1578 210h7v7h-7z" fill="#ff0037"/>
<path d="M1584 210h7v7h-7z" fill="#ff0036"/>
<path d="M1590 210h7v7h-7z" fill="#ff0035"/>
<path d="M1596 210h7v7h-7z" fill="#ff0034"/>
<path d="M1602 210h7v7h-7z" fill="#ff0033"/>
<path d="M1608 210h7v7h-7z" fill="#ff0032"/>
<path d="M1614 210h7v7h-7z" fill="#ff0031"/>
<path d="M1620 210h7v7h-7z" fill="#ff0030"/>
<path d="M1626 210h7v7h-7z" fill="#ff002f"/>
<path d="M1632 210h7v7h-7z" fill="#ff002e"/>
<path d="M1638 210h7v7h-7z" fill="#ff002d"/>
<path d="M1644 210h7v7h-7z" fill="#ff002c"/>
<path d="M1650 210h7v7h-7z" fill="#ff002b"/>
<path d="M1656 210h7v7h-7z" fill="#ff002a"/>
<path d="M1662 210h7v7h-7z" fill="#ff0029"/>
<path d="M1668 210h13v7h-13z" fill="#ff0028"/>
<path d="M1068 216h7v7h-7z" fill="#00d4ff"/>
<path d="M1074 216h7v7h-7z" fill="#00d2ff"/>
<path d="M1080 216h7v7h-7z" fill="#00cfff"/>
<path d="M1086 216h7v7h-7z" fill="#00cdff"/>
<path d="M1092 216h7v7h-7z" fill="#00caff"/>
<path d="M1098 216h7v7h-7z" fill="#00c7ff"/>
<path d="M1104 216h7v7h-7z" fill="#00c5ff"/>
<path d="M1110 216h7v7h-7z" fill="#00c2ff"/>
<path d="M1116 216h7v7h-7z" fill="#00bfff"/>
<path d="M1122 216h7v7h-7z" fill="#00bdff"/>
<path d="M1128 216h7v7h-7z" fill="#00baff"/>
<path d="M1134 216h7v7h-7z" fill="#00b7ff"/>
<path d="M1140 216h7v7h-7z" fill="#00b4ff"/>
<path d="M1146 216h7v7h-7z" fill="#00b2ff"/>
<path d="M1152 216h7v7h-7z" fill="#00afff"/>
<path d="M1158 216h7v7h-7z" fill="#00acff"/>
<path d="M1164 216h7v7h-7z" fill="#00a9ff"/>
<path d="M1170 216h7v7h-7z" fill="#00a6ff"/>
<path d="M1176 216h7v7h-7z" fill="#00a3ff"/>
<path d="M1182 216h7v7h-7z" fill="#00a0ff"/>
<path d="M1188 216h7v7h-7z" fill="#009dff"/>
<path d="M1194 216h7v7h-7z" fill="#009aff"/>
<path d="M1200 216h7v7h-7z" fill="#0097ff"/>
<path d="M1206 216h7v7h-7z" fill="#0394ff"/>
<path d="M1212 216h7v7h-7z" fill="#1091ff"/>
<path d="M1218 216h7v7h-7z" fill="#1d8eff"/>
<path d="M1224 216h7v7h-7z" fill="#2a8bff"/>
<path d="M1230 216h7v7h-7z" fill="#3788ff"/>
<path d="M1236 216h7v7h-7z" fill="#4485ff"/>
<path d="M1242 216h7v7h-7z" fill="#5282ff"/>
<path d="M1248 216h7v7h-7z" fill="#607eff"/>
<path d="M1254 216h7v7h-7z" fill="#6d7bff"/>
<path d="M1260 216h7v7h-7z" fill="#7b78ff"/>
<path d="M1266 216h7v7h-7z" fill="#8974ff"/>
<path d="M1272 216h7v7h-7z" fill="#9771ff"/>
<path d="M1278 216h7v7h-7z" fill="#a66eff"/>
<path d="M1284 216h7v7h-7z" fill="#b46aff"/>
<path d="M1290 216h7v7h-7z" fill="#c367ff"/>
<path d="M1296 216h7v7h-7z" fill="#d163ff"/>
<path d="M1302 216h7v7h-7z" fill="#e060ff"/>
<path d="M1308 216h7v7h-7z" fill="#ef5cff"/>
<path d="M1314 216h7v7h-7z" fill="#fe59ff"/>
<path d="M1320 216h7v7h-7z" fill="#ff51f1"/>
<path d="M1326 216h7v7h-7z" fill="#ff49e4"/>
<path d="M1332 216h7v7h-7z" fill="#ff42d9"/>
<path d="M1338 216h7v7h-7z" fill="#ff3cce"/>
<path d="M1344 216h7v7h-7z" fill="#ff36c4"/>
<path d="M1350 216h7v7h-7z" fill="#ff31bb"/>
<path d="M1356 216h7v7h-7z" fill="#ff2cb3"/>
<path d="M1362 216h7v7h-7z" fill="#ff27ab"/>
<path d="M1368 216h7v7h-7z" fill="#ff23a4"/>
<path d="M1374 216h7v7h-7z" fill="#ff1f9d"/>
<path d="M1380 216h7v7h-7z" fill="#ff1c97"/>
<path d="M1386 216h7v7h-7z" fill="#ff1891"/>
<path d="M1392 216h7v7h-7z" fill="#ff158c"/>
<path d="M1398 216h7v7h-7z" fill="#ff1287"/>
<path d="M1404 216h7v7h-7z" fill="#ff1082"/>
<path d="M1410 216h7v7h-7z" fill="#ff0d7e"/>
<path d="M1416 216h7v7h-7z" fill="#ff0a7a"/>
<path d="M1422 216h7v7h-7z" fill="#ff0876"/>
<path d="M1428 216h7v7h-7z" fill="#ff0672"/>
<path d="M1434 216h7v7h-7z" fill="#ff046e"/>
<path d="M1440 216h7v7h-7z" fill="#ff026b"/>
<path d="M1446 216h7v7h-7z" fill="#ff0068"/>
<path d="M1452 216h7v7h-7z" fill="#ff0065"/>
<path d="M1458 216h7v7h-7z" fill="#ff0062"/>
<path d="M1464 216h7v7h-7z" fill="#ff005f"/>
<path d="M1470 216h7v7h-7z" fill="#ff005c"/>
<path d="M1476 216h7v7h-7z" fill="#ff005a"/>
<path d="M1482 216h7v7h-7z" fill="#ff0057"/>
<path d="M1488 216h7v7h-7z" fill="#ff0055"/>
<path d="M1494 216h7v7h-7z" fill="#ff0053"/>
<path d="M1500 216h7v7h-7z" fill="#ff0051"/>
<path d="M1506 216h7v7h-7z" fill="#ff004f"/>
<path d="M1512 216h7v7h-7z" fill="#ff004d"/>
<path d="M1518 216h7v7h-7z" fill="#ff004b"/>
<path d="M1524 216h7v7h-7z" fill="#ff0049"/>
<path d="M1530 216h7v7h-7z" fill="#ff0047"/>
<path d="M1536 216h7v7h-7z" fill="#ff0045"/>
<path d="M1542 216h7v7h-7z" fill="#ff0044"/>
<path d="M1548 216h7v7h-7z" fill="#ff0042"/>
<path d="M1554 216h7v7h-7z" fill="#ff0041"/>
<path d="M1560 216h7v7h-7z" fill="#ff003f"/>
<path d="M1566 216h7v7h-7z" fill="#ff003e"/>
<path d="M1572 216h7v7h-7z" fill="#ff003d"/>
<path d="M1578 216h7v7h-7z" fill="#ff003b"/>
<path d="M1584 216h7v7h-7z" fill="#ff003a"/>
<path d="M1590 216h7v7h-7z" fill="#ff0039"/>
<path d="M1596 216h7v7h-7z" fill="#ff0037"/>
<path d="M1602 216h7v7h-7z" fill="#ff0036"/>
<path d="M1608 216h7v7h-7z" fill="#ff0035"/>
<path d="M1614 216h7v7h-7z" fill="#ff0034"/>
<path d="M1620 216h7v7h-7z" fill="#ff0033"/>
<path d="M1626 216h7v7h-7z" fill="#ff0032"/>
<path d="M1632 216h7v7h-7z" fill="#ff0031"/>
<path d="M1638 216h7v7h-7z" fill="#ff0030"/>
<path d="M1644 216h7v7h-7z" fill="#ff002f"/>
<path d="M1650 216h7v7h-7z" fill="#ff002e"/>
<path d="M1656 216h7v7h-7z" fill="#ff002d"/>
<path d="M1662 216h7v7h-7z" fill="#ff002c"/>
<path d="M1668 216h7v7h-7z" fill="#ff002b"/>
<path d="M1068 222h7v7h-7z" fill="#00c9ff"/>
<path d="M1074 222h7v7h-7z" fill="#00c7ff"/>
<path d="M1080 222h7v7h-7z" fill="#00c4ff"/>
<path d="M1086 222h7v7h-7z" fill="#00c2ff"/>
<path d="M1092 222h7v7h-7z" fill="#00bfff"/>
<path d="M1098 222h7v7h-7z" fill="#00bcff"/>
<path d="M1104 222h7v7h-7z" fill="#00baff"/>
<path d="M1110 222h7v7h-7z" fill="#00b7ff"/>
<path d="M1116 222h7v7h-7z" fill="#00b5ff"/>
<path d="M1122 222h7v7h-7z" fill="#00b2ff"/>
<path d="M1128 222h7v7h-7z" fill="#00afff"/>
<path d="M1134 222h7v7h-7z" fill="#00adff"/>
<path d="M1140 222h7v7h-7z" fill="#00aaff"/>
<path d="M1146 222h7v7h-7z" fill="#00a7ff"/>
<path d="M1152 222h7v7h-7z" fill="#00a5ff"/>
<path d="M1158 222h7v7h-7z" fill="#00a2ff"/>
<path d="M1164 222h7v7h-7z" fill="#009fff"/>
<path d="M1170 222h7v7h-7z" fill="#009cff"/>
<path d="M1176 222h7v7h-7z" fill="#0099ff"/>
<path d="M1182 222h7v7h-7z" fill="#0096ff"/>
<path d="M1188 222h7v7h-7z" fill="#0094ff"/>
<path d="M1194 222h7v7h-7z" fill="#0091ff"/>
<path d="M1200 222h7v7h-7z" fill="#008eff"/>
<path d="M1206 222h7v7h-7z" fill="#018bff"/>
<path d="M1212 222h7v7h-7z" fill="#0d88ff"/>
<path d="M1218 222h7v7h-7z" fill="#1985ff"/>
<path d="M1224 222h7v7h-7z" fill="#2682ff"/>
<path d="M1230 222h7v7h-7z" fill="#337fff"/>
<path d="M1236 222h7v7h-7z" fill="#407cff"/>
<path d="M1242 222h7v7h-7z" fill="#4c79ff"/>
<path d="M1248 222h7v7h-7z" fill="#5975ff"/>
<path d="M1254 222h7v7h-7z" fill="#6772ff"/>
<path d="M1260 222h7v7h-7z" fill="#746fff"/>
<path d="M1266 222h7v7h-7z" fill="#816cff"/>
<path d="M1272 222h7v7h-7z" fill="#8f69ff"/>
<path d="M1278 222h7v7h-7z" fill="#9c65ff"/>
<path d="M1284 222h7v7h-7z" fill="#aa62ff"/>
<path d="M1290 222h7v7h-7z" fill="#b85fff"/>
<path d="M1296 222h7v7h-7z" fill="#c65bff"/>
<path d="M1302 222h7v7h-7z" fill="#d458ff"/>
<path d="M1308 222h7v7h-7z" fill="#e254ff"/>
<path d="M1314 222h7v7h-7z" fill="#f051ff"/>
<path d="M1320 222h7v7h-7z" fill="#ff4eff"/>
<path d="M1326 222h7v7h-7z" fill="#ff46f1"/>
<path d="M1332 222h7v7h-7z" fill="#ff3fe5"/>
<path d="M1338 222h7v7h-7z" fill="#ff39d9"/>
<path d="M1344 222h7v7h-7z" fill="#ff33cf"/>
<path d="M1350 222h7v7h-7z" fill="#ff2ec5"/>
<path d="M1356 222h7v7h-7z" fill="#ff29bd"/>
<path d="M1362 222h7v7h-7z" fill="#ff25b5"/>
<path d="M1368 222h7v7h-7z" fill="#ff21ad"/>
<path d="M1374 222h7v7h-7z" fill="#ff1da6"/>
<path d="M1380 222h7v7h-7z" fill="#ff1aa0"/>
<path d="M1386 222h7v7h-7z" fill="#ff169a"/>
<path d="M1392 222h7v7h-7z" fill="#ff1394"/>
<path d="M1398 222h7v7h-7z" fill="#ff108f"/>
<path d="M1404 222h7v7h-7z" fill="#ff0e8a"/>
<path d="M1410 222h7v7h-7z" fill="#ff0b85"/>
<path d="M1416 222h7v7h-7z" fill="#ff0981"/>
<path d="M1422 222h7v7h-7z" fill="#ff067c"/>
<path d="M1428 222h7v7h-7z" fill="#ff0478"/>
<path d="M1434 222h7v7h-7z" fill="#ff0275"/>
<path d="M1440 222h7v7h-7z" fill="#ff0071"/>
<path d="M1446 222h7v7h-7z" fill="#ff006e"/>
<path d="M1452 222h7v7h-7z" fill="#ff006a"/>
<path d="M1458 222h7v7h-7z" fill="#ff0067"/>
<path d="M1464 222h7v7h-7z" fill="#ff0065"/>
<path d="M1470 222h7v7h-7z" fill="#ff0062"/>
<path d="M1476 222h7v7h-7z" fill="#ff005f"/>
<path d="M1482 222h7v7h-7z" fill="#ff005d"/>
<path d="M1488 222h7v7h-7z" fill="#ff005a"/>
<path d="M1494 222h7v7h-7z" fill="#ff0058"/>
<path d="M1500 222h7v7h-7z" fill="#ff0056"/>
<path d="M1506 222h7v7h-7z" fill="#ff0053"/>
<path d="M1512 222h7v7h-7z" fill="#ff0051"/>
<path d="M1518 222h7v7h-7z" fill="#ff004f"/>
<path d="M1524 222h7v7h-7z" fill="#ff004d"/>
<path d="M1530 222h7v7h-7z" fill="#ff004c"/>
<path d="M1536 222h7v7h-7z" fill="#ff004a"/>
<path d="M1542 222h7v7h-7z" fill="#ff0048"/>
<path d="M1548 222h7v7h-7z" fill="#ff0046"/>
<path d="M1554 222h7v7h-7z" fill="#ff0045"/>
<path d="M1560 222h7v7h-7z" fill="#ff0043"/>
<path d="M1566 222h7v7h-7z" fill="#ff0042"/>
<path d="M1572 222h7v7h-7z" fill="#ff0040"/>
<path d="M1578 222h7v7h-7z" fill="#ff003f"/>
<path d="M1584 222h7v7h-7z" fill="#ff003e"/>
<path d="M1590 222h7v7h-7z" fill="#ff003c"/>
<path d="M1596 222h7v7h-7z" fill="#ff003b"/>
<path d="M1602 222h7v7h-7z" fill="#ff003a"/>
<path d="M1608 222h7v7h-7z" fill="#ff0039"/>
<path d="M1614 222h7v7h-7z" fill="#ff0037"/>
<path d="M1620 222h7v7h-7z" fill="#ff0036"/>
<path d="M1626 222h7v7h-7z" fill="#ff0035"/>
<path d="M1632 222h7v7h-7z" fill="#ff0034"/>
<path d="M1638 222h7v7h-7z" fill="#ff0033"/>
<path d="M1644 222h7v7h-7z" fill="#ff0032"/>
<path d="M1650 222h7v7h-7z" fill="#ff0031"/>
<path d="M1656 222h7v7h-7z" fill="#ff0030"/>
<path d="M1662 222h7v7h-7z" fill="#ff002f"/>
<path d="M1074 228h7v7h-7z" fill="#00bcff"/>
<path d="M1080 228h7v7h-7z" fill="#00baff"/>
<path d="M1086 228h7v7h-7z" fill="#00b7ff"/>
<path d="M1092 228h7v7h-7z" fill="#00b5ff"/>
<path d="M1098 228h7v7h-7z" fill="#00b2ff"/>
<path d="M1104 228h7v7h-7z" fill="#00b0ff"/>
<path d="M1110 228h7v7h-7z" fill="#00adff"/>
<path d="M1116 228h7v7h-7z" fill="#00abff"/>
<path d="M1122 228h7v7h-7z" fill="#00a8ff"/>
<path d="M1128 228h7v7h-7z" fill="#00a6ff"/>
<path d="M1134 228h7v7h-7z" fill="#00a3ff"/>
<path d="M1140 228h7v7h-7z" fill="#00a0ff"/>
<path d="M1146 228h7v7h-7z" fill="#009eff"/>
<path d="M1152 228h7v7h-7z" fill="#009bff"/>
<path d="M1158 228h7v7h-7z" fill="#0098ff"/>
<path d="M1164 228h7v7h-7z" fill="#0096ff"/>
<path d="M1170 228h7v7h-7z" fill="#0093ff"/>
<path d="M1176 228h7v7h-7z" fill="#0090ff"/>
<path d="M1182 228h7v7h-7z" fill="#008dff"/>
<path d="M1188 228h7v7h-7z" fill="#008bff"/>
<path d="M1194 228h7v7h-7z" fill="#0088ff"/>
<path d="M1200 228h7v7h-7z" fill="#0085ff"/>
<path d="M1206 228h7v7h-7z" fill="#0082ff"/>
<path d="M1212 228h7v7h-7z" fill="#0b7fff"/>
<path d="M1218 228h7v7h-7z" fill="#177cff"/>
<path d="M1224 228h7v7h-7z" fill="#2379ff"/>
<path d="M1230 228h7v7h-7z" fill="#2f76ff"/>
<path d="M1236 228h7v7h-7z" fill="#3b73ff"/>
<path d="M1242 228h7v7h-7z" fill="#4770ff"/>
<path d="M1248 228h7v7h-7z" fill="#546dff"/>
<path d="M1254 228h7v7h-7z" fill="#606aff"/>
<path d="M1260 228h7v7h-7z" fill="#6d67ff"/>
<path d="M1266 228h7v7h-7z" fill="#7a64ff"/>
<path d="M1272 228h7v7h-7z" fill="#8761ff"/>
<path d="M1278 228h7v7h-7z" fill="#945eff"/>
<path d="M1284 228h7v7h-7z" fill="#a15aff"/>
<path d="M1290 228h7v7h-7z" fill="#ae57ff"/>
<path d="M1296 228h7v7h-7z" fill="#bb54ff"/>
<path d="M1302 228h7v7h-7z" fill="#c951ff"/>
<path d="M1308 228h7v7h-7z" fill="#d64dff"/>
<path d="M1314 228h7v7h-7z" fill="#e44aff"/>
<path d="M1320 228h7v7h-7z" fill="#f247ff"/>
<path d="M1326 228h7v7h-7z" fill="#ff43fe"/>
<path d="M1332 228h7v7h-7z" fill="#ff3cf1"/>
<path d="M1338 228h7v7h-7z" fill="#ff36e5"/>
<path d="M1344 228h7v7h-7z" fill="#ff31da"/>
<path d="M1350 228h7v7h-7z" fill="#ff2cd0"/>
<path d="M1356 228h7v7h-7z" fill="#ff27c7"/>
<path d="M1362 228h7v7h-7z" fill="#ff23be"/>
<path d="M1368 228h7v7h-7z" fill="#ff1fb6"/>
<path d="M1374 228h7v7h-7z" fill="#ff1baf"/>
<path d="M1380 228h7v7h-7z" fill="#ff17a8"/>
<path d="M1386 228h7v7h-7z" fill="#ff14a2"/>
<path d="M1392 228h7v7h-7z" fill="#ff119c"/>
<path d="M1398 228h7v7h-7z" fill="#ff0e96"/>
<path d="M1404 228h7v7h-7z" fill="#ff0c91"/>
<path d="M1410 228h7v7h-7z" fill="#ff098c"/>
<path d="M1416 228h7v7h-7z" fill="#ff0788"/>
<path d="M1422 228h7v7h-7z" fill="#ff0483"/>
<path d="M1428 228h7v7h-7z" fill="#ff027f"/>
<path d="M1434 228h7v7h-7z" fill="#ff007b"/>
<path d="M1440 228h7v7h-7z" fill="#ff0077"/>
<path d="M1446 228h7v7h-7z" fill="#ff0074"/>
<path d="M1452 228h7v7h-7z" fill="#ff0070"/>
<path d="M1458 228h7v7h-7z" fill="#ff006d"/>
<path d="M1464 228h7v7h-7z" fill="#ff006a"/>
<path d="M1470 228h7v7h-7z" fill="#ff0067"/>
<path d="M1476 228h7v7h-7z" fill="#ff0064"/>
<path d="M1482 228h7v7h-7z" fill="#ff0062"/>
<path d="M1488 228h7v7h-7z" fill="#ff005f"/>
<path d="M1494 228h7v7h-7z" fill="#ff005d"/>
<path d="M1500 228h7v7h-7z" fill="#ff005a"/>
<path d="M1506 228h7v7h-7z" fill="#ff0058"/>
<path d="M1512 228h7v7h-7z" fill="#ff0056"/>
<path d="M1518 228h7v7h-7z" fill="#ff0054"/>
<path d="M1524 228h7v7h-7z" fill="#ff0052"/>
<path d="M1530 228h7v7h-7z" fill="#ff0050"/>
<path d="M1536 228h7v7h-7z" fill="#ff004e"/>
<path d="M1542 228h7v7h-7z" fill="#ff004c"/>
<path d="M1548 228h7v7h-7z" fill="#ff004b"/>
<path d="M1554 228h7v7h-7z" fill="#ff0049"/>
<path d="M1560 228h7v7h-7z" fill="#ff0047"/>
<path d="M1566 228h7v7h-7z" fill="#ff0046"/>
<path d="M1572 228h7v7h-7z" fill="#ff0044"/>
<path d="M1578 228h7v7h-7z" fill="#ff0043"/>
<path d="M1584 228h7v7h-7z" fill="#ff0041"/>
<path d="M1590 228h7v7h-7z" fill="#ff0040"/>
<path d="M1596 228h7v7h-7z" fill="#ff003f"/>
<path d="M1602 228h7v7h-7z" fill="#ff003d"/>
<path d="M1608 228h7v7h-7z" fill="#ff003c"/>
<path d="M1614 228h7v7h-7z" fill="#ff003b"/>
<path d="M1620 228h7v7h-7z" fill="#ff003a"/>
<path d="M1626 228h7v7h-7z" fill="#ff0039"/>
<path d="M1632 228h7v7h-7z" fill="#ff0037"/>
<path d="M1638 228h7v7h-7z" fill="#ff0036"/>
<path d="M1644 228h7v7h-7z" fill="#ff0035"/>
<path d="M1650 228h7v7h-7z" fill="#ff0034"/>
<path d="M1656 228h7v7h-7z" fill="#ff0033"/>
<path d="M1074 234h7v7h-7z" fill="#00b3ff"/>
<path d="M1080 234h7v7h-7z" fill="#00b0ff"/>
<path d="M1086 234h7v7h-7z" fill="#00aeff"/>
<path d="M1092 234h7v7h-7z" fill="#00abff"/>
<path d="M1098 234h7v7h-7z" fill="#00a9ff"/>
<path d="M1104 234h7v7h-7z" fill="#00a7ff"/>
<path d="M1110 234h7v7h-7z" fill="#00a4ff"/>
<path d="M1116 234h7v7h-7z" fill="#00a2ff"/>
<path d="M1122 234h7v7h-7z" fill="#009fff"/>
<path d="M1128 234h7v7h-7z" fill="#009dff"/>
<path d="M1134 234h7v7h-7z" fill="#009aff"/>
<path d="M1140 234h7v7h-7z" fill="#0097ff"/>
<path d="M1146 234h7v7h-7z" fill="#0095ff"/>
<path d="M1152 234h7v7h-7z" fill="#0092ff"/>
<path d="M1158 234h7v7h-7z" fill="#0090ff"/>
<path d="M1164 234h7v7h-7z" fill="#008dff"/>
<path d="M1170 234h7v7h-7z" fill="#008aff"/>
<path d="M1176 234h7v7h-7z" fill="#0088ff"/>
<path d="M1182 234h7v7h-7z" fill="#0085ff"/>
<path d="M1188 234h7v7h-7z" fill="#0082ff"/>
<path d="M1194 234h7v7h-7z" fill="#007fff"/>
<path d="M1200 234h7v7h-7z" fill="#007dff"/>
<path d="M1206 234h7v7h-7z" fill="#007aff"/>
<path d="M1212 234h7v7h-7z" fill="#0977ff"/>
<path d="M1218 234h7v7h-7z" fill="#1474ff"/>
<path d="M1224 234h7v7h-7z" fill="#2071ff"/>
<path d="M1230 234h7v7h-7z" fill="#2b6eff"/>
<path d="M1236 234h7v7h-7z" fill="#376cff"/>
<path d="M1242 234h7v7h-7z" fill="#4369ff"/>
<path d="M1248 234h7v7h-7z" fill="#4f66ff"/>
<path d="M1254 234h7v7h-7z" fill="#5b63ff"/>
<path d="M1260 234h7v7h-7z" fill="#6760ff"/>
<path d="M1266 234h7v7h-7z" fill="#735dff"/>
<path d="M1272 234h7v7h-7z" fill="#7f5aff"/>
<path d="M1278 234h7v7h-7z" fill="#8c57ff"/>
<path d="M1284 234h7v7h-7z" fill="#9854ff"/>
<path d="M1290 234h7v7h-7z" fill="#a550ff"/>
<path d="M1296 234h7v7h-7z" fill="#b24dff"/>
<path d="M1302 234h7v7h-7z" fill="#be4aff"/>
<path d="M1308 234h7v7h-7z" fill="#cb47ff"/>
<path d="M1314 234h7v7h-7z" fill="#d844ff"/>
<path d="M1320 234h7v7h-7z" fill="#e640ff"/>
<path d="M1326 234h7v7h-7z" fill="#f33dff"/>
<path d="M1332 234h7v7h-7z" fill="#ff3afe"/>
<path d="M1338 234h7v7h-7z" fill="#ff34f1"/>
<path d="M1344 234h7v7h-7z" fill="#ff2ee6"/>
<path d="M1350 234h7v7h-7z" fill="#ff29db"/>
<path d="M1356 234h7v7h-7z" fill="#ff24d1"/>
<path d="M1362 234h7v7h-7z" fill="#ff20c8"/>
<path d="M1368 234h7v7h-7z" fill="#ff1cc0"/>
<path d="M1374 234h7v7h-7z" fill="#ff18b8"/>
<path d="M1380 234h7v7h-7z" fill="#ff15b1"/>
<path d="M1386 234h7v7h-7z" fill="#ff12aa"/>
<path d="M1392 234h7v7h-7z" fill="#ff0fa4"/>
<path d="M1398 234h7v7h-7z" fill="#ff0c9e"/>
<path d="M1404 234h7v7h-7z" fill="#ff0a99"/>
<path d="M1410 234h7v7h-7z" fill="#ff0793"/>
<path d="M1416 234h7v7h-7z" fill="#ff058f"/>
<path d="M1422 234h7v7h-7z" fill="#ff038a"/>
<path d="M1428 234h7v7h-7z" fill="#ff0086"/>
<path d="M1434 234h7v7h-7z" fill="#ff0081"/>
<path d="M1440 234h7v7h-7z" fill="#ff007e"/>
<path d="M1446 234h7v7h-7z" fill="#ff007a"/>
<path d="M1452 234h7v7h-7z" fill="#ff0076"/>
<path d="M1458 234h7v7h-7z" fill="#ff0073"/>
<path d="M1464 234h7v7h-7z" fill="#ff0070"/>
<path d="M1470 234h7v7h-7z" fill="#ff006d"/>
<path d="M1476 234h7v7h-7z" fill="#ff006a"/>
<path d="M1482 234h7v7h-7z" fill="#ff0067"/>
<path d="M1488 234h7v7h-7z" fill="#ff0064"/>
<path d="M1494 234h7v7h-7z" fill="#ff0062"/>
<path d="M1500 234h7v7h-7z" fill="#ff005f"/>
<path d="M1506 234h7v7h-7z" fill="#ff005d"/>
<path d="M1512 234h7v7h-7z" fill="#ff005b"/>
<path d="M1518 234h7v7h-7z" fill="#ff0058"/>
<path d="M1524 234h7v7h-7z" fill="#ff0056"/>
<path d="M1530 234h7v7h-7z" fill="#ff0054"/>
<path d="M1536 234h7v7h-7z" fill="#ff0052"/>
<path d="M1542 234h7v7h-7z" fill="#ff0051"/>
<path d="M1548 234h7v7h-7z" fill="#ff004f"/>
<path d="M1554 234h7v7h-7z" fill="#ff004d"/>
<path d="M1560 234h7v7h-7z" fill="#ff004b"/>
<path d="M1566 234h7v7h-7z" fill="#ff004a"/>
<path d="M1572 234h7v7h-7z" fill="#ff0048"/>
<path d="M1578 234h7v7h-7z" fill="#ff0047"/>
<path d="M1584 234h7v7h-7z" fill="#ff0045"/>
<path d="M1590 234h7v7h-7z" fill="#ff0044"/>
<path d="M1596 234h7v7h-7z" fill="#ff0042"/>
<path d="M1602 234h7v7h-7z" fill="#ff0041"/>
<path d="M1608 234h7v7h-7z" fill="#ff0040"/>
<path d="M1614 234h7v7h-7z" fill="#ff003e"/>
<path d="M1620 234h7v7h-7z" fill="#ff003d"/>
<path d="M1626 234h7v7h-7z" fill="#ff003c"/>
<path d="M1632 234h7v7h-7z" fill="#ff003b"/>
<path d="M1638 234h7v7h-7z" fill="#ff003a"/>
<path d="M1644 234h7v7h-7z" fill="#ff0039"/>
<path d="M1650 234h7v7h-7z" fill="#ff0037"/>
<path d="M1080 240h7v7h-7z" fill="#00a7ff"/>
<path d="M1086 240h7v7h-7z" fill="#00a5ff"/>
<path d="M1092 240h7v7h-7z" fill="#00a3ff"/>
<path d="M1098 240h7v7h-7z" fill="#00a0ff"/>
<path d="M1104 240h7v7h-7z" fill="#009eff"/>
<path d="M1110 240h7v7h-7z" fill="#009bff"/>
<path d="M1116 240h7v7h-7z" fill="#0099ff"/>
<path d="M1122 240h7v7h-7z" fill="#0097ff"/>
<path d="M1128 240h7v7h-7z" fill="#0094ff"/>
<path d="M1134 240h7v7h-7z" fill="#0092ff"/>
<path d="M1140 240h7v7h-7z" fill="#008fff"/>
<path d="M1146 240h7v7h-7z" fill="#008dff"/>
<path d="M1152 240h7v7h-7z" fill="#008aff"/>
<path d="M1158 240h7v7h-7z" fill="#0088ff"/>
<path d="M1164 240h7v7h-7z" fill="#0085ff"/>
<path d="M1170 240h7v7h-7z" fill="#0082ff"/>
<path d="M1176 240h7v7h-7z" fill="#0080ff"/>
<path d="M1182 240h7v7h-7z" fill="#007dff"/>
<path d="M1188 240h7v7h-7z" fill="#007aff"/>
<path d="M1194 240h7v7h-7z" fill="#0078ff"/>
<path d="M1200 240h7v7h-7z" fill="#0075ff"/>
<path d="M1206 240h7v7h-7z" fill="#0072ff"/>
<path d="M1212 240h7v7h-7z" fill="#0770ff"/>
<path d="M1218 240h7v7h-7z" fill="#126dff"/>
<path d="M1224 240h7v7h-7z" fill="#1d6aff"/>
<path d="M1230 240h7v7h-7z" fill="#2867ff"/>
<path d="M1236 240h7v7h-7z" fill="#3364ff"/>
<path d="M1242 240h7v7h-7z" fill="#3e62ff"/>
<path d="M1248 240h7v7h-7z" fill="#4a5fff"/>
<path d="M1254 240h7v7h-7z" fill="#555cff"/>
<path d="M1260 240h7v7h-7z" fill="#6159ff"/>
<path d="M1266 240h7v7h-7z" fill="#6d56ff"/>
<path d="M1272 240h7v7h-7z" fill="#7953ff"/>
<path d="M1278 240h7v7h-7z" fill="#8450ff"/>
<path d="M1284 240h7v7h-7z" fill="#904dff"/>
<path d="M1290 240h7v7h-7z" fill="#9d4aff"/>
<path d="M1296 240h7v7h-7z" fill="#a947ff"/>
<path d="M1302 240h7v7h-7z" fill="#b544ff"/>
<path d="M1308 240h7v7h-7z" fill="#c141ff"/>
<path d="M1314 240h7v7h-7z" fill="#ce3eff"/>
<path d="M1320 240h7v7h-7z" fill="#da3bff"/>
<path d="M1326 240h7v7h-7z" fill="#e738ff"/>
<path d="M1332 240h7v7h-7z" fill="#f434ff"/>
<path d="M1338 240h7v7h-7z" fill="#ff31fd"/>
<path d="M1344 240h7v7h-7z" fill="#ff2bf1"/>
<path d="M1350 240h7v7h-7z" fill="#ff26e6"/>
<path d="M1356 240h7v7h-7z" fill="#ff22dc"/>
<path d="M1362 240h7v7h-7z" fill="#ff1ed2"/>
<path d="M1368 240h7v7h-7z" fill="#ff1ac9"/>
<path d="M1374 240h7v7h-7z" fill="#ff16c1"/>
<path d="M1380 240h7v7h-7z" fill="#ff13ba"/>
<path d="M1386 240h7v7h-7z" fill="#ff10b3"/>
<path d="M1392 240h7v7h-7z" fill="#ff0dac"/>
<path d="M1398 240h7v7h-7z" fill="#ff0aa6"/>
<path d="M1404 240h7v7h-7z" fill="#ff07a0"/>
<path d="M1410 240h7v7h-7z" fill="#ff059b"/>
<path d="M1416 240h7v7h-7z" fill="#ff0396"/>
<path d="M1422 240h7v7h-7z" fill="#ff0191"/>
<path d="M1428 240h7v7h-7z" fill="#ff008c"/>
<path d="M1434 240h7v7h-7z" fill="#ff0088"/>
<path d="M1440 240h7v7h-7z" fill="#ff0084"/>
<path d="M1446 240h7v7h-7z" fill="#ff0080"/>
<path d="M1452 240h7v7h-7z" fill="#ff007c"/>
<path d="M1458 240h7v7h-7z" fill="#ff0079"/>
<path d="M1464 240h7v7h-7z" fill="#ff0075"/>
<path d="M1470 240h7v7h-7z" fill="#ff0072"/>
<path d="M1476 240h7v7h-7z" fill="#ff006f"/>
<path d="M1482 240h7v7h-7z" fill="#ff006c"/>
<path d="M1488 240h7v7h-7z" fill="#ff0069"/>
<path d="M1494 240h7v7h-7z" fill="#ff0067"/>
<path d="M1500 240h7v7h-7z" fill="#ff0064"/>
<path d="M1506 240h7v7h-7z" fill="#ff0062"/>
<path d="M1512 240h7v7h-7z" fill="#ff005f"/>
<path d="M1518 240h7v7h-7z" fill="#ff005d"/>
<path d="M1524 240h7v7h-7z" fill="#ff005b"/>
<path d="M1530 240h7v7h-7z" fill="#ff0059"/>
<path d="M1536 240h7v7h-7z" fill="#ff0057"/>
<path d="M1542 240h7v7h-7z" fill="#ff0055"/>
<path d="M1548 240h7v7h-7z" fill="#ff0053"/>
<path d="M1554 240h7v7h-7z" fill="#ff0051"/>
<path d="M1560 240h7v7h-7z" fill="#ff004f"/>
<path d="M1566 240h7v7h-7z" fill="#ff004e"/>
<path d="M1572 240h7v7h-7z" fill="#ff004c"/>
<path d="M1578 240h7v7h-7z" fill="#ff004a"/>
<path d="M1584 240h7v7h-7z" fill="#ff0049"/>
<path d="M1590 240h7v7h-7z" fill="#ff0047"/>
<path d="M1596 240h7v7h-7z" fill="#ff0046"/>
<path d="M1602 240h7v7h-7z" fill="#ff0044"/>
<path d="M1608 240h7v7h-7z" fill="#ff0043"/>
<path d="M1614 240h7v7h-7z" fill="#ff0042"/>
<path d="M1620 240h7v7h-7z" fill="#ff0040"/>
<path d="M1626 240h7v7h-7z" fill="#ff003f"/>
<path d="M1632 240h7v7h-7z" fill="#ff003e"/>
<path d="M1638 240h7v7h-7z" fill="#ff003d"/>
<path d="M1644 240h7v7h-7z" fill="#ff003c"/>
<path d="M1080 246h7v7h-7z" fill="#009fff"/>
<path d="M1086 246h7v7h-7z" fill="#009dff"/>
<path d="M1092 246h7v7h-7z" fill="#009aff"/>
<path d="M1098 246h7v7h-7z" fill="#0098ff"/>
<path d="M1104 246h7v7h-7z" fill="#0096ff"/>
<path d="M1110 246h7v7h-7z" fill="#0093ff"/>
<path d="M1116 246h7v7h-7z" fill="#0091ff"/>
<path d="M1122 246h7v7h-7z" fill="#008fff"/>
<path d="M1128 246h7v7h-7z" fill="#008cff"/>
<path d="M1134 246h7v7h-7z" fill="#008aff"/>
<path d="M1140 246h7v7h-7z" fill="#0087ff"/>
<path d="M1146 246h7v7h-7z" fill="#0085ff"/>
<path d="M1152 246h7v7h-7z" fill="#0082ff"/>
<path d="M1158 246h7v7h-7z" fill="#0080ff"/>
<path d="M1164 246h7v7h-7z" fill="#007dff"/>
<path d="M1170 246h7v7h-7z" fill="#007bff"/>
<path d="M1176 246h7v7h-7z" fill="#0078ff"/>
<path d="M1182 246h7v7h-7z" fill="#0076ff"/>
<path d="M1188 246h7v7h-7z" fill="#0073ff"/>
<path d="M1194 246h7v7h-7z" fill="#0071ff"/>
<path d="M1200 246h7v7h-7z" fill="#006eff"/>
<path d="M1206 246h7v7h-7z" fill="#006bff"/>
<path d="M1212 246h7v7h-7z" fill="#0569ff"/>
<path d="M1218 246h7v7h-7z" fill="#0f66ff"/>
<path d="M1224 246h7v7h-7z" fill="#1a63ff"/>
<path d="M1230 246h7v7h-7z" fill="#2561ff"/>
<path d="M1236 246h7v7h-7z" fill="#305eff"/>
<path d="M1242 246h7v7h-7z" fill="#3a5bff"/>
<path d="M1248 246h7v7h-7z" fill="#4658ff"/>
<path d="M1254 246h7v7h-7z" fill="#5156ff"/>
<path d="M1260 246h7v7h-7z" fill="#5c53ff"/>
<path d="M1266 246h7v7h-7z" fill="#6750ff"/>
<path d="M1272 246h7v7h-7z" fill="#724dff"/>
<path d="M1278 246h7v7h-7z" fill="#7e4aff"/>
<path d="M1284 246h7v7h-7z" fill="#8947ff"/>
<path d="M1290 246h7v7h-7z" fill="#9544ff"/>
<path d="M1296 246h7v7h-7z" fill="#a141ff"/>
<path d="M1302 246h7v7h-7z" fill="#ac3eff"/>
<path d="M1308 246h7v7h-7z" fill="#b83bff"/>
<path d="M1314 246h7v7h-7z" fill="#c438ff"/>
<path d="M1320 246h7v7h-7z" fill="#d035ff"/>
<path d="M1326 246h7v7h-7z" fill="#dc32ff"/>
<path d="M1332 246h7v7h-7z" fill="#e92fff"/>
<path d="M1338 246h7v7h-7z" fill="#f52cff"/>
<path d="M1344 246h7v7h-7z" fill="#ff29fd"/>
<path d="M1350 246h7v7h-7z" fill="#ff24f1"/>
<path d="M1356 246h7v7h-7z" fill="#ff1fe6"/>
<path d="M1362 246h7v7h-7z" fill="#ff1bdc"/>
<path d="M1368 246h7v7h-7z" fill="#ff17d3"/>
<path d="M1374 246h7v7h-7z" fill="#ff14cb"/>
<path d="M1380 246h7v7h-7z" fill="#ff11c3"/>
<path d="M1386 246h7v7h-7z" fill="#ff0dbb"/>
<path d="M1392 246h7v7h-7z" fill="#ff0bb4"/>
<path d="M1398 246h7v7h-7z" fill="#ff08ae"/>
<path d="M1404 246h7v7h-7z" fill="#ff05a8"/>
<path d="M1410 246h7v7h-7z" fill="#ff03a2"/>
<path d="M1416 246h7v7h-7z" fill="#ff019d"/>
<path d="M1422 246h7v7h-7z" fill="#ff0098"/>
<path d="M1428 246h7v7h-7z" fill="#ff0093"/>
<path d="M1434 246h7v7h-7z" fill="#ff008f"/>
<path d="M1440 246h7v7h-7z" fill="#ff008a"/>
<path d="M1446 246h7v7h-7z" fill="#ff0086"/>
<path d="M1452 246h7v7h-7z" fill="#ff0082"/>
<path d="M1458 246h7v7h-7z" fill="#ff007f"/>
<path d="M1464 246h7v7h-7z" fill="#ff007b"/>
<path d="M1470 246h7v7h-7z" fill="#ff0078"/>
<path d="M1476 246h7v7h-7z" fill="#ff0075"/>
<path d="M1482 246h7v7h-7z" fill="#ff0072"/>
<path d="M1488 246h7v7h-7z" fill="#ff006f"/>
<path d="M1494 246h7v7h-7z" fill="#ff006c"/>
<path d="M1500 246h7v7h-7z" fill="#ff0069"/>
<path d="M1506 246h7v7h-7z" fill="#ff0067"/>
<path d="M1512 246h7v7h-7z" fill="#ff0064"/>
<path d="M1518 246h7v7h-7z" fill="#ff0062"/>
<path d="M1524 246h7v7h-7z" fill="#ff005f"/>
<path d="M1530 246h7v7h-7z" fill="#ff005d"/>
<path d="M1536 246h7v7h-7z" fill="#ff005b"/>
<path d="M1542 246h7v7h-7z" fill="#ff0059"/>
<path d="M1548 246h7v7h-7z" fill="#ff0057"/>
<path d="M1554 246h7v7h-7z" fill="#ff0055"/>
<path d="M1560 246h7v7h-7z" fill="#ff0053"/>
<path d="M1566 246h7v7h-7z" fill="#ff0052"/>
<path d="M1572 246h7v7h-7z" fill="#ff0050"/>
<path d="M1578 246h7v7h-7z" fill="#ff004e"/>
<path d="M1584 246h7v7h-7z" fill="#ff004d"/>
<path d="M1590 246h7v7h-7z" fill="#ff004b"/>
<path d="M1596 246h7v7h-7z" fill="#ff004a"/>
<path d="M1602 246h7v7h-7z" fill="#ff0048"/>
<path d="M1608 246h7v7h-7z" fill="#ff0047"/>
<path d="M1614 246h7v7h-7z" fill="#ff0045"/>
<path d="M1620 246h7v7h-7z" fill="#ff0044"/>
<path d="M1626 246h7v7h-7z" fill="#ff0043"/>
<path d="M1632 246h7v7h-7z" fill="#ff0041"/>
<path d="M1638 246h7v7h-7z" fill="#ff0040"/>
<path d="M1080 252h7v7h-7z" fill="#0097ff"/>
<path d="M1086 252h7v7h-7z" fill="#0095ff"/>
<path d="M1092 252h7v7h-7z" fill="#0093ff"/>
<path d="M1098 252h7v7h-7z" fill="#0091ff"/>
<path d="M1104 252h7v7h-7z" fill="#008eff"/>
<path d="M1110 252h7v7h-7z" fill="#008cff"/>
<path d="M1116 252h7v7h-7z" fill="#008aff"/>
<path d="M1122 252h7v7h-7z" fill="#0087ff"/>
<path d="M1128 252h7v7h-7z" fill="#0085ff"/>
<path d="M1134 252h7v7h-7z" fill="#0083ff"/>
<path d="M1140 252h7v7h-7z" fill="#0080ff"/>
<path d="M1146 252h7v7h-7z" fill="#007eff"/>
<path d="M1152 252h7v7h-7z" fill="#007bff"/>
<path d="M1158 252h7v7h-7z" fill="#0079ff"/>
<path d="M1164 252h7v7h-7z" fill="#0077ff"/>
<path d="M1170 252h7v7h-7z" fill="#0074ff"/>
<path d="M1176 252h7v7h-7z" fill="#0072ff"/>
<path d="M1182 252h7v7h-7z" fill="#006fff"/>
<path d="M1188 252h7v7h-7z" fill="#006dff"/>
<path d="M1194 252h7v7h-7z" fill="#006aff"/>
<path d="M1200 252h7v7h-7z" fill="#0067ff"/>
<path d="M1206 252h7v7h-7z" fill="#0065ff"/>
<path d="M1212 252h7v7h-7z" fill="#0362ff"/>
<path d="M1218 252h7v7h-7z" fill="#0d60ff"/>
<path d="M1224 252h7v7h-7z" fill="#175dff"/>
<path d="M1230 252h7v7h-7z" fill="#225aff"/>
<path d="M1236 252h7v7h-7z" fill="#2c58ff"/>
<path d="M1242 252h7v7h-7z" fill="#3755ff"/>
<path d="M1248 252h7v7h-7z" fill="#4152ff"/>
<path d="M1254 252h7v7h-7z" fill="#4c50ff"/>
<path d="M1260 252h7v7h-7z" fill="#574dff"/>
<path d="M1266 252h7v7h-7z" fill="#624aff"/>
<path d="M1272 252h7v7h-7z" fill="#6d47ff"/>
<path d="M1278 252h7v7h-7z" fill="#7845ff"/>
<path d="M1284 252h7v7h-7z" fill="#8342ff"/>
<path d="M1290 252h7v7h-7z" fill="#8e3fff"/>
<path d="M1296 252h7v7h-7z" fill="#993cff"/>
<path d="M1302 252h7v7h-7z" fill="#a439ff"/>
<path d="M1308 252h7v7h-7z" fill="#b036ff"/>
<path d="M1314 252h7v7h-7z" fill="#bb33ff"/>
<path d="M1320 252h7v7h-7z" fill="#c730ff"/>
<path d="M1326 252h7v7h-7z" fill="#d22dff"/>
<path d="M1332 252h7v7h-7z" fill="#de2aff"/>
<path d="M1338 252h7v7h-7z" fill="#ea27ff"/>
<path d="M1344 252h7v7h-7z" fill="#f624ff"/>
<path d="M1350 252h7v7h-7z" fill="#ff21fc"/>
<path d="M1356 252h7v7h-7z" fill="#ff1df1"/>
<path d="M1362 252h7v7h-7z" fill="#ff19e6"/>
<path d="M1368 252h7v7h-7z" fill="#ff15dd"/>
<path d="M1374 252h7v7h-7z" fill="#ff11d4"/>
<path d="M1380 252h7v7h-7z" fill="#ff0ecc"/>
<path d="M1386 252h7v7h-7z" fill="#ff0bc4"/>
<path d="M1392 252h7v7h-7z" fill="#ff08bd"/>
<path d="M1398 252h7v7h-7z" fill="#ff06b6"/>
<path d="M1404 252h7v7h-7z" fill="#ff03b0"/>
<path d="M1410 252h7v7h-7z" fill="#ff01aa"/>
<path d="M1416 252h7v7h-7z" fill="#ff00a4"/>
<path d="M1422 252h7v7h-7z" fill="#ff009f"/>
<path d="M1428 252h7v7h-7z" fill="#ff009a"/>
<path d="M1434 252h7v7h-7z" fill="#ff0095"/>
<path d="M1440 252h7v7h-7z" fill="#ff0091"/>
<path d="M1446 252h7v7h-7z" fill="#ff008c"/>
<path d="M1452 252h7v7h-7z" fill="#ff0088"/>
<path d="M1458 252h7v7h-7z" fill="#ff0085"/>
<path d="M1464 252h7v7h-7z" fill="#ff0081"/>
<path d="M1470 252h7v7h-7z" fill="#ff007d"/>
<path d="M1476 252h7v7h-7z" fill="#ff007a"/>
<path d="M1482 252h7v7h-7z" fill="#ff0077"/>
<path d="M1488 252h7v7h-7z" fill="#ff0074"/>
<path d="M1494 252h7v7h-7z" fill="#ff0071"/>
<path d="M1500 252h7v7h-7z" fill="#ff006e"/>
<path d="M1506 252h7v7h-7z" fill="#ff006b"/>
<path d="M1512 252h7v7h-7z" fill="#ff0069"/>
<path d="M1518 252h7v7h-7z" fill="#ff0066"/>
<path d="M1524 252h7v7h-7z" fill="#ff0064"/>
<path d="M1530 252h7v7h-7z" fill="#ff0062"/>
<path d="M1536 252h7v7h-7z" fill="#ff005f"/>
<path d="M1542 252h7v7h-7z" fill="#ff005d"/>
<path d="M1548 252h7v7h-7z" fill="#ff005b"/>
<path d="M1554 252h7v7h-7z" fill="#ff0059"/>
<path d="M1560 252h7v7h-7z" fill="#ff0057"/>
<path d="M1566 252h7v7h-7z" fill="#ff0056"/>
<path d="M1572 252h7v7h-7z" fill="#ff0054"/>
<path d="M1578 252h7v7h-7z" fill="#ff0052"/>
<path d="M1584 252h7v7h-7z" fill="#ff0050"/>
<path d="M1590 252h7v7h-7z" fill="#ff004f"/>
<path d="M1596 252h7v7h-7z" fill="#ff004d"/>
<path d="M1602 252h7v7h-7z" fill="#ff004c"/>
<path d="M1608 252h7v7h-7z" fill="#ff004a"/>
<path d="M1614 252h7v7h-7z" fill="#ff0049"/>
<path d="M1620 252h7v7h-7z" fill="#ff0047"/>
<path d="M1626 252h7v7h-7z" fill="#ff0046"/>
<path d="M1632 252h7v7h-7z" fill="#ff0045"/>
<path d="M1086 258h7v7h-7z" fill="#008eff"/>
<path d="M1092 258h7v7h-7z" fill="#008cff"/>
<path d="M1098 258h7v7h-7z" fill="#0089ff"/>
<path d="M1104 258h7v7h-7z" fill="#0087ff"/>
<path d="M1110 258h7v7h-7z" fill="#0085ff"/>
<path d="M1116 258h7v7h-7z" fill="#0083ff"/>
<path d="M1122 258h7v7h-7z" fill="#0080ff"/>
<path d="M1128 258h7v7h-7z" fill="#007eff"/>
<path d="M1134 258h7v7h-7z" fill="#007cff"/>
<path d="M1140 258h7v7h-7z" fill="#007aff"/>
<path d="M1146 258h7v7h-7z" fill="#0077ff"/>
<path d="M1152 258h7v7h-7z" fill="#0075ff"/>
<path d="M1158 258h7v7h-7z" fill="#0072ff"/>
<path d="M1164 258h7v7h-7z" fill="#0070ff"/>
<path d="M1170 258h7v7h-7z" fill="#006eff"/>
<path d="M1176 258h7v7h-7z" fill="#006bff"/>
<path d="M1182 258h7v7h-7z" fill="#0069ff"/>
<path d="M1188 258h7v7h-7z" fill="#0066ff"/>
<path d="M1194 258h7v7h-7z" fill="#0064ff"/>
<path d="M1200 258h7v7h-7z" fill="#0061ff"/>
<path d="M1206 258h7v7h-7z" fill="#005fff"/>
<path d="M1212 258h7v7h-7z" fill="#015cff"/>
<path d="M1218 258h7v7h-7z" fill="#0b5aff"/>
<path d="M1224 258h7v7h-7z" fill="#1557ff"/>
<path d="M1230 258h7v7h-7z" fill="#1f55ff"/>
<path d="M1236 258h7v7h-7z" fill="#2952ff"/>
<path d="M1242 258h7v7h-7z" fill="#334fff"/>
<path d="M1248 258h7v7h-7z" fill="#3e4dff"/>
<path d="M1254 258h7v7h-7z" fill="#484aff"/>
<path d="M1260 258h7v7h-7z" fill="#5248ff"/>
<path d="M1266 258h7v7h-7z" fill="#5d45ff"/>
<path d="M1272 258h7v7h-7z" fill="#6742ff"/>
<path d="M1278 258h7v7h-7z" fill="#723fff"/>
<path d="M1284 258h7v7h-7z" fill="#7c3dff"/>
<path d="M1290 258h7v7h-7z" fill="#873aff"/>
<path d="M1296 258h7v7h-7z" fill="#9237ff"/>
<path d="M1302 258h7v7h-7z" fill="#9d34ff"/>
<path d="M1308 258h7v7h-7z" fill="#a832ff"/>
<path d="M1314 258h7v7h-7z" fill="#b32fff"/>
<path d="M1320 258h7v7h-7z" fill="#be2cff"/>
<path d="M1326 258h7v7h-7z" fill="#c929ff"/>
<path d="M1332 258h7v7h-7z" fill="#d426ff"/>
<path d="M1338 258h7v7h-7z" fill="#e023ff"/>
<path d="M1344 258h7v7h-7z" fill="#eb20ff"/>
<path d="M1350 258h7v7h-7z" fill="#f71dff"/>
<path d="M1356 258h7v7h-7z" fill="#ff1afc"/>
<path d="M1362 258h7v7h-7z" fill="#ff16f1"/>
<path d="M1368 258h7v7h-7z" fill="#ff12e7"/>
<path d="M1374 258h7v7h-7z" fill="#ff0fdd"/>
<path d="M1380 258h7v7h-7z" fill="#ff0cd5"/>
<path d="M1386 258h7v7h-7z" fill="#ff09cd"/>
<path d="M1392 258h7v7h-7z" fill="#ff06c5"/>
<path d="M1398 258h7v7h-7z" fill="#ff04be"/>
<path d="M1404 258h7v7h-7z" fill="#ff01b8"/>
<path d="M1410 258h7v7h-7z" fill="#ff00b1"/>
<path d="M1416 258h7v7h-7z" fill="#ff00ab"/>
<path d="M1422 258h7v7h-7z" fill="#ff00a6"/>
<path d="M1428 258h7v7h-7z" fill="#ff00a1"/>
<path d="M1434 258h7v7h-7z" fill="#ff009c"/>
<path d="M1440 258h7v7h-7z" fill="#ff0097"/>
<path d="M1446 258h7v7h-7z" fill="#ff0093"/>
<path d="M1452 258h7v7h-7z" fill="#ff008f"/>
<path d="M1458 258h7v7h-7z" fill="#ff008b"/>
<path d="M1464 258h7v7h-7z" fill="#ff0087"/>
<path d="M1470 258h7v7h-7z" fill="#ff0083"/>
<path d="M1476 258h7v7h-7z" fill="#ff0080"/>
<path d="M1482 258h7v7h-7z" fill="#ff007c"/>
<path d="M1488 258h7v7h-7z" fill="#ff0079"/>
<path d="M1494 258h7v7h-7z" fill="#ff0076"/>
<path d="M1500 258h7v7h-7z" fill="#ff0073"/>
<path d="M1506 258h7v7h-7z" fill="#ff0070"/>
<path d="M1512 258h7v7h-7z" fill="#ff006e"/>
<path d="M1518 258h7v7h-7z" fill="#ff006b"/>
<path d="M1524 258h7v7h-7z" fill="#ff0069"/>
<path d="M1530 258h7v7h-7z" fill="#ff0066"/>
<path d="M1536 258h7v7h-7z" fill="#ff0064"/>
<path d="M1542 258h7v7h-7z" fill="#ff0062"/>
<path d="M1548 258h7v7h-7z" fill="#ff0060"/>
<path d="M1554 258h7v7h-7z" fill="#ff005d"/>
<path d="M1560 258h7v7h-7z" fill="#ff005c"/>
<path d="M1566 258h7v7h-7z" fill="#ff005a"/>
<path d="M1572 258h7v7h-7z" fill="#ff0058"/>
<path d="M1578 258h7v7h-7z" fill="#ff0056"/>
<path d="M1584 258h7v7h-7z" fill="#ff0054"/>
<path d="M1590 258h7v7h-7z" fill="#ff0053"/>
<path d="M1596 258h7v7h-7z" fill="#ff0051"/>
<path d="M1602 258h7v7h-7z" fill="#ff004f"/>
<path d="M1608 258h7v7h-7z" fill="#ff004e"/>
<path d="M1614 258h7v7h-7z" fill="#ff004c"/>
<path d="M1620 258h7v7h-7z" fill="#ff004b"/>
<path d="M1626 258h7v7h-7z" fill="#ff0049"/>
<path d="M1086 264h7v7h-7z" fill="#0087ff"/>
<path d="M1092 264h7v7h-7z" fill="#0085ff"/>
<path d="M1098 264h7v7h-7z" fill="#0083ff"/>
<path d="M1104 264h7v7h-7z" fill="#0081ff"/>
<path d="M1110 264h7v7h-7z" fill="#007eff"/>
<path d="M1116 264h7v7h-7z" fill="#007cff"/>
<path d="M1122 264h7v7h-7z" fill="#007aff"/>
<path d="M1128 264h7v7h-7z" fill="#0078ff"/>
<path d="M1134 264h7v7h-7z" fill="#0075ff"/>
<path d="M1140 264h7v7h-7z" fill="#0073ff"/>
<path d="M1146 264h7v7h-7z" fill="#0071ff"/>
<path d="M1152 264h7v7h-7z" fill="#006fff"/>
<path d="M1158 264h7v7h-7z" fill="#006cff"/>
<path d="M1164 264h7v7h-7z" fill="#006aff"/>
<path d="M1170 264h7v7h-7z" fill="#0068ff"/>
<path d="M1176 264h7v7h-7z" fill="#0065ff"/>
<path d="M1182 264h7v7h-7z" fill="#0063ff"/>
<path d="M1188 264h7v7h-7z" fill="#0060ff"/>
<path d="M1194 264h7v7h-7z" fill="#005eff"/>
<path d="M1200 264h7v7h-7z" fill="#005cff"/>
<path d="M1206 264h7v7h-7z" fill="#0059ff"/>
<path d="M1212 264h7v7h-7z" fill="#0057ff"/>
<path d="M1218 264h7v7h-7z" fill="#0954ff"/>
<path d="M1224 264h7v7h-7z" fill="#1352ff"/>
<path d="M1230 264h7v7h-7z" fill="#1d4fff"/>
<path d="M1236 264h7v7h-7z" fill="#264dff"/>
<path d="M1242 264h7v7h-7z" fill="#304aff"/>
<path d="M1248 264h7v7h-7z" fill="#3a48ff"/>
<path d="M1254 264h7v7h-7z" fill="#4445ff"/>
<path d="M1260 264h7v7h-7z" fill="#4e43ff"/>
<path d="M1266 264h7v7h-7z" fill="#5840ff"/>
<path d="M1272 264h7v7h-7z" fill="#623dff"/>
<path d="M1278 264h7v7h-7z" fill="#6c3bff"/>
<path d="M1284 264h7v7h-7z" fill="#7738ff"/>
<path d="M1290 264h7v7h-7z" fill="#8135ff"/>
<path d="M1296 264h7v7h-7z" fill="#8b33ff"/>
<path d="M1302 264h7v7h-7z" fill="#9630ff"/>
<path d="M1308 264h7v7h-7z" fill="#a02dff"/>
<path d="M1314 264h7v7h-7z" fill="#ab2aff"/>
<path d="M1320 264h7v7h-7z" fill="#b628ff"/>
<path d="M1326 264h7v7h-7z" fill="#c125ff"/>
<path d="M1332 264h7v7h-7z" fill="#cb22ff"/>
<path d="M1338 264h7v7h-7z" fill="#d61fff"/>
<path d="M1344 264h7v7h-7z" fill="#e11cff"/>
<path d="M1350 264h7v7h-7z" fill="#ec1aff"/>
<path d="M1356 264h7v7h-7z" fill="#f817ff"/>
<path d="M1362 264h7v7h-7z" fill="#ff13fb"/>
<path d="M1368 264h7v7h-7z" fill="#ff10f1"/>
<path d="M1374 264h7v7h-7z" fill="#ff0de7"/>
<path d="M1380 264h7v7h-7z" fill="#ff09de"/>
<path d="M1386 264h7v7h-7z" fill="#ff07d6"/>
<path d="M1392 264h7v7h-7z" fill="#ff04ce"/>
<path d="M1398 264h7v7h-7z" fill="#ff01c6"/>
<path d="M1404 264h7v7h-7z" fill="#ff00bf"/>
<path d="M1410 264h7v7h-7z" fill="#ff00b9"/>
<path d="M1416 264h7v7h-7z" fill="#ff00b3"/>
<path d="M1422 264h7v7h-7z" fill="#ff00ad"/>
<path d="M1428 264h7v7h-7z" fill="#ff00a8"/>
<path d="M1434 264h7v7h-7z" fill="#ff00a3"/>
<path d="M1440 264h7v7h-7z" fill="#ff009e"/>
<path d="M1446 264h7v7h-7z" fill="#ff0099"/>
<path d="M1452 264h7v7h-7z" fill="#ff0095"/>
<path d="M1458 264h7v7h-7z" fill="#ff0091"/>
<path d="M1464 264h7v7h-7z" fill="#ff008d"/>
<path d="M1470 264h7v7h-7z" fill="#ff0089"/>
<path d="M1476 264h7v7h-7z" fill="#ff0085"/>
<path d="M1482 264h7v7h-7z" fill="#ff0082"/>
<path d="M1488 264h7v7h-7z" fill="#ff007e"/>
<path d="M1494 264h7v7h-7z" fill="#ff007b"/>
<path d="M1500 264h7v7h-7z" fill="#ff0078"/>
<path d="M1506 264h7v7h-7z" fill="#ff0075"/>
<path d="M1512 264h7v7h-7z" fill="#ff0072"/>
<path d="M1518 264h7v7h-7z" fill="#ff0070"/>
<path d="M1524 264h7v7h-7z" fill="#ff006d"/>
<path d="M1530 264h7v7h-7z" fill="#ff006b"/>
<path d="M1536 264h7v7h-7z" fill="#ff0068"/>
<path d="M1542 264h7v7h-7z" fill="#ff0066"/>
<path d="M1548 264h7v7h-7z" fill="#ff0064"/>
<path d="M1554 264h7v7h-7z" fill="#ff0062"/>
<path d="M1560 264h7v7h-7z" fill="#ff0060"/>
<path d="M1566 264h7v7h-7z" fill="#ff005e"/>
<path d="M1572 264h7v7h-7z" fill="#ff005c"/>
<path d="M1578 264h7v7h-7z" fill="#ff005a"/>
<path d="M1584 264h7v7h-7z" fill="#ff0058"/>
<path d="M1590 264h7v7h-7z" fill="#ff0056"/>
<path d="M1596 264h7v7h-7z" fill="#ff0055"/>
<path d="M1602 264h7v7h-7z" fill="#ff0053"/>
<path d="M1608 264h7v7h-7z" fill="#ff0051"/>
<path d="M1614 264h7v7h-7z" fill="#ff0050"/>
<path d="M1620 264h7v7h-7z" fill="#ff004e"/>
<path d="M1626 264h7v7h-7z" fill="#ff004d"/>
<path d="M1092 270h7v7h-7z" fill="#007fff"/>
<path d="M1098 270h7v7h-7z" fill="#007dff"/>
<path d="M1104 270h7v7h-7z" fill="#007aff"/>
<path d="M1110 270h7v7h-7z" fill="#0078ff"/>
<path d="M1116 270h7v7h-7z" fill="#0076ff"/>
<path d="M1122 270h7v7h-7z" fill="#0074ff"/>
<path d="M1128 270h7v7h-7z" fill="#0072ff"/>
<path d="M1134 270h7v7h-7z" fill="#0070ff"/>
<path d="M1140 270h7v7h-7z" fill="#006dff"/>
<path d="M1146 270h7v7h-7z" fill="#006bff"/>
<path d="M1152 270h7v7h-7z" fill="#0069ff"/>
<path d="M1158 270h7v7h-7z" fill="#0067ff"/>
<path d="M1164 270h7v7h-7z" fill="#0064ff"/>
<path d="M1170 270h7v7h-7z" fill="#0062ff"/>
<path d="M1176 270h7v7h-7z" fill="#0060ff"/>
<path d="M1182 270h7v7h-7z" fill="#005dff"/>
<path d="M1188 270h7v7h-7z" fill="#005bff"/>
<path d="M1194 270h7v7h-7z" fill="#0059ff"/>
<path d="M1200 270h7v7h-7z" fill="#0056ff"/>
<path d="M1206 270h7v7h-7z" fill="#0054ff"/>
<path d="M1212 270h7v7h-7z" fill="#0052ff"/>
<path d="M1218 270h7v7h-7z" fill="#084fff"/>
<path d="M1224 270h7v7h-7z" fill="#114dff"/>
<path d="M1230 270h7v7h-7z" fill="#1a4aff"/>
<path d="M1236 270h7v7h-7z" fill="#2448ff"/>
<path d="M1242 270h7v7h-7z" fill="#2d45ff"/>
<path d="M1248 270h7v7h-7z" fill="#3743ff"/>
<path d="M1254 270h7v7h-7z" fill="#4040ff"/>
<path d="M1260 270h7v7h-7z" fill="#4a3eff"/>
<path d="M1266 270h7v7h-7z" fill="#543bff"/>
<path d="M1272 270h7v7h-7z" fill="#5d39ff"/>
<path d="M1278 270h7v7h-7z" fill="#6736ff"/>
<path d="M1284 270h7v7h-7z" fill="#7134ff"/>
<path d="M1290 270h7v7h-7z" fill="#7b31ff"/>
<path d="M1296 270h7v7h-7z" fill="#852eff"/>
<path d="M1302 270h7v7h-7z" fill="#8f2cff"/>
<path d="M1308 270h7v7h-7z" fill="#9a29ff"/>
<path d="M1314 270h7v7h-7z" fill="#a426ff"/>
<path d="M1320 270h7v7h-7z" fill="#ae24ff"/>
<path d="M1326 270h7v7h-7z" fill="#b921ff"/>
<path d="M1332 270h7v7h-7z" fill="#c31eff"/>
<path d="M1338 270h7v7h-7z" fill="#cd1cff"/>
<path d="M1344 270h7v7h-7z" fill="#d819ff"/>
<path d="M1350 270h7v7h-7z" fill="#e316ff"/>
<path d="M1356 270h7v7h-7z" fill="#ed13ff"/>
<path d="M1362 270h7v7h-7z" fill="#f810ff"/>
<path d="M1368 270h7v7h-7z" fill="#ff0dfb"/>
<path d="M1374 270h7v7h-7z" fill="#ff0af1"/>
<path d="M1380 270h7v7h-7z" fill="#ff07e7"/>
<path d="M1386 270h7v7h-7z" fill="#ff04de"/>
<path d="M1392 270h7v7h-7z" fill="#ff02d6"/>
<path d="M1398 270h7v7h-7z" fill="#ff00cf"/>
<path d="M1404 270h7v7h-7z" fill="#ff00c7"/>
<path d="M1410 270h7v7h-7z" fill="#ff00c1"/>
<path d="M1416 270h7v7h-7z" fill="#ff00ba"/>
<path d="M1422 270h7v7h-7z" fill="#ff00b4"/>
<path d="M1428 270h7v7h-7z" fill="#ff00af"/>
<path d="M1434 270h7v7h-7z" fill="#ff00a9"/>
<path d="M1440 270h7v7h-7z" fill="#ff00a4"/>
<path d="M1446 270h7v7h-7z" fill="#ff009f"/>
<path d="M1452 270h7v7h-7z" fill="#ff009b"/>
<path d="M1458 270h7v7h-7z" fill="#ff0097"/>
<path d="M1464 270h7v7h-7z" fill="#ff0092"/>
<path d="M1470 270h7v7h-7z" fill="#ff008e"/>
<path d="M1476 270h7v7h-7z" fill="#ff008b"/>
<path d="M1482 270h7v7h-7z" fill="#ff0087"/>
<path d="M1488 270h7v7h-7z" fill="#ff0084"/>
<path d="M1494 270h7v7h-7z" fill="#ff0080"/>
<path d="M1500 270h7v7h-7z" fill="#ff007d"/>
<path d="M1506 270h7v7h-7z" fill="#ff007a"/>
<path d="M1512 270h7v7h-7z" fill="#ff0077"/>
<path d="M1518 270h7v7h-7z" fill="#ff0075"/>
<path d="M1524 270h7v7h-7z" fill="#ff0072"/>
<path d="M1530 270h7v7h-7z" fill="#ff006f"/>
<path d="M1536 270h7v7h-7z" fill="#ff006d"/>
<path d="M1542 270h7v7h-7z" fill="#ff006a"/>
<path d="M1548 270h7v7h-7z" fill="#ff0068"/>
<path d="M1554 270h7v7h-7z" fill="#ff0066"/>
<path d="M1560 270h7v7h-7z" fill="#ff0064"/>
<path d="M1566 270h7v7h-7z" fill="#ff0062"/>
<path d="M1572 270h7v7h-7z" fill="#ff0060"/>
<path d="M1578 270h7v7h-7z" fill="#ff005e"/>
<path d="M1584 270h7v7h-7z" fill="#ff005c"/>
<path d="M1590 270h7v7h-7z" fill="#ff005a"/>
<path d="M1596 270h7v7h-7z" fill="#ff0058"/>
<path d="M1602 270h7v7h-7z" fill="#ff0057"/>
<path d="M1608 270h7v7h-7z" fill="#ff0055"/>
<path d="M1614 270h7v7h-7z" fill="#ff0053"/>
<path d="M1620 270h7v7h-7z" fill="#ff0052"/>
<path d="M1092 276h7v7h-7z" fill="#0079ff"/>
<path d="M1098 276h7v7h-7z" fill="#0077ff"/>
<path d="M1104 276h7v7h-7z" fill="#0075ff"/>
<path d="M1110 276h7v7h-7z" fill="#0072ff"/>
<path d="M1116 276h7v7h-7z" fill="#0070ff"/>
<path d="M1122 276h7v7h-7z" fill="#006eff"/>
<path d="M1128 276h7v7h-7z" fill="#006cff"/>
<path d="M1134 276h7v7h-7z" fill="#006aff"/>
<path d="M1140 276h7v7h-7z" fill="#0068ff"/>
<path d="M1146 276h7v7h-7z" fill="#0066ff"/>
<path d="M1152 276h7v7h-7z" fill="#0063ff"/>
<path d="M1158 276h7v7h-7z" fill="#0061ff"/>
<path d="M1164 276h7v7h-7z" fill="#005fff"/>
<path d="M1170 276h7v7h-7z" fill="#005dff"/>
<path d="M1176 276h7v7h-7z" fill="#005aff"/>
<path d="M1182 276h7v7h-7z" fill="#0058ff"/>
<path d="M1188 276h7v7h-7z" fill="#0056ff"/>
<path d="M1194 276h7v7h-7z" fill="#0054ff"/>
<path d="M1200 276h7v7h-7z" fill="#0051ff"/>
<path d="M1206 276h7v7h-7z" fill="#004fff"/>
<path d="M1212 276h7v7h-7z" fill="#004dff"/>
<path d="M1218 276h7v7h-7z" fill="#064aff"/>
<path d="M1224 276h7v7h-7z" fill="#0f48ff"/>
<path d="M1230 276h7v7h-7z" fill="#1846ff"/>
<path d="M1236 276h7v7h-7z" fill="#2143ff"/>
<path d="M1242 276h7v7h-7z" fill="#2a41ff"/>
<path d="M1248 276h7v7h-7z" fill="#343eff"/>
<path d="M1254 276h7v7h-7z" fill="#3d3cff"/>
<path d="M1260 276h7v7h-7z" fill="#4639ff"/>
<path d="M1266 276h7v7h-7z" fill="#5037ff"/>
<path d="M1272 276h7v7h-7z" fill="#5934ff"/>
<path d="M1278 276h7v7h-7z" fill="#6332ff"/>
<path d="M1284 276h7v7h-7z" fill="#6c2fff"/>
<path d="M1290 276h7v7h-7z" fill="#762dff"/>
<path d="M1296 276h7v7h-7z" fill="#802aff"/>
<path d="M1302 276h7v7h-7z" fill="#8928ff"/>
<path d="M1308 276h7v7h-7z" fill="#9325ff"/>
<path d="M1314 276h7v7h-7z" fill="#9d23ff"/>
<path d="M1320 276h7v7h-7z" fill="#a720ff"/>
<path d="M1326 276h7v7h-7z" fill="#b11dff"/>
<path d="M1332 276h7v7h-7z" fill="#bb1bff"/>
<path d="M1338 276h7v7h-7z" fill="#c518ff"/>
<path d="M1344 276h7v7h-7z" fill="#cf15ff"/>
<path d="M1350 276h7v7h-7z" fill="#da13ff"/>
<path d="M1356 276h7v7h-7z" fill="#e410ff"/>
<path d="M1362 276h7v7h-7z" fill="#ef0dff"/>
<path d="M1368 276h7v7h-7z" fill="#f90aff"/>
<path d="M1374 276h7v7h-7z" fill="#ff08fa"/>
<path d="M1380 276h7v7h-7z" fill="#ff05f1"/>
<path d="M1386 276h7v7h-7z" fill="#ff02e7"/>
<path d="M1392 276h7v7h-7z" fill="#ff00df"/>
<path d="M1398 276h7v7h-7z" fill="#ff00d7"/>
<path d="M1404 276h7v7h-7z" fill="#ff00cf"/>
<path d="M1410 276h7v7h-7z" fill="#ff00c8"/>
<path d="M1416 276h7v7h-7z" fill="#ff00c2"/>
<path d="M1422 276h7v7h-7z" fill="#ff00bc"/>
<path d="M1428 276h7v7h-7z" fill="#ff00b6"/>
<path d="M1434 276h7v7h-7z" fill="#ff00b0"/>
<path d="M1440 276h7v7h-7z" fill="#ff00ab"/>
<path d="M1446 276h7v7h-7z" fill="#ff00a6"/>
<path d="M1452 276h7v7h-7z" fill="#ff00a1"/>
<path d="M1458 276h7v7h-7z" fill="#ff009d"/>
<path d="M1464 276h7v7h-7z" fill="#ff0098"/>
<path d="M1470 276h7v7h-7z" fill="#ff0094"/>
<path d="M1476 276h7v7h-7z" fill="#ff0090"/>
<path d="M1482 276h7v7h-7z" fill="#ff008d"/>
<path d="M1488 276h7v7h-7z" fill="#ff0089"/>
<path d="M1494 276h7v7h-7z" fill="#ff0086"/>
<path d="M1500 276h7v7h-7z" fill="#ff0082"/>
<path d="M1506 276h7v7h-7z" fill="#ff007f"/>
<path d="M1512 276h7v7h-7z" fill="#ff007c"/>
<path d="M1518 276h7v7h-7z" fill="#ff0079"/>
<path d="M1524 276h7v7h-7z" fill="#ff0077"/>
<path d="M1530 276h7v7h-7z" fill="#ff0074"/>
<path d="M1536 276h7v7h-7z" fill="#ff0071"/>
<path d="M1542 276h7v7h-7z" fill="#ff006f"/>
<path d="M1548 276h7v7h-7z" fill="#ff006c"/>
<path d="M1554 276h7v7h-7z" fill="#ff006a"/>
<path d="M1560 276h7v7h-7z" fill="#ff0068"/>
<path d="M1566 276h7v7h-7z" fill="#ff0066"/>
<path d="M1572 276h7v7h-7z" fill="#ff0064"/>
<path d="M1578 276h7v7h-7z" fill="#ff0062"/>
<path d="M1584 276h7v7h-7z" fill="#ff0060"/>
<path d="M1590 276h7v7h-7z" fill="#ff005e"/>
<path d="M1596 276h7v7h-7z" fill="#ff005c"/>
<path d="M1602 276h7v7h-7z" fill="#ff005a"/>
<path d="M1608 276h7v7h-7z" fill="#ff0059"/>
<path d="M1614 276h7v7h-7z" fill="#ff0057"/>
<path d="M1098 282h7v7h-7z" fill="#0071ff"/>
<path d="M1104 282h7v7h-7z" fill="#006fff"/>
<path d="M1110 282h7v7h-7z" fill="#006dff"/>
<path d="M1116 282h7v7h-7z" fill="#006bff"/>
<path d="M1122 282h7v7h-7z" fill="#0069ff"/>
<path d="M1128 282h7v7h-7z" fill="#0067ff"/>
<path d="M1134 282h7v7h-7z" fill="#0065ff"/>
<path d="M1140 282h7v7h-7z" fill="#0063ff"/>
<path d="M1146 282h7v7h-7z" fill="#0060ff"/>
<path d="M1152 282h7v7h-7z" fill="#005eff"/>
<path d="M1158 282h7v7h-7z" fill="#005cff"/>
<path d="M1164 282h7v7h-7z" fill="#005aff"/>
<path d="M1170 282h7v7h-7z" fill="#0058ff"/>
<path d="M1176 282h7v7h-7z" fill="#0055ff"/>
<path d="M1182 282h7v7h-7z" fill="#0053ff"/>
<path d="M1188 282h7v7h-7z" fill="#0051ff"/>
<path d="M1194 282h7v7h-7z" fill="#004fff"/>
<path d="M1200 282h7v7h-7z" fill="#004dff"/>
<path d="M1206 282h7v7h-7z" fill="#004aff"/>
<path d="M1212 282h7v7h-7z" fill="#0048ff"/>
<path d="M1218 282h7v7h-7z" fill="#0546ff"/>
<path d="M1224 282h7v7h-7z" fill="#0d43ff"/>
<path d="M1230 282h7v7h-7z" fill="#1641ff"/>
<path d="M1236 282h7v7h-7z" fill="#1f3fff"/>
<path d="M1242 282h7v7h-7z" fill="#283cff"/>
<path d="M1248 282h7v7h-7z" fill="#313aff"/>
<path d="M1254 282h7v7h-7z" fill="#3a38ff"/>
<path d="M1260 282h7v7h-7z" fill="#4335ff"/>
<path d="M1266 282h7v7h-7z" fill="#4c33ff"/>
<path d="M1272 282h7v7h-7z" fill="#5530ff"/>
<path d="M1278 282h7v7h-7z" fill="#5e2eff"/>
<path d="M1284 282h7v7h-7z" fill="#672cff"/>
<path d="M1290 282h7v7h-7z" fill="#7129ff"/>
<path d="M1296 282h7v7h-7z" fill="#7a27ff"/>
<path d="M1302 282h7v7h-7z" fill="#8424ff"/>
<path d="M1308 282h7v7h-7z" fill="#8d22ff"/>
<path d="M1314 282h7v7h-7z" fill="#971fff"/>
<path d="M1320 282h7v7h-7z" fill="#a01dff"/>
<path d="M1326 282h7v7h-7z" fill="#aa1aff"/>
<path d="M1332 282h7v7h-7z" fill="#b417ff"/>
<path d="M1338 282h7v7h-7z" fill="#be15ff"/>
<path d="M1344 282h7v7h-7z" fill="#c712ff"/>
<path d="M1350 282h7v7h-7z" fill="#d110ff"/>
<path d="M1356 282h7v7h-7z" fill="#db0dff"/>
<path d="M1362 282h7v7h-7z" fill="#e50aff"/>
<path d="M1368 282h7v7h-7z" fill="#f008ff"/>
<path d="M1374 282h7v7h-7z" fill="#fa05ff"/>
<path d="M1380 282h7v7h-7z" fill="#ff02fa"/>
<path d="M1386 282h7v7h-7z" fill="#ff00f1"/>
<path d="M1392 282h7v7h-7z" fill="#ff00e8"/>
<path d="M1398 282h7v7h-7z" fill="#ff00df"/>
<path d="M1404 282h7v7h-7z" fill="#ff00d8"/>
<path d="M1410 282h7v7h-7z" fill="#ff00d0"/>
<path d="M1416 282h7v7h-7z" fill="#ff00c9"/>
<path d="M1422 282h7v7h-7z" fill="#ff00c3"/>
<path d="M1428 282h7v7h-7z" fill="#ff00bd"/>
<path d="M1434 282h7v7h-7z" fill="#ff00b7"/>
<path d="M1440 282h7v7h-7z" fill="#ff00b2"/>
<path d="M1446 282h7v7h-7z" fill="#ff00ac"/>
<path d="M1452 282h7v7h-7z" fill="#ff00a7"/>
<path d="M1458 282h7v7h-7z" fill="#ff00a3"/>
<path d="M1464 282h7v7h-7z" fill="#ff009e"/>
<path d="M1470 282h7v7h-7z" fill="#ff009a"/>
<path d="M1476 282h7v7h-7z" fill="#ff0096"/>
<path d="M1482 282h7v7h-7z" fill="#ff0092"/>
<path d="M1488 282h7v7h-7z" fill="#ff008e"/>
<path d="M1494 282h7v7h-7z" fill="#ff008b"/>
<path d="M1500 282h7v7h-7z" fill="#ff0088"/>
<path d="M1506 282h7v7h-7z" fill="#ff0084"/>
<path d="M1512 282h7v7h-7z" fill="#ff0081"/>
<path d="M1518 282h7v7h-7z" fill="#ff007e"/>
<path d="M1524 282h7v7h-7z" fill="#ff007b"/>
<path d="M1530 282h7v7h-7z" fill="#ff0079"/>
<path d="M1536 282h7v7h-7z" fill="#ff0076"/>
<path d="M1542 282h7v7h-7z" fill="#ff0073"/>
<path d="M1548 282h7v7h-7z" fill="#ff0071"/>
<path d="M1554 282h7v7h-7z" fill="#ff006e"/>
<path d="M1560 282h7v7h-7z" fill="#ff006c"/>
<path d="M1566 282h7v7h-7z" fill="#ff006a"/>
<path d="M1572 282h7v7h-7z" fill="#ff0068"/>
<path d="M1578 282h7v7h-7z" fill="#ff0066"/>
<path d="M1584 282h7v7h-7z" fill="#ff0064"/>
<path d="M1590 282h7v7h-7z" fill="#ff0062"/>
<path d="M1596 282h7v7h-7z" fill="#ff0060"/>
<path d="M1602 282h7v7h-7z" fill="#ff005e"/>
<path d="M1608 282h7v7h-7z" fill="#ff005c"/>
<path d="M1098 288h7v7h-7z" fill="#006cff"/>
<path d="M1104 288h7v7h-7z" fill="#006aff"/>
<path d="M1110 288h7v7h-7z" fill="#0068ff"/>
<path d="M1116 288h7v7h-7z" fill="#0066ff"/>
<path d="M1122 288h7v7h-7z" fill="#0064ff"/>
<path d="M1128 288h7v7h-7z" fill="#0062ff"/>
<path d="M1134 288h7v7h-7z" fill="#0060ff"/>
<path d="M1140 288h7v7h-7z" fill="#005eff"/>
<path d="M1146 288h7v7h-7z" fill="#005bff"/>
<path d="M1152 288h7v7h-7z" fill="#0059ff"/>
<path d="M1158 288h7v7h-7z" fill="#0057ff"/>
<path d="M1164 288h7v7h-7z" fill="#0055ff"/>
<path d="M1170 288h7v7h-7z" fill="#0053ff"/>
<path d="M1176 288h7v7h-7z" fill="#0051ff"/>
<path d="M1182 288h7v7h-7z" fill="#004fff"/>
<path d="M1188 288h7v7h-7z" fill="#004cff"/>
<path d="M1194 288h7v7h-7z" fill="#004aff"/>
<path d="M1200 288h7v7h-7z" fill="#0048ff"/>
<path d="M1206 288h7v7h-7z" fill="#0046ff"/>
<path d="M1212 288h7v7h-7z" fill="#0044ff"/>
<path d="M1218 288h7v7h-7z" fill="#0341ff"/>
<path d="M1224 288h7v7h-7z" fill="#0c3fff"/>
<path d="M1230 288h7v7h-7z" fill="#143dff"/>
<path d="M1236 288h7v7h-7z" fill="#1d3bff"/>
<path d="M1242 288h7v7h-7z" fill="#2538ff"/>
<path d="M1248 288h7v7h-7z" fill="#2e36ff"/>
<path d="M1254 288h7v7h-7z" fill="#3734ff"/>
<path d="M1260 288h7v7h-7z" fill="#3f31ff"/>
<path d="M1266 288h7v7h-7z" fill="#482fff"/>
<path d="M1272 288h7v7h-7z" fill="#512dff"/>
<path d="M1278 288h7v7h-7z" fill="#5a2aff"/>
<path d="M1284 288h7v7h-7z" fill="#6328ff"/>
<path d="M1290 288h7v7h-7z" fill="#6c26ff"/>
<path d="M1296 288h7v7h-7z" fill="#7523ff"/>
<path d="M1302 288h7v7h-7z" fill="#7e21ff"/>
<path d="M1308 288h7v7h-7z" fill="#871eff"/>
<path d="M1314 288h7v7h-7z" fill="#911cff"/>
<path d="M1320 288h7v7h-7z" fill="#9a19ff"/>
<path d="M1326 288h7v7h-7z" fill="#a317ff"/>
<path d="M1332 288h7v7h-7z" fill="#ad14ff"/>
<path d="M1338 288h7v7h-7z" fill="#b612ff"/>
<path d="M1344 288h7v7h-7z" fill="#c00fff"/>
<path d="M1350 288h7v7h-7z" fill="#c90dff"/>
<path d="M1356 288h7v7h-7z" fill="#d30aff"/>
<path d="M1362 288h7v7h-7z" fill="#dd08ff"/>
<path d="M1368 288h7v7h-7z" fill="#e705ff"/>
<path d="M1374 288h7v7h-7z" fill="#f002ff"/>
<path d="M1380 288h7v7h-7z" fill="#fa00ff"/>
<path d="M1386 288h7v7h-7z" fill="#ff00fa"/>
<path d="M1392 288h7v7h-7z" fill="#ff00f1"/>
<path d="M1398 288h7v7h-7z" fill="#ff00e8"/>
<path d="M1404 288h7v7h-7z" fill="#ff00e0"/>
<path d="M1410 288h7v7h-7z" fill="#ff00d8"/>
<path d="M1416 288h7v7h-7z" fill="#ff00d1"/>
<path d="M1422 288h7v7h-7z" fill="#ff00ca"/>
<path d="M1428 288h7v7h-7z" fill="#ff00c4"/>
<path d="M1434 288h7v7h-7z" fill="#ff00be"/>
<path d="M1440 288h7v7h-7z" fill="#ff00b8"/>
<path d="M1446 288h7v7h-7z" fill="#ff00b3"/>
<path d="M1452 288h7v7h-7z" fill="#ff00ae"/>
<path d="M1458 288h7v7h-7z" fill="#ff00a9"/>
<path d="M1464 288h7v7h-7z" fill="#ff00a4"/>
<path d="M1470 288h7v7h-7z" fill="#ff00a0"/>
<path d="M1476 288h7v7h-7z" fill="#ff009c"/>
<path d="M1482 288h7v7h-7z" fill="#ff0098"/>
<path d="M1488 288h7v7h-7z" fill="#ff0094"/>
<path d="M1494 288h7v7h-7z" fill="#ff0090"/>
<path d="M1500 288h7v7h-7z" fill="#ff008d"/>
<path d="M1506 288h7v7h-7z" fill="#ff0089"/>
<path d="M1512 288h7v7h-7z" fill="#ff0086"/>
<path d="M1518 288h7v7h-7z" fill="#ff0083"/>
<path d="M1524 288h7v7h-7z" fill="#ff0080"/>
<path d="M1530 288h7v7h-7z" fill="#ff007d"/>
<path d="M1536 288h7v7h-7z" fill="#ff007a"/>
<path d="M1542 288h7v7h-7z" fill="#ff0078"/>
<path d="M1548 288h7v7h-7z" fill="#ff0075"/>
<path d="M1554 288h7v7h-7z" fill="#ff0073"/>
<path d="M1560 288h7v7h-7z" fill="#ff0070"/>
<path d="M1566 288h7v7h-7z" fill="#ff006e"/>
<path d="M1572 288h7v7h-7z" fill="#ff006c"/>
<path d="M1578 288h7v7h-7z" fill="#ff006a"/>
<path d="M1584 288h7v7h-7z" fill="#ff0068"/>
<path d="M1590 288h7v7h-7z" fill="#ff0066"/>
<path d="M1596 288h7v7h-7z" fill="#ff0064"/>
<path d="M1602 288h7v7h-7z" fill="#ff0062"/>
<path d="M1104 294h7v7h-7z" fill="#0065ff"/>
<path d="M1110 294h7v7h-7z" fill="#0063ff"/>
<path d="M1116 294h7v7h-7z" fill="#0061ff"/>
<path d="M1122 294h7v7h-7z" fill="#005fff"/>
<path d="M1128 294h7v7h-7z" fill="#005dff"/>
<path d="M1134 294h7v7h-7z" fill="#005bff"/>
<path d="M1140 294h7v7h-7z" fill="#0059ff"/>
<path d="M1146 294h7v7h-7z" fill="#0057ff"/>
<path d="M1152 294h7v7h-7z" fill="#0055ff"/>
<path d="M1158 294h7v7h-7z" fill="#0053ff"/>
<path d="M1164 294h7v7h-7z" fill="#0051ff"/>
<path d="M1170 294h7v7h-7z" fill="#004fff"/>
<path d="M1176 294h7v7h-7z" fill="#004cff"/>
<path d="M1182 294h7v7h-7z" fill="#004aff"/>
<path d="M1188 294h7v7h-7z" fill="#0048ff"/>
<path d="M1194 294h7v7h-7z" fill="#0046ff"/>
<path d="M1200 294h7v7h-7z" fill="#0044ff"/>
<path d="M1206 294h7v7h-7z" fill="#0042ff"/>
<path d="M1212 294h7v7h-7z" fill="#0040ff"/>
<path d="M1218 294h7v7h-7z" fill="#023dff"/>
<path d="M1224 294h7v7h-7z" fill="#0a3bff"/>
<path d="M1230 294h7v7h-7z" fill="#1239ff"/>
<path d="M1236 294h7v7h-7z" fill="#1b37ff"/>
<path d="M1242 294h7v7h-7z" fill="#2335ff"/>
<path d="M1248 294h7v7h-7z" fill="#2b32ff"/>
<path d="M1254 294h7v7h-7z" fill="#3430ff"/>
<path d="M1260 294h7v7h-7z" fill="#3c2eff"/>
<path d="M1266 294h7v7h-7z" fill="#452bff"/>
<path d="M1272 294h7v7h-7z" fill="#4d29ff"/>
<path d="M1278 294h7v7h-7z" fill="#5627ff"/>
<path d="M1284 294h7v7h-7z" fill="#5f24ff"/>
<path d="M1290 294h7v7h-7z" fill="#6822ff"/>
<path d="M1296 294h7v7h-7z" fill="#7020ff"/>
<path d="M1302 294h7v7h-7z" fill="#791dff"/>
<path d="M1308 294h7v7h-7z" fill="#821bff"/>
<path d="M1314 294h7v7h-7z" fill="#8b19ff"/>
<path d="M1320 294h7v7h-7z" fill="#9416ff"/>
<path d="M1326 294h7v7h-7z" fill="#9d14ff"/>
<path d="M1332 294h7v7h-7z" fill="#a611ff"/>
<path d="M1338 294h7v7h-7z" fill="#b00fff"/>
<path d="M1344 294h7v7h-7z" fill="#b90cff"/>
<path d="M1350 294h7v7h-7z" fill="#c20aff"/>
<path d="M1356 294h7v7h-7z" fill="#cb07ff"/>
<path d="M1362 294h7v7h-7z" fill="#d505ff"/>
<path d="M1368 294h7v7h-7z" fill="#de02ff"/>
<path d="M1374 294h7v7h-7z" fill="#e800ff"/>
<path d="M1380 294h7v7h-7z" fill="#f100ff"/>
<path d="M1386 294h7v7h-7z" fill="#fb00ff"/>
<path d="M1392 294h7v7h-7z" fill="#ff00f9"/>
<path d="M1398 294h7v7h-7z" fill="#ff00f1"/>
<path d="M1404 294h7v7h-7z" fill="#ff00e8"/>
<path d="M1410 294h7v7h-7z" fill="#ff00e0"/>
<path d="M1416 294h7v7h-7z" fill="#ff00d9"/>
<path d="M1422 294h7v7h-7z" fill="#ff00d2"/>
<path d="M1428 294h7v7h-7z" fill="#ff00cb"/>
<path d="M1434 294h7v7h-7z" fill="#ff00c5"/>
<path d="M1440 294h7v7h-7z" fill="#ff00bf"/>
<path d="M1446 294h7v7h-7z" fill="#ff00ba"/>
<path d="M1452 294h7v7h-7z" fill="#ff00b4"/>
<path d="M1458 294h7v7h-7z" fill="#ff00af"/>
<path d="M1464 294h7v7h-7z" fill="#ff00aa"/>
<path d="M1470 294h7v7h-7z" fill="#ff00a6"/>
<path d="M1476 294h7v7h-7z" fill="#ff00a1"/>
<path d="M1482 294h7v7h-7z" fill="#ff009d"/>
<path d="M1488 294h7v7h-7z" fill="#ff0099"/>
<path d="M1494 294h7v7h-7z" fill="#ff0096"/>
<path d="M1500 294h7v7h-7z" fill="#ff0092"/>
<path d="M1506 294h7v7h-7z" fill="#ff008e"/>
<path d="M1512 294h7v7h-7z" fill="#ff008b"/>
<path d="M1518 294h7v7h-7z" fill="#ff0088"/>
<path d="M1524 294h7v7h-7z" fill="#ff0085"/>
<path d="M1530 294h7v7h-7z" fill="#ff0082"/>
<path d="M1536 294h7v7h-7z" fill="#ff007f"/>
<path d="M1542 294h7v7h-7z" fill="#ff007c"/>
<path d="M1548 294h7v7h-7z" fill="#ff007a"/>
<path d="M1554 294h7v7h-7z" fill="#ff0077"/>
<path d="M1560 294h7v7h-7z" fill="#ff0075"/>
<path d="M1566 294h7v7h-7z" fill="#ff0072"/>
<path d="M1572 294h7v7h-7z" fill="#ff0070"/>
<path d="M1578 294h7v7h-7z" fill="#ff006e"/>
<path d="M1584 294h7v7h-7z" fill="#ff006b"/>
<path d="M1590 294h7v7h-7z" fill="#ff0069"/>
<path d="M1596 294h7v7h-7z" fill="#ff0067"/>
<path d="M1104 300h7v7h-7z" fill="#0060ff"/>
<path d="M1110 300h7v7h-7z" fill="#005eff"/>
<path d="M1116 300h7v7h-7z" fill="#005cff"/>
<path d="M1122 300h7v7h-7z" fill="#005aff"/>
<path d="M1128 300h7v7h-7z" fill="#0058ff"/>
<path d="M1134 300h7v7h-7z" fill="#0056ff"/>
<path d="M1140 300h7v7h-7z" fill="#0054ff"/>
<path d="M1146 300h7v7h-7z" fill="#0052ff"/>
<path d="M1152 300h7v7h-7z" fill="#0050ff"/>
<path d="M1158 300h7v7h-7z" fill="#004eff"/>
<path d="M1164 300h7v7h-7z" fill="#004cff"/>
<path d="M1170 300h7v7h-7z" fill="#004aff"/>
<path d="M1176 300h7v7h-7z" fill="#0048ff"/>
<path d="M1182 300h7v7h-7z" fill="#0046ff"/>
<path d="M1188 300h7v7h-7z" fill="#0044ff"/>
<path d="M1194 300h7v7h-7z" fill="#0042ff"/>
<path d="M1200 300h7v7h-7z" fill="#0040ff"/>
<path d="M1206 300h7v7h-7z" fill="#003eff"/>
<path d="M1212 300h7v7h-7z" fill="#003cff"/>
<path d="M1218 300h7v7h-7z" fill="#003aff"/>
<path d="M1224 300h7v7h-7z" fill="#0837ff"/>
<path d="M1230 300h7v7h-7z" fill="#1135ff"/>
<path d="M1236 300h7v7h-7z" fill="#1933ff"/>
<path d="M1242 300h7v7h-7z" fill="#2131ff"/>
<path d="M1248 300h7v7h-7z" fill="#292fff"/>
<path d="M1254 300h7v7h-7z" fill="#312cff"/>
<path d="M1260 300h7v7h-7z" fill="#392aff"/>
<path d="M1266 300h7v7h-7z" fill="#4228ff"/>
<path d="M1272 300h7v7h-7z" fill="#4a26ff"/>
<path d="M1278 300h7v7h-7z" fill="#5224ff"/>
<path d="M1284 300h7v7h-7z" fill="#5b21ff"/>
<path d="M1290 300h7v7h-7z" fill="#631fff"/>
<path d="M1296 300h7v7h-7z" fill="#6c1dff"/>
<path d="M1302 300h7v7h-7z" fill="#751aff"/>
<path d="M1308 300h7v7h-7z" fill="#7d18ff"/>
<path d="M1314 300h7v7h-7z" fill="#8616ff"/>
<path d="M1320 300h7v7h-7z" fill="#8f13ff"/>
<path d="M1326 300h7v7h-7z" fill="#9711ff"/>
<path d="M1332 300h7v7h-7z" fill="#a00fff"/>
<path d="M1338 300h7v7h-7z" fill="#a90cff"/>
<path d="M1344 300h7v7h-7z" fill="#b20aff"/>
<path d="M1350 300h7v7h-7z" fill="#bb07ff"/>
<path d="M1356 300h7v7h-7z" fill="#c405ff"/>
<path d="M1362 300h7v7h-7z" fill="#cd03ff"/>
<path d="M1368 300h7v7h-7z" fill="#d600ff"/>
<path d="M1374 300h7v7h-7z" fill="#e000ff"/>
<path d="M1380 300h7v7h-7z" fill="#e900ff"/>
<path d="M1386 300h7v7h-7z" fill="#f200ff"/>
<path d="M1392 300h7v7h-7z" fill="#fc00ff"/>
<path d="M1398 300h7v7h-7z" fill="#ff00f9"/>
<path d="M1404 300h7v7h-7z" fill="#ff00f0"/>
<path d="M1410 300h7v7h-7z" fill="#ff00e8"/>
<path d="M1416 300h7v7h-7z" fill="#ff00e1"/>
<path d="M1422 300h7v7h-7z" fill="#ff00d9"/>
<path d="M1428 300h7v7h-7z" fill="#ff00d2"/>
<path d="M1434 300h7v7h-7z" fill="#ff00cc"/>
<path d="M1440 300h7v7h-7z" fill="#ff00c6"/>
<path d="M1446 300h7v7h-7z" fill="#ff00c0"/>
<path d="M1452 300h7v7h-7z" fill="#ff00bb"/>
<path d="M1458 300h7v7h-7z" fill="#ff00b5"/>
<path d="M1464 300h7v7h-7z" fill="#ff00b0"/>
<path d="M1470 300h7v7h-7z" fill="#ff00ac"/>
<path d="M1476 300h7v7h-7z" fill="#ff00a7"/>
<path d="M1482 300h7v7h-7z" fill="#ff00a3"/>
<path d="M1488 300h7v7h-7z" fill="#ff009f"/>
<path d="M1494 300h7v7h-7z" fill="#ff009b"/>
<path d="M1500 300h7v7h-7z" fill="#ff0097"/>
<path d="M1506 300h7v7h-7z" fill="#ff0094"/>
<path d="M1512 300h7v7h-7z" fill="#ff0090"/>
<path d="M1518 300h7v7h-7z" fill="#ff008d"/>
<path d="M1524 300h7v7h-7z" fill="#ff008a"/>
<path d="M1530 300h7v7h-7z" fill="#ff0087"/>
<path d="M1536 300h7v7h-7z" fill="#ff0084"/>
<path d="M1542 300h7v7h-7z" fill="#ff0081"/>
<path d="M1548 300h7v7h-7z" fill="#ff007e"/>
<path d="M1554 300h7v7h-7z" fill="#ff007b"/>
<path d="M1560 300h7v7h-7z" fill="#ff0079"/>
<path d="M1566 300h7v7h-7z" fill="#ff0076"/>
<path d="M1572 300h7v7h-7z" fill="#ff0074"/>
<path d="M1578 300h7v7h-7z" fill="#ff0072"/>
<path d="M1584 300h7v7h-7z" fill="#ff006f"/>
<path d="M1590 300h7v7h-7z" fill="#ff006d"/>
<path d="M1110 306h7v7h-7z" fill="#005aff"/>
<path d="M1116 306h7v7h-7z" fill="#0058ff"/>
<path d="M1122 306h7v7h-7z" fill="#0056ff"/>
<path d="M1128 306h7v7h-7z" fill="#0054ff"/>
<path d="M1134 306h7v7h-7z" fill="#0052ff"/>
<path d="M1140 306h7v7h-7z" fill="#0050ff"/>
<path d="M1146 306h7v7h-7z" fill="#004eff"/>
<path d="M1152 306h7v7h-7z" fill="#004cff"/>
<path d="M1158 306h7v7h-7z" fill="#004aff"/>
<path d="M1164 306h7v7h-7z" fill="#0048ff"/>
<path d="M1170 306h7v7h-7z" fill="#0046ff"/>
<path d="M1176 306h7v7h-7z" fill="#0044ff"/>
<path d="M1182 306h7v7h-7z" fill="#0042ff"/>
<path d="M1188 306h7v7h-7z" fill="#0040ff"/>
<path d="M1194 306h7v7h-7z" fill="#003eff"/>
<path d="M1200 306h7v7h-7z" fill="#003cff"/>
<path d="M1206 306h7v7h-7z" fill="#003aff"/>
<path d="M1212 306h7v7h-7z" fill="#0038ff"/>
<path d="M1218 306h7v7h-7z" fill="#0036ff"/>
<path d="M1224 306h7v7h-7z" fill="#0734ff"/>
<path d="M1230 306h7v7h-7z" fill="#0f32ff"/>
<path d="M1236 306h7v7h-7z" fill="#1730ff"/>
<path d="M1242 306h7v7h-7z" fill="#1f2dff"/>
<path d="M1248 306h7v7h-7z" fill="#272bff"/>
<path d="M1254 306h7v7h-7z" fill="#2f29ff"/>
<path d="M1260 306h7v7h-7z" fill="#3727ff"/>
<path d="M1266 306h7v7h-7z" fill="#3f25ff"/>
<path d="M1272 306h7v7h-7z" fill="#4723ff"/>
<path d="M1278 306h7v7h-7z" fill="#4f20ff"/>
<path d="M1284 306h7v7h-7z" fill="#571eff"/>
<path d="M1290 306h7v7h-7z" fill="#5f1cff"/>
<path d="M1296 306h7v7h-7z" fill="#681aff"/>
<path d="M1302 306h7v7h-7z" fill="#7017ff"/>
<path d="M1308 306h7v7h-7z" fill="#7815ff"/>
<path d="M1314 306h7v7h-7z" fill="#8113ff"/>
<path d="M1320 306h7v7h-7z" fill="#8911ff"/>
<path d="M1326 306h7v7h-7z" fill="#920eff"/>
<path d="M1332 306h7v7h-7z" fill="#9a0cff"/>
<path d="M1338 306h7v7h-7z" fill="#a30aff"/>
<path d="M1344 306h7v7h-7z" fill="#ac07ff"/>
<path d="M1350 306h7v7h-7z" fill="#b405ff"/>
<path d="M1356 306h7v7h-7z" fill="#bd03ff"/>
<path d="M1362 306h7v7h-7z" fill="#c600ff"/>
<path d="M1368 306h7v7h-7z" fill="#cf00ff"/>
<path d="M1374 306h7v7h-7z" fill="#d800ff"/>
<path d="M1380 306h7v7h-7z" fill="#e100ff"/>
<path d="M1386 306h7v7h-7z" fill="#ea00ff"/>
<path d="M1392 306h7v7h-7z" fill="#f300ff"/>
<path d="M1398 306h7v7h-7z" fill="#fc00ff"/>
<path d="M1404 306h7v7h-7z" fill="#ff00f9"/>
<path d="M1410 306h7v7h-7z" fill="#ff00f0"/>
<path d="M1416 306h7v7h-7z" fill="#ff00e8"/>
<path d="M1422 306h7v7h-7z" fill="#ff00e1"/>
<path d="M1428 306h7v7h-7z" fill="#ff00da"/>
<path d="M1434 306h7v7h-7z" fill="#ff00d3"/>
<path d="M1440 306h7v7h-7z" fill="#ff00cd"/>
<path d="M1446 306h7v7h-7z" fill="#ff00c7"/>
<path d="M1452 306h7v7h-7z" fill="#ff00c1"/>
<path d="M1458 306h7v7h-7z" fill="#ff00bc"/>
<path d="M1464 306h7v7h-7z" fill="#ff00b7"/>
<path d="M1470 306h7v7h-7z" fill="#ff00b2"/>
<path d="M1476 306h7v7h-7z" fill="#ff00ad"/>
<path d="M1482 306h7v7h-7z" fill="#ff00a9"/>
<path d="M1488 306h7v7h-7z" fill="#ff00a4"/>
<path d="M1494 306h7v7h-7z" fill="#ff00a0"/>
<path d="M1500 306h7v7h-7z" fill="#ff009c"/>
<path d="M1506 306h7v7h-7z" fill="#ff0099"/>
<path d="M1512 306h7v7h-7z" fill="#ff0095"/>
<path d="M1518 306h7v7h-7z" fill="#ff0092"/>
<path d="M1524 306h7v7h-7z" fill="#ff008e"/>
<path d="M1530 306h7v7h-7z" fill="#ff008b"/>
<path d="M1536 306h7v7h-7z" fill="#ff0088"/>
<path d="M1542 306h7v7h-7z" fill="#ff0085"/>
<path d="M1548 306h7v7h-7z" fill="#ff0082"/>
<path d="M1554 306h7v7h-7z" fill="#ff0080"/>
<path d="M1560 306h7v7h-7z" fill="#ff007d"/>
<path d="M1566 306h7v7h-7z" fill="#ff007b"/>
<path d="M1572 306h7v7h-7z" fill="#ff0078"/>
<path d="M1578 306h7v7h-7z" fill="#ff0076"/>
<path d="M1584 306h7v7h-7z" fill="#ff0073"/>
<path d="M1110 312h7v7h-7z" fill="#0056ff"/>
<path d="M1116 312h7v7h-7z" fill="#0054ff"/>
<path d="M1122 312h7v7h-7z" fill="#0052ff"/>
<path d="M1128 312h7v7h-7z" fill="#0050ff"/>
<path d="M1134 312h7v7h-7z" fill="#004eff"/>
<path d="M1140 312h7v7h-7z" fill="#004cff"/>
<path d="M1146 312h7v7h-7z" fill="#004aff"/>
<path d="M1152 312h7v7h-7z" fill="#0048ff"/>
<path d="M1158 312h7v7h-7z" fill="#0046ff"/>
<path d="M1164 312h7v7h-7z" fill="#0045ff"/>
<path d="M1170 312h7v7h-7z" fill="#0043ff"/>
<path d="M1176 312h7v7h-7z" fill="#0041ff"/>
<path d="M1182 312h7v7h-7z" fill="#003fff"/>
<path d="M1188 312h7v7h-7z" fill="#003dff"/>
<path d="M1194 312h7v7h-7z" fill="#003bff"/>
<path d="M1200 312h7v7h-7z" fill="#0039ff"/>
<path d="M1206 312h7v7h-7z" fill="#0037ff"/>
<path d="M1212 312h7v7h-7z" fill="#0035ff"/>
<path d="M1218 312h7v7h-7z" fill="#0033ff"/>
<path d="M1224 312h7v7h-7z" fill="#0630ff"/>
<path d="M1230 312h7v7h-7z" fill="#0d2eff"/>
<path d="M1236 312h7v7h-7z" fill="#152cff"/>
<path d="M1242 312h7v7h-7z" fill="#1d2aff"/>
<path d="M1248 312h7v7h-7z" fill="#2428ff"/>
<path d="M1254 312h7v7h-7z" fill="#2c26ff"/>
<path d="M1260 312h7v7h-7z" fill="#3424ff"/>
<path d="M1266 312h7v7h-7z" fill="#3c22ff"/>
<path d="M1272 312h7v7h-7z" fill="#4420ff"/>
<path d="M1278 312h7v7h-7z" fill="#4c1dff"/>
<path d="M1284 312h7v7h-7z" fill="#541bff"/>
<path d="M1290 312h7v7h-7z" fill="#5c19ff"/>
<path d="M1296 312h7v7h-7z" fill="#6417ff"/>
<path d="M1302 312h7v7h-7z" fill="#6c15ff"/>
<path d="M1308 312h7v7h-7z" fill="#7413ff"/>
<path d="M1314 312h7v7h-7z" fill="#7c10ff"/>
<path d="M1320 312h7v7h-7z" fill="#840eff"/>
<path d="M1326 312h7v7h-7z" fill="#8d0cff"/>
<path d="M1332 312h7v7h-7z" fill="#950aff"/>
<path d="M1338 312h7v7h-7z" fill="#9d07ff"/>
<path d="M1344 312h7v7h-7z" fill="#a605ff"/>
<path d="M1350 312h7v7h-7z" fill="#ae03ff"/>
<path d="M1356 312h7v7h-7z" fill="#b700ff"/>
<path d="M1362 312h7v7h-7z" fill="#bf00ff"/>
<path d="M1368 312h7v7h-7z" fill="#c800ff"/>
<path d="M1374 312h7v7h-7z" fill="#d100ff"/>
<path d="M1380 312h7v7h-7z" fill="#d900ff"/>
<path d="M1386 312h7v7h-7z" fill="#e200ff"/>
<path d="M1392 312h7v7h-7z" fill="#eb00ff"/>
<path d="M1398 312h7v7h-7z" fill="#f400ff"/>
<path d="M1404 312h7v7h-7z" fill="#fd00ff"/>
<path d="M1410 312h7v7h-7z" fill="#ff00f9"/>
<path d="M1416 312h7v7h-7z" fill="#ff00f0"/>
<path d="M1422 312h7v7h-7z" fill="#ff00e9"/>
<path d="M1428 312h7v7h-7z" fill="#ff00e1"/>
<path d="M1434 312h7v7h-7z" fill="#ff00da"/>
<path d="M1440 312h7v7h-7z" fill="#ff00d4"/>
<path d="M1446 312h7v7h-7z" fill="#ff00ce"/>
<path d="M1452 312h7v7h-7z" fill="#ff00c8"/>
<path d="M1458 312h7v7h-7z" fill="#ff00c2"/>
<path d="M1464 312h7v7h-7z" fill="#ff00bd"/>
<path d="M1470 312h7v7h-7z" fill="#ff00b8"/>
<path d="M1476 312h7v7h-7z" fill="#ff00b3"/>
<path d="M1482 312h7v7h-7z" fill="#ff00ae"/>
<path d="M1488 312h7v7h-7z" fill="#ff00aa"/>
<path d="M1494 312h7v7h-7z" fill="#ff00a6"/>
<path d="M1500 312h7v7h-7z" fill="#ff00a2"/>
<path d="M1506 312h7v7h-7z" fill="#ff009e"/>
<path d="M1512 312h7v7h-7z" fill="#ff009a"/>
<path d="M1518 312h7v7h-7z" fill="#ff0097"/>
<path d="M1524 312h7v7h-7z" fill="#ff0093"/>
<path d="M1530 312h7v7h-7z" fill="#ff0090"/>
<path d="M1536 312h7v7h-7z" fill="#ff008d"/>
<path d="M1542 312h7v7h-7z" fill="#ff008a"/>
<path d="M1548 312h7v7h-7z" fill="#ff0087"/>
<path d="M1554 312h7v7h-7z" fill="#ff0084"/>
<path d="M1560 312h7v7h-7z" fill="#ff0081"/>
<path d="M1566 312h7v7h-7z" fill="#ff007f"/>
<path d="M1572 312h7v7h-7z" fill="#ff007c"/>
<path d="M1578 312h7v7h-7z" fill="#ff007a"/>
<path d="M1116 318h7v7h-7z" fill="#0050ff"/>
<path d="M1122 318h7v7h-7z" fill="#004eff"/>
<path d="M1128 318h7v7h-7z" fill="#004cff"/>
<path d="M1134 318h7v7h-7z" fill="#004aff"/>
<path d="M1140 318h7v7h-7z" fill="#0049ff"/>
<path d="M1146 318h7v7h-7z" fill="#0047ff"/>
<path d="M1152 318h7v7h-7z" fill="#0045ff"/>
<path d="M1158 318h7v7h-7z" fill="#0043ff"/>
<path d="M1164 318h7v7h-7z" fill="#0041ff"/>
<path d="M1170 318h7v7h-7z" fill="#003fff"/>
<path d="M1176 318h7v7h-7z" fill="#003dff"/>
<path d="M1182 318h7v7h-7z" fill="#003bff"/>
<path d="M1188 318h7v7h-7z" fill="#0039ff"/>
<path d="M1194 318h7v7h-7z" fill="#0037ff"/>
<path d="M1200 318h7v7h-7z" fill="#0035ff"/>
<path d="M1206 318h7v7h-7z" fill="#0033ff"/>
<path d="M1212 318h7v7h-7z" fill="#0031ff"/>
<path d="M1218 318h7v7h-7z" fill="#002fff"/>
<path d="M1224 318h7v7h-7z" fill="#042dff"/>
<path d="M1230 318h7v7h-7z" fill="#0c2bff"/>
<path d="M1236 318h7v7h-7z" fill="#1329ff"/>
<path d="M1242 318h7v7h-7z" fill="#1b27ff"/>
<path d="M1248 318h7v7h-7z" fill="#2225ff"/>
<path d="M1254 318h7v7h-7z" fill="#2a23ff"/>
<path d="M1260 318h7v7h-7z" fill="#3121ff"/>
<path d="M1266 318h7v7h-7z" fill="#391fff"/>
<path d="M1272 318h7v7h-7z" fill="#411dff"/>
<path d="M1278 318h7v7h-7z" fill="#491bff"/>
<path d="M1284 318h7v7h-7z" fill="#5019ff"/>
<path d="M1290 318h7v7h-7z" fill="#5816ff"/>
<path d="M1296 318h7v7h-7z" fill="#6014ff"/>
<path d="M1302 318h7v7h-7z" fill="#6812ff"/>
<path d="M1308 318h7v7h-7z" fill="#7010ff"/>
<path d="M1314 318h7v7h-7z" fill="#780eff"/>
<path d="M1320 318h7v7h-7z" fill="#800cff"/>
<path d="M1326 318h7v7h-7z" fill="#8809ff"/>
<path d="M1332 318h7v7h-7z" fill="#9007ff"/>
<path d="M1338 318h7v7h-7z" fill="#9805ff"/>
<path d="M1344 318h7v7h-7z" fill="#a003ff"/>
<path d="M1350 318h7v7h-7z" fill="#a801ff"/>
<path d="M1356 318h7v7h-7z" fill="#b100ff"/>
<path d="M1362 318h7v7h-7z" fill="#b900ff"/>
<path d="M1368 318h7v7h-7z" fill="#c100ff"/>
<path d="M1374 318h7v7h-7z" fill="#ca00ff"/>
<path d="M1380 318h7v7h-7z" fill="#d200ff"/>
<path d="M1386 318h7v7h-7z" fill="#db00ff"/>
<path d="M1392 318h7v7h-7z" fill="#e300ff"/>
<path d="M1398 318h7v7h-7z" fill="#ec00ff"/>
<path d="M1404 318h7v7h-7z" fill="#f400ff"/>
<path d="M1410 318h7v7h-7z" fill="#fd00ff"/>
<path d="M1416 318h7v7h-7z" fill="#ff00f8"/>
<path d="M1422 318h7v7h-7z" fill="#ff00f0"/>
<path d="M1428 318h7v7h-7z" fill="#ff00e9"/>
<path d="M1434 318h7v7h-7z" fill="#ff00e2"/>
<path d="M1440 318h7v7h-7z" fill="#ff00db"/>
<path d="M1446 318h7v7h-7z" fill="#ff00d4"/>
<path d="M1452 318h7v7h-7z" fill="#ff00ce"/>
<path d="M1458 318h7v7h-7z" fill="#ff00c9"/>
<path d="M1464 318h7v7h-7z" fill="#ff00c3"/>
<path d="M1470 318h7v7h-7z" fill="#ff00be"/>
<path d="M1476 318h7v7h-7z" fill="#ff00b9"/>
<path d="M1482 318h7v7h-7z" fill="#ff00b4"/>
<path d="M1488 318h7v7h-7z" fill="#ff00b0"/>
<path d="M1494 318h7v7h-7z" fill="#ff00ab"/>
<path d="M1500 318h7v7h-7z" fill="#ff00a7"/>
<path d="M1506 318h7v7h-7z" fill="#ff00a3"/>
<path d="M1512 318h7v7h-7z" fill="#ff009f"/>
<path d="M1518 318h7v7h-7z" fill="#ff009c"/>
<path d="M1524 318h7v7h-7z" fill="#ff0098"/>
<path d="M1530 318h7v7h-7z" fill="#ff0095"/>
<path d="M1536 318h7v7h-7z" fill="#ff0092"/>
<path d="M1542 318h7v7h-7z" fill="#ff008e"/>
<path d="M1548 318h7v7h-7z" fill="#ff008b"/>
<path d="M1554 318h7v7h-7z" fill="#ff0088"/>
<path d="M1560 318h7v7h-7z" fill="#ff0086"/>
<path d="M1566 318h7v7h-7z" fill="#ff0083"/>
<path d="M1572 318h7v7h-7z" fill="#ff0080"/>
<path d="M1116 324h7v7h-7z" fill="#004cff"/>
<path d="M1122 324h7v7h-7z" fill="#004aff"/>
<path d="M1128 324h7v7h-7z" fill="#0049ff"/>
<path d="M1134 324h7v7h-7z" fill="#0047ff"/>
<path d="M1140 324h7v7h-7z" fill="#0045ff"/>
<path d="M1146 324h7v7h-7z" fill="#0043ff"/>
<path d="M1152 324h7v7h-7z" fill="#0041ff"/>
<path d="M1158 324h7v7h-7z" fill="#003fff"/>
<path d="M1164 324h7v7h-7z" fill="#003dff"/>
<path d="M1170 324h7v7h-7z" fill="#003cff"/>
<path d="M1176 324h7v7h-7z" fill="#003aff"/>
<path d="M1182 324h7v7h-7z" fill="#0038ff"/>
<path d="M1188 324h7v7h-7z" fill="#0036ff"/>
<path d="M1194 324h7v7h-7z" fill="#0034ff"/>
<path d="M1200 324h7v7h-7z" fill="#0032ff"/>
<path d="M1206 324h7v7h-7z" fill="#0030ff"/>
<path d="M1212 324h7v7h-7z" fill="#002eff"/>
<path d="M1218 324h7v7h-7z" fill="#002cff"/>
<path d="M1224 324h7v7h-7z" fill="#032aff"/>
<path d="M1230 324h7v7h-7z" fill="#0a28ff"/>
<path d="M1236 324h7v7h-7z" fill="#1226ff"/>
<path d="M1242 324h7v7h-7z" fill="#1924ff"/>
<path d="M1248 324h7v7h-7z" fill="#2022ff"/>
<path d="M1254 324h7v7h-7z" fill="#2820ff"/>
<path d="M1260 324h7v7h-7z" fill="#2f1eff"/>
<path d="M1266 324h7v7h-7z" fill="#371cff"/>
<path d="M1272 324h7v7h-7z" fill="#3e1aff"/>
<path d="M1278 324h7v7h-7z" fill="#4618ff"/>
<path d="M1284 324h7v7h-7z" fill="#4d16ff"/>
<path d="M1290 324h7v7h-7z" fill="#5514ff"/>
<path d="M1296 324h7v7h-7z" fill="#5c12ff"/>
<path d="M1302 324h7v7h-7z" fill="#6410ff"/>
<path d="M1308 324h7v7h-7z" fill="#6c0eff"/>
<path d="M1314 324h7v7h-7z" fill="#730bff"/>
<path d="M1320 324h7v7h-7z" fill="#7b09ff"/>
<path d="M1326 324h7v7h-7z" fill="#8307ff"/>
<path d="M1332 324h7v7h-7z" fill="#8b05ff"/>
<path d="M1338 324h7v7h-7z" fill="#9303ff"/>
<path d="M1344 324h7v7h-7z" fill="#9b01ff"/>
<path d="M1350 324h7v7h-7z" fill="#a300ff"/>
<path d="M1356 324h7v7h-7z" fill="#ab00ff"/>
<path d="M1362 324h7v7h-7z" fill="#b300ff"/>
<path d="M1368 324h7v7h-7z" fill="#bb00ff"/>
<path d="M1374 324h7v7h-7z" fill="#c300ff"/>
<path d="M1380 324h7v7h-7z" fill="#cb00ff"/>
<path d="M1386 324h7v7h-7z" fill="#d400ff"/>
<path d="M1392 324h7v7h-7z" fill="#dc00ff"/>
<path d="M1398 324h7v7h-7z" fill="#e400ff"/>
<path d="M1404 324h7v7h-7z" fill="#ed00ff"/>
<path d="M1410 324h7v7h-7z" fill="#f500ff"/>
<path d="M1416 324h7v7h-7z" fill="#fe00ff"/>
<path d="M1422 324h7v7h-7z" fill="#ff00f8"/>
<path d="M1428 324h7v7h-7z" fill="#ff00f0"/>
<path d="M1434 324h7v7h-7z" fill="#ff00e9"/>
<path d="M1440 324h7v7h-7z" fill="#ff00e2"/>
<path d="M1446 324h7v7h-7z" fill="#ff00db"/>
<path d="M1452 324h7v7h-7z" fill="#ff00d5"/>
<path d="M1458 324h7v7h-7z" fill="#ff00cf"/>
<path d="M1464 324h7v7h-7z" fill="#ff00c9"/>
<path d="M1470 324h7v7h-7z" fill="#ff00c4"/>
<path d="M1476 324h7v7h-7z" fill="#ff00bf"/>
<path d="M1482 324h7v7h-7z" fill="#ff00ba"/>
<path d="M1488 324h7v7h-7z" fill="#ff00b5"/>
<path d="M1494 324h7v7h-7z" fill="#ff00b1"/>
<path d="M1500 324h7v7h-7z" fill="#ff00ac"/>
<path d="M1506 324h7v7h-7z" fill="#ff00a8"/>
<path d="M1512 324h7v7h-7z" fill="#ff00a4"/>
<path d="M1518 324h7v7h-7z" fill="#ff00a1"/>
<path d="M1524 324h7v7h-7z" fill="#ff009d"/>
<path d="M1530 324h7v7h-7z" fill="#ff009a"/>
<path d="M1536 324h7v7h-7z" fill="#ff0096"/>
<path d="M1542 324h7v7h-7z" fill="#ff0093"/>
<path d="M1548 324h7v7h-7z" fill="#ff0090"/>
<path d="M1554 324h7v7h-7z" fill="#ff008d"/>
<path d="M1560 324h7v7h-7z" fill="#ff008a"/>
<path d="M1566 324h7v7h-7z" fill="#ff0087"/>
<path d="M1122 330h7v7h-7z" fill="#0047ff"/>
<path d="M1128 330h7v7h-7z" fill="#0045ff"/>
<path d="M1134 330h7v7h-7z" fill="#0043ff"/>
<path d="M1140 330h7v7h-7z" fill="#0041ff"/>
<path d="M1146 330h7v7h-7z" fill="#0040ff"/>
<path d="M1152 330h7v7h-7z" fill="#003eff"/>
<path d="M1158 330h7v7h-7z" fill="#003cff"/>
<path d="M1164 330h7v7h-7z" fill="#003aff"/>
<path d="M1170 330h7v7h-7z" fill="#0038ff"/>
<path d="M1176 330h7v7h-7z" fill="#0036ff"/>
<path d="M1182 330h7v7h-7z" fill="#0035ff"/>
<path d="M1188 330h7v7h-7z" fill="#0033ff"/>
<path d="M1194 330h7v7h-7z" fill="#0031ff"/>
<path d="M1200 330h7v7h-7z" fill="#002fff"/>
<path d="M1206 330h7v7h-7z" fill="#002dff"/>
<path d="M1212 330h7v7h-7z" fill="#002bff"/>
<path d="M1218 330h7v7h-7z" fill="#0029ff"/>
<path d="M1224 330h7v7h-7z" fill="#0227ff"/>
<path d="M1230 330h7v7h-7z" fill="#0925ff"/>
<path d="M1236 330h7v7h-7z" fill="#1023ff"/>
<path d="M1242 330h7v7h-7z" fill="#1721ff"/>
<path d="M1248 330h7v7h-7z" fill="#1e1fff"/>
<path d="M1254 330h7v7h-7z" fill="#261eff"/>
<path d="M1260 330h7v7h-7z" fill="#2d1cff"/>
<path d="M1266 330h7v7h-7z" fill="#341aff"/>
<path d="M1272 330h7v7h-7z" fill="#3b18ff"/>
<path d="M1278 330h7v7h-7z" fill="#4316ff"/>
<path d="M1284 330h7v7h-7z" fill="#4a13ff"/>
<path d="M1290 330h7v7h-7z" fill="#5111ff"/>
<path d="M1296 330h7v7h-7z" fill="#590fff"/>
<path d="M1302 330h7v7h-7z" fill="#600dff"/>
<path d="M1308 330h7v7h-7z" fill="#680bff"/>
<path d="M1314 330h7v7h-7z" fill="#6f09ff"/>
<path d="M1320 330h7v7h-7z" fill="#7707ff"/>
<path d="M1326 330h7v7h-7z" fill="#7f05ff"/>
<path d="M1332 330h7v7h-7z" fill="#8603ff"/>
<path d="M1338 330h7v7h-7z" fill="#8e01ff"/>
<path d="M1344 330h7v7h-7z" fill="#9600ff"/>
<path d="M1350 330h7v7h-7z" fill="#9d00ff"/>
<path d="M1356 330h7v7h-7z" fill="#a500ff"/>
<path d="M1362 330h7v7h-7z" fill="#ad00ff"/>
<path d="M1368 330h7v7h-7z" fill="#b500ff"/>
<path d="M1374 330h7v7h-7z" fill="#bd00ff"/>
<path d="M1380 330h7v7h-7z" fill="#c500ff"/>
<path d="M1386 330h7v7h-7z" fill="#cd00ff"/>
<path d="M1392 330h7v7h-7z" fill="#d500ff"/>
<path d="M1398 330h7v7h-7z" fill="#dd00ff"/>
<path d="M1404 330h7v7h-7z" fill="#e500ff"/>
<path d="M1410 330h7v7h-7z" fill="#ed00ff"/>
<path d="M1416 330h7v7h-7z" fill="#f600ff"/>
<path d="M1422 330h7v7h-7z" fill="#fe00ff"/>
<path d="M1428 330h7v7h-7z" fill="#ff00f8"/>
<path d="M1434 330h7v7h-7z" fill="#ff00f0"/>
<path d="M1440 330h7v7h-7z" fill="#ff00e9"/>
<path d="M1446 330h7v7h-7z" fill="#ff00e2"/>
<path d="M1452 330h7v7h-7z" fill="#ff00dc"/>
<path d="M1458 330h7v7h-7z" fill="#ff00d6"/>
<path d="M1464 330h7v7h-7z" fill="#ff00d0"/>
<path d="M1470 330h7v7h-7z" fill="#ff00ca"/>
<path d="M1476 330h7v7h-7z" fill="#ff00c5"/>
<path d="M1482 330h7v7h-7z" fill="#ff00c0"/>
<path d="M1488 330h7v7h-7z" fill="#ff00bb"/>
<path d="M1494 330h7v7h-7z" fill="#ff00b6"/>
<path d="M1500 330h7v7h-7z" fill="#ff00b2"/>
<path d="M1506 330h7v7h-7z" fill="#ff00ae"/>
<path d="M1512 330h7v7h-7z" fill="#ff00aa"/>
<path d="M1518 330h7v7h-7z" fill="#ff00a6"/>
<path d="M1524 330h7v7h-7z" fill="#ff00a2"/>
<path d="M1530 330h7v7h-7z" fill="#ff009e"/>
<path d="M1536 330h7v7h-7z" fill="#ff009b"/>
<path d="M1542 330h7v7h-7z" fill="#ff0098"/>
<path d="M1548 330h7v7h-7z" fill="#ff0094"/>
<path d="M1554 330h7v7h-7z" fill="#ff0091"/>
<path d="M1560 330h7v7h-7z" fill="#ff008e"/>
<path d="M1122 336h7v7h-7z" fill="#0043ff"/>
<path d="M1128 336h7v7h-7z" fill="#0042ff"/>
<path d="M1134 336h7v7h-7z" fill="#0040ff"/>
<path d="M1140 336h7v7h-7z" fill="#003eff"/>
<path d="M1146 336h7v7h-7z" fill="#003cff"/>
<path d="M1152 336h7v7h-7z" fill="#003bff"/>
<path d="M1158 336h7v7h-7z" fill="#0039ff"/>
<path d="M1164 336h7v7h-7z" fill="#0037ff"/>
<path d="M1170 336h7v7h-7z" fill="#0035ff"/>
<path d="M1176 336h7v7h-7z" fill="#0033ff"/>
<path d="M1182 336h7v7h-7z" fill="#0032ff"/>
<path d="M1188 336h7v7h-7z" fill="#0030ff"/>
<path d="M1194 336h7v7h-7z" fill="#002eff"/>
<path d="M1200 336h7v7h-7z" fill="#002cff"/>
<path d="M1206 336h7v7h-7z" fill="#002aff"/>
<path d="M1212 336h7v7h-7z" fill="#0028ff"/>
<path d="M1218 336h7v7h-7z" fill="#0026ff"/>
<path d="M1224 336h7v7h-7z" fill="#0125ff"/>
<path d="M1230 336h7v7h-7z" fill="#0823ff"/>
<path d="M1236 336h7v7h-7z" fill="#0f21ff"/>
<path d="M1242 336h7v7h-7z" fill="#161fff"/>
<path d="M1248 336h7v7h-7z" fill="#1d1dff"/>
<path d="M1254 336h7v7h-7z" fill="#241bff"/>
<path d="M1260 336h7v7h-7z" fill="#2b19ff"/>
<path d="M1266 336h7v7h-7z" fill="#3217ff"/>
<path d="M1272 336h7v7h-7z" fill="#3915ff"/>
<path d="M1278 336h7v7h-7z" fill="#4013ff"/>
<path d="M1284 336h7v7h-7z" fill="#4711ff"/>
<path d="M1290 336h7v7h-7z" fill="#4e0fff"/>
<path d="M1296 336h7v7h-7z" fill="#560dff"/>
<path d="M1302 336h7v7h-7z" fill="#5d0bff"/>
<path d="M1308 336h7v7h-7z" fill="#6409ff"/>
<path d="M1314 336h7v7h-7z" fill="#6c07ff"/>
<path d="M1320 336h7v7h-7z" fill="#7305ff"/>
<path d="M1326 336h7v7h-7z" fill="#7a03ff"/>
<path d="M1332 336h7v7h-7z" fill="#8201ff"/>
<path d="M1338 336h7v7h-7z" fill="#8900ff"/>
<path d="M1344 336h7v7h-7z" fill="#9100ff"/>
<path d="M1350 336h7v7h-7z" fill="#9800ff"/>
<path d="M1356 336h7v7h-7z" fill="#a000ff"/>
<path d="M1362 336h7v7h-7z" fill="#a800ff"/>
<path d="M1368 336h7v7h-7z" fill="#af00ff"/>
<path d="M1374 336h7v7h-7z" fill="#b700ff"/>
<path d="M1380 336h7v7h-7z" fill="#bf00ff"/>
<path d="M1386 336h7v7h-7z" fill="#c700ff"/>
<path d="M1392 336h7v7h-7z" fill="#cf00ff"/>
<path d="M1398 336h7v7h-7z" fill="#d600ff"/>
<path d="M1404 336h7v7h-7z" fill="#de00ff"/>
<path d="M1410 336h7v7h-7z" fill="#e600ff"/>
<path d="M1416 336h7v7h-7z" fill="#ee00ff"/>
<path d="M1422 336h7v7h-7z" fill="#f600ff"/>
<path d="M1428 336h7v7h-7z" fill="#fe00ff"/>
<path d="M1434 336h7v7h-7z" fill="#ff00f8"/>
<path d="M1440 336h7v7h-7z" fill="#ff00f0"/>
<path d="M1446 336h7v7h-7z" fill="#ff00e9"/>
<path d="M1452 336h7v7h-7z" fill="#ff00e2"/>
<path d="M1458 336h7v7h-7z" fill="#ff00dc"/>
<path d="M1464 336h7v7h-7z" fill="#ff00d6"/>
<path d="M1470 336h7v7h-7z" fill="#ff00d0"/>
<path d="M1476 336h7v7h-7z" fill="#ff00cb"/>
<path d="M1482 336h7v7h-7z" fill="#ff00c6"/>
<path d="M1488 336h7v7h-7z" fill="#ff00c1"/>
<path d="M1494 336h7v7h-7z" fill="#ff00bc"/>
<path d="M1500 336h7v7h-7z" fill="#ff00b7"/>
<path d="M1506 336h7v7h-7z" fill="#ff00b3"/>
<path d="M1512 336h7v7h-7z" fill="#ff00af"/>
<path d="M1518 336h7v7h-7z" fill="#ff00ab"/>
<path d="M1524 336h7v7h-7z" fill="#ff00a7"/>
<path d="M1530 336h7v7h-7z" fill="#ff00a3"/>
<path d="M1536 336h7v7h-7z" fill="#ff00a0"/>
<path d="M1542 336h7v7h-7z" fill="#ff009c"/>
<path d="M1548 336h7v7h-7z" fill="#ff0099"/>
<path d="M1554 336h7v7h-7z" fill="#ff0096"/>
<path d="M1128 342h7v7h-7z" fill="#003fff"/>
<path d="M1134 342h7v7h-7z" fill="#003dff"/>
<path d="M1140 342h7v7h-7z" fill="#003bff"/>
<path d="M1146 342h7v7h-7z" fill="#0039ff"/>
<path d="M1152 342h7v7h-7z" fill="#0038ff"/>
<path d="M1158 342h7v7h-7z" fill="#0036ff"/>
<path d="M1164 342h7v7h-7z" fill="#0034ff"/>
<path d="M1170 342h7v7h-7z" fill="#0032ff"/>
<path d="M1176 342h7v7h-7z" fill="#0030ff"/>
<path d="M1182 342h7v7h-7z" fill="#002fff"/>
<path d="M1188 342h7v7h-7z" fill="#002dff"/>
<path d="M1194 342h7v7h-7z" fill="#002bff"/>
<path d="M1200 342h7v7h-7z" fill="#0029ff"/>
<path d="M1206 342h7v7h-7z" fill="#0027ff"/>
<path d="M1212 342h7v7h-7z" fill="#0026ff"/>
<path d="M1218 342h7v7h-7z" fill="#0024ff"/>
<path d="M1224 342h7v7h-7z" fill="#0022ff"/>
<path d="M1230 342h7v7h-7z" fill="#0720ff"/>
<path d="M1236 342h7v7h-7z" fill="#0d1eff"/>
<path d="M1242 342h7v7h-7z" fill="#141cff"/>
<path d="M1248 342h7v7h-7z" fill="#1b1aff"/>
<path d="M1254 342h7v7h-7z" fill="#2219ff"/>
<path d="M1260 342h7v7h-7z" fill="#2917ff"/>
<path d="M1266 342h7v7h-7z" fill="#3015ff"/>
<path d="M1272 342h7v7h-7z" fill="#3713ff"/>
<path d="M1278 342h7v7h-7z" fill="#3d11ff"/>
<path d="M1284 342h7v7h-7z" fill="#440fff"/>
<path d="M1290 342h7v7h-7z" fill="#4c0dff"/>
<path d="M1296 342h7v7h-7z" fill="#530bff"/>
<path d="M1302 342h7v7h-7z" fill="#5a09ff"/>
<path d="M1308 342h7v7h-7z" fill="#6107ff"/>
<path d="M1314 342h7v7h-7z" fill="#6805ff"/>
<path d="M1320 342h7v7h-7z" fill="#6f03ff"/>
<path d="M1326 342h7v7h-7z" fill="#7601ff"/>
<path d="M1332 342h7v7h-7z" fill="#7e00ff"/>
<path d="M1338 342h7v7h-7z" fill="#8500ff"/>
<path d="M1344 342h7v7h-7z" fill="#8c00ff"/>
<path d="M1350 342h7v7h-7z" fill="#9400ff"/>
<path d="M1356 342h7v7h-7z" fill="#9b00ff"/>
<path d="M1362 342h7v7h-7z" fill="#a300ff"/>
<path d="M1368 342h7v7h-7z" fill="#aa00ff"/>
<path d="M1374 342h7v7h-7z" fill="#b200ff"/>
<path d="M1380 342h7v7h-7z" fill="#b900ff"/>
<path d="M1386 342h7v7h-7z" fill="#c100ff"/>
<path d="M1392 342h7v7h-7z" fill="#c800ff"/>
<path d="M1398 342h7v7h-7z" fill="#d000ff"/>
<path d="M1404 342h7v7h-7z" fill="#d800ff"/>
<path d="M1410 342h7v7h-7z" fill="#df00ff"/>
<path d="M1416 342h7v7h-7z" fill="#e700ff"/>
<path d="M1422 342h7v7h-7z" fill="#ef00ff"/>
<path d="M1428 342h7v7h-7z" fill="#f700ff"/>
<path d="M1434 342h7v7h-7z" fill="#ff00ff"/>
<path d="M1440 342h7v7h-7z" fill="#ff00f8"/>
<path d="M1446 342h7v7h-7z" fill="#ff00f0"/>
<path d="M1452 342h7v7h-7z" fill="#ff00e9"/>
<path d="M1458 342h7v7h-7z" fill="#ff00e3"/>
<path d="M1464 342h7v7h-7z" fill="#ff00dd"/>
<path d="M1470 342h7v7h-7z" fill="#ff00d7"/>
<path d="M1476 342h7v7h-7z" fill="#ff00d1"/>
<path d="M1482 342h7v7h-7z" fill="#ff00cc"/>
<path d="M1488 342h7v7h-7z" fill="#ff00c6"/>
<path d="M1494 342h7v7h-7z" fill="#ff00c2"/>
<path d="M1500 342h7v7h-7z" fill="#ff00bd"/>
<path d="M1506 342h7v7h-7z" fill="#ff00b8"/>
<path d="M1512 342h7v7h-7z" fill="#ff00b4"/>
<path d="M1518 342h7v7h-7z" fill="#ff00b0"/>
<path d="M1524 342h7v7h-7z" fill="#ff00ac"/>
<path d="M1530 342h7v7h-7z" fill="#ff00a8"/>
<path d="M1536 342h7v7h-7z" fill="#ff00a5"/>
<path d="M1542 342h7v7h-7z" fill="#ff00a1"/>
<path d="M1548 342h7v7h-7z" fill="#ff009e"/>
<path d="M1128 348h7v7h-7z" fill="#003bff"/>
<path d="M1134 348h7v7h-7z" fill="#003aff"/>
<path d="M1140 348h7v7h-7z" fill="#0038ff"/>
<path d="M1146 348h7v7h-7z" fill="#0036ff"/>
<path d="M1152 348h7v7h-7z" fill="#0035ff"/>
<path d="M1158 348h7v7h-7z" fill="#0033ff"/>
<path d="M1164 348h7v7h-7z" fill="#0031ff"/>
<path d="M1170 348h7v7h-7z" fill="#002fff"/>
<path d="M1176 348h7v7h-7z" fill="#002eff"/>
<path d="M1182 348h7v7h-7z" fill="#002cff"/>
<path d="M1188 348h7v7h-7z" fill="#002aff"/>
<path d="M1194 348h7v7h-7z" fill="#0028ff"/>
<path d="M1200 348h7v7h-7z" fill="#0027ff"/>
<path d="M1206 348h7v7h-7z" fill="#0025ff"/>
<path d="M1212 348h7v7h-7z" fill="#0023ff"/>
<path d="M1218 348h7v7h-7z" fill="#0021ff"/>
<path d="M1224 348h7v7h-7z" fill="#001fff"/>
<path d="M1230 348h7v7h-7z" fill="#051eff"/>
<path d="M1236 348h7v7h-7z" fill="#0c1cff"/>
<path d="M1242 348h7v7h-7z" fill="#131aff"/>
<path d="M1248 348h7v7h-7z" fill="#1918ff"/>
<path d="M1254 348h7v7h-7z" fill="#2016ff"/>
<path d="M1260 348h7v7h-7z" fill="#2714ff"/>
<path d="M1266 348h7v7h-7z" fill="#2d12ff"/>
<path d="M1272 348h7v7h-7z" fill="#3411ff"/>
<path d="M1278 348h7v7h-7z" fill="#3b0fff"/>
<path d="M1284 348h7v7h-7z" fill="#420dff"/>
<path d="M1290 348h7v7h-7z" fill="#490bff"/>
<path d="M1296 348h7v7h-7z" fill="#5009ff"/>
<path d="M1302 348h7v7h-7z" fill="#5707ff"/>
<path d="M1308 348h7v7h-7z" fill="#5e05ff"/>
<path d="M1314 348h7v7h-7z" fill="#6403ff"/>
<path d="M1320 348h7v7h-7z" fill="#6c01ff"/>
<path d="M1326 348h7v7h-7z" fill="#7300ff"/>
<path d="M1332 348h7v7h-7z" fill="#7a00ff"/>
<path d="M1338 348h7v7h-7z" fill="#8100ff"/>
<path d="M1344 348h7v7h-7z" fill="#8800ff"/>
<path d="M1350 348h7v7h-7z" fill="#8f00ff"/>
<path d="M1356 348h7v7h-7z" fill="#9600ff"/>
<path d="M1362 348h7v7h-7z" fill="#9e00ff"/>
<path d="M1368 348h7v7h-7z" fill="#a500ff"/>
<path d="M1374 348h7v7h-7z" fill="#ac00ff"/>
<path d="M1380 348h7v7h-7z" fill="#b400ff"/>
<path d="M1386 348h7v7h-7z" fill="#bb00ff"/>
<path d="M1392 348h7v7h-7z" fill="#c200ff"/>
<path d="M1398 348h7v7h-7z" fill="#ca00ff"/>
<path d="M1404 348h7v7h-7z" fill="#d100ff"/>
<path d="M1410 348h7v7h-7z" fill="#d900ff"/>
<path d="M1416 348h7v7h-7z" fill="#e000ff"/>
<path d="M1422 348h7v7h-7z" fill="#e800ff"/>
<path d="M1428 348h7v7h-7z" fill="#f000ff"/>
<path d="M1434 348h7v7h-7z" fill="#f700ff"/>
<path d="M1440 348h7v7h-7z" fill="#ff00ff"/>
<path d="M1446 348h7v7h-7z" fill="#ff00f7"/>
<path d="M1452 348h7v7h-7z" fill="#ff00f0"/>
<path d="M1458 348h7v7h-7z" fill="#ff00e9"/>
<path d="M1464 348h7v7h-7z" fill="#ff00e3"/>
<path d="M1470 348h7v7h-7z" fill="#ff00dd"/>
<path d="M1476 348h7v7h-7z" fill="#ff00d7"/>
<path d="M1482 348h7v7h-7z" fill="#ff00d2"/>
<path d="M1488 348h7v7h-7z" fill="#ff00cc"/>
<path d="M1494 348h7v7h-7z" fill="#ff00c7"/>
<path d="M1500 348h7v7h-7z" fill="#ff00c2"/>
<path d="M1506 348h7v7h-7z" fill="#ff00be"/>
<path d="M1512 348h7v7h-7z" fill="#ff00b9"/>
<path d="M1518 348h7v7h-7z" fill="#ff00b5"/>
<path d="M1524 348h7v7h-7z" fill="#ff00b1"/>
<path d="M1530 348h7v7h-7z" fill="#ff00ad"/>
<path d="M1536 348h7v7h-7z" fill="#ff00a9"/>
<path d="M1542 348h7v7h-7z" fill="#ff00a6"/>
<path d="M1134 354h7v7h-7z" fill="#0037ff"/>
<path d="M1140 354h7v7h-7z" fill="#0035ff"/>
<path d="M1146 354h7v7h-7z" fill="#0034ff"/>
<path d="M1152 354h7v7h-7z" fill="#0032ff"/>
<path d="M1158 354h7v7h-7z" fill="#0030ff"/>
<path d="M1164 354h7v7h-7z" fill="#002eff"/>
<path d="M1170 354h7v7h-7z" fill="#002dff"/>
<path d="M1176 354h7v7h-7z" fill="#002bff"/>
<path d="M1182 354h7v7h-7z" fill="#0029ff"/>
<path d="M1188 354h7v7h-7z" fill="#0028ff"/>
<path d="M1194 354h7v7h-7z" fill="#0026ff"/>
<path d="M1200 354h7v7h-7z" fill="#0024ff"/>
<path d="M1206 354h7v7h-7z" fill="#0022ff"/>
<path d="M1212 354h7v7h-7z" fill="#0021ff"/>
<path d="M1218 354h7v7h-7z" fill="#001fff"/>
<path d="M1224 354h7v7h-7z" fill="#001dff"/>
<path d="M1230 354h7v7h-7z" fill="#041bff"/>
<path d="M1236 354h7v7h-7z" fill="#0b19ff"/>
<path d="M1242 354h7v7h-7z" fill="#1118ff"/>
<path d="M1248 354h7v7h-7z" fill="#1816ff"/>
<path d="M1254 354h7v7h-7z" fill="#1e14ff"/>
<path d="M1260 354h7v7h-7z" fill="#2512ff"/>
<path d="M1266 354h7v7h-7z" fill="#2b10ff"/>
<path d="M1272 354h7v7h-7z" fill="#320eff"/>
<path d="M1278 354h7v7h-7z" fill="#390dff"/>
<path d="M1284 354h7v7h-7z" fill="#3f0bff"/>
<path d="M1290 354h7v7h-7z" fill="#4609ff"/>
<path d="M1296 354h7v7h-7z" fill="#4d07ff"/>
<path d="M1302 354h7v7h-7z" fill="#5405ff"/>
<path d="M1308 354h7v7h-7z" fill="#5a03ff"/>
<path d="M1314 354h7v7h-7z" fill="#6101ff"/>
<path d="M1320 354h7v7h-7z" fill="#6800ff"/>
<path d="M1326 354h7v7h-7z" fill="#6f00ff"/>
<path d="M1332 354h7v7h-7z" fill="#7600ff"/>
<path d="M1338 354h7v7h-7z" fill="#7d00ff"/>
<path d="M1344 354h7v7h-7z" fill="#8400ff"/>
<path d="M1350 354h7v7h-7z" fill="#8b00ff"/>
<path d="M1356 354h7v7h-7z" fill="#9200ff"/>
<path d="M1362 354h7v7h-7z" fill="#9900ff"/>
<path d="M1368 354h7v7h-7z" fill="#a000ff"/>
<path d="M1374 354h7v7h-7z" fill="#a700ff"/>
<path d="M1380 354h7v7h-7z" fill="#ae00ff"/>
<path d="M1386 354h7v7h-7z" fill="#b600ff"/>
<path d="M1392 354h7v7h-7z" fill="#bd00ff"/>
<path d="M1398 354h7v7h-7z" fill="#c400ff"/>
<path d="M1404 354h7v7h-7z" fill="#cb00ff"/>
<path d="M1410 354h7v7h-7z" fill="#d300ff"/>
<path d="M1416 354h7v7h-7z" fill="#da00ff"/>
<path d="M1422 354h7v7h-7z" fill="#e200ff"/>
<path d="M1428 354h7v7h-7z" fill="#e900ff"/>
<path d="M1434 354h7v7h-7z" fill="#f000ff"/>
<path d="M1440 354h7v7h-7z" fill="#f800ff"/>
<path d="M1446 354h7v7h-7z" fill="#ff00fe"/>
<path d="M1452 354h7v7h-7z" fill="#ff00f7"/>
<path d="M1458 354h7v7h-7z" fill="#ff00f0"/>
<path d="M1464 354h7v7h-7z" fill="#ff00ea"/>
<path d="M1470 354h7v7h-7z" fill="#ff00e3"/>
<path d="M1476 354h7v7h-7z" fill="#ff00dd"/>
<path d="M1482 354h7v7h-7z" fill="#ff00d8"/>
<path d="M1488 354h7v7h-7z" fill="#ff00d2"/>
<path d="M1494 354h7v7h-7z" fill="#ff00cd"/>
<path d="M1500 354h7v7h-7z" fill="#ff00c8"/>
<path d="M1506 354h7v7h-7z" fill="#ff00c3"/>
<path d="M1512 354h7v7h-7z" fill="#ff00bf"/>
<path d="M1518 354h7v7h-7z" fill="#ff00ba"/>
<path d="M1524 354h7v7h-7z" fill="#ff00b6"/>
<path d="M1530 354h7v7h-7z" fill="#ff00b2"/>
<path d="M1536 354h7v7h-7z" fill="#ff00ae"/>
<path d="M1542 354h7v7h-7z" fill="#ff00aa"/>
<path d="M1140 360h7v7h-7z" fill="#0032ff"/>
<path d="M1146 360h7v7h-7z" fill="#0031ff"/>
<path d="M1152 360h7v7h-7z" fill="#002fff"/>
<path d="M1158 360h7v7h-7z" fill="#002dff"/>
<path d="M1164 360h7v7h-7z" fill="#002cff"/>
<path d="M1170 360h7v7h-7z" fill="#002aff"/>
<path d="M1176 360h7v7h-7z" fill="#0028ff"/>
<path d="M1182 360h7v7h-7z" fill="#0027ff"/>
<path d="M1188 360h7v7h-7z" fill="#0025ff"/>
<path d="M1194 360h7v7h-7z" fill="#0023ff"/>
<path d="M1200 360h7v7h-7z" fill="#0022ff"/>
<path d="M1206 360h7v7h-7z" fill="#0020ff"/>
<path d="M1212 360h7v7h-7z" fill="#001eff"/>
<path d="M1218 360h7v7h-7z" fill="#001cff"/>
<path d="M1224 360h7v7h-7z" fill="#001bff"/>
<path d="M1230 360h7v7h-7z" fill="#0319ff"/>
<path d="M1236 360h7v7h-7z" fill="#0a17ff"/>
<path d="M1242 360h7v7h-7z" fill="#1015ff"/>
<path d="M1248 360h7v7h-7z" fill="#1614ff"/>
<path d="M1254 360h7v7h-7z" fill="#1d12ff"/>
<path d="M1260 360h7v7h-7z" fill="#2310ff"/>
<path d="M1266 360h7v7h-7z" fill="#2a0eff"/>
<path d="M1272 360h7v7h-7z" fill="#300cff"/>
<path d="M1278 360h7v7h-7z" fill="#360bff"/>
<path d="M1284 360h7v7h-7z" fill="#3d09ff"/>
<path d="M1290 360h7v7h-7z" fill="#4407ff"/>
<path d="M1296 360h7v7h-7z" fill="#4a05ff"/>
<path d="M1302 360h7v7h-7z" fill="#5103ff"/>
<path d="M1308 360h7v7h-7z" fill="#5701ff"/>
<path d="M1314 360h7v7h-7z" fill="#5e00ff"/>
<path d="M1320 360h7v7h-7z" fill="#6500ff"/>
<path d="M1326 360h7v7h-7z" fill="#6b00ff"/>
<path d="M1332 360h7v7h-7z" fill="#7200ff"/>
<path d="M1338 360h7v7h-7z" fill="#7900ff"/>
<path d="M1344 360h7v7h-7z" fill="#8000ff"/>
<path d="M1350 360h7v7h-7z" fill="#8700ff"/>
<path d="M1356 360h7v7h-7z" fill="#8e00ff"/>
<path d="M1362 360h7v7h-7z" fill="#9400ff"/>
<path d="M1368 360h7v7h-7z" fill="#9b00ff"/>
<path d="M1374 360h7v7h-7z" fill="#a200ff"/>
<path d="M1380 360h7v7h-7z" fill="#a900ff"/>
<path d="M1386 360h7v7h-7z" fill="#b000ff"/>
<path d="M1392 360h7v7h-7z" fill="#b700ff"/>
<path d="M1398 360h7v7h-7z" fill="#bf00ff"/>
<path d="M1404 360h7v7h-7z" fill="#c600ff"/>
<path d="M1410 360h7v7h-7z" fill="#cd00ff"/>
<path d="M1416 360h7v7h-7z" fill="#d400ff"/>
<path d="M1422 360h7v7h-7z" fill="#db00ff"/>
<path d="M1428 360h7v7h-7z" fill="#e200ff"/>
<path d="M1434 360h7v7h-7z" fill="#ea00ff"/>
<path d="M1440 360h7v7h-7z" fill="#f100ff"/>
<path d="M1446 360h7v7h-7z" fill="#f800ff"/>
<path d="M1452 360h7v7h-7z" fill="#ff00fe"/>
<path d="M1458 360h7v7h-7z" fill="#ff00f7"/>
<path d="M1464 360h7v7h-7z" fill="#ff00f0"/>
<path d="M1470 360h7v7h-7z" fill="#ff00ea"/>
<path d="M1476 360h7v7h-7z" fill="#ff00e4"/>
<path d="M1482 360h7v7h-7z" fill="#ff00de"/>
<path d="M1488 360h7v7h-7z" fill="#ff00d8"/>
<path d="M1494 360h7v7h-7z" fill="#ff00d3"/>
<path d="M1500 360h7v7h-7z" fill="#ff00ce"/>
<path d="M1506 360h7v7h-7z" fill="#ff00c9"/>
<path d="M1512 360h7v7h-7z" fill="#ff00c4"/>
<path d="M1518 360h7v7h-7z" fill="#ff00bf"/>
<path d="M1524 360h7v7h-7z" fill="#ff00bb"/>
<path d="M1530 360h7v7h-7z" fill="#ff00b7"/>
<path d="M1536 360h7v7h-7z" fill="#ff00b3"/>
<path d="M1140 366h7v7h-7z" fill="#0030ff"/>
<path d="M1146 366h7v7h-7z" fill="#002eff"/>
<path d="M1152 366h7v7h-7z" fill="#002dff"/>
<path d="M1158 366h7v7h-7z" fill="#002bff"/>
<path d="M1164 366h7v7h-7z" fill="#0029ff"/>
<path d="M1170 366h7v7h-7z" fill="#0028ff"/>
<path d="M1176 366h7v7h-7z" fill="#0026ff"/>
<path d="M1182 366h7v7h-7z" fill="#0024ff"/>
<path d="M1188 366h7v7h-7z" fill="#0023ff"/>
<path d="M1194 366h7v7h-7z" fill="#0021ff"/>
<path d="M1200 366h7v7h-7z" fill="#001fff"/>
<path d="M1206 366h7v7h-7z" fill="#001eff"/>
<path d="M1212 366h7v7h-7z" fill="#001cff"/>
<path d="M1218 366h7v7h-7z" fill="#001aff"/>
<path d="M1224 366h7v7h-7z" fill="#0018ff"/>
<path d="M1230 366h7v7h-7z" fill="#0217ff"/>
<path d="M1236 366h7v7h-7z" fill="#0815ff"/>
<path d="M1242 366h7v7h-7z" fill="#0f13ff"/>
<path d="M1248 366h7v7h-7z" fill="#1512ff"/>
<path d="M1254 366h7v7h-7z" fill="#1b10ff"/>
<path d="M1260 366h7v7h-7z" fill="#210eff"/>
<path d="M1266 366h7v7h-7z" fill="#280cff"/>
<path d="M1272 366h7v7h-7z" fill="#2e0aff"/>
<path d="M1278 366h7v7h-7z" fill="#3409ff"/>
<path d="M1284 366h7v7h-7z" fill="#3b07ff"/>
<path d="M1290 366h7v7h-7z" fill="#4105ff"/>
<path d="M1296 366h7v7h-7z" fill="#4803ff"/>
<path d="M1302 366h7v7h-7z" fill="#4e02ff"/>
<path d="M1308 366h7v7h-7z" fill="#5400ff"/>
<path d="M1314 366h7v7h-7z" fill="#5b00ff"/>
<path d="M1320 366h7v7h-7z" fill="#6200ff"/>
<path d="M1326 366h7v7h-7z" fill="#6800ff"/>
<path d="M1332 366h7v7h-7z" fill="#6f00ff"/>
<path d="M1338 366h7v7h-7z" fill="#7500ff"/>
<path d="M1344 366h7v7h-7z" fill="#7c00ff"/>
<path d="M1350 366h7v7h-7z" fill="#8300ff"/>
<path d="M1356 366h7v7h-7z" fill="#8900ff"/>
<path d="M1362 366h7v7h-7z" fill="#9000ff"/>
<path d="M1368 366h7v7h-7z" fill="#9700ff"/>
<path d="M1374 366h7v7h-7z" fill="#9e00ff"/>
<path d="M1380 366h7v7h-7z" fill="#a500ff"/>
<path d="M1386 366h7v7h-7z" fill="#ab00ff"/>
<path d="M1392 366h7v7h-7z" fill="#b200ff"/>
<path d="M1398 366h7v7h-7z" fill="#b900ff"/>
<path d="M1404 366h7v7h-7z" fill="#c000ff"/>
<path d="M1410 366h7v7h-7z" fill="#c700ff"/>
<path d="M1416 366h7v7h-7z" fill="#ce00ff"/>
<path d="M1422 366h7v7h-7z" fill="#d500ff"/>
<path d="M1428 366h7v7h-7z" fill="#dc00ff"/>
<path d="M1434 366h7v7h-7z" fill="#e300ff"/>
<path d="M1440 366h7v7h-7z" fill="#eb00ff"/>
<path d="M1446 366h7v7h-7z" fill="#f200ff"/>
<path d="M1452 366h7v7h-7z" fill="#f900ff"/>
<path d="M1458 366h7v7h-7z" fill="#ff00fe"/>
<path d="M1464 366h7v7h-7z" fill="#ff00f7"/>
<path d="M1470 366h7v7h-7z" fill="#ff00f0"/>
<path d="M1476 366h7v7h-7z" fill="#ff00ea"/>
<path d="M1482 366h7v7h-7z" fill="#ff00e4"/>
<path d="M1488 366h7v7h-7z" fill="#ff00de"/>
<path d="M1494 366h7v7h-7z" fill="#ff00d8"/>
<path d="M1500 366h7v7h-7z" fill="#ff00d3"/>
<path d="M1506 366h7v7h-7z" fill="#ff00ce"/>
<path d="M1512 366h7v7h-7z" fill="#ff00c9"/>
<path d="M1518 366h7v7h-7z" fill="#ff00c5"/>
<path d="M1524 366h7v7h-7z" fill="#ff00c0"/>
<path d="M1530 366h7v7h-7z" fill="#ff00bc"/>
<path d="M1146 372h7v7h-7z" fill="#002cff"/>
<path d="M1152 372h7v7h-7z" fill="#002aff"/>
<path d="M1158 372h7v7h-7z" fill="#0028ff"/>
<path d="M1164 372h7v7h-7z" fill="#0027ff"/>
<path d="M1170 372h7v7h-7z" fill="#0025ff"/>
<path d="M1176 372h7v7h-7z" fill="#0024ff"/>
<path d="M1182 372h7v7h-7z" fill="#0022ff"/>
<path d="M1188 372h7v7h-7z" fill="#0020ff"/>
<path d="M1194 372h7v7h-7z" fill="#001fff"/>
<path d="M1200 372h7v7h-7z" fill="#001dff"/>
<path d="M1206 372h7v7h-7z" fill="#001bff"/>
<path d="M1212 372h7v7h-7z" fill="#001aff"/>
<path d="M1218 372h7v7h-7z" fill="#0018ff"/>
<path d="M1224 372h7v7h-7z" fill="#0016ff"/>
<path d="M1230 372h7v7h-7z" fill="#0115ff"/>
<path d="M1236 372h7v7h-7z" fill="#0713ff"/>
<path d="M1242 372h7v7h-7z" fill="#0d11ff"/>
<path d="M1248 372h7v7h-7z" fill="#1310ff"/>
<path d="M1254 372h7v7h-7z" fill="#1a0eff"/>
<path d="M1260 372h7v7h-7z" fill="#200cff"/>
<path d="M1266 372h7v7h-7z" fill="#260aff"/>
<path d="M1272 372h7v7h-7z" fill="#2c09ff"/>
<path d="M1278 372h7v7h-7z" fill="#3207ff"/>
<path d="M1284 372h7v7h-7z" fill="#3905ff"/>
<path d="M1290 372h7v7h-7z" fill="#3f03ff"/>
<path d="M1296 372h7v7h-7z" fill="#4502ff"/>
<path d="M1302 372h7v7h-7z" fill="#4b00ff"/>
<path d="M1308 372h7v7h-7z" fill="#5200ff"/>
<path d="M1314 372h7v7h-7z" fill="#5800ff"/>
<path d="M1320 372h7v7h-7z" fill="#5e00ff"/>
<path d="M1326 372h7v7h-7z" fill="#6500ff"/>
<path d="M1332 372h7v7h-7z" fill="#6b00ff"/>
<path d="M1338 372h7v7h-7z" fill="#7200ff"/>
<path d="M1344 372h7v7h-7z" fill="#7800ff"/>
<path d="M1350 372h7v7h-7z" fill="#7f00ff"/>
<path d="M1356 372h7v7h-7z" fill="#8500ff"/>
<path d="M1362 372h7v7h-7z" fill="#8c00ff"/>
<path d="M1368 372h7v7h-7z" fill="#9300ff"/>
<path d="M1374 372h7v7h-7z" fill="#9900ff"/>
<path d="M1380 372h7v7h-7z" fill="#a000ff"/>
<path d="M1386 372h7v7h-7z" fill="#a700ff"/>
<path d="M1392 372h7v7h-7z" fill="#ad00ff"/>
<path d="M1398 372h7v7h-7z" fill="#b400ff"/>
<path d="M1404 372h7v7h-7z" fill="#bb00ff"/>
<path d="M1410 372h7v7h-7z" fill="#c200ff"/>
<path d="M1416 372h7v7h-7z" fill="#c900ff"/>
<path d="M1422 372h7v7h-7z" fill="#d000ff"/>
<path d="M1428 372h7v7h-7z" fill="#d600ff"/>
<path d="M1434 372h7v7h-7z" fill="#dd00ff"/>
<path d="M1440 372h7v7h-7z" fill="#e400ff"/>
<path d="M1446 372h7v7h-7z" fill="#eb00ff"/>
<path d="M1452 372h7v7h-7z" fill="#f200ff"/>
<path d="M1458 372h7v7h-7z" fill="#f900ff"/>
<path d="M1464 372h7v7h-7z" fill="#ff00fd"/>
<path d="M1470 372h7v7h-7z" fill="#ff00f7"/>
<path d="M1476 372h7v7h-7z" fill="#ff00f0"/>
<path d="M1482 372h7v7h-7z" fill="#ff00ea"/>
<path d="M1488 372h7v7h-7z" fill="#ff00e4"/>
<path d="M1494 372h7v7h-7z" fill="#ff00de"/>
<path d="M1500 372h7v7h-7z" fill="#ff00d9"/>
<path d="M1506 372h7v7h-7z" fill="#ff00d4"/>
<path d="M1512 372h7v7h-7z" fill="#ff00cf"/>
<path d="M1518 372h7v7h-7z" fill="#ff00ca"/>
<path d="M1524 372h7v7h-7z" fill="#ff00c5"/>
<path d="M1146 378h7v7h-7z" fill="#0029ff"/>
<path d="M1152 378h7v7h-7z" fill="#0028ff"/>
<path d="M1158 378h7v7h-7z" fill="#0026ff"/>
<path d="M1164 378h7v7h-7z" fill="#0025ff"/>
<path d="M1170 378h7v7h-7z" fill="#0023ff"/>
<path d="M1176 378h7v7h-7z" fill="#0021ff"/>
<path d="M1182 378h7v7h-7z" fill="#0020ff"/>
<path d="M1188 378h7v7h-7z" fill="#001eff"/>
<path d="M1194 378h7v7h-7z" fill="#001dff"/>
<path d="M1200 378h7v7h-7z" fill="#001bff"/>
<path d="M1206 378h7v7h-7z" fill="#0019ff"/>
<path d="M1212 378h7v7h-7z" fill="#0018ff"/>
<path d="M1218 378h7v7h-7z" fill="#0016ff"/>
<path d="M1224 378h7v7h-7z" fill="#0014ff"/>
<path d="M1230 378h7v7h-7z" fill="#0013ff"/>
<path d="M1236 378h7v7h-7z" fill="#0611ff"/>
<path d="M1242 378h7v7h-7z" fill="#0c0fff"/>
<path d="M1248 378h7v7h-7z" fill="#120eff"/>
<path d="M1254 378h7v7h-7z" fill="#180cff"/>
<path d="M1260 378h7v7h-7z" fill="#1e0aff"/>
<path d="M1266 378h7v7h-7z" fill="#2409ff"/>
<path d="M1272 378h7v7h-7z" fill="#2a07ff"/>
<path d="M1278 378h7v7h-7z" fill="#3005ff"/>
<path d="M1284 378h7v7h-7z" fill="#3603ff"/>
<path d="M1290 378h7v7h-7z" fill="#3d02ff"/>
<path d="M1296 378h7v7h-7z" fill="#4300ff"/>
<path d="M1302 378h7v7h-7z" fill="#4900ff"/>
<path d="M1308 378h7v7h-7z" fill="#4f00ff"/>
<path d="M1314 378h7v7h-7z" fill="#5500ff"/>
<path d="M1320 378h7v7h-7z" fill="#5c00ff"/>
<path d="M1326 378h7v7h-7z" fill="#6200ff"/>
<path d="M1332 378h7v7h-7z" fill="#6800ff"/>
<path d="M1338 378h7v7h-7z" fill="#6e00ff"/>
<path d="M1344 378h7v7h-7z" fill="#7500ff"/>
<path d="M1350 378h7v7h-7z" fill="#7b00ff"/>
<path d="M1356 378h7v7h-7z" fill="#8200ff"/>
<path d="M1362 378h7v7h-7z" fill="#8800ff"/>
<path d="M1368 378h7v7h-7z" fill="#8f00ff"/>
<path d="M1374 378h7v7h-7z" fill="#9500ff"/>
<path d="M1380 378h7v7h-7z" fill="#9c00ff"/>
<path d="M1386 378h7v7h-7z" fill="#a200ff"/>
<path d="M1392 378h7v7h-7z" fill="#a900ff"/>
<path d="M1398 378h7v7h-7z" fill="#af00ff"/>
<path d="M1404 378h7v7h-7z" fill="#b600ff"/>
<path d="M1410 378h7v7h-7z" fill="#bd00ff"/>
<path d="M1416 378h7v7h-7z" fill="#c300ff"/>
<path d="M1422 378h7v7h-7z" fill="#ca00ff"/>
<path d="M1428 378h7v7h-7z" fill="#d100ff"/>
<path d="M1434 378h7v7h-7z" fill="#d800ff"/>
<path d="M1440 378h7v7h-7z" fill="#de00ff"/>
<path d="M1446 378h7v7h-7z" fill="#e500ff"/>
<path d="M1452 378h7v7h-7z" fill="#ec00ff"/>
<path d="M1458 378h7v7h-7z" fill="#f300ff"/>
<path d="M1464 378h7v7h-7z" fill="#fa00ff"/>
<path d="M1470 378h7v7h-7z" fill="#ff00fd"/>
<path d="M1476 378h7v7h-7z" fill="#ff00f6"/>
<path d="M1482 378h7v7h-7z" fill="#ff00f0"/>
<path d="M1488 378h7v7h-7z" fill="#ff00ea"/>
<path d="M1494 378h7v7h-7z" fill="#ff00e4"/>
<path d="M1500 378h7v7h-7z" fill="#ff00df"/>
<path d="M1506 378h7v7h-7z" fill="#ff00d9"/>
<path d="M1512 378h7v7h-7z" fill="#ff00d4"/>
<path d="M1518 378h7v7h-7z" fill="#ff00cf"/>
<path d="M1152 384h7v7h-7z" fill="#0025ff"/>
<path d="M1158 384h7v7h-7z" fill="#0024ff"/>
<path d="M1164 384h7v7h-7z" fill="#0022ff"/>
<path d="M1170 384h7v7h-7z" fill="#0021ff"/>
<path d="M1176 384h7v7h-7z" fill="#001fff"/>
<path d="M1182 384h7v7h-7z" fill="#001eff"/>
<path d="M1188 384h7v7h-7z" fill="#001cff"/>
<path d="M1194 384h7v7h-7z" fill="#001aff"/>
<path d="M1200 384h7v7h-7z" fill="#0019ff"/>
<path d="M1206 384h7v7h-7z" fill="#0017ff"/>
<path d="M1212 384h7v7h-7z" fill="#0016ff"/>
<path d="M1218 384h7v7h-7z" fill="#0014ff"/>
<path d="M1224 384h7v7h-7z" fill="#0012ff"/>
<path d="M1230 384h7v7h-7z" fill="#0011ff"/>
<path d="M1236 384h7v7h-7z" fill="#050fff"/>
<path d="M1242 384h7v7h-7z" fill="#0b0dff"/>
<path d="M1248 384h7v7h-7z" fill="#110cff"/>
<path d="M1254 384h7v7h-7z" fill="#170aff"/>
<path d="M1260 384h7v7h-7z" fill="#1d08ff"/>
<path d="M1266 384h7v7h-7z" fill="#2307ff"/>
<path d="M1272 384h7v7h-7z" fill="#2805ff"/>
<path d="M1278 384h7v7h-7z" fill="#2e03ff"/>
<path d="M1284 384h7v7h-7z" fill="#3402ff"/>
<path d="M1290 384h7v7h-7z" fill="#3a00ff"/>
<path d="M1296 384h7v7h-7z" fill="#4000ff"/>
<path d="M1302 384h7v7h-7z" fill="#4600ff"/>
<path d="M1308 384h7v7h-7z" fill="#4d00ff"/>
<path d="M1314 384h7v7h-7z" fill="#5300ff"/>
<path d="M1320 384h7v7h-7z" fill="#5900ff"/>
<path d="M1326 384h7v7h-7z" fill="#5f00ff"/>
<path d="M1332 384h7v7h-7z" fill="#6500ff"/>
<path d="M1338 384h7v7h-7z" fill="#6b00ff"/>
<path d="M1344 384h7v7h-7z" fill="#7200ff"/>
<path d="M1350 384h7v7h-7z" fill="#7800ff"/>
<path d="M1356 384h7v7h-7z" fill="#7e00ff"/>
<path d="M1362 384h7v7h-7z" fill="#8400ff"/>
<path d="M1368 384h7v7h-7z" fill="#8b00ff"/>
<path d="M1374 384h7v7h-7z" fill="#9100ff"/>
<path d="M1380 384h7v7h-7z" fill="#9700ff"/>
<path d="M1386 384h7v7h-7z" fill="#9e00ff"/>
<path d="M1392 384h7v7h-7z" fill="#a400ff"/>
<path d="M1398 384h7v7h-7z" fill="#ab00ff"/>
<path d="M1404 384h7v7h-7z" fill="#b100ff"/>
<path d="M1410 384h7v7h-7z" fill="#b800ff"/>
<path d="M1416 384h7v7h-7z" fill="#be00ff"/>
<path d="M1422 384h7v7h-7z" fill="#c500ff"/>
<path d="M1428 384h7v7h-7z" fill="#cb00ff"/>
<path d="M1434 384h7v7h-7z" fill="#d200ff"/>
<path d="M1440 384h7v7h-7z" fill="#d900ff"/>
<path d="M1446 384h7v7h-7z" fill="#df00ff"/>
<path d="M1452 384h7v7h-7z" fill="#e600ff"/>
<path d="M1458 384h7v7h-7z" fill="#ed00ff"/>
<path d="M1464 384h7v7h-7z" fill="#f400ff"/>
<path d="M1470 384h7v7h-7z" fill="#fa00ff"/>
<path d="M1476 384h7v7h-7z" fill="#ff00fd"/>
<path d="M1482 384h7v7h-7z" fill="#ff00f6"/>
<path d="M1488 384h7v7h-7z" fill="#ff00f0"/>
<path d="M1494 384h7v7h-7z" fill="#ff00ea"/>
<path d="M1500 384h7v7h-7z" fill="#ff00e4"/>
<path d="M1506 384h7v7h-7z" fill="#ff00df"/>
<path d="M1512 384h7v7h-7z" fill="#ff00da"/>
<path d="M1158 390h7v7h-7z" fill="#0022ff"/>
<path d="M1164 390h7v7h-7z" fill="#0020ff"/>
<path d="M1170 390h7v7h-7z" fill="#001fff"/>
<path d="M1176 390h7v7h-7z" fill="#001dff"/>
<path d="M1182 390h7v7h-7z" fill="#001cff"/>
<path d="M1188 390h7v7h-7z" fill="#001aff"/>
<path d="M1194 390h7v7h-7z" fill="#0018ff"/>
<path d="M1200 390h7v7h-7z" fill="#0017ff"/>
<path d="M1206 390h7v7h-7z" fill="#0015ff"/>
<path d="M1212 390h7v7h-7z" fill="#0014ff"/>
<path d="M1218 390h7v7h-7z" fill="#0012ff"/>
<path d="M1224 390h7v7h-7z" fill="#0010ff"/>
<path d="M1230 390h7v7h-7z" fill="#000fff"/>
<path d="M1236 390h7v7h-7z" fill="#040dff"/>
<path d="M1242 390h7v7h-7z" fill="#0a0cff"/>
<path d="M1248 390h7v7h-7z" fill="#100aff"/>
<path d="M1254 390h7v7h-7z" fill="#1508ff"/>
<path d="M1260 390h7v7h-7z" fill="#1b07ff"/>
<path d="M1266 390h7v7h-7z" fill="#2105ff"/>
<path d="M1272 390h7v7h-7z" fill="#2704ff"/>
<path d="M1278 390h7v7h-7z" fill="#2d02ff"/>
<path d="M1284 390h7v7h-7z" fill="#3200ff"/>
<path d="M1290 390h7v7h-7z" fill="#3800ff"/>
<path d="M1296 390h7v7h-7z" fill="#3e00ff"/>
<path d="M1302 390h7v7h-7z" fill="#4400ff"/>
<path d="M1308 390h7v7h-7z" fill="#4a00ff"/>
<path d="M1314 390h7v7h-7z" fill="#5000ff"/>
<path d="M1320 390h7v7h-7z" fill="#5600ff"/>
<path d="M1326 390h7v7h-7z" fill="#5c00ff"/>
<path d="M1332 390h7v7h-7z" fill="#6200ff"/>
<path d="M1338 390h7v7h-7z" fill="#6800ff"/>
<path d="M1344 390h7v7h-7z" fill="#6e00ff"/>
<path d="M1350 390h7v7h-7z" fill="#7400ff"/>
<path d="M1356 390h7v7h-7z" fill="#7b00ff"/>
<path d="M1362 390h7v7h-7z" fill="#8100ff"/>
<path d="M1368 390h7v7h-7z" fill="#8700ff"/>
<path d="M1374 390h7v7h-7z" fill="#8d00ff"/>
<path d="M1380 390h7v7h-7z" fill="#9300ff"/>
<path d="M1386 390h7v7h-7z" fill="#9a00ff"/>
<path d="M1392 390h7v7h-7z" fill="#a000ff"/>
<path d="M1398 390h7v7h-7z" fill="#a600ff"/>
<path d="M1404 390h7v7h-7z" fill="#ad00ff"/>
<path d="M1410 390h7v7h-7z" fill="#b300ff"/>
<path d="M1416 390h7v7h-7z" fill="#b900ff"/>
<path d="M1422 390h7v7h-7z" fill="#c000ff"/>
<path d="M1428 390h7v7h-7z" fill="#c600ff"/>
<path d="M1434 390h7v7h-7z" fill="#cd00ff"/>
<path d="M1440 390h7v7h-7z" fill="#d300ff"/>
<path d="M1446 390h7v7h-7z" fill="#da00ff"/>
<path d="M1452 390h7v7h-7z" fill="#e000ff"/>
<path d="M1458 390h7v7h-7z" fill="#e700ff"/>
<path d="M1464 390h7v7h-7z" fill="#ed00ff"/>
<path d="M1470 390h7v7h-7z" fill="#f400ff"/>
<path d="M1476 390h7v7h-7z" fill="#fb00ff"/>
<path d="M1482 390h7v7h-7z" fill="#ff00fd"/>
<path d="M1488 390h7v7h-7z" fill="#ff00f6"/>
<path d="M1494 390h7v7h-7z" fill="#ff00f0"/>
<path d="M1500 390h7v7h-7z" fill="#ff00ea"/>
<path d="M1506 390h7v7h-7z" fill="#ff00e5"/>
<path d="M1158 396h7v7h-7z" fill="#0020ff"/>
<path d="M1164 396h7v7h-7z" fill="#001eff"/>
<path d="M1170 396h7v7h-7z" fill="#001dff"/>
<path d="M1176 396h7v7h-7z" fill="#001bff"/>
<path d="M1182 396h7v7h-7z" fill="#001aff"/>
<path d="M1188 396h7v7h-7z" fill="#0018ff"/>
<path d="M1194 396h7v7h-7z" fill="#0016ff"/>
<path d="M1200 396h7v7h-7z" fill="#0015ff"/>
<path d="M1206 396h7v7h-7z" fill="#0013ff"/>
<path d="M1212 396h7v7h-7z" fill="#0012ff"/>
<path d="M1218 396h7v7h-7z" fill="#0010ff"/>
<path d="M1224 396h7v7h-7z" fill="#000fff"/>
<path d="M1230 396h7v7h-7z" fill="#000dff"/>
<path d="M1236 396h7v7h-7z" fill="#030cff"/>
<path d="M1242 396h7v7h-7z" fill="#090aff"/>
<path d="M1248 396h7v7h-7z" fill="#0f08ff"/>
<path d="M1254 396h7v7h-7z" fill="#1407ff"/>
<path d="M1260 396h7v7h-7z" fill="#1a05ff"/>
<path d="M1266 396h7v7h-7z" fill="#2004ff"/>
<path d="M1272 396h7v7h-7z" fill="#2502ff"/>
<path d="M1278 396h7v7h-7z" fill="#2b00ff"/>
<path d="M1284 396h7v7h-7z" fill="#3100ff"/>
<path d="M1290 396h7v7h-7z" fill="#3600ff"/>
<path d="M1296 396h7v7h-7z" fill="#3c00ff"/>
<path d="M1302 396h7v7h-7z" fill="#4200ff"/>
<path d="M1308 396h7v7h-7z" fill="#4800ff"/>
<path d="M1314 396h7v7h-7z" fill="#4e00ff"/>
<path d="M1320 396h7v7h-7z" fill="#5400ff"/>
<path d="M1326 396h7v7h-7z" fill="#5900ff"/>
<path d="M1332 396h7v7h-7z" fill="#5f00ff"/>
<path d="M1338 396h7v7h-7z" fill="#6500ff"/>
<path d="M1344 396h7v7h-7z" fill="#6b00ff"/>
<path d="M1350 396h7v7h-7z" fill="#7100ff"/>
<path d="M1356 396h7v7h-7z" fill="#7700ff"/>
<path d="M1362 396h7v7h-7z" fill="#7d00ff"/>
<path d="M1368 396h7v7h-7z" fill="#8300ff"/>
<path d="M1374 396h7v7h-7z" fill="#8900ff"/>
<path d="M1380 396h7v7h-7z" fill="#9000ff"/>
<path d="M1386 396h7v7h-7z" fill="#9600ff"/>
<path d="M1392 396h7v7h-7z" fill="#9c00ff"/>
<path d="M1398 396h7v7h-7z" fill="#a200ff"/>
<path d="M1404 396h7v7h-7z" fill="#a800ff"/>
<path d="M1410 396h7v7h-7z" fill="#ae00ff"/>
<path d="M1416 396h7v7h-7z" fill="#b500ff"/>
<path d="M1422 396h7v7h-7z" fill="#bb00ff"/>
<path d="M1428 396h7v7h-7z" fill="#c100ff"/>
<path d="M1434 396h7v7h-7z" fill="#c800ff"/>
<path d="M1440 396h7v7h-7z" fill="#ce00ff"/>
<path d="M1446 396h7v7h-7z" fill="#d400ff"/>
<path d="M1452 396h7v7h-7z" fill="#db00ff"/>
<path d="M1458 396h7v7h-7z" fill="#e100ff"/>
<path d="M1464 396h7v7h-7z" fill="#e800ff"/>
<path d="M1470 396h7v7h-7z" fill="#ee00ff"/>
<path d="M1476 396h7v7h-7z" fill="#f500ff"/>
<path d="M1482 396h7v7h-7z" fill="#fb00ff"/>
<path d="M1488 396h7v7h-7z" fill="#ff00fc"/>
<path d="M1494 396h7v7h-7z" fill="#ff00f6"/>
<path d="M1500 396h7v7h-7z" fill="#ff00f0"/>
<path d="M1164 402h7v7h-7z" fill="#001cff"/>
<path d="M1170 402h7v7h-7z" fill="#001bff"/>
<path d="M1176 402h7v7h-7z" fill="#0019ff"/>
<path d="M1182 402h7v7h-7z" fill="#0018ff"/>
<path d="M1188 402h7v7h-7z" fill="#0016ff"/>
<path d="M1194 402h7v7h-7z" fill="#0015ff"/>
<path d="M1200 402h7v7h-7z" fill="#0013ff"/>
<path d="M1206 402h7v7h-7z" fill="#0012ff"/>
<path d="M1212 402h7v7h-7z" fill="#0010ff"/>
<path d="M1218 402h7v7h-7z" fill="#000fff"/>
<path d="M1224 402h7v7h-7z" fill="#000dff"/>
<path d="M1230 402h7v7h-7z" fill="#000bff"/>
<path d="M1236 402h7v7h-7z" fill="#020aff"/>
<path d="M1242 402h7v7h-7z" fill="#0808ff"/>
<path d="M1248 402h7v7h-7z" fill="#0d07ff"/>
<path d="M1254 402h7v7h-7z" fill="#1305ff"/>
<path d="M1260 402h7v7h-7z" fill="#1904ff"/>
<path d="M1266 402h7v7h-7z" fill="#1e02ff"/>
<path d="M1272 402h7v7h-7z" fill="#2400ff"/>
<path d="M1278 402h7v7h-7z" fill="#2900ff"/>
<path d="M1284 402h7v7h-7z" fill="#2f00ff"/>
<path d="M1290 402h7v7h-7z" fill="#3500ff"/>
<path d="M1296 402h7v7h-7z" fill="#3a00ff"/>
<path d="M1302 402h7v7h-7z" fill="#4000ff"/>
<path d="M1308 402h7v7h-7z" fill="#4600ff"/>
<path d="M1314 402h7v7h-7z" fill="#4b00ff"/>
<path d="M1320 402h7v7h-7z" fill="#5100ff"/>
<path d="M1326 402h7v7h-7z" fill="#5700ff"/>
<path d="M1332 402h7v7h-7z" fill="#5d00ff"/>
<path d="M1338 402h7v7h-7z" fill="#6200ff"/>
<path d="M1344 402h7v7h-7z" fill="#6800ff"/>
<path d="M1350 402h7v7h-7z" fill="#6e00ff"/>
<path d="M1356 402h7v7h-7z" fill="#7400ff"/>
<path d="M1362 402h7v7h-7z" fill="#7a00ff"/>
<path d="M1368 402h7v7h-7z" fill="#8000ff"/>
<path d="M1374 402h7v7h-7z" fill="#8600ff"/>
<path d="M1380 402h7v7h-7z" fill="#8c00ff"/>
<path d="M1386 402h7v7h-7z" fill="#9200ff"/>
<path d="M1392 402h7v7h-7z" fill="#9800ff"/>
<path d="M1398 402h7v7h-7z" fill="#9e00ff"/>
<path d="M1404 402h7v7h-7z" fill="#a400ff"/>
<path d="M1410 402h7v7h-7z" fill="#aa00ff"/>
<path d="M1416 402h7v7h-7z" fill="#b000ff"/>
<path d="M1422 402h7v7h-7z" fill="#b600ff"/>
<path d="M1428 402h7v7h-7z" fill="#bc00ff"/>
<path d="M1434 402h7v7h-7z" fill="#c300ff"/>
<path d="M1440 402h7v7h-7z" fill="#c900ff"/>
<path d="M1446 402h7v7h-7z" fill="#cf00ff"/>
<path d="M1452 402h7v7h-7z" fill="#d500ff"/>
<path d="M1458 402h7v7h-7z" fill="#dc00ff"/>
<path d="M1464 402h7v7h-7z" fill="#e200ff"/>
<path d="M1470 402h7v7h-7z" fill="#e800ff"/>
<path d="M1476 402h7v7h-7z" fill="#ef00ff"/>
<path d="M1482 402h7v7h-7z" fill="#f500ff"/>
<path d="M1488 402h7v7h-7z" fill="#fc00ff"/>
<path d="M1494 402h7v7h-7z" fill="#ff00fc"/>
<path d="M1164 408h7v7h-7z" fill="#001aff"/>
<path d="M1170 408h7v7h-7z" fill="#0019ff"/>
<path d="M1176 408h7v7h-7z" fill="#0017ff"/>
<path d="M1182 408h7v7h-7z" fill="#0016ff"/>
<path d="M1188 408h7v7h-7z" fill="#0014ff"/>
<path d="M1194 408h7v7h-7z" fill="#0013ff"/>
<path d="M1200 408h7v7h-7z" fill="#0011ff"/>
<path d="M1206 408h7v7h-7z" fill="#0010ff"/>
<path d="M1212 408h7v7h-7z" fill="#000eff"/>
<path d="M1218 408h7v7h-7z" fill="#000dff"/>
<path d="M1224 408h7v7h-7z" fill="#000bff"/>
<path d="M1230 408h7v7h-7z" fill="#000aff"/>
<path d="M1236 408h7v7h-7z" fill="#0208ff"/>
<path d="M1242 408h7v7h-7z" fill="#0707ff"/>
<path d="M1248 408h7v7h-7z" fill="#0c05ff"/>
<path d="M1254 408h7v7h-7z" fill="#1204ff"/>
<path d="M1260 408h7v7h-7z" fill="#1702ff"/>
<path d="M1266 408h7v7h-7z" fill="#1d01ff"/>
<path d="M1272 408h7v7h-7z" fill="#2200ff"/>
<path d="M1278 408h7v7h-7z" fill="#2800ff"/>
<path d="M1284 408h7v7h-7z" fill="#2d00ff"/>
<path d="M1290 408h7v7h-7z" fill="#3300ff"/>
<path d="M1296 408h7v7h-7z" fill="#3800ff"/>
<path d="M1302 408h7v7h-7z" fill="#3e00ff"/>
<path d="M1308 408h7v7h-7z" fill="#4300ff"/>
<path d="M1314 408h7v7h-7z" fill="#4900ff"/>
<path d="M1320 408h7v7h-7z" fill="#4f00ff"/>
<path d="M1326 408h7v7h-7z" fill="#5400ff"/>
<path d="M1332 408h7v7h-7z" fill="#5a00ff"/>
<path d="M1338 408h7v7h-7z" fill="#6000ff"/>
<path d="M1344 408h7v7h-7z" fill="#6500ff"/>
<path d="M1350 408h7v7h-7z" fill="#6b00ff"/>
<path d="M1356 408h7v7h-7z" fill="#7100ff"/>
<path d="M1362 408h7v7h-7z" fill="#7700ff"/>
<path d="M1368 408h7v7h-7z" fill="#7d00ff"/>
<path d="M1374 408h7v7h-7z" fill="#8200ff"/>
<path d="M1380 408h7v7h-7z" fill="#8800ff"/>
<path d="M1386 408h7v7h-7z" fill="#8e00ff"/>
<path d="M1392 408h7v7h-7z" fill="#9400ff"/>
<path d="M1398 408h7v7h-7z" fill="#9a00ff"/>
<path d="M1404 408h7v7h-7z" fill="#a000ff"/>
<path d="M1410 408h7v7h-7z" fill="#a600ff"/>
<path d="M1416 408h7v7h-7z" fill="#ac00ff"/>
<path d="M1422 408h7v7h-7z" fill="#b200ff"/>
<path d="M1428 408h7v7h-7z" fill="#b800ff"/>
<path d="M1434 408h7v7h-7z" fill="#be00ff"/>
<path d="M1440 408h7v7h-7z" fill="#c400ff"/>
<path d="M1446 408h7v7h-7z" fill="#ca00ff"/>
<path d="M1452 408h7v7h-7z" fill="#d000ff"/>
<path d="M1458 408h7v7h-7z" fill="#d600ff"/>
<path d="M1464 408h7v7h-7z" fill="#dd00ff"/>
<path d="M1470 408h7v7h-7z" fill="#e300ff"/>
<path d="M1476 408h7v7h-7z" fill="#e900ff"/>
<path d="M1482 408h7v7h-7z" fill="#ef00ff"/>
<path d="M1488 408h7v7h-7z" fill="#f600ff"/>
<path d="M1170 414h7v7h-7z" fill="#0017ff"/>
<path d="M1176 414h7v7h-7z" fill="#0015ff"/>
<path d="M1182 414h7v7h-7z" fill="#0014ff"/>
<path d="M1188 414h7v7h-7z" fill="#0013ff"/>
<path d="M1194 414h7v7h-7z" fill="#0011ff"/>
<path d="M1200 414h7v7h-7z" fill="#0010ff"/>
<path d="M1206 414h7v7h-7z" fill="#000eff"/>
<path d="M1212 414h7v7h-7z" fill="#000dff"/>
<path d="M1218 414h7v7h-7z" fill="#000bff"/>
<path d="M1224 414h7v7h-7z" fill="#000aff"/>
<path d="M1230 414h7v7h-7z" fill="#0008ff"/>
<path d="M1236 414h7v7h-7z" fill="#0107ff"/>
<path d="M1242 414h7v7h-7z" fill="#0605ff"/>
<path d="M1248 414h7v7h-7z" fill="#0b04ff"/>
<path d="M1254 414h7v7h-7z" fill="#1102ff"/>
<path d="M1260 414h7v7h-7z" fill="#1601ff"/>
<path d="M1266 414h7v7h-7z" fill="#1b00ff"/>
<path d="M1272 414h7v7h-7z" fill="#2100ff"/>
<path d="M1278 414h7v7h-7z" fill="#2600ff"/>
<path d="M1284 414h7v7h-7z" fill="#2b00ff"/>
<path d="M1290 414h7v7h-7z" fill="#3100ff"/>
<path d="M1296 414h7v7h-7z" fill="#3600ff"/>
<path d="M1302 414h7v7h-7z" fill="#3c00ff"/>
<path d="M1308 414h7v7h-7z" fill="#4100ff"/>
<path d="M1314 414h7v7h-7z" fill="#4700ff"/>
<path d="M1320 414h7v7h-7z" fill="#4c00ff"/>
<path d="M1326 414h7v7h-7z" fill="#5200ff"/>
<path d="M1332 414h7v7h-7z" fill="#5700ff"/>
<path d="M1338 414h7v7h-7z" fill="#5d00ff"/>
<path d="M1344 414h7v7h-7z" fill="#6300ff"/>
<path d="M1350 414h7v7h-7z" fill="#6800ff"/>
<path d="M1356 414h7v7h-7z" fill="#6e00ff"/>
<path d="M1362 414h7v7h-7z" fill="#7400ff"/>
<path d="M1368 414h7v7h-7z" fill="#7900ff"/>
<path d="M1374 414h7v7h-7z" fill="#7f00ff"/>
<path d="M1380 414h7v7h-7z" fill="#8500ff"/>
<path d="M1386 414h7v7h-7z" fill="#8b00ff"/>
<path d="M1392 414h7v7h-7z" fill="#9000ff"/>
<path d="M1398 414h7v7h-7z" fill="#9600ff"/>
<path d="M1404 414h7v7h-7z" fill="#9c00ff"/>
<path d="M1410 414h7v7h-7z" fill="#a200ff"/>
<path d="M1416 414h7v7h-7z" fill="#a800ff"/>
<path d="M1422 414h7v7h-7z" fill="#ae00ff"/>
<path d="M1428 414h7v7h-7z" fill="#b300ff"/>
<path d="M1434 414h7v7h-7z" fill="#b900ff"/>
<path d="M1440 414h7v7h-7z" fill="#bf00ff"/>
<path d="M1446 414h7v7h-7z" fill="#c500ff"/>
<path d="M1452 414h7v7h-7z" fill="#cb00ff"/>
<path d="M1458 414h7v7h-7z" fill="#d100ff"/>
<path d="M1464 414h7v7h-7z" fill="#d700ff"/>
<path d="M1470 414h7v7h-7z" fill="#de00ff"/>
<path d="M1476 414h7v7h-7z" fill="#e400ff"/>
<path d="M1482 414h7v7h-7z" fill="#ea00ff"/>
<path d="M1176 420h7v7h-7z" fill="#0014ff"/>
<path d="M1182 420h7v7h-7z" fill="#0012ff"/>
<path d="M1188 420h7v7h-7z" fill="#0011ff"/>
<path d="M1194 420h7v7h-7z" fill="#000fff"/>
<path d="M1200 420h7v7h-7z" fill="#000eff"/>
<path d="M1206 420h7v7h-7z" fill="#000dff"/>
<path d="M1212 420h7v7h-7z" fill="#000bff"/>
<path d="M1218 420h7v7h-7z" fill="#000aff"/>
<path d="M1224 420h7v7h-7z" fill="#0008ff"/>
<path d="M1230 420h7v7h-7z" fill="#0007ff"/>
<path d="M1236 420h7v7h-7z" fill="#0005ff"/>
<path d="M1242 420h7v7h-7z" fill="#0504ff"/>
<path d="M1248 420h7v7h-7z" fill="#0a02ff"/>
<path d="M1254 420h7v7h-7z" fill="#1001ff"/>
<path d="M1260 420h7v7h-7z" fill="#1500ff"/>
<path d="M1266 420h7v7h-7z" fill="#1a00ff"/>
<path d="M1272 420h7v7h-7z" fill="#1f00ff"/>
<path d="M1278 420h7v7h-7z" fill="#2500ff"/>
<path d="M1284 420h7v7h-7z" fill="#2a00ff"/>
<path d="M1290 420h7v7h-7z" fill="#2f00ff"/>
<path d="M1296 420h7v7h-7z" fill="#3500ff"/>
<path d="M1302 420h7v7h-7z" fill="#3a00ff"/>
<path d="M1308 420h7v7h-7z" fill="#3f00ff"/>
<path d="M1314 420h7v7h-7z" fill="#4500ff"/>
<path d="M1320 420h7v7h-7z" fill="#4a00ff"/>
<path d="M1326 420h7v7h-7z" fill="#5000ff"/>
<path d="M1332 420h7v7h-7z" fill="#5500ff"/>
<path d="M1338 420h7v7h-7z" fill="#5b00ff"/>
<path d="M1344 420h7v7h-7z" fill="#6000ff"/>
<path d="M1350 420h7v7h-7z" fill="#6600ff"/>
<path d="M1356 420h7v7h-7z" fill="#6b00ff"/>
<path d="M1362 420h7v7h-7z" fill="#7100ff"/>
<path d="M1368 420h7v7h-7z" fill="#7600ff"/>
<path d="M1374 420h7v7h-7z" fill="#7c00ff"/>
<path d="M1380 420h7v7h-7z" fill="#8100ff"/>
<path d="M1386 420h7v7h-7z" fill="#8700ff"/>
<path d="M1392 420h7v7h-7z" fill="#8d00ff"/>
<path d="M1398 420h7v7h-7z" fill="#9200ff"/>
<path d="M1404 420h7v7h-7z" fill="#9800ff"/>
<path d="M1410 420h7v7h-7z" fill="#9e00ff"/>
<path d="M1416 420h7v7h-7z" fill="#a400ff"/>
<path d="M1422 420h7v7h-7z" fill="#a900ff"/>
<path d="M1428 420h7v7h-7z" fill="#af00ff"/>
<path d="M1434 420h7v7h-7z" fill="#b500ff"/>
<path d="M1440 420h7v7h-7z" fill="#bb00ff"/>
<path d="M1446 420h7v7h-7z" fill="#c100ff"/>
<path d="M1452 420h7v7h-7z" fill="#c700ff"/>
<path d="M1458 420h7v7h-7z" fill="#cd00ff"/>
<path d="M1464 420h7v7h-7z" fill="#d200ff"/>
<path d="M1470 420h7v7h-7z" fill="#d800ff"/>
<path d="M1476 420h7v7h-7z" fill="#de00ff"/>
<path d="M1176 426h7v7h-7z" fill="#0012ff"/>
<path d="M1182 426h7v7h-7z" fill="#0011ff"/>
<path d="M1188 426h7v7h-7z" fill="#000fff"/>
<path d="M1194 426h7v7h-7z" fill="#000eff"/>
<path d="M1200 426h7v7h-7z" fill="#000cff"/>
<path d="M1206 426h7v7h-7z" fill="#000bff"/>
<path d="M1212 426h7v7h-7z" fill="#000aff"/>
<path d="M1218 426h7v7h-7z" fill="#0008ff"/>
<path d="M1224 426h7v7h-7z" fill="#0007ff"/>
<path d="M1230 426h7v7h-7z" fill="#0005ff"/>
<path d="M1236 426h7v7h-7z" fill="#0004ff"/>
<path d="M1242 426h7v7h-7z" fill="#0402ff"/>
<path d="M1248 426h7v7h-7z" fill="#0901ff"/>
<path d="M1254 426h7v7h-7z" fill="#0e00ff"/>
<path d="M1260 426h7v7h-7z" fill="#1400ff"/>
<path d="M1266 426h7v7h-7z" fill="#1900ff"/>
<path d="M1272 426h7v7h-7z" fill="#1e00ff"/>
<path d="M1278 426h7v7h-7z" fill="#2300ff"/>
<path d="M1284 426h7v7h-7z" fill="#2800ff"/>
<path d="M1290 426h7v7h-7z" fill="#2e00ff"/>
<path d="M1296 426h7v7h-7z" fill="#3300ff"/>
<path d="M1302 426h7v7h-7z" fill="#3800ff"/>
<path d="M1308 426h7v7h-7z" fill="#3d00ff"/>
<path d="M1314 426h7v7h-7z" fill="#4300ff"/>
<path d="M1320 426h7v7h-7z" fill="#4800ff"/>
<path d="M1326 426h7v7h-7z" fill="#4d00ff"/>
<path d="M1332 426h7v7h-7z" fill="#5300ff"/>
<path d="M1338 426h7v7h-7z" fill="#5800ff"/>
<path d="M1344 426h7v7h-7z" fill="#5e00ff"/>
<path d="M1350 426h7v7h-7z" fill="#6300ff"/>
<path d="M1356 426h7v7h-7z" fill="#6800ff"/>
<path d="M1362 426h7v7h-7z" fill="#6e00ff"/>
<path d="M1368 426h7v7h-7z" fill="#7300ff"/>
<path d="M1374 426h7v7h-7z" fill="#7900ff"/>
<path d="M1380 426h7v7h-7z" fill="#7e00ff"/>
<path d="M1386 426h7v7h-7z" fill="#8400ff"/>
<path d="M1392 426h7v7h-7z" fill="#8900ff"/>
<path d="M1398 426h7v7h-7z" fill="#8f00ff"/>
<path d="M1404 426h7v7h-7z" fill="#9500ff"/>
<path d="M1410 426h7v7h-7z" fill="#9a00ff"/>
<path d="M1416 426h7v7h-7z" fill="#a000ff"/>
<path d="M1422 426h7v7h-7z" fill="#a500ff"/>
<path d="M1428 426h7v7h-7z" fill="#ab00ff"/>
<path d="M1434 426h7v7h-7z" fill="#b100ff"/>
<path d="M1440 426h7v7h-7z" fill="#b700ff"/>
<path d="M1446 426h7v7h-7z" fill="#bc00ff"/>
<path d="M1452 426h7v7h-7z" fill="#c200ff"/>
<path d="M1458 426h7v7h-7z" fill="#c800ff"/>
<path d="M1464 426h7v7h-7z" fill="#ce00ff"/>
<path d="M1470 426h7v7h-7z" fill="#d400ff"/>
<path d="M1182 432h7v7h-7z" fill="#000fff"/>
<path d="M1188 432h7v7h-7z" fill="#000eff"/>
<path d="M1194 432h7v7h-7z" fill="#000cff"/>
<path d="M1200 432h7v7h-7z" fill="#000bff"/>
<path d="M1206 432h7v7h-7z" fill="#0009ff"/>
<path d="M1212 432h7v7h-7z" fill="#0008ff"/>
<path d="M1218 432h7v7h-7z" fill="#0007ff"/>
<path d="M1224 432h7v7h-7z" fill="#0005ff"/>
<path d="M1230 432h7v7h-7z" fill="#0004ff"/>
<path d="M1236 432h7v7h-7z" fill="#0002ff"/>
<path d="M1242 432h7v7h-7z" fill="#0301ff"/>
<path d="M1248 432h7v7h-7z" fill="#0800ff"/>
<path d="M1254 432h7v7h-7z" fill="#0d00ff"/>
<path d="M1260 432h7v7h-7z" fill="#1300ff"/>
<path d="M1266 432h7v7h-7z" fill="#1800ff"/>
<path d="M1272 432h7v7h-7z" fill="#1d00ff"/>
<path d="M1278 432h7v7h-7z" fill="#2200ff"/>
<path d="M1284 432h7v7h-7z" fill="#2700ff"/>
<path d="M1290 432h7v7h-7z" fill="#2c00ff"/>
<path d="M1296 432h7v7h-7z" fill="#3100ff"/>
<path d="M1302 432h7v7h-7z" fill="#3600ff"/>
<path d="M1308 432h7v7h-7z" fill="#3c00ff"/>
<path d="M1314 432h7v7h-7z" fill="#4100ff"/>
<path d="M1320 432h7v7h-7z" fill="#4600ff"/>
<path d="M1326 432h7v7h-7z" fill="#4b00ff"/>
<path d="M1332 432h7v7h-7z" fill="#5000ff"/>
<path d="M1338 432h7v7h-7z" fill="#5600ff"/>
<path d="M1344 432h7v7h-7z" fill="#5b00ff"/>
<path d="M1350 432h7v7h-7z" fill="#6000ff"/>
<path d="M1356 432h7v7h-7z" fill="#6600ff"/>
<path d="M1362 432h7v7h-7z" fill="#6b00ff"/>
<path d="M1368 432h7v7h-7z" fill="#7000ff"/>
<path d="M1374 432h7v7h-7z" fill="#7600ff"/>
<path d="M1380 432h7v7h-7z" fill="#7b00ff"/>
<path d="M1386 432h7v7h-7z" fill="#8100ff"/>
<path d="M1392 432h7v7h-7z" fill="#8600ff"/>
<path d="M1398 432h7v7h-7z" fill="#8c00ff"/>
<path d="M1404 432h7v7h-7z" fill="#9100ff"/>
<path d="M1410 432h7v7h-7z" fill="#9700ff"/>
<path d="M1416 432h7v7h-7z" fill="#9c00ff"/>
<path d="M1422 432h7v7h-7z" fill="#a200ff"/>
<path d="M1428 432h7v7h-7z" fill="#a700ff"/>
<path d="M1434 432h7v7h-7z" fill="#ad00ff"/>
<path d="M1440 432h7v7h-7z" fill="#b200ff"/>
<path d="M1446 432h7v7h-7z" fill="#b800ff"/>
<path d="M1452 432h7v7h-7z" fill="#be00ff"/>
<path d="M1458 432h7v7h-7z" fill="#c300ff"/>
<path d="M1464 432h7v7h-7z" fill="#c900ff"/>
<path d="M1188 438h7v7h-7z" fill="#000cff"/>
<path d="M1194 438h7v7h-7z" fill="#000bff"/>
<path d="M1200 438h7v7h-7z" fill="#0009ff"/>
<path d="M1206 438h7v7h-7z" fill="#0008ff"/>
<path d="M1212 438h7v7h-7z" fill="#0007ff"/>
<path d="M1218 438h7v7h-7z" fill="#0005ff"/>
<path d="M1224 438h7v7h-7z" fill="#0004ff"/>
<path d="M1230 438h7v7h-7z" fill="#0002ff"/>
<path d="M1236 438h7v7h-7z" fill="#0001ff"/>
<path d="M1242 438h7v7h-7z" fill="#0300ff"/>
<path d="M1248 438h7v7h-7z" fill="#0800ff"/>
<path d="M1254 438h7v7h-7z" fill="#0c00ff"/>
<path d="M1260 438h7v7h-7z" fill="#1100ff"/>
<path d="M1266 438h7v7h-7z" fill="#1600ff"/>
<path d="M1272 438h7v7h-7z" fill="#1b00ff"/>
<path d="M1278 438h7v7h-7z" fill="#2000ff"/>
<path d="M1284 438h7v7h-7z" fill="#2500ff"/>
<path d="M1290 438h7v7h-7z" fill="#2b00ff"/>
<path d="M1296 438h7v7h-7z" fill="#3000ff"/>
<path d="M1302 438h7v7h-7z" fill="#3500ff"/>
<path d="M1308 438h7v7h-7z" fill="#3a00ff"/>
<path d="M1314 438h7v7h-7z" fill="#3f00ff"/>
<path d="M1320 438h7v7h-7z" fill="#4400ff"/>
<path d="M1326 438h7v7h-7z" fill="#4900ff"/>
<path d="M1332 438h7v7h-7z" fill="#4e00ff"/>
<path d="M1338 438h7v7h-7z" fill="#5300ff"/>
<path d="M1344 438h7v7h-7z" fill="#5900ff"/>
<path d="M1350 438h7v7h-7z" fill="#5e00ff"/>
<path d="M1356 438h7v7h-7z" fill="#6300ff"/>
<path d="M1362 438h7v7h-7z" fill="#6800ff"/>
<path d="M1368 438h7v7h-7z" fill="#6e00ff"/>
<path d="M1374 438h7v7h-7z" fill="#7300ff"/>
<path d="M1380 438h7v7h-7z" fill="#7800ff"/>
<path d="M1386 438h7v7h-7z" fill="#7e00ff"/>
<path d="M1392 438h7v7h-7z" fill="#8300ff"/>
<path d="M1398 438h7v7h-7z" fill="#8800ff"/>
<path d="M1404 438h7v7h-7z" fill="#8e00ff"/>
<path d="M1410 438h7v7h-7z" fill="#9300ff"/>
<path d="M1416 438h7v7h-7z" fill="#9900ff"/>
<path d="M1422 438h7v7h-7z" fill="#9e00ff"/>
<path d="M1428 438h7v7h-7z" fill="#a300ff"/>
<path d="M1434 438h7v7h-7z" fill="#a900ff"/>
<path d="M1440 438h7v7h-7z" fill="#ae00ff"/>
<path d="M1446 438h7v7h-7z" fill="#b400ff"/>
<path d="M1452 438h7v7h-7z" fill="#ba00ff"/>
<path d="M1458 438h7v7h-7z" fill="#bf00ff"/>
<path d="M1464 438h7v7h-7z" fill="#c500ff"/>
<path d="M1188 444h7v7h-7z" fill="#000bff"/>
<path d="M1194 444h7v7h-7z" fill="#0009ff"/>
<path d="M1200 444h7v7h-7z" fill="#0008ff"/>
<path d="M1206 444h7v7h-7z" fill="#0007ff"/>
<path d="M1212 444h7v7h-7z" fill="#0005ff"/>
<path d="M1218 444h7v7h-7z" fill="#0004ff"/>
<path d="M1224 444h7v7h-7z" fill="#0002ff"/>
<path d="M1230 444h7v7h-7z" fill="#0001ff"/>
<path d="M1236 444h7v7h-7z" fill="#0000ff"/>
<path d="M1242 444h7v7h-7z" fill="#0200ff"/>
<path d="M1248 444h7v7h-7z" fill="#0700ff"/>
<path d="M1254 444h7v7h-7z" fill="#0c00ff"/>
<path d="M1260 444h7v7h-7z" fill="#1000ff"/>
<path d="M1266 444h7v7h-7z" fill="#1500ff"/>
<path d="M1272 444h7v7h-7z" fill="#1a00ff"/>
<path d="M1278 444h7v7h-7z" fill="#1f00ff"/>
<path d="M1284 444h7v7h-7z" fill="#2400ff"/>
<path d="M1290 444h7v7h-7z" fill="#2900ff"/>
<path d="M1296 444h7v7h-7z" fill="#2e00ff"/>
<path d="M1302 444h7v7h-7z" fill="#3300ff"/>
<path d="M1308 444h7v7h-7z" fill="#3800ff"/>
<path d="M1314 444h7v7h-7z" fill="#3d00ff"/>
<path d="M1320 444h7v7h-7z" fill="#4200ff"/>
<path d="M1326 444h7v7h-7z" fill="#4700ff"/>
<path d="M1332 444h7v7h-7z" fill="#4c00ff"/>
<path d="M1338 444h7v7h-7z" fill="#5100ff"/>
<path d="M1344 444h7v7h-7z" fill="#5600ff"/>
<path d="M1350 444h7v7h-7z" fill="#5c00ff"/>
<path d="M1356 444h7v7h-7z" fill="#6100ff"/>
<path d="M1362 444h7v7h-7z" fill="#6600ff"/>
<path d="M1368 444h7v7h-7z" fill="#6b00ff"/>
<path d="M1374 444h7v7h-7z" fill="#7000ff"/>
<path d="M1380 444h7v7h-7z" fill="#7500ff"/>
<path d="M1386 444h7v7h-7z" fill="#7b00ff"/>
<path d="M1392 444h7v7h-7z" fill="#8000ff"/>
<path d="M1398 444h7v7h-7z" fill="#8500ff"/>
<path d="M1404 444h7v7h-7z" fill="#8a00ff"/>
<path d="M1410 444h7v7h-7z" fill="#9000ff"/>
<path d="M1416 444h7v7h-7z" fill="#9500ff"/>
<path d="M1422 444h7v7h-7z" fill="#9a00ff"/>
<path d="M1428 444h7v7h-7z" fill="#a000ff"/>
<path d="M1434 444h7v7h-7z" fill="#a500ff"/>
<path d="M1440 444h7v7h-7z" fill="#ab00ff"/>
<path d="M1446 444h7v7h-7z" fill="#b000ff"/>
<path d="M1452 444h7v7h-7z" fill="#b500ff"/>
<path d="M1458 444h7v7h-7z" fill="#bb00ff"/>
<path d="M1194 450h7v7h-7z" fill="#0008ff"/>
<path d="M1200 450h7v7h-7z" fill="#0007ff"/>
<path d="M1206 450h7v7h-7z" fill="#0005ff"/>
<path d="M1212 450h7v7h-7z" fill="#0004ff"/>
<path d="M1218 450h7v7h-7z" fill="#0003ff"/>
<path d="M1224 450h7v7h-7z" fill="#0001ff"/>
<path d="M1230 450h13v7h-13z" fill="#0000ff"/>
<path d="M1242 450h7v7h-7z" fill="#0100ff"/>
<path d="M1248 450h7v7h-7z" fill="#0600ff"/>
<path d="M1254 450h7v7h-7z" fill="#0b00ff"/>
<path d="M1260 450h7v7h-7z" fill="#0f00ff"/>
<path d="M1266 450h7v7h-7z" fill="#1400ff"/>
<path d="M1272 450h7v7h-7z" fill="#1900ff"/>
<path d="M1278 450h7v7h-7z" fill="#1e00ff"/>
<path d="M1284 450h7v7h-7z" fill="#2300ff"/>
<path d="M1290 450h7v7h-7z" fill="#2800ff"/>
<path d="M1296 450h7v7h-7z" fill="#2d00ff"/>
<path d="M1302 450h7v7h-7z" fill="#3100ff"/>
<path d="M1308 450h7v7h-7z" fill="#3600ff"/>
<path d="M1314 450h7v7h-7z" fill="#3b00ff"/>
<path d="M1320 450h7v7h-7z" fill="#4000ff"/>
<path d="M1326 450h7v7h-7z" fill="#4500ff"/>
<path d="M1332 450h7v7h-7z" fill="#4a00ff"/>
<path d="M1338 450h7v7h-7z" fill="#4f00ff"/>
<path d="M1344 450h7v7h-7z" fill="#5400ff"/>
<path d="M1350 450h7v7h-7z" fill="#5900ff"/>
<path d="M1356 450h7v7h-7z" fill="#5e00ff"/>
<path d="M1362 450h7v7h-7z" fill="#6300ff"/>
<path d="M1368 450h7v7h-7z" fill="#6800ff"/>
<path d="M1374 450h7v7h-7z" fill="#6e00ff"/>
<path d="M1380 450h7v7h-7z" fill="#7300ff"/>
<path d="M1386 450h7v7h-7z" fill="#7800ff"/>
<path d="M1392 450h7v7h-7z" fill="#7d00ff"/>
<path d="M1398 450h7v7h-7z" fill="#8200ff"/>
<path d="M1404 450h7v7h-7z" fill="#8700ff"/>
<path d="M1410 450h7v7h-7z" fill="#8d00ff"/>
<path d="M1416 450h7v7h-7z" fill="#9200ff"/>
<path d="M1422 450h7v7h-7z" fill="#9700ff"/>
<path d="M1428 450h7v7h-7z" fill="#9c00ff"/>
<path d="M1434 450h7v7h-7z" fill="#a200ff"/>
<path d="M1440 450h7v7h-7z" fill="#a700ff"/>
<path d="M1446 450h7v7h-7z" fill="#ac00ff"/>
<path d="M1452 450h7v7h-7z" fill="#b200ff"/>
<path d="M1200 456h7v7h-7z" fill="#0005ff"/>
<path d="M1206 456h7v7h-7z" fill="#0004ff"/>
<path d="M1212 456h7v7h-7z" fill="#0003ff"/>
<path d="M1218 456h7v7h-7z" fill="#0001ff"/>
<path d="M1224 456h25v7h-25z" fill="#0000ff"/>
<path d="M1248 456h7v7h-7z" fill="#0500ff"/>
<path d="M1254 456h7v7h-7z" fill="#0a00ff"/>
<path d="M1260 456h7v7h-7z" fill="#0e00ff"/>
<path d="M1266 456h7v7h-7z" fill="#1300ff"/>
<path d="M1272 456h7v7h-7z" fill="#1800ff"/>
<path d="M1278 456h7v7h-7z" fill="#1d00ff"/>
<path d="M1284 456h7v7h-7z" fill="#2100ff"/>
<path d="M1290 456h7v7h-7z" fill="#2600ff"/>
<path d="M1296 456h7v7h-7z" fill="#2b00ff"/>
<path d="M1302 456h7v7h-7z" fill="#3000ff"/>
<path d="M1308 456h7v7h-7z" fill="#3500ff"/>
<path d="M1314 456h7v7h-7z" fill="#3a00ff"/>
<path d="M1320 456h7v7h-7z" fill="#3e00ff"/>
<path d="M1326 456h7v7h-7z" fill="#4300ff"/>
<path d="M1332 456h7v7h-7z" fill="#4800ff"/>
<path d="M1338 456h7v7h-7z" fill="#4d00ff"/>
<path d="M1344 456h7v7h-7z" fill="#5200ff"/>
<path d="M1350 456h7v7h-7z" fill="#5700ff"/>
<path d="M1356 456h7v7h-7z" fill="#5c00ff"/>
<path d="M1362 456h7v7h-7z" fill="#6100ff"/>
<path d="M1368 456h7v7h-7z" fill="#6600ff"/>
<path d="M1374 456h7v7h-7z" fill="#6b00ff"/>
<path d="M1380 456h7v7h-7z" fill="#7000ff"/>
<path d="M1386 456h7v7h-7z" fill="#7500ff"/>
<path d="M1392 456h7v7h-7z" fill="#7a00ff"/>
<path d="M1398 456h7v7h-7z" fill="#7f00ff"/>
<path d="M1404 456h7v7h-7z" fill="#8400ff"/>
<path d="M1410 456h7v7h-7z" fill="#8900ff"/>
<path d="M1416 456h7v7h-7z" fill="#8f00ff"/>
<path d="M1422 456h7v7h-7z" fill="#9400ff"/>
<path d="M1428 456h7v7h-7z" fill="#9900ff"/>
<path d="M1434 456h7v7h-7z" fill="#9e00ff"/>
<path d="M1440 456h7v7h-7z" fill="#a300ff"/>
<path d="M1446 456h7v7h-7z" fill="#a800ff"/>
<path d="M1206 462h7v7h-7z" fill="#0003ff"/>
<path d="M1212 462h7v7h-7z" fill="#0001ff"/>
<path d="M1218 462h31v7h-31z" fill="#0000ff"/>
<path d="M1248 462h7v7h-7z" fill="#0400ff"/>
<path d="M1254 462h7v7h-7z" fill="#0900ff"/>
<path d="M1260 462h7v7h-7z" fill="#0e00ff"/>
<path d="M1266 462h7v7h-7z" fill="#1200ff"/>
<path d="M1272 462h7v7h-7z" fill="#1700ff"/>
<path d="M1278 462h7v7h-7z" fill="#1c00ff"/>
<path d="M1284 462h7v7h-7z" fill="#2000ff"/>
<path d="M1290 462h7v7h-7z" fill="#2500ff"/>
<path d="M1296 462h7v7h-7z" fill="#2a00ff"/>
<path d="M1302 462h7v7h-7z" fill="#2e00ff"/>
<path d="M1308 462h7v7h-7z" fill="#3300ff"/>
<path d="M1314 462h7v7h-7z" fill="#3800ff"/>
<path d="M1320 462h7v7h-7z" fill="#3d00ff"/>
<path d="M1326 462h7v7h-7z" fill="#4100ff"/>
<path d="M1332 462h7v7h-7z" fill="#4600ff"/>
<path d="M1338 462h7v7h-7z" fill="#4b00ff"/>
<path d="M1344 462h7v7h-7z" fill="#5000ff"/>
<path d="M1350 462h7v7h-7z" fill="#5500ff"/>
<path d="M1356 462h7v7h-7z" fill="#5a00ff"/>
<path d="M1362 462h7v7h-7z" fill="#5f00ff"/>
<path d="M1368 462h7v7h-7z" fill="#6400ff"/>
<path d="M1374 462h7v7h-7z" fill="#6800ff"/>
<path d="M1380 462h7v7h-7z" fill="#6d00ff"/>
<path d="M1386 462h7v7h-7z" fill="#7200ff"/>
<path d="M1392 462h7v7h-7z" fill="#7700ff"/>
<path d="M1398 462h7v7h-7z" fill="#7c00ff"/>
<path d="M1404 462h7v7h-7z" fill="#8100ff"/>
<path d="M1410 462h7v7h-7z" fill="#8600ff"/>
<path d="M1416 462h7v7h-7z" fill="#8b00ff"/>
<path d="M1422 462h7v7h-7z" fill="#9000ff"/>
<path d="M1428 462h7v7h-7z" fill="#9600ff"/>
<path d="M1434 462h7v7h-7z" fill="#9b00ff"/>
<path d="M1440 462h7v7h-7z" fill="#a000ff"/>
<path d="M1206 468h7v7h-7z" fill="#0001ff"/>
<path d="M1212 468h37v7h-37z" fill="#0000ff"/>
<path d="M1248 468h7v7h-7z" fill="#0300ff"/>
<path d="M1254 468h7v7h-7z" fill="#0800ff"/>
<path d="M1260 468h7v7h-7z" fill="#0d00ff"/>
<path d="M1266 468h7v7h-7z" fill="#1100ff"/>
<path d="M1272 468h7v7h-7z" fill="#1600ff"/>
<path d="M1278 468h7v7h-7z" fill="#1a00ff"/>
<path d="M1284 468h7v7h-7z" fill="#1f00ff"/>
<path d="M1290 468h7v7h-7z" fill="#2400ff"/>
<path d="M1296 468h7v7h-7z" fill="#2800ff"/>
<path d="M1302 468h7v7h-7z" fill="#2d00ff"/>
<path d="M1308 468h7v7h-7z" fill="#3200ff"/>
<path d="M1314 468h7v7h-7z" fill="#3600ff"/>
<path d="M1320 468h7v7h-7z" fill="#3b00ff"/>
<path d="M1326 468h7v7h-7z" fill="#4000ff"/>
<path d="M1332 468h7v7h-7z" fill="#4400ff"/>
<path d="M1338 468h7v7h-7z" fill="#4900ff"/>
<path d="M1344 468h7v7h-7z" fill="#4e00ff"/>
<path d="M1350 468h7v7h-7z" fill="#5300ff"/>
<path d="M1356 468h7v7h-7z" fill="#5800ff"/>
<path d="M1362 468h7v7h-7z" fill="#5c00ff"/>
<path d="M1368 468h7v7h-7z" fill="#6100ff"/>
<path d="M1374 468h7v7h-7z" fill="#6600ff"/>
<path d="M1380 468h7v7h-7z" fill="#6b00ff"/>
<path d="M1386 468h7v7h-7z" fill="#7000ff"/>
<path d="M1392 468h7v7h-7z" fill="#7500ff"/>
<path d="M1398 468h7v7h-7z" fill="#7a00ff"/>
<path d="M1404 468h7v7h-7z" fill="#7f00ff"/>
<path d="M1410 468h7v7h-7z" fill="#8300ff"/>
<path d="M1416 468h7v7h-7z" fill="#8800ff"/>
<path d="M1422 468h7v7h-7z" fill="#8d00ff"/>
<path d="M1428 468h7v7h-7z" fill="#9200ff"/>
<path d="M1434 468h7v7h-7z" fill="#9700ff"/>
<path d="M1212 474h37v7h-37z" fill="#0000ff"/>
<path d="M1248 474h7v7h-7z" fill="#0300ff"/>
<path d="M1254 474h7v7h-7z" fill="#0700ff"/>
<path d="M1260 474h7v7h-7z" fill="#0c00ff"/>
<path d="M1266 474h7v7h-7z" fill="#1000ff"/>
<path d="M1272 474h7v7h-7z" fill="#1500ff"/>
<path d="M1278 474h7v7h-7z" fill="#1900ff"/>
<path d="M1284 474h7v7h-7z" fill="#1e00ff"/>
<path d="M1290 474h7v7h-7z" fill="#2200ff"/>
<path d="M1296 474h7v7h-7z" fill="#2700ff"/>
<path d="M1302 474h7v7h-7z" fill="#2c00ff"/>
<path d="M1308 474h7v7h-7z" fill="#3000ff"/>
<path d="M1314 474h7v7h-7z" fill="#3500ff"/>
<path d="M1320 474h7v7h-7z" fill="#3900ff"/>
<path d="M1326 474h7v7h-7z" fill="#3e00ff"/>
<path d="M1332 474h7v7h-7z" fill="#4300ff"/>
<path d="M1338 474h7v7h-7z" fill="#4700ff"/>
<path d="M1344 474h7v7h-7z" fill="#4c00ff"/>
<path d="M1350 474h7v7h-7z" fill="#5100ff"/>
<path d="M1356 474h7v7h-7z" fill="#5500ff"/>
<path d="M1362 474h7v7h-7z" fill="#5a00ff"/>
<path d="M1368 474h7v7h-7z" fill="#5f00ff"/>
<path d="M1374 474h7v7h-7z" fill="#6400ff"/>
<path d="M1380 474h7v7h-7z" fill="#6900ff"/>
<path d="M1386 474h7v7h-7z" fill="#6d00ff"/>
<path d="M1392 474h7v7h-7z" fill="#7200ff"/>
<path d="M1398 474h7v7h-7z" fill="#7700ff"/>
<path d="M1404 474h7v7h-7z" fill="#7c00ff"/>
<path d="M1410 474h7v7h-7z" fill="#8100ff"/>
<path d="M1416 474h7v7h-7z" fill="#8600ff"/>
<path d="M1422 474h7v7h-7z" fill="#8a00ff"/>
<path d="M1428 474h7v7h-7z" fill="#8f00ff"/>
<path d="M1218 480h31v7h-31z" fill="#0000ff"/>
<path d="M1248 480h7v7h-7z" fill="#0200ff"/>
<path d="M1254 480h7v7h-7z" fill="#0600ff"/>
<path d="M1260 480h7v7h-7z" fill="#0b00ff"/>
<path d="M1266 480h7v7h-7z" fill="#0f00ff"/>
<path d="M1272 480h7v7h-7z" fill="#1400ff"/>
<path d="M1278 480h7v7h-7z" fill="#1800ff"/>
<path d="M1284 480h7v7h-7z" fill="#1d00ff"/>
<path d="M1290 480h7v7h-7z" fill="#2100ff"/>
<path d="M1296 480h7v7h-7z" fill="#2600ff"/>
<path d="M1302 480h7v7h-7z" fill="#2a00ff"/>
<path d="M1308 480h7v7h-7z" fill="#2f00ff"/>
<path d="M1314 480h7v7h-7z" fill="#3300ff"/>
<path d="M1320 480h7v7h-7z" fill="#3800ff"/>
<path d="M1326 480h7v7h-7z" fill="#3c00ff"/>
<path d="M1332 480h7v7h-7z" fill="#4100ff"/>
<path d="M1338 480h7v7h-7z" fill="#4600ff"/>
<path d="M1344 480h7v7h-7z" fill="#4a00ff"/>
<path d="M1350 480h7v7h-7z" fill="#4f00ff"/>
<path d="M1356 480h7v7h-7z" fill="#5300ff"/>
<path d="M1362 480h7v7h-7z" fill="#5800ff"/>
<path d="M1368 480h7v7h-7z" fill="#5d00ff"/>
<path d="M1374 480h7v7h-7z" fill="#6100ff"/>
<path d="M1380 480h7v7h-7z" fill="#6600ff"/>
<path d="M1386 480h7v7h-7z" fill="#6b00ff"/>
<path d="M1392 480h7v7h-7z" fill="#7000ff"/>
<path d="M1398 480h7v7h-7z" fill="#7400ff"/>
<path d="M1404 480h7v7h-7z" fill="#7900ff"/>
<path d="M1410 480h7v7h-7z" fill="#7e00ff"/>
<path d="M1416 480h7v7h-7z" fill="#8300ff"/>
<path d="M1422 480h7v7h-7z" fill="#8700ff"/>
<path d="M1224 486h25v7h-25z" fill="#0000ff"/>
<path d="M1248 486h7v7h-7z" fill="#0100ff"/>
<path d="M1254 486h7v7h-7z" fill="#0600ff"/>
<path d="M1260 486h7v7h-7z" fill="#0a00ff"/>
<path d="M1266 486h7v7h-7z" fill="#0e00ff"/>
<path d="M1272 486h7v7h-7z" fill="#1300ff"/>
<path d="M1278 486h7v7h-7z" fill="#1700ff"/>
<path d="M1284 486h7v7h-7z" fill="#1c00ff"/>
<path d="M1290 486h7v7h-7z" fill="#2000ff"/>
<path d="M1296 486h7v7h-7z" fill="#2400ff"/>
<path d="M1302 486h7v7h-7z" fill="#2900ff"/>
<path d="M1308 486h7v7h-7z" fill="#2d00ff"/>
<path d="M1314 486h7v7h-7z" fill="#3200ff"/>
<path d="M1320 486h7v7h-7z" fill="#3600ff"/>
<path d="M1326 486h7v7h-7z" fill="#3b00ff"/>
<path d="M1332 486h7v7h-7z" fill="#3f00ff"/>
<path d="M1338 486h7v7h-7z" fill="#4400ff"/>
<path d="M1344 486h7v7h-7z" fill="#4800ff"/>
<path d="M1350 486h7v7h-7z" fill="#4d00ff"/>
<path d="M1356 486h7v7h-7z" fill="#5100ff"/>
<path d="M1362 486h7v7h-7z" fill="#5600ff"/>
<path d="M1368 486h7v7h-7z" fill="#5b00ff"/>
<path d="M1374 486h7v7h-7z" fill="#5f00ff"/>
<path d="M1380 486h7v7h-7z" fill="#6400ff"/>
<path d="M1386 486h7v7h-7z" fill="#6900ff"/>
<path d="M1392 486h7v7h-7z" fill="#6d00ff"/>
<path d="M1398 486h7v7h-7z" fill="#7200ff"/>
<path d="M1404 486h7v7h-7z" fill="#7700ff"/>
<path d="M1410 486h7v7h-7z" fill="#7b00ff"/>
<path d="M1416 486h7v7h-7z" fill="#8000ff"/>
<path d="M1230 492h19v7h-19z" fill="#0000ff"/>
<path d="M1248 492h7v7h-7z" fill="#0100ff"/>
<path d="M1254 492h7v7h-7z" fill="#0500ff"/>
<path d="M1260 492h7v7h-7z" fill="#0900ff"/>
<path d="M1266 492h7v7h-7z" fill="#0e00ff"/>
<path d="M1272 492h7v7h-7z" fill="#1200ff"/>
<path d="M1278 492h7v7h-7z" fill="#1600ff"/>
<path d="M1284 492h7v7h-7z" fill="#1b00ff"/>
<path d="M1290 492h7v7h-7z" fill="#1f00ff"/>
<path d="M1296 492h7v7h-7z" fill="#2300ff"/>
<path d="M1302 492h7v7h-7z" fill="#2800ff"/>
<path d="M1308 492h7v7h-7z" fill="#2c00ff"/>
<path d="M1314 492h7v7h-7z" fill="#3000ff"/>
<path d="M1320 492h7v7h-7z" fill="#3500ff"/>
<path d="M1326 492h7v7h-7z" fill="#3900ff"/>
<path d="M1332 492h7v7h-7z" fill="#3e00ff"/>
<path d="M1338 492h7v7h-7z" fill="#4200ff"/>
<path d="M1344 492h7v7h-7z" fill="#4700ff"/>
<path d="M1350 492h7v7h-7z" fill="#4b00ff"/>
<path d="M1356 492h7v7h-7z" fill="#5000ff"/>
<path d="M1362 492h7v7h-7z" fill="#5400ff"/>
<path d="M1368 492h7v7h-7z" fill="#5900ff"/>
<path d="M1374 492h7v7h-7z" fill="#5d00ff"/>
<path d="M1380 492h7v7h-7z" fill="#6200ff"/>
<path d="M1386 492h7v7h-7z" fill="#6600ff"/>
<path d="M1392 492h7v7h-7z" fill="#6b00ff"/>
<path d="M1398 492h7v7h-7z" fill="#6f00ff"/>
<path d="M1404 492h7v7h-7z" fill="#7400ff"/>
<path d="M1410 492h7v7h-7z" fill="#7900ff"/>
<path d="M1230 498h25v7h-25z" fill="#0000ff"/>
<path d="M1254 498h7v7h-7z" fill="#0400ff"/>
<path d="M1260 498h7v7h-7z" fill="#0800ff"/>
<path d="M1266 498h7v7h-7z" fill="#0d00ff"/>
<path d="M1272 498h7v7h-7z" fill="#1100ff"/>
<path d="M1278 498h7v7h-7z" fill="#1500ff"/>
<path d="M1284 498h7v7h-7z" fill="#1900ff"/>
<path d="M1290 498h7v7h-7z" fill="#1e00ff"/>
<path d="M1296 498h7v7h-7z" fill="#2200ff"/>
<path d="M1302 498h7v7h-7z" fill="#2600ff"/>
<path d="M1308 498h7v7h-7z" fill="#2b00ff"/>
<path d="M1314 498h7v7h-7z" fill="#2f00ff"/>
<path d="M1320 498h7v7h-7z" fill="#3300ff"/>
<path d="M1326 498h7v7h-7z" fill="#3800ff"/>
<path d="M1332 498h7v7h-7z" fill="#3c00ff"/>
<path d="M1338 498h7v7h-7z" fill="#4000ff"/>
<path d="M1344 498h7v7h-7z" fill="#4500ff"/>
<path d="M1350 498h7v7h-7z" fill="#4900ff"/>
<path d="M1356 498h7v7h-7z" fill="#4e00ff"/>
<path d="M1362 498h7v7h-7z" fill="#5200ff"/>
<path d="M1368 498h7v7h-7z" fill="#5700ff"/>
<path d="M1374 498h7v7h-7z" fill="#5b00ff"/>
<path d="M1380 498h7v7h-7z" fill="#6000ff"/>
<path d="M1386 498h7v7h-7z" fill="#6400ff"/>
<path d="M1392 498h7v7h-7z" fill="#6900ff"/>
<path d="M1398 498h7v7h-7z" fill="#6d00ff"/>
<path d="M1404 498h7v7h-7z" fill="#7200ff"/>
<path d="M1236 504h19v7h-19z" fill="#0000ff"/>
<path d="M1254 504h7v7h-7z" fill="#0400ff"/>
<path d="M1260 504h7v7h-7z" fill="#0800ff"/>
<path d="M1266 504h7v7h-7z" fill="#0c00ff"/>
<path d="M1272 504h7v7h-7z" fill="#1000ff"/>
<path d="M1278 504h7v7h-7z" fill="#1400ff"/>
<path d="M1284 504h7v7h-7z" fill="#1800ff"/>
<path d="M1290 504h7v7h-7z" fill="#1d00ff"/>
<path d="M1296 504h7v7h-7z" fill="#2100ff"/>
<path d="M1302 504h7v7h-7z" fill="#2500ff"/>
<path d="M1308 504h7v7h-7z" fill="#2900ff"/>
<path d="M1314 504h7v7h-7z" fill="#2e00ff"/>
<path d="M1320 504h7v7h-7z" fill="#3200ff"/>
<path d="M1326 504h7v7h-7z" fill="#3600ff"/>
<path d="M1332 504h7v7h-7z" fill="#3b00ff"/>
<path d="M1338 504h7v7h-7z" fill="#3f00ff"/>
<path d="M1344 504h7v7h-7z" fill="#4300ff"/>
<path d="M1350 504h7v7h-7z" fill="#4800ff"/>
<path d="M1356 504h7v7h-7z" fill="#4c00ff"/>
<path d="M1362 504h7v7h-7z" fill="#5000ff"/>
<path d="M1368 504h7v7h-7z" fill="#5500ff"/>
<path d="M1374 504h7v7h-7z" fill="#5900ff"/>
<path d="M1380 504h7v7h-7z" fill="#5e00ff"/>
<path d="M1386 504h7v7h-7z" fill="#6200ff"/>
<path d="M1392 504h7v7h-7z" fill="#6600ff"/>
<path d="M1398 504h7v7h-7z" fill="#6b00ff"/>
<path d="M1242 510h13v7h-13z" fill="#0000ff"/>
<path d="M1254 510h7v7h-7z" fill="#0300ff"/>
<path d="M1260 510h7v7h-7z" fill="#0700ff"/>
<path d="M1266 510h7v7h-7z" fill="#0b00ff"/>
<path d="M1272 510h7v7h-7z" fill="#0f00ff"/>
<path d="M1278 510h7v7h-7z" fill="#1300ff"/>
<path d="M1284 510h7v7h-7z" fill="#1700ff"/>
<path d="M1290 510h7v7h-7z" fill="#1c00ff"/>
<path d="M1296 510h7v7h-7z" fill="#2000ff"/>
<path d="M1302 510h7v7h-7z" fill="#2400ff"/>
<path d="M1308 510h7v7h-7z" fill="#2800ff"/>
<path d="M1314 510h7v7h-7z" fill="#2c00ff"/>
<path d="M1320 510h7v7h-7z" fill="#3100ff"/>
<path d="M1326 510h7v7h-7z" fill="#3500ff"/>
<path d="M1332 510h7v7h-7z" fill="#3900ff"/>
<path d="M1338 510h7v7h-7z" fill="#3d00ff"/>
<path d="M1344 510h7v7h-7z" fill="#4200ff"/>
<path d="M1350 510h7v7h-7z" fill="#4600ff"/>
<path d="M1356 510h7v7h-7z" fill="#4a00ff"/>
<path d="M1362 510h7v7h-7z" fill="#4f00ff"/>
<path d="M1368 510h7v7h-7z" fill="#5300ff"/>
<path d="M1374 510h7v7h-7z" fill="#5700ff"/>
<path d="M1380 510h7v7h-7z" fill="#5c00ff"/>
<path d="M1386 510h7v7h-7z" fill="#6000ff"/>
<path d="M1392 510h7v7h-7z" fill="#6400ff"/>
<path d="M1248 516h7v7h-7z" fill="#0000ff"/>
<path d="M1254 516h7v7h-7z" fill="#0200ff"/>
<path d="M1260 516h7v7h-7z" fill="#0600ff"/>
<path d="M1266 516h7v7h-7z" fill="#0a00ff"/>
<path d="M1272 516h7v7h-7z" fill="#0e00ff"/>
<path d="M1278 516h7v7h-7z" fill="#1200ff"/>
<path d="M1284 516h7v7h-7z" fill="#1700ff"/>
<path d="M1290 516h7v7h-7z" fill="#1b00ff"/>
<path d="M1296 516h7v7h-7z" fill="#1f00ff"/>
<path d="M1302 516h7v7h-7z" fill="#2300ff"/>
<path d="M1308 516h7v7h-7z" fill="#2700ff"/>
<path d="M1314 516h7v7h-7z" fill="#2b00ff"/>
<path d="M1320 516h7v7h-7z" fill="#2f00ff"/>
<path d="M1326 516h7v7h-7z" fill="#3300ff"/>
<path d="M1332 516h7v7h-7z" fill="#3800ff"/>
<path d="M1338 516h7v7h-7z" fill="#3c00ff"/>
<path d="M1344 516h7v7h-7z" fill="#4000ff"/>
<path d="M1350 516h7v7h-7z" fill="#4400ff"/>
<path d="M1356 516h7v7h-7z" fill="#4900ff"/>
<path d="M1362 516h7v7h-7z" fill="#4d00ff"/>
<path d="M1368 516h7v7h-7z" fill="#5100ff"/>
<path d="M1374 516h7v7h-7z" fill="#5500ff"/>
<path d="M1380 516h7v7h-7z" fill="#5a00ff"/>
<path d="M1386 516h7v7h-7z" fill="#5e00ff"/>
<path d="M1260 522h7v7h-7z" fill="#0600ff"/>
<path d="M1266 522h7v7h-7z" fill="#0a00ff"/>
<path d="M1272 522h7v7h-7z" fill="#0e00ff"/>
<path d="M1278 522h7v7h-7z" fill="#1200ff"/>
<path d="M1284 522h7v7h-7z" fill="#1600ff"/>
<path d="M1290 522h7v7h-7z" fill="#1a00ff"/>
<path d="M1296 522h7v7h-7z" fill="#1e00ff"/>
<path d="M1302 522h7v7h-7z" fill="#2200ff"/>
<path d="M1308 522h7v7h-7z" fill="#2600ff"/>
<path d="M1314 522h7v7h-7z" fill="#2a00ff"/>
<path d="M1320 522h7v7h-7z" fill="#2e00ff"/>
<path d="M1326 522h7v7h-7z" fill="#3200ff"/>
<path d="M1332 522h7v7h-7z" fill="#3600ff"/>
<path d="M1338 522h7v7h-7z" fill="#3a00ff"/>
<path d="M1344 522h7v7h-7z" fill="#3f00ff"/>
<path d="M1350 522h7v7h-7z" fill="#4300ff"/>
<path d="M1356 522h7v7h-7z" fill="#4700ff"/>
<path d="M1362 522h7v7h-7z" fill="#4b00ff"/>
<path d="M1368 522h7v7h-7z" fill="#4f00ff"/>
<path d="M1374 522h7v7h-7z" fill="#5300ff"/>
<path d="M1380 522h7v7h-7z" fill="#5800ff"/>
<path d="M1266 528h7v7h-7z" fill="#0900ff"/>
<path d="M1272 528h7v7h-7z" fill="#0d00ff"/>
<path d="M1278 528h7v7h-7z" fill="#1100ff"/>
<path d="M1284 528h7v7h-7z" fill="#1500ff"/>
<path d="M1290 528h7v7h-7z" fill="#1900ff"/>
<path d="M1296 528h7v7h-7z" fill="#1d00ff"/>
<path d="M1302 528h7v7h-7z" fill="#2100ff"/>
<path d="M1308 528h7v7h-7z" fill="#2500ff"/>
<path d="M1314 528h7v7h-7z" fill="#2900ff"/>
<path d="M1320 528h7v7h-7z" fill="#2d00ff"/>
<path d="M1326 528h7v7h-7z" fill="#3100ff"/>
<path d="M1332 528h7v7h-7z" fill="#3500ff"/>
<path d="M1338 528h7v7h-7z" fill="#3900ff"/>
<path d="M1344 528h7v7h-7z" fill="#3d00ff"/>
<path d="M1350 528h7v7h-7z" fill="#4100ff"/>
<path d="M1356 528h7v7h-7z" fill="#4500ff"/>
<path d="M1362 528h7v7h-7z" fill="#4900ff"/>
<path d="M1368 528h7v7h-7z" fill="#4e00ff"/>
<path d="M1374 528h7v7h-7z" fill="#5200ff"/>
<path d="M1380 528h7v7h-7z" fill="#5600ff"/>
<path d="M1272 534h7v7h-7z" fill="#0c00ff"/>
<path d="M1278 534h7v7h-7z" fill="#1000ff"/>
<path d="M1284 534h7v7h-7z" fill="#1400ff"/>
<path d="M1290 534h7v7h-7z" fill="#1800ff"/>
<path d="M1296 534h7v7h-7z" fill="#1c00ff"/>
<path d="M1302 534h7v7h-7z" fill="#2000ff"/>
<path d="M1308 534h7v7h-7z" fill="#2400ff"/>
<path d="M1314 534h7v7h-7z" fill="#2800ff"/>
<path d="M1320 534h7v7h-7z" fill="#2c00ff"/>
<path d="M1326 534h7v7h-7z" fill="#3000ff"/>
<path d="M1332 534h7v7h-7z" fill="#3400ff"/>
<path d="M1338 534h7v7h-7z" fill="#3800ff"/>
<path d="M1344 534h7v7h-7z" fill="#3c00ff"/>
<path d="M1350 534h7v7h-7z" fill="#4000ff"/>
<path d="M1356 534h7v7h-7z" fill="#4400ff"/>
<path d="M1362 534h7v7h-7z" fill="#4800ff"/>
<path d="M1368 534h7v7h-7z" fill="#4c00ff"/>
<path d="M1374 534h7v7h-7z" fill="#5000ff"/>
<path d="M1278 540h7v7h-7z" fill="#0f00ff"/>
<path d="M1284 540h7v7h-7z" fill="#1300ff"/>
<path d="M1290 540h7v7h-7z" fill="#1700ff"/>
<path d="M1296 540h7v7h-7z" fill="#1b00ff"/>
<path d="M1302 540h7v7h-7z" fill="#1f00ff"/>
<path d="M1308 540h7v7h-7z" fill="#2300ff"/>
<path d="M1314 540h7v7h-7z" fill="#2600ff"/>
<path d="M1320 540h7v7h-7z" fill="#2a00ff"/>
<path d="M1326 540h7v7h-7z" fill="#2e00ff"/>
<path d="M1332 540h7v7h-7z" fill="#3200ff"/>
<path d="M1338 540h7v7h-7z" fill="#3600ff"/>
<path d="M1344 540h7v7h-7z" fill="#3a00ff"/>
<path d="M1350 540h7v7h-7z" fill="#3e00ff"/>
<path d="M1356 540h7v7h-7z" fill="#4200ff"/>
<path d="M1362 540h7v7h-7z" fill="#4600ff"/>
<path d="M1368 540h7v7h-7z" fill="#4a00ff"/>
<path d="M1284 546h7v7h-7z" fill="#1200ff"/>
<path d="M1290 546h7v7h-7z" fill="#1600ff"/>
<path d="M1296 546h7v7h-7z" fill="#1a00ff"/>
<path d="M1302 546h7v7h-7z" fill="#1e00ff"/>
<path d="M1308 546h7v7h-7z" fill="#2100ff"/>
<path d="M1314 546h7v7h-7z" fill="#2500ff"/>
<path d="M1320 546h7v7h-7z" fill="#2900ff"/>
<path d="M1326 546h7v7h-7z" fill="#2d00ff"/>
<path d="M1332 546h7v7h-7z" fill="#3100ff"/>
<path d="M1338 546h7v7h-7z" fill="#3500ff"/>
<path d="M1344 546h7v7h-7z" fill="#3900ff"/>
<path d="M1350 546h7v7h-7z" fill="#3d00ff"/>
<path d="M1356 546h7v7h-7z" fill="#4100ff"/>
<path d="M1362 546h7v7h-7z" fill="#4500ff"/>
<path d="M1290 552h7v7h-7z" fill="#1500ff"/>
<path d="M1296 552h7v7h-7z" fill="#1900ff"/>
<path d="M1302 552h7v7h-7z" fill="#1d00ff"/>
<path d="M1308 552h7v7h-7z" fill="#2000ff"/>
<path d="M1314 552h7v7h-7z" fill="#2400ff"/>
<path d="M1320 552h7v7h-7z" fill="#2800ff"/>
<path d="M1326 552h7v7h-7z" fill="#2c00ff"/>
<path d="M1332 552h7v7h-7z" fill="#3000ff"/>
<path d="M1338 552h7v7h-7z" fill="#3400ff"/>
<path d="M1344 552h7v7h-7z" fill="#3800ff"/>
<path d="M1350 552h7v7h-7z" fill="#3b00ff"/>
<path d="M1356 552h7v7h-7z" fill="#3f00ff"/>
<path d="M1296 558h7v7h-7z" fill="#1800ff"/>
<path d="M1302 558h7v7h-7z" fill="#1c00ff"/>
<path d="M1308 558h7v7h-7z" fill="#1f00ff"/>
<path d="M1314 558h7v7h-7z" fill="#2300ff"/>
<path d="M1320 558h7v7h-7z" fill="#2700ff"/>
<path d="M1326 558h7v7h-7z" fill="#2b00ff"/>
<path d="M1332 558h7v7h-7z" fill="#2f00ff"/>
<path d="M1338 558h7v7h-7z" fill="#3200ff"/>
<path d="M1344 558h7v7h-7z" fill="#3600ff"/>
<path d="M1350 558h7v7h-7z" fill="#3a00ff"/>
<path d="M1302 564h7v7h-7z" fill="#1b00ff"/>
<path d="M1308 564h7v7h-7z" fill="#1f00ff"/>
<path d="M1314 564h7v7h-7z" fill="#2200ff"/>
<path d="M1320 564h7v7h-7z" fill="#2600ff"/>
<path d="M1326 564h7v7h-7z" fill="#2a00ff"/>
<path d="M1332 564h7v7h-7z" fill="#2d00ff"/>
<path d="M1338 564h7v7h-7z" fill="#3100ff"/>
<path d="M1344 564h7v7h-7z" fill="#3500ff"/>
<path d="M1314 570h7v7h-7z" fill="#2100ff"/>
<path d="M1320 570h7v7h-7z" fill="#2500ff"/>
<path d="M1326 570h7v7h-7z" fill="#2900ff"/>
<path d="M1332 570h7v7h-7z" fill="#2c00ff"/>
<path d="M1338 570h7v7h-7z" fill="#3000ff"/>
<path d="M1320 576h7v7h-7z" fill="#2400ff"/>
<path d="M1326 576h7v7h-7z" fill="#2800ff"/>
<path d="M1332 576h7v7h-7z" fill="#2b00ff"/>
</g></g>
<path d="M1324.8 567.0L1326.8 567.9L1328.9 568.1L1330.5 567.6L1332.2 566.4L1729.5 140.0L1730.7 138.1L1731.0 135.9L1730.5 133.8L1729.1 132.1L1727.7 131.2L1726.2 130.7L1303.0 79.3L1207.9 68.0L1157.8 62.7L1136.5 61.0L1120.2 60.2L1104.5 60.0L1089.1 60.6L1080.4 61.6L1075.2 62.7L1072.3 63.7L1067.8 65.7L1065.5 67.0L1063.0 68.9L1061.0 70.8L1057.8 74.8L1056.2 77.4L1054.7 80.7L1053.6 83.8L1052.1 90.4L1051.6 94.4L1051.2 103.3L1051.9 113.9L1053.5 125.8L1056.3 139.6L1060.2 155.4L1065.6 173.6L1072.4 193.9L1080.6 216.1L1090.0 239.8L1100.9 264.8L1106.8 277.5L1113.1 290.4L1126.5 316.1L1140.5 341.6L1154.6 366.3L1168.5 389.7L1175.4 400.9L1188.7 421.4L1201.5 439.9L1213.5 456.4L1224.7 470.9L1239.5 488.5L1247.8 497.6L1255.5 505.4L1286.6 534.1L1319.3 562.7ZM1543.7 117.0L1186.7 81.6L1242.0 442.3Z" fill="#000" fill-opacity="0.4" fill-rule="evenodd"/>
</g></g>
<rect x="1049.7" y="48.0" width="658.9" height="534.7" fill="none" stroke="#808080" stroke-width="1.5"/>
<line x1="1049.70" y1="48.00" x2="1049.70" y2="582.70" stroke="#a8a8a8" stroke-width="1.6"/>
<line x1="1043.70" y1="582.70" x2="1708.60" y2="582.70" stroke="#a8a8a8" stroke-width="1.6"/>
<line x1="1049.70" y1="582.70" x2="1049.70" y2="590.20" stroke="#cfcfcf" stroke-width="1.6"/>
<text x="1049.7" y="606.8" font-size="14.5" fill="#d2d2d2" text-anchor="middle">0</text>
<line x1="1104.50" y1="582.70" x2="1104.50" y2="590.20" stroke="#cfcfcf" stroke-width="1.6"/>
<text x="1104.5" y="606.8" font-size="14.5" fill="#d2d2d2" text-anchor="middle" textLength="29.5" lengthAdjust="spacingAndGlyphs">0,05</text>
<line x1="1043.70" y1="538.60" x2="1049.70" y2="538.60" stroke="#cfcfcf" stroke-width="1.6"/>
<text x="1042.8" y="544.2" font-size="14.5" fill="#d2d2d2" text-anchor="end" textLength="29.5" lengthAdjust="spacingAndGlyphs">0,05</text>
<line x1="1159.30" y1="582.70" x2="1159.30" y2="590.20" stroke="#cfcfcf" stroke-width="1.6"/>
<text x="1159.3" y="606.8" font-size="14.5" fill="#d2d2d2" text-anchor="middle" textLength="20.8" lengthAdjust="spacingAndGlyphs">0,1</text>
<line x1="1043.70" y1="494.40" x2="1049.70" y2="494.40" stroke="#cfcfcf" stroke-width="1.6"/>
<text x="1042.8" y="500.0" font-size="14.5" fill="#d2d2d2" text-anchor="end" textLength="20.8" lengthAdjust="spacingAndGlyphs">0,1</text>
<line x1="1214.10" y1="582.70" x2="1214.10" y2="590.20" stroke="#cfcfcf" stroke-width="1.6"/>
<text x="1214.1" y="606.8" font-size="14.5" fill="#d2d2d2" text-anchor="middle" textLength="29.5" lengthAdjust="spacingAndGlyphs">0,15</text>
<line x1="1043.70" y1="450.00" x2="1049.70" y2="450.00" stroke="#cfcfcf" stroke-width="1.6"/>
<text x="1042.8" y="455.6" font-size="14.5" fill="#d2d2d2" text-anchor="end" textLength="29.5" lengthAdjust="spacingAndGlyphs">0,15</text>
<line x1="1268.90" y1="582.70" x2="1268.90" y2="590.20" stroke="#cfcfcf" stroke-width="1.6"/>
<text x="1268.9" y="606.8" font-size="14.5" fill="#d2d2d2" text-anchor="middle" textLength="20.8" lengthAdjust="spacingAndGlyphs">0,2</text>
<line x1="1043.70" y1="406.00" x2="1049.70" y2="406.00" stroke="#cfcfcf" stroke-width="1.6"/>
<text x="1042.8" y="411.6" font-size="14.5" fill="#d2d2d2" text-anchor="end" textLength="20.8" lengthAdjust="spacingAndGlyphs">0,2</text>
<line x1="1323.70" y1="582.70" x2="1323.70" y2="590.20" stroke="#cfcfcf" stroke-width="1.6"/>
<text x="1323.7" y="606.8" font-size="14.5" fill="#d2d2d2" text-anchor="middle" textLength="29.5" lengthAdjust="spacingAndGlyphs">0,25</text>
<line x1="1043.70" y1="361.60" x2="1049.70" y2="361.60" stroke="#cfcfcf" stroke-width="1.6"/>
<text x="1042.8" y="367.2" font-size="14.5" fill="#d2d2d2" text-anchor="end" textLength="29.5" lengthAdjust="spacingAndGlyphs">0,25</text>
<line x1="1378.50" y1="582.70" x2="1378.50" y2="590.20" stroke="#cfcfcf" stroke-width="1.6"/>
<text x="1378.5" y="606.8" font-size="14.5" fill="#d2d2d2" text-anchor="middle" textLength="20.8" lengthAdjust="spacingAndGlyphs">0,3</text>
<line x1="1043.70" y1="317.40" x2="1049.70" y2="317.40" stroke="#cfcfcf" stroke-width="1.6"/>
<text x="1042.8" y="323.0" font-size="14.5" fill="#d2d2d2" text-anchor="end" textLength="20.8" lengthAdjust="spacingAndGlyphs">0,3</text>
<line x1="1433.30" y1="582.70" x2="1433.30" y2="590.20" stroke="#cfcfcf" stroke-width="1.6"/>
<text x="1433.3" y="606.8" font-size="14.5" fill="#d2d2d2" text-anchor="middle" textLength="29.5" lengthAdjust="spacingAndGlyphs">0,35</text>
<line x1="1043.70" y1="273.00" x2="1049.70" y2="273.00" stroke="#cfcfcf" stroke-width="1.6"/>
<text x="1042.8" y="278.6" font-size="14.5" fill="#d2d2d2" text-anchor="end" textLength="29.5" lengthAdjust="spacingAndGlyphs">0,35</text>
<line x1="1488.10" y1="582.70" x2="1488.10" y2="590.20" stroke="#cfcfcf" stroke-width="1.6"/>
<text x="1488.1" y="606.8" font-size="14.5" fill="#d2d2d2" text-anchor="middle" textLength="20.8" lengthAdjust="spacingAndGlyphs">0,4</text>
<line x1="1043.70" y1="227.00" x2="1049.70" y2="227.00" stroke="#cfcfcf" stroke-width="1.6"/>
<text x="1042.8" y="232.6" font-size="14.5" fill="#d2d2d2" text-anchor="end" textLength="20.8" lengthAdjust="spacingAndGlyphs">0,4</text>
<line x1="1542.90" y1="582.70" x2="1542.90" y2="590.20" stroke="#cfcfcf" stroke-width="1.6"/>
<text x="1542.9" y="606.8" font-size="14.5" fill="#d2d2d2" text-anchor="middle" textLength="29.5" lengthAdjust="spacingAndGlyphs">0,45</text>
<line x1="1043.70" y1="182.40" x2="1049.70" y2="182.40" stroke="#cfcfcf" stroke-width="1.6"/>
<text x="1042.8" y="188.0" font-size="14.5" fill="#d2d2d2" text-anchor="end" textLength="29.5" lengthAdjust="spacingAndGlyphs">0,45</text>
<line x1="1597.70" y1="582.70" x2="1597.70" y2="590.20" stroke="#cfcfcf" stroke-width="1.6"/>
<text x="1597.7" y="606.8" font-size="14.5" fill="#d2d2d2" text-anchor="middle" textLength="20.8" lengthAdjust="spacingAndGlyphs">0,5</text>
<line x1="1043.70" y1="138.00" x2="1049.70" y2="138.00" stroke="#cfcfcf" stroke-width="1.6"/>
<text x="1042.8" y="143.6" font-size="14.5" fill="#d2d2d2" text-anchor="end" textLength="20.8" lengthAdjust="spacingAndGlyphs">0,5</text>
<line x1="1652.50" y1="582.70" x2="1652.50" y2="590.20" stroke="#cfcfcf" stroke-width="1.6"/>
<text x="1652.5" y="606.8" font-size="14.5" fill="#d2d2d2" text-anchor="middle" textLength="29.5" lengthAdjust="spacingAndGlyphs">0,55</text>
<line x1="1043.70" y1="93.00" x2="1049.70" y2="93.00" stroke="#cfcfcf" stroke-width="1.6"/>
<text x="1042.8" y="98.6" font-size="14.5" fill="#d2d2d2" text-anchor="end" textLength="29.5" lengthAdjust="spacingAndGlyphs">0,55</text>
<text x="1043.0" y="589.3" font-size="14.5" fill="#d2d2d2" text-anchor="end">0</text>
<text x="1318.3" y="41.9" font-size="14.5" fill="#d2d2d2" textLength="86.2" lengthAdjust="spacingAndGlyphs">CIE 1976 u'v'</text>
<rect x="1237.9" y="134.0" width="13.4" height="13.4" fill="#9bc29b" fill-opacity=".38" stroke="#fff" stroke-opacity=".8" stroke-width="1.6"/>
<rect x="1219.8" y="116.1" width="13.4" height="13.4" fill="#7cc27c" fill-opacity=".38" stroke="#fff" stroke-opacity=".8" stroke-width="1.6"/>
<rect x="1204.3" y="100.1" width="13.4" height="13.4" fill="#5fc25f" fill-opacity=".38" stroke="#fff" stroke-opacity=".8" stroke-width="1.6"/>
<rect x="1191.8" y="86.9" width="13.4" height="13.4" fill="#41c241" fill-opacity=".38" stroke="#fff" stroke-opacity=".8" stroke-width="1.6"/>
<rect x="1179.0" y="73.2" width="13.4" height="13.4" fill="#00a801" fill-opacity=".38" stroke="#fff" stroke-opacity=".8" stroke-width="1.6"/>
<rect x="1262.1" y="139.1" width="13.4" height="13.4" fill="#c2c2a6" fill-opacity=".38" stroke="#fff" stroke-opacity=".8" stroke-width="1.6"/>
<rect x="1263.4" y="121.6" width="13.4" height="13.4" fill="#c2c28a" fill-opacity=".38" stroke="#fff" stroke-opacity=".8" stroke-width="1.6"/>
<rect x="1264.5" y="107.1" width="13.4" height="13.4" fill="#c2c26e" fill-opacity=".38" stroke="#fff" stroke-opacity=".8" stroke-width="1.6"/>
<rect x="1265.1" y="93.8" width="13.4" height="13.4" fill="#c2c24d" fill-opacity=".38" stroke="#fff" stroke-opacity=".8" stroke-width="1.6"/>
<rect x="1265.9" y="81.8" width="13.4" height="13.4" fill="#c2c200" fill-opacity=".38" stroke="#fff" stroke-opacity=".8" stroke-width="1.6"/>
<rect x="1247.4" y="161.2" width="13.4" height="13.4" fill="#abc2c2" fill-opacity=".38" stroke="#fff" stroke-opacity=".8" stroke-width="1.6"/>
<rect x="1233.9" y="162.2" width="13.4" height="13.4" fill="#93c2c2" fill-opacity=".38" stroke="#fff" stroke-opacity=".8" stroke-width="1.6"/>
<rect x="1220.7" y="164.8" width="13.4" height="13.4" fill="#77c2c2" fill-opacity=".38" stroke="#fff" stroke-opacity=".8" stroke-width="1.6"/>
<rect x="1207.0" y="166.9" width="13.4" height="13.4" fill="#55c2c2" fill-opacity=".38" stroke="#fff" stroke-opacity=".8" stroke-width="1.6"/>
<rect x="1194.3" y="169.6" width="13.4" height="13.4" fill="#00c2c2" fill-opacity=".38" stroke="#fff" stroke-opacity=".8" stroke-width="1.6"/>
<rect x="1309.3" y="149.2" width="13.4" height="13.4" fill="#c28888" fill-opacity=".38" stroke="#fff" stroke-opacity=".8" stroke-width="1.6"/>
<rect x="1364.3" y="138.7" width="13.4" height="13.4" fill="#c26666" fill-opacity=".38" stroke="#fff" stroke-opacity=".8" stroke-width="1.6"/>
<rect x="1414.8" y="131.2" width="13.4" height="13.4" fill="#c24b4b" fill-opacity=".38" stroke="#fff" stroke-opacity=".8" stroke-width="1.6"/>
<rect x="1470.7" y="120.9" width="13.4" height="13.4" fill="#c23232" fill-opacity=".38" stroke="#fff" stroke-opacity=".8" stroke-width="1.6"/>
<rect x="1536.9" y="109.2" width="13.4" height="13.4" fill="#a80301" fill-opacity=".38" stroke="#fff" stroke-opacity=".8" stroke-width="1.6"/>
<rect x="1277.2" y="175.7" width="13.4" height="13.4" fill="#c2a6c2" fill-opacity=".38" stroke="#fff" stroke-opacity=".8" stroke-width="1.6"/>
<rect x="1296.8" y="196.3" width="13.4" height="13.4" fill="#c28bc2" fill-opacity=".38" stroke="#fff" stroke-opacity=".8" stroke-width="1.6"/>
<rect x="1316.3" y="218.8" width="13.4" height="13.4" fill="#c26ec2" fill-opacity=".38" stroke="#fff" stroke-opacity=".8" stroke-width="1.6"/>
<rect x="1343.3" y="246.4" width="13.4" height="13.4" fill="#c24dc2" fill-opacity=".38" stroke="#fff" stroke-opacity=".8" stroke-width="1.6"/>
<rect x="1376.9" y="281.0" width="13.4" height="13.4" fill="#c200c2" fill-opacity=".38" stroke="#fff" stroke-opacity=".8" stroke-width="1.6"/>
<rect x="1256.2" y="190.2" width="13.4" height="13.4" fill="#9b9bc2" fill-opacity=".38" stroke="#fff" stroke-opacity=".8" stroke-width="1.6"/>
<rect x="1253.4" y="230.2" width="13.4" height="13.4" fill="#7c7cc2" fill-opacity=".38" stroke="#fff" stroke-opacity=".8" stroke-width="1.6"/>
<rect x="1249.3" y="279.2" width="13.4" height="13.4" fill="#5f5fc2" fill-opacity=".38" stroke="#fff" stroke-opacity=".8" stroke-width="1.6"/>
<rect x="1243.8" y="341.9" width="13.4" height="13.4" fill="#4141c2" fill-opacity=".38" stroke="#fff" stroke-opacity=".8" stroke-width="1.6"/>
<rect x="1235.5" y="435.1" width="13.4" height="13.4" fill="#0000a8" fill-opacity=".38" stroke="#fff" stroke-opacity=".8" stroke-width="1.6"/>
<rect x="1259.0" y="158.2" width="13.4" height="13.4" fill="#fff" fill-opacity=".35" stroke="#000" stroke-width="1.5"/>
<circle cx="1244.8" cy="139.5" r="4.4" fill="#9bc29b" stroke="#000" stroke-width="1.25"/>
<circle cx="1227.8" cy="119.9" r="4.4" fill="#7cc27c" stroke="#000" stroke-width="1.25"/>
<circle cx="1214.1" cy="103.9" r="4.4" fill="#5fc25f" stroke="#000" stroke-width="1.25"/>
<circle cx="1201.0" cy="90.4" r="4.4" fill="#41c241" stroke="#000" stroke-width="1.25"/>
<circle cx="1189.9" cy="79.1" r="4.4" fill="#00a801" stroke="#000" stroke-width="1.25"/>
<circle cx="1266.9" cy="145.4" r="4.4" fill="#c2c2a6" stroke="#000" stroke-width="1.25"/>
<circle cx="1268.4" cy="127.7" r="4.4" fill="#c2c28a" stroke="#000" stroke-width="1.25"/>
<circle cx="1269.7" cy="112.9" r="4.4" fill="#c2c26e" stroke="#000" stroke-width="1.25"/>
<circle cx="1269.9" cy="99.7" r="4.4" fill="#c2c24d" stroke="#000" stroke-width="1.25"/>
<circle cx="1271.2" cy="87.5" r="4.4" fill="#c2c200" stroke="#000" stroke-width="1.25"/>
<circle cx="1252.8" cy="166.0" r="4.4" fill="#abc2c2" stroke="#000" stroke-width="1.25"/>
<circle cx="1239.8" cy="167.5" r="4.4" fill="#93c2c2" stroke="#000" stroke-width="1.25"/>
<circle cx="1229.0" cy="170.4" r="4.4" fill="#77c2c2" stroke="#000" stroke-width="1.25"/>
<circle cx="1216.2" cy="171.9" r="4.4" fill="#55c2c2" stroke="#000" stroke-width="1.25"/>
<circle cx="1204.8" cy="173.4" r="4.4" fill="#00c2c2" stroke="#000" stroke-width="1.25"/>
<circle cx="1315.0" cy="156.0" r="4.4" fill="#c28888" stroke="#000" stroke-width="1.25"/>
<circle cx="1369.7" cy="147.0" r="4.4" fill="#c26666" stroke="#000" stroke-width="1.25"/>
<circle cx="1422.9" cy="137.9" r="4.4" fill="#c24b4b" stroke="#000" stroke-width="1.25"/>
<circle cx="1484.4" cy="126.2" r="4.4" fill="#c23232" stroke="#000" stroke-width="1.25"/>
<circle cx="1543.0" cy="116.1" r="4.4" fill="#a80301" stroke="#000" stroke-width="1.25"/>
<circle cx="1282.7" cy="182.6" r="4.4" fill="#c2a6c2" stroke="#000" stroke-width="1.25"/>
<circle cx="1302.1" cy="204.8" r="4.4" fill="#c28bc2" stroke="#000" stroke-width="1.25"/>
<circle cx="1322.0" cy="226.8" r="4.4" fill="#c26ec2" stroke="#000" stroke-width="1.25"/>
<circle cx="1350.0" cy="257.9" r="4.4" fill="#c24dc2" stroke="#000" stroke-width="1.25"/>
<circle cx="1381.1" cy="293.3" r="4.4" fill="#c200c2" stroke="#000" stroke-width="1.25"/>
<circle cx="1263.6" cy="196.9" r="4.4" fill="#9b9bc2" stroke="#000" stroke-width="1.25"/>
<circle cx="1261.4" cy="238.9" r="4.4" fill="#7c7cc2" stroke="#000" stroke-width="1.25"/>
<circle cx="1256.8" cy="286.2" r="4.4" fill="#5f5fc2" stroke="#000" stroke-width="1.25"/>
<circle cx="1252.8" cy="349.9" r="4.4" fill="#4141c2" stroke="#000" stroke-width="1.25"/>
<circle cx="1247.2" cy="434.8" r="4.4" fill="#0000a8" stroke="#000" stroke-width="1.25"/>
<circle cx="1266.9" cy="163.3" r="4.3" fill="#fff" stroke="#8a8a8a" stroke-width=".9"/>
<rect x="1480.00" y="414.40" width="225.00" height="163.20" fill="#232323"/>
<rect x="1483.20" y="417.60" width="218.60" height="156.80" fill="url(#insg)"/>
<path d="M1483.2 433.8L1701.8 558V417.6H1483.2Z" fill="#000" fill-opacity=".42"/>
<rect x="1483.2" y="417.6" width="218.6" height="156.8" fill="none" stroke="#8c8c7c" stroke-width="1.8"/>
<rect x="1585.2" y="488.6" width="13.8" height="13.8" fill="none" stroke="#fff" stroke-opacity=".88" stroke-width="1.5"/>
<circle cx="1598.9" cy="478.1" r="4.3" fill="#b4b400" stroke="#000" stroke-width="1.1"/>
<text x="53.0" y="656.2" font-size="30.2" fill="#f0f0f0" textLength="239.6" lengthAdjust="spacingAndGlyphs">Avg dE2000: 0,86</text>
<text x="48.6" y="699.4" font-size="30.2" fill="#f0f0f0" textLength="248.4" lengthAdjust="spacingAndGlyphs">Max dE2000: 1,38</text>
<text x="16.2" y="751.4" font-size="30.2" fill="#f0f0f0" textLength="223.9" lengthAdjust="spacingAndGlyphs">Current Reading</text>
<text x="16.2" y="791.2" font-size="24" fill="#f0f0f0" textLength="104.6" lengthAdjust="spacingAndGlyphs">x: 0,4209</text>
<text x="176.8" y="791.2" font-size="24" fill="#f0f0f0" textLength="105.5" lengthAdjust="spacingAndGlyphs">y: 0,5111</text>
<text x="16.2" y="835.4" font-size="24" fill="#f0f0f0" textLength="97.2" lengthAdjust="spacingAndGlyphs">fL: 59,52</text>
<text x="16.2" y="872.2" font-size="24" fill="#f0f0f0" textLength="162.6" lengthAdjust="spacingAndGlyphs">cd/m²: 203,93</text>
<rect x="364.50" y="664.40" width="260.90" height="195.20" fill="#252525"/>
<line x1="364.50" y1="697.70" x2="625.40" y2="697.70" stroke="#808080" stroke-width="1.5"/>
<line x1="364.50" y1="763.30" x2="625.40" y2="763.30" stroke="#808080" stroke-width="1.5"/>
<line x1="364.50" y1="827.70" x2="625.40" y2="827.70" stroke="#808080" stroke-width="1.5"/>
<rect x="364.5" y="664.4" width="260.9" height="195.2" fill="none" stroke="#808080" stroke-width="1.5"/>
<line x1="358.70" y1="697.70" x2="364.50" y2="697.70" stroke="#cfcfcf" stroke-width="1.6"/>
<text x="358.2" y="703.5" font-size="15.3" fill="#d2d2d2" text-anchor="end">20</text>
<line x1="358.70" y1="763.30" x2="364.50" y2="763.30" stroke="#cfcfcf" stroke-width="1.6"/>
<text x="358.2" y="769.1" font-size="15.3" fill="#d2d2d2" text-anchor="end">0</text>
<line x1="358.70" y1="827.70" x2="364.50" y2="827.70" stroke="#cfcfcf" stroke-width="1.6"/>
<text x="358.2" y="833.5" font-size="15.3" fill="#d2d2d2" text-anchor="end">-20</text>
<line x1="364.50" y1="859.60" x2="364.50" y2="867.10" stroke="#cfcfcf" stroke-width="1.6"/>
<line x1="625.40" y1="859.60" x2="625.40" y2="867.10" stroke="#cfcfcf" stroke-width="1.6"/>
<text x="495.3" y="878.2" font-size="15" fill="#d2d2d2" text-anchor="middle" textLength="37.5" lengthAdjust="spacingAndGlyphs">100%</text>
<text x="439.0" y="657.6" font-size="14.6" fill="#d2d2d2" textLength="84.8" lengthAdjust="spacingAndGlyphs">RGB Balance</text>
<rect x="391.2" y="763.4" width="69.6" height="2.4" fill="#000" stroke="#000" stroke-width="1"/>
<rect x="461.2" y="758.3" width="69.4" height="5" fill="#1f7a1f" stroke="#000" stroke-width="1.1"/>
<rect x="531.2" y="763.4" width="69.6" height="76.2" fill="url(#bbar)" stroke="#000" stroke-width="1.1"/>
<rect x="648.00" y="631.40" width="743.00" height="33.20" fill="url(#hdrg)"/>
<rect x="648.00" y="631.40" width="20.00" height="33.20" fill="#000"/>
<text x="839.8" y="654.8" font-size="17.2" fill="#f4f4f4" textLength="41.0" lengthAdjust="spacingAndGlyphs">20%</text>
<text x="951.4" y="654.8" font-size="17.2" fill="#f4f4f4" textLength="41.0" lengthAdjust="spacingAndGlyphs">40%</text>
<text x="1062.8" y="654.8" font-size="17.2" fill="#f4f4f4" textLength="41.0" lengthAdjust="spacingAndGlyphs">60%</text>
<text x="1174.4" y="654.8" font-size="17.2" fill="#f4f4f4" textLength="41.0" lengthAdjust="spacingAndGlyphs">80%</text>
<text x="1286.6" y="654.8" font-size="17.2" fill="#f4f4f4" textLength="52.9" lengthAdjust="spacingAndGlyphs">100%</text>
<rect x="668.00" y="664.60" width="723.00" height="31.60" fill="#424242"/>
<rect x="648.00" y="664.60" width="20.00" height="31.60" fill="url(#rowh)"/>
<text x="675.0" y="687.6" font-size="17.5" fill="#f2f2f2" textLength="81.0" lengthAdjust="spacingAndGlyphs">x: CIE31</text>
<text x="839.8" y="687.6" font-size="17.5" fill="#f2f2f2" textLength="68.8" lengthAdjust="spacingAndGlyphs">0,3345</text>
<text x="951.4" y="687.6" font-size="17.5" fill="#f2f2f2" textLength="68.8" lengthAdjust="spacingAndGlyphs">0,3564</text>
<text x="1062.8" y="687.6" font-size="17.5" fill="#f2f2f2" textLength="68.8" lengthAdjust="spacingAndGlyphs">0,3778</text>
<text x="1174.4" y="687.6" font-size="17.5" fill="#f2f2f2" textLength="68.8" lengthAdjust="spacingAndGlyphs">0,3987</text>
<text x="1286.6" y="687.6" font-size="17.5" fill="#f2f2f2" textLength="68.8" lengthAdjust="spacingAndGlyphs">0,4209</text>
<rect x="668.00" y="695.90" width="723.00" height="31.30" fill="#848484"/>
<rect x="648.00" y="695.90" width="20.00" height="31.30" fill="url(#rowh)"/>
<text x="675.0" y="718.8" font-size="17.5" fill="#ececec" textLength="81.0" lengthAdjust="spacingAndGlyphs">y: CIE31</text>
<text x="839.8" y="718.8" font-size="17.5" fill="#ececec" textLength="68.8" lengthAdjust="spacingAndGlyphs">0,3666</text>
<text x="951.4" y="718.8" font-size="17.5" fill="#ececec" textLength="68.8" lengthAdjust="spacingAndGlyphs">0,4037</text>
<text x="1062.8" y="718.8" font-size="17.5" fill="#ececec" textLength="68.8" lengthAdjust="spacingAndGlyphs">0,4398</text>
<text x="1174.4" y="718.8" font-size="17.5" fill="#ececec" textLength="68.8" lengthAdjust="spacingAndGlyphs">0,4751</text>
<text x="1286.6" y="718.8" font-size="17.5" fill="#ececec" textLength="68.8" lengthAdjust="spacingAndGlyphs">0,5111</text>
<rect x="668.00" y="726.90" width="723.00" height="31.50" fill="#424242"/>
<rect x="648.00" y="726.90" width="20.00" height="31.50" fill="url(#rowh)"/>
<text x="675.0" y="749.9" font-size="17.5" fill="#f2f2f2" textLength="10.5" lengthAdjust="spacingAndGlyphs">Y</text>
<text x="839.8" y="749.9" font-size="17.5" fill="#f2f2f2" textLength="95.8" lengthAdjust="spacingAndGlyphs">217,5462</text>
<text x="951.4" y="749.9" font-size="17.5" fill="#f2f2f2" textLength="95.8" lengthAdjust="spacingAndGlyphs">213,3320</text>
<text x="1062.8" y="749.9" font-size="17.5" fill="#f2f2f2" textLength="95.8" lengthAdjust="spacingAndGlyphs">209,9788</text>
<text x="1174.4" y="749.9" font-size="17.5" fill="#f2f2f2" textLength="95.8" lengthAdjust="spacingAndGlyphs">207,1969</text>
<text x="1286.6" y="749.9" font-size="17.5" fill="#f2f2f2" textLength="95.8" lengthAdjust="spacingAndGlyphs">203,9267</text>
<rect x="668.00" y="758.10" width="723.00" height="31.00" fill="#848484"/>
<rect x="648.00" y="758.10" width="20.00" height="31.00" fill="url(#rowh)"/>
<text x="675.0" y="780.9" font-size="17.5" fill="#ececec" textLength="147.0" lengthAdjust="spacingAndGlyphs">Target x:CIE31</text>
<text x="839.8" y="780.9" font-size="17.5" fill="#ececec" textLength="68.8" lengthAdjust="spacingAndGlyphs">0,3344</text>
<text x="951.4" y="780.9" font-size="17.5" fill="#ececec" textLength="68.8" lengthAdjust="spacingAndGlyphs">0,3564</text>
<text x="1062.8" y="780.9" font-size="17.5" fill="#ececec" textLength="68.8" lengthAdjust="spacingAndGlyphs">0,3773</text>
<text x="1174.4" y="780.9" font-size="17.5" fill="#ececec" textLength="68.8" lengthAdjust="spacingAndGlyphs">0,3969</text>
<text x="1286.6" y="780.9" font-size="17.5" fill="#ececec" textLength="68.8" lengthAdjust="spacingAndGlyphs">0,4193</text>
<rect x="668.00" y="788.80" width="723.00" height="31.30" fill="#424242"/>
<rect x="648.00" y="788.80" width="20.00" height="31.30" fill="url(#rowh)"/>
<text x="675.0" y="811.7" font-size="17.5" fill="#f2f2f2" textLength="147.0" lengthAdjust="spacingAndGlyphs">Target y:CIE31</text>
<text x="839.8" y="811.7" font-size="17.5" fill="#f2f2f2" textLength="68.8" lengthAdjust="spacingAndGlyphs">0,3648</text>
<text x="951.4" y="811.7" font-size="17.5" fill="#f2f2f2" textLength="68.8" lengthAdjust="spacingAndGlyphs">0,4013</text>
<text x="1062.8" y="811.7" font-size="17.5" fill="#f2f2f2" textLength="68.8" lengthAdjust="spacingAndGlyphs">0,4358</text>
<text x="1174.4" y="811.7" font-size="17.5" fill="#f2f2f2" textLength="68.8" lengthAdjust="spacingAndGlyphs">0,4682</text>
<text x="1286.6" y="811.7" font-size="17.5" fill="#f2f2f2" textLength="68.8" lengthAdjust="spacingAndGlyphs">0,5053</text>
<rect x="668.00" y="819.80" width="723.00" height="30.70" fill="#848484"/>
<rect x="648.00" y="819.80" width="20.00" height="30.70" fill="url(#rowh)"/>
<text x="675.0" y="842.4" font-size="17.5" fill="#ececec" textLength="85.8" lengthAdjust="spacingAndGlyphs">Target Y</text>
<text x="839.8" y="842.4" font-size="17.5" fill="#ececec" textLength="95.8" lengthAdjust="spacingAndGlyphs">213,7508</text>
<text x="951.4" y="842.4" font-size="17.5" fill="#ececec" textLength="95.8" lengthAdjust="spacingAndGlyphs">209,9989</text>
<text x="1062.8" y="842.4" font-size="17.5" fill="#ececec" textLength="95.8" lengthAdjust="spacingAndGlyphs">207,1160</text>
<text x="1174.4" y="842.4" font-size="17.5" fill="#ececec" textLength="95.8" lengthAdjust="spacingAndGlyphs">204,8536</text>
<text x="1286.6" y="842.4" font-size="17.5" fill="#ececec" textLength="95.8" lengthAdjust="spacingAndGlyphs">202,6663</text>
<rect x="668.00" y="850.20" width="723.00" height="30.80" fill="#424242"/>
<rect x="648.00" y="850.20" width="20.00" height="30.80" fill="url(#rowh)"/>
<text x="675.0" y="872.9" font-size="17.5" fill="#f2f2f2" textLength="86.4" lengthAdjust="spacingAndGlyphs">ΔE 2000</text>
<text x="839.8" y="872.9" font-size="17.5" fill="#f2f2f2" textLength="68.8" lengthAdjust="spacingAndGlyphs">0,7863</text>
<text x="951.4" y="872.9" font-size="17.5" fill="#f2f2f2" textLength="68.8" lengthAdjust="spacingAndGlyphs">0,7034</text>
<text x="1062.8" y="872.9" font-size="17.5" fill="#f2f2f2" textLength="68.8" lengthAdjust="spacingAndGlyphs">0,7558</text>
<text x="1174.4" y="872.9" font-size="17.5" fill="#f2f2f2" textLength="68.8" lengthAdjust="spacingAndGlyphs">0,9509</text>
<text x="1286.6" y="872.9" font-size="17.5" fill="#f2f2f2" textLength="68.8" lengthAdjust="spacingAndGlyphs">0,7614</text>
<rect x="0.00" y="888.00" width="1718.00" height="62.00" fill="url(#botg)"/>
<line x1="0.00" y1="888.30" x2="1718.00" y2="888.30" stroke="#2a2a2a" stroke-width="1"/>
<path d="M1.3 950V893.2Q1.3 889.2 5.3 889.2H42.3Q46.3 889.2 46.3 893.2V950Z" fill="url(#tabg)"/>
<circle cx="23.4" cy="897.4" r="7.2" fill="#7c7c7c"/>
<path d="M19 899.6L23.4 894.8L27.8 899.6Z" fill="#222"/>
<rect x="6.2" y="914.8" width="35.2" height="30.4" rx="3" fill="#ffff14" stroke="#8c8c3c" stroke-width="1"/>
<path d="M51.8 950V893.7Q51.8 889.2 56.3 889.2H197.5Q202.0 889.2 202.0 893.7V950Z" fill="url(#tabg)"/>
<rect x="58.0" y="894.6" width="139" height="35.4" rx="3" fill="#c1c3a5" stroke="#7f7f6c" stroke-width="1.2"/>
<text x="127.2" y="945.0" font-size="10.2" fill="#2c2c2c" text-anchor="middle" textLength="20.5" lengthAdjust="spacingAndGlyphs">20%</text>
<path d="M204.0 950V893.7Q204.0 889.2 208.5 889.2H349.7Q354.2 889.2 354.2 893.7V950Z" fill="url(#tabg)"/>
<rect x="210.2" y="894.6" width="139" height="35.4" rx="3" fill="#c2c287" stroke="#7f7f6c" stroke-width="1.2"/>
<text x="279.4" y="945.0" font-size="10.2" fill="#2c2c2c" text-anchor="middle" textLength="20.5" lengthAdjust="spacingAndGlyphs">40%</text>
<path d="M356.2 950V893.7Q356.2 889.2 360.7 889.2H501.9Q506.4 889.2 506.4 893.7V950Z" fill="url(#tabg)"/>
<rect x="362.4" y="894.6" width="139" height="35.4" rx="3" fill="#c1c16c" stroke="#7f7f6c" stroke-width="1.2"/>
<text x="431.6" y="945.0" font-size="10.2" fill="#2c2c2c" text-anchor="middle" textLength="20.5" lengthAdjust="spacingAndGlyphs">60%</text>
<path d="M507.6 950V893.7Q507.6 889.2 512.1 889.2H653.3Q657.8 889.2 657.8 893.7V950Z" fill="url(#tabg)"/>
<rect x="513.8" y="894.6" width="139" height="35.4" rx="3" fill="#c1c14d" stroke="#7f7f6c" stroke-width="1.2"/>
<text x="583.0" y="945.0" font-size="10.2" fill="#2c2c2c" text-anchor="middle" textLength="20.5" lengthAdjust="spacingAndGlyphs">80%</text>
<path d="M659.8 950V893.7Q659.8 889.2 664.3 889.2H805.5Q810.0 889.2 810.0 893.7V950Z" fill="#1b1b1b"/>
<rect x="666.0" y="894.6" width="139" height="35.4" rx="3" fill="#c8c400" stroke="#2a2a10" stroke-width="1.2"/>
<text x="735.2" y="945.0" font-size="10.3" fill="#fff" text-anchor="middle" textLength="26.5" lengthAdjust="spacingAndGlyphs" font-weight="bold">100%</text>
<path d="M1397.2 906.6V893.2Q1397.2 889.2 1401.2 889.2H1440.8Q1444.8 889.2 1444.8 893.2V906.6Z" fill="url(#btng)"/>
<circle cx="1421.2" cy="897.8" r="7.2" fill="url(#circg)"/>
<path d="M1417 899.6L1421.2 895.2L1425.4 899.6Z" fill="#333"/>
<rect x="1397.20" y="907.80" width="47.60" height="42.20" fill="url(#btng3)"/>
<rect x="1406.8" y="914.8" width="28.2" height="27.6" rx="3.5" fill="#aeaeae" stroke="#2a2a2a" stroke-width="2.6"/>
<rect x="1408.1" y="929" width="25.6" height="12.1" fill="#7c7c7c"/>
<rect x="1413.8" y="922.0" width="14" height="7" fill="#1e1e1e"/>
<rect x="1413.8" y="929" width="14" height="6.4" fill="#000"/>
<rect x="1446.40" y="889.20" width="45.60" height="29.40" fill="url(#btng)"/>
<circle cx="1469.2" cy="903.8" r="10.2" fill="url(#circg)" fill-opacity=".95"/>
<rect x="1492.40" y="889.20" width="44.70" height="29.40" fill="url(#btng)"/>
<circle cx="1514.8" cy="903.8" r="10.2" fill="url(#circg)" fill-opacity=".95"/>
<rect x="1537.50" y="889.20" width="44.60" height="29.40" fill="url(#btng)"/>
<circle cx="1559.8" cy="903.8" r="10.2" fill="url(#circg)" fill-opacity=".95"/>
<rect x="1582.50" y="889.20" width="44.50" height="29.40" fill="url(#btng)"/>
<circle cx="1604.8" cy="903.8" r="10.2" fill="url(#circg)" fill-opacity=".95"/>
<rect x="1627.40" y="889.20" width="44.40" height="29.40" fill="url(#btng)"/>
<circle cx="1649.6" cy="903.8" r="10.2" fill="url(#circg)" fill-opacity=".95"/>
<rect x="1464.6" y="899.4" width="9" height="9" fill="#303030"/>
<path d="M1511.2 898.4V909.6L1520.8 904Z" fill="#303030"/>
<path d="M1556.8 898.6H1554.2V909H1556.8M1562.8 898.6H1565.3999999999999V909H1562.8" fill="none" stroke="#303030" stroke-width="1.7"/>
<rect x="1557.3999999999999" y="903" width="1.6" height="1.6" fill="#303030"/><rect x="1560.6" y="903" width="1.6" height="1.6" fill="#303030"/>
<path d="M1604.7 903.9C1602.7 900.8 1598.1000000000001 900.6 1598.1000000000001 903.9S1602.7 907 1604.7 903.9S1611.3 900.6 1611.3 903.9S1606.7 907 1604.7 903.9Z" fill="none" stroke="#303030" stroke-width="1.6"/>
<path d="M1644.0 903A5.8 5.8 0 0 1 1653.8 899.8" fill="none" stroke="#303030" stroke-width="2"/>
<path d="M1651.8 898.4L1656.1999999999998 897.8L1655.6 902.6Z" fill="#303030"/>
<path d="M1655.1999999999998 905A5.8 5.8 0 0 1 1645.3999999999999 908.2" fill="none" stroke="#303030" stroke-width="2"/>
<path d="M1647.3999999999999 909.6L1643.0 910.2L1643.6 905.4Z" fill="#303030"/>
<rect x="1672.40" y="889.20" width="45.60" height="29.40" fill="url(#darkb)"/>
<circle cx="1694.8" cy="905.2" r="10" fill="#252525"/>
<path d="M1446.4 950V923.2Q1446.4 920.2 1449.4 920.2H1578.8Q1581.8 920.2 1581.8 923.2V950Z" fill="url(#btng2)"/>
<path d="M1582.8 950V923.2Q1582.8 920.2 1585.8 920.2H1715Q1718 920.2 1718 923.2V950Z" fill="url(#btng2)"/>
<circle cx="1477" cy="935" r="9.8" fill="url(#circg)" fill-opacity=".95"/>
<circle cx="1690.4" cy="935" r="9.8" fill="url(#circg)" fill-opacity=".95"/>
<path d="M1475.6 930.6L1471.2 935L1475.6 939.4M1481.2 930.6L1476.8 935L1481.2 939.4" fill="none" stroke="#303030" stroke-width="1.5"/>
<path d="M1686.4 930.6L1690.8 935L1686.4 939.4M1692 930.6L1696.4 935L1692 939.4" fill="none" stroke="#303030" stroke-width="1.5"/>
<text x="1504.0" y="942.4" font-size="20.6" fill="#333" textLength="49.5" lengthAdjust="spacingAndGlyphs" stroke="#333" stroke-width=".5">Back</text>
<text x="1610.2" y="942.4" font-size="20.6" fill="#333" textLength="51.5" lengthAdjust="spacingAndGlyphs" stroke="#333" stroke-width=".5">Next</text>
</svg>
</body></html>
